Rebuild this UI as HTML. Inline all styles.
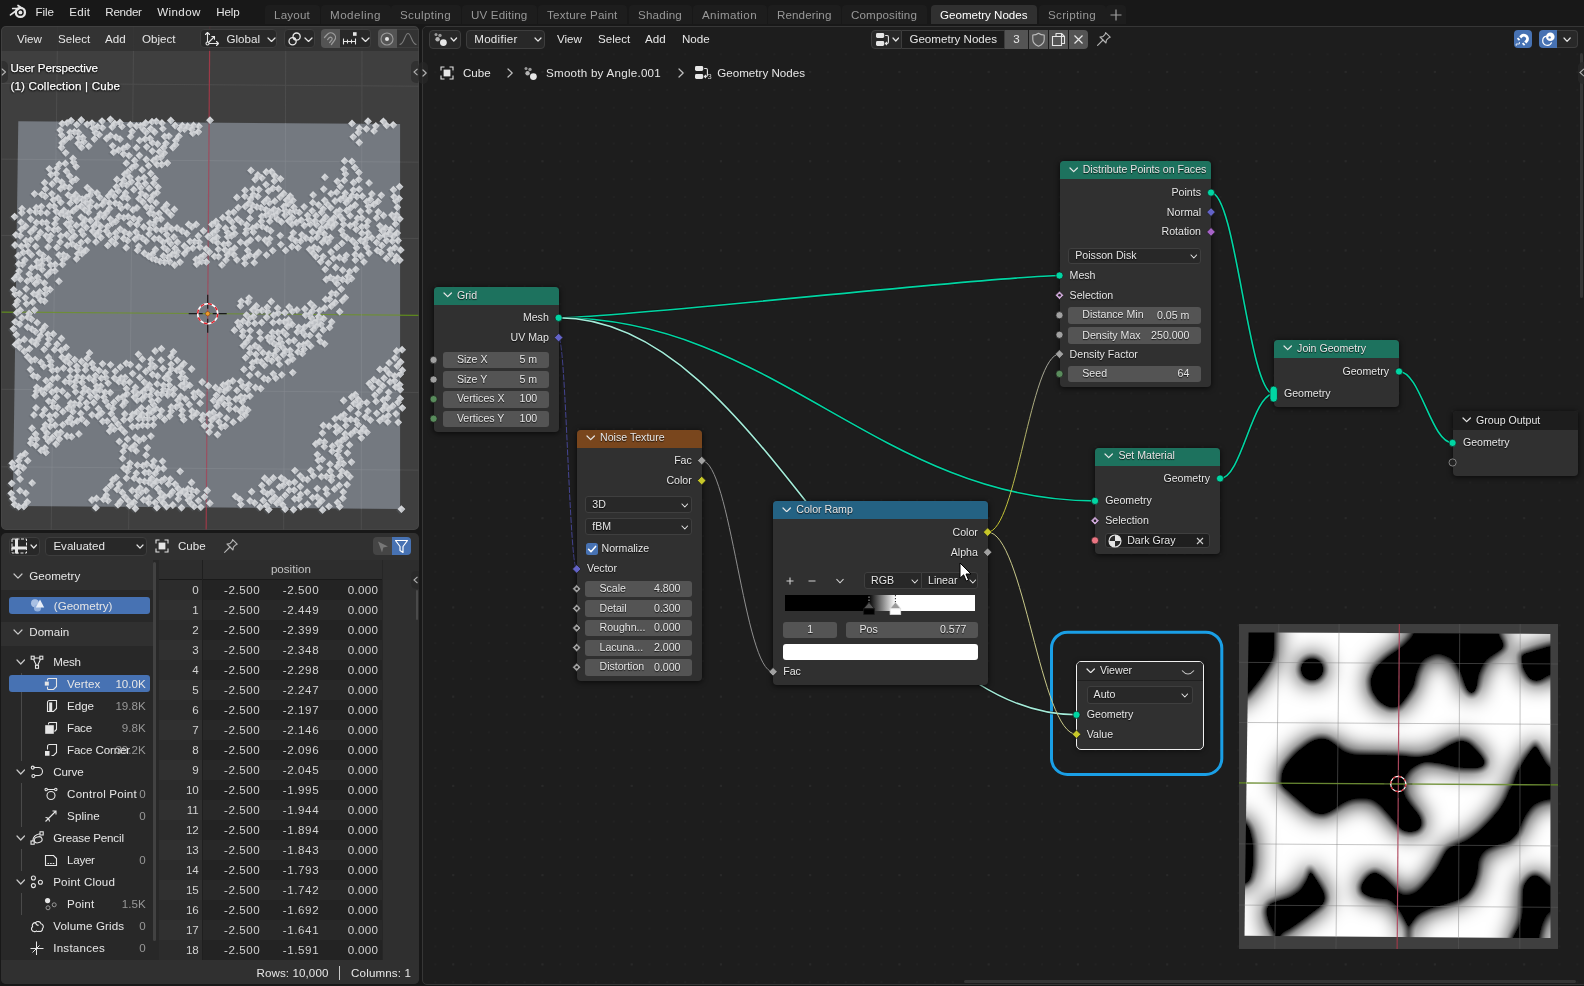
<!DOCTYPE html>
<html><head><meta charset="utf-8"><title>Blender</title>
<style>
html,body{margin:0;padding:0;background:#181818;overflow:hidden}
body{width:1584px;height:986px;position:relative;will-change:transform;font-family:"Liberation Sans",sans-serif;font-size:11.6px;color:#e6e6e6}
div,svg,span{position:absolute;box-sizing:border-box}
.t{white-space:nowrap;line-height:14px;height:14px}
.n{font-size:10.6px}
.sh{text-shadow:0 1px 1px rgba(0,0,0,.8)}
.ov{text-shadow:0 0 2px #000,0 1px 2px #000;-webkit-text-stroke:.25px #fff}
.area{overflow:hidden;border-radius:5px}
.btn{background:#282828;border:1px solid #3d3d3d;border-radius:4px}
.node{background:#303030;border-radius:4px;box-shadow:0 1px 5px 1px rgba(0,0,0,.55)}
.nh{left:0;top:0;right:0;height:18px;border-radius:4px 4px 0 0}
.fld{background:#545454;border-radius:3px}
.dd{background:#282828;border:1px solid #3f3f3f;border-radius:3px}
</style></head><body>
<svg style="left:8px;top:3px" width="20" height="17" viewBox="8 3 20 17">
<path d="M10.5 14.9L18.8 8.8M12.7 8.5H19.6M18 5.5L22 8.3" fill="none" stroke="#e6e6e6" stroke-width="1.7" stroke-linecap="round"/>
<circle cx="20.4" cy="12.4" r="4.55" fill="none" stroke="#e6e6e6" stroke-width="2.3"/>
<circle cx="20.4" cy="12.4" r="1.9" fill="#e6e6e6"/></svg>
<div class="t " style="top:4.8px;left:35.5px;letter-spacing:-0.05px;">File</div>
<div class="t " style="top:4.8px;left:69.3px;letter-spacing:0.20px;">Edit</div>
<div class="t " style="top:4.8px;left:105.3px;letter-spacing:-0.27px;">Render</div>
<div class="t " style="top:4.8px;left:157.2px;letter-spacing:0.39px;">Window</div>
<div class="t " style="top:4.8px;left:216.3px;letter-spacing:-0.16px;">Help</div>
<div style="left:264.5px;top:5px;width:55.0px;height:19px;background:#1d1d1d;border-radius:4px 4px 0 0"></div>
<div class="t " style="top:7.8px;left:274.0px;color:#989898;letter-spacing:0.20px;">Layout</div>
<div style="left:320.5px;top:5px;width:70.0px;height:19px;background:#1d1d1d;border-radius:4px 4px 0 0"></div>
<div class="t " style="top:7.8px;left:330.0px;color:#989898;letter-spacing:0.49px;">Modeling</div>
<div style="left:390.5px;top:5px;width:70.0px;height:19px;background:#1d1d1d;border-radius:4px 4px 0 0"></div>
<div class="t " style="top:7.8px;left:400.0px;color:#989898;letter-spacing:0.36px;">Sculpting</div>
<div style="left:461.5px;top:5px;width:75.5px;height:19px;background:#1d1d1d;border-radius:4px 4px 0 0"></div>
<div class="t " style="top:7.8px;left:471.0px;color:#989898;letter-spacing:0.17px;">UV Editing</div>
<div style="left:537.5px;top:5px;width:89.5px;height:19px;background:#1d1d1d;border-radius:4px 4px 0 0"></div>
<div class="t " style="top:7.8px;left:547.0px;color:#989898;letter-spacing:0.22px;">Texture Paint</div>
<div style="left:628.5px;top:5px;width:63.0px;height:19px;background:#1d1d1d;border-radius:4px 4px 0 0"></div>
<div class="t " style="top:7.8px;left:638.0px;color:#989898;letter-spacing:0.20px;">Shading</div>
<div style="left:692.5px;top:5px;width:74.0px;height:19px;background:#1d1d1d;border-radius:4px 4px 0 0"></div>
<div class="t " style="top:7.8px;left:702.0px;color:#989898;letter-spacing:0.38px;">Animation</div>
<div style="left:767.5px;top:5px;width:73.5px;height:19px;background:#1d1d1d;border-radius:4px 4px 0 0"></div>
<div class="t " style="top:7.8px;left:777.0px;color:#989898;letter-spacing:0.11px;">Rendering</div>
<div style="left:841.5px;top:5px;width:85.0px;height:19px;background:#1d1d1d;border-radius:4px 4px 0 0"></div>
<div class="t " style="top:7.8px;left:851.0px;color:#989898;letter-spacing:0.14px;">Compositing</div>
<div style="left:930.5px;top:5px;width:106.5px;height:19px;background:#303030;border-radius:4px 4px 0 0"></div>
<div class="t " style="top:7.8px;left:940.0px;color:#ffffff;letter-spacing:-0.01px;">Geometry Nodes</div>
<div style="left:1038.5px;top:5px;width:67.0px;height:19px;background:#1d1d1d;border-radius:4px 4px 0 0"></div>
<div class="t " style="top:7.8px;left:1048.0px;color:#989898;letter-spacing:0.32px;">Scripting</div>
<div style="left:1106px;top:5px;width:20px;height:19px;background:#1d1d1d;border-radius:4px 4px 0 0"></div>
<svg style="left:1109px;top:8px" width="14" height="14"><path d="M7 1.5V12.5M1.5 7H12.5" stroke="#a0a0a0" stroke-width="1.2" fill="none"/></svg>
<div class="area" style="left:1px;top:26px;width:418px;height:504px;background:#3f3f3f">
<svg style="left:0;top:0" width="418" height="504" viewBox="1 26 418 504"><line x1="-91.9" y1="-105.0" x2="-106.1" y2="661.9" stroke="#4d4d4d" stroke-width="1" opacity="1"/><line x1="-207.8" y1="6.5" x2="628.5" y2="12.2" stroke="#4d4d4d" stroke-width="1" opacity="1"/><line x1="-16.3" y1="-104.5" x2="-28.4" y2="662.5" stroke="#4d4d4d" stroke-width="1" opacity="1"/><line x1="-209.5" y1="81.8" x2="629.1" y2="87.7" stroke="#4d4d4d" stroke-width="1" opacity="1"/><line x1="59.3" y1="-104.0" x2="49.5" y2="663.2" stroke="#4d4d4d" stroke-width="1" opacity="1"/><line x1="-211.3" y1="157.6" x2="629.8" y2="163.7" stroke="#4d4d4d" stroke-width="1" opacity="1"/><line x1="135.0" y1="-103.5" x2="127.3" y2="663.8" stroke="#4d4d4d" stroke-width="1" opacity="1"/><line x1="-213.0" y1="233.8" x2="630.4" y2="240.0" stroke="#4d4d4d" stroke-width="1" opacity="1"/><line x1="286.4" y1="-102.5" x2="283.1" y2="665.1" stroke="#4d4d4d" stroke-width="1" opacity="1"/><line x1="-216.5" y1="387.6" x2="631.7" y2="394.1" stroke="#4d4d4d" stroke-width="1" opacity="1"/><line x1="362.2" y1="-102.0" x2="361.1" y2="665.8" stroke="#4d4d4d" stroke-width="1" opacity="1"/><line x1="-218.3" y1="465.1" x2="632.4" y2="471.8" stroke="#4d4d4d" stroke-width="1" opacity="1"/><line x1="437.9" y1="-101.5" x2="439.0" y2="666.5" stroke="#4d4d4d" stroke-width="1" opacity="1"/><line x1="-220.1" y1="543.1" x2="633.1" y2="550.0" stroke="#4d4d4d" stroke-width="1" opacity="1"/><line x1="513.7" y1="-101.0" x2="517.0" y2="667.1" stroke="#4d4d4d" stroke-width="1" opacity="1"/><line x1="-221.9" y1="621.5" x2="633.8" y2="628.6" stroke="#4d4d4d" stroke-width="1" opacity="1"/><line x1="210.7" y1="-103.0" x2="205.2" y2="664.5" stroke="#9c3a48" stroke-width="1.2" opacity="1"/><line x1="-214.8" y1="310.5" x2="631.1" y2="316.9" stroke="#5f8a1e" stroke-width="1.2" opacity="1"/><polygon points="18.3,121.3 400.1,124.0 400.1,509.0 12.8,505.9" fill="#747980"/><line x1="56.4" y1="121.6" x2="51.5" y2="506.2" stroke="#8a8e94" stroke-width="1" opacity="0.45"/><line x1="17.8" y1="159.3" x2="400.1" y2="162.0" stroke="#8a8e94" stroke-width="1" opacity="0.45"/><line x1="132.8" y1="122.1" x2="128.9" y2="506.8" stroke="#8a8e94" stroke-width="1" opacity="0.45"/><line x1="16.7" y1="235.5" x2="400.1" y2="238.3" stroke="#8a8e94" stroke-width="1" opacity="0.45"/><line x1="209.1" y1="122.6" x2="206.3" y2="507.4" stroke="#a04a5c" stroke-width="1.2" opacity="0.9"/><line x1="15.6" y1="312.2" x2="400.1" y2="315.1" stroke="#6e8f35" stroke-width="1.2" opacity="0.95"/><line x1="285.5" y1="123.2" x2="283.8" y2="508.1" stroke="#8a8e94" stroke-width="1" opacity="0.45"/><line x1="14.5" y1="389.4" x2="400.1" y2="392.3" stroke="#8a8e94" stroke-width="1" opacity="0.45"/><line x1="361.8" y1="123.7" x2="361.3" y2="508.7" stroke="#8a8e94" stroke-width="1" opacity="0.45"/><line x1="13.4" y1="466.9" x2="400.1" y2="470.0" stroke="#8a8e94" stroke-width="1" opacity="0.45"/><path d="M108.9 116.6l3.9 3.9l-3.9 3.9l-3.9 -3.9zM381.9 118.6l3.9 3.9l-3.9 3.9l-3.9 -3.9zM366.5 118.5l3.9 3.9l-3.9 3.9l-3.9 -3.9zM208.5 117.5l3.9 3.9l-3.9 3.9l-3.9 -3.9zM169.3 117.7l3.9 3.9l-3.9 3.9l-3.9 -3.9zM79.8 117.3l3.9 3.9l-3.9 3.9l-3.9 -3.9zM69.6 117.9l3.9 3.9l-3.9 3.9l-3.9 -3.9zM154.8 118.6l3.9 3.9l-3.9 3.9l-3.9 -3.9zM100.5 118.4l3.9 3.9l-3.9 3.9l-3.9 -3.9zM150.5 119.0l3.9 3.9l-3.9 3.9l-3.9 -3.9zM350.5 120.7l3.9 3.9l-3.9 3.9l-3.9 -3.9zM118.4 119.8l3.9 3.9l-3.9 3.9l-3.9 -3.9zM160.4 120.2l3.9 3.9l-3.9 3.9l-3.9 -3.9zM144.1 120.3l3.9 3.9l-3.9 3.9l-3.9 -3.9zM391.7 122.1l3.9 3.9l-3.9 3.9l-3.9 -3.9zM65.6 120.1l3.9 3.9l-3.9 3.9l-3.9 -3.9zM90.5 120.4l3.9 3.9l-3.9 3.9l-3.9 -3.9zM385.1 122.6l3.9 3.9l-3.9 3.9l-3.9 -3.9zM113.2 120.8l3.9 3.9l-3.9 3.9l-3.9 -3.9zM374.3 123.1l3.9 3.9l-3.9 3.9l-3.9 -3.9zM60.7 120.9l3.9 3.9l-3.9 3.9l-3.9 -3.9zM85.7 121.6l3.9 3.9l-3.9 3.9l-3.9 -3.9zM128.8 122.0l3.9 3.9l-3.9 3.9l-3.9 -3.9zM192.0 122.7l3.9 3.9l-3.9 3.9l-3.9 -3.9zM75.3 122.0l3.9 3.9l-3.9 3.9l-3.9 -3.9zM180.8 122.9l3.9 3.9l-3.9 3.9l-3.9 -3.9zM173.6 122.8l3.9 3.9l-3.9 3.9l-3.9 -3.9zM186.1 123.4l3.9 3.9l-3.9 3.9l-3.9 -3.9zM197.4 123.5l3.9 3.9l-3.9 3.9l-3.9 -3.9zM135.0 123.3l3.9 3.9l-3.9 3.9l-3.9 -3.9zM139.2 123.3l3.9 3.9l-3.9 3.9l-3.9 -3.9zM120.4 123.7l3.9 3.9l-3.9 3.9l-3.9 -3.9zM357.8 125.5l3.9 3.9l-3.9 3.9l-3.9 -3.9zM96.1 123.9l3.9 3.9l-3.9 3.9l-3.9 -3.9zM110.6 124.3l3.9 3.9l-3.9 3.9l-3.9 -3.9zM364.9 126.1l3.9 3.9l-3.9 3.9l-3.9 -3.9zM100.9 124.9l3.9 3.9l-3.9 3.9l-3.9 -3.9zM161.3 126.0l3.9 3.9l-3.9 3.9l-3.9 -3.9zM149.1 125.9l3.9 3.9l-3.9 3.9l-3.9 -3.9zM91.7 125.5l3.9 3.9l-3.9 3.9l-3.9 -3.9zM178.8 126.3l3.9 3.9l-3.9 3.9l-3.9 -3.9zM190.1 126.5l3.9 3.9l-3.9 3.9l-3.9 -3.9zM183.0 126.5l3.9 3.9l-3.9 3.9l-3.9 -3.9zM372.5 128.2l3.9 3.9l-3.9 3.9l-3.9 -3.9zM141.9 126.9l3.9 3.9l-3.9 3.9l-3.9 -3.9zM58.7 127.4l3.9 3.9l-3.9 3.9l-3.9 -3.9zM356.9 129.8l3.9 3.9l-3.9 3.9l-3.9 -3.9zM196.8 129.1l3.9 3.9l-3.9 3.9l-3.9 -3.9zM130.6 128.8l3.9 3.9l-3.9 3.9l-3.9 -3.9zM153.1 129.3l3.9 3.9l-3.9 3.9l-3.9 -3.9zM72.9 129.1l3.9 3.9l-3.9 3.9l-3.9 -3.9zM144.6 129.6l3.9 3.9l-3.9 3.9l-3.9 -3.9zM93.8 129.8l3.9 3.9l-3.9 3.9l-3.9 -3.9zM68.5 129.6l3.9 3.9l-3.9 3.9l-3.9 -3.9zM191.3 130.5l3.9 3.9l-3.9 3.9l-3.9 -3.9zM76.9 129.8l3.9 3.9l-3.9 3.9l-3.9 -3.9zM97.6 132.0l3.9 3.9l-3.9 3.9l-3.9 -3.9zM351.7 134.1l3.9 3.9l-3.9 3.9l-3.9 -3.9zM60.0 132.4l3.9 3.9l-3.9 3.9l-3.9 -3.9zM108.9 132.9l3.9 3.9l-3.9 3.9l-3.9 -3.9zM167.4 133.4l3.9 3.9l-3.9 3.9l-3.9 -3.9zM177.4 133.5l3.9 3.9l-3.9 3.9l-3.9 -3.9zM163.1 133.8l3.9 3.9l-3.9 3.9l-3.9 -3.9zM129.0 133.7l3.9 3.9l-3.9 3.9l-3.9 -3.9zM114.5 134.4l3.9 3.9l-3.9 3.9l-3.9 -3.9zM68.7 134.2l3.9 3.9l-3.9 3.9l-3.9 -3.9zM81.3 134.8l3.9 3.9l-3.9 3.9l-3.9 -3.9zM77.3 135.1l3.9 3.9l-3.9 3.9l-3.9 -3.9zM148.5 135.7l3.9 3.9l-3.9 3.9l-3.9 -3.9zM105.1 135.8l3.9 3.9l-3.9 3.9l-3.9 -3.9zM143.6 136.4l3.9 3.9l-3.9 3.9l-3.9 -3.9zM118.5 136.4l3.9 3.9l-3.9 3.9l-3.9 -3.9zM92.9 136.3l3.9 3.9l-3.9 3.9l-3.9 -3.9zM174.2 137.8l3.9 3.9l-3.9 3.9l-3.9 -3.9zM138.1 137.7l3.9 3.9l-3.9 3.9l-3.9 -3.9zM63.9 137.2l3.9 3.9l-3.9 3.9l-3.9 -3.9zM357.7 139.8l3.9 3.9l-3.9 3.9l-3.9 -3.9zM82.4 139.0l3.9 3.9l-3.9 3.9l-3.9 -3.9zM150.9 140.0l3.9 3.9l-3.9 3.9l-3.9 -3.9zM164.4 140.6l3.9 3.9l-3.9 3.9l-3.9 -3.9zM60.6 140.3l3.9 3.9l-3.9 3.9l-3.9 -3.9zM156.1 141.3l3.9 3.9l-3.9 3.9l-3.9 -3.9zM76.6 140.8l3.9 3.9l-3.9 3.9l-3.9 -3.9zM174.1 142.0l3.9 3.9l-3.9 3.9l-3.9 -3.9zM111.0 143.1l3.9 3.9l-3.9 3.9l-3.9 -3.9zM125.8 143.6l3.9 3.9l-3.9 3.9l-3.9 -3.9zM87.2 143.4l3.9 3.9l-3.9 3.9l-3.9 -3.9zM145.2 144.1l3.9 3.9l-3.9 3.9l-3.9 -3.9zM171.4 144.8l3.9 3.9l-3.9 3.9l-3.9 -3.9zM162.1 144.8l3.9 3.9l-3.9 3.9l-3.9 -3.9zM135.0 145.0l3.9 3.9l-3.9 3.9l-3.9 -3.9zM79.9 144.7l3.9 3.9l-3.9 3.9l-3.9 -3.9zM60.0 144.8l3.9 3.9l-3.9 3.9l-3.9 -3.9zM121.9 145.7l3.9 3.9l-3.9 3.9l-3.9 -3.9zM117.1 147.3l3.9 3.9l-3.9 3.9l-3.9 -3.9zM150.8 148.4l3.9 3.9l-3.9 3.9l-3.9 -3.9zM157.9 149.0l3.9 3.9l-3.9 3.9l-3.9 -3.9zM112.1 149.5l3.9 3.9l-3.9 3.9l-3.9 -3.9zM162.7 150.3l3.9 3.9l-3.9 3.9l-3.9 -3.9zM64.2 150.1l3.9 3.9l-3.9 3.9l-3.9 -3.9zM122.0 151.3l3.9 3.9l-3.9 3.9l-3.9 -3.9zM137.9 152.8l3.9 3.9l-3.9 3.9l-3.9 -3.9zM127.5 152.9l3.9 3.9l-3.9 3.9l-3.9 -3.9zM159.2 154.7l3.9 3.9l-3.9 3.9l-3.9 -3.9zM155.4 155.4l3.9 3.9l-3.9 3.9l-3.9 -3.9zM71.5 155.7l3.9 3.9l-3.9 3.9l-3.9 -3.9zM144.7 156.8l3.9 3.9l-3.9 3.9l-3.9 -3.9zM343.1 158.2l3.9 3.9l-3.9 3.9l-3.9 -3.9zM350.4 158.7l3.9 3.9l-3.9 3.9l-3.9 -3.9zM152.0 157.7l3.9 3.9l-3.9 3.9l-3.9 -3.9zM133.2 157.7l3.9 3.9l-3.9 3.9l-3.9 -3.9zM72.1 159.5l3.9 3.9l-3.9 3.9l-3.9 -3.9zM165.8 160.3l3.9 3.9l-3.9 3.9l-3.9 -3.9zM124.8 160.5l3.9 3.9l-3.9 3.9l-3.9 -3.9zM63.8 160.7l3.9 3.9l-3.9 3.9l-3.9 -3.9zM160.2 161.8l3.9 3.9l-3.9 3.9l-3.9 -3.9zM155.6 161.9l3.9 3.9l-3.9 3.9l-3.9 -3.9zM57.7 161.6l3.9 3.9l-3.9 3.9l-3.9 -3.9zM134.0 162.8l3.9 3.9l-3.9 3.9l-3.9 -3.9zM147.1 163.0l3.9 3.9l-3.9 3.9l-3.9 -3.9zM353.3 164.7l3.9 3.9l-3.9 3.9l-3.9 -3.9zM74.6 163.9l3.9 3.9l-3.9 3.9l-3.9 -3.9zM130.5 165.0l3.9 3.9l-3.9 3.9l-3.9 -3.9zM342.5 166.6l3.9 3.9l-3.9 3.9l-3.9 -3.9zM55.6 165.5l3.9 3.9l-3.9 3.9l-3.9 -3.9zM47.8 166.1l3.9 3.9l-3.9 3.9l-3.9 -3.9zM249.5 167.7l3.9 3.9l-3.9 3.9l-3.9 -3.9zM140.6 167.2l3.9 3.9l-3.9 3.9l-3.9 -3.9zM270.0 168.9l3.9 3.9l-3.9 3.9l-3.9 -3.9zM357.3 169.7l3.9 3.9l-3.9 3.9l-3.9 -3.9zM264.7 169.3l3.9 3.9l-3.9 3.9l-3.9 -3.9zM64.9 168.5l3.9 3.9l-3.9 3.9l-3.9 -3.9zM126.3 169.2l3.9 3.9l-3.9 3.9l-3.9 -3.9zM343.9 171.2l3.9 3.9l-3.9 3.9l-3.9 -3.9zM149.2 170.8l3.9 3.9l-3.9 3.9l-3.9 -3.9zM256.3 172.2l3.9 3.9l-3.9 3.9l-3.9 -3.9zM123.2 171.5l3.9 3.9l-3.9 3.9l-3.9 -3.9zM54.7 171.0l3.9 3.9l-3.9 3.9l-3.9 -3.9zM273.4 173.3l3.9 3.9l-3.9 3.9l-3.9 -3.9zM49.5 171.8l3.9 3.9l-3.9 3.9l-3.9 -3.9zM323.4 174.5l3.9 3.9l-3.9 3.9l-3.9 -3.9zM68.1 173.3l3.9 3.9l-3.9 3.9l-3.9 -3.9zM260.4 175.1l3.9 3.9l-3.9 3.9l-3.9 -3.9zM128.3 174.4l3.9 3.9l-3.9 3.9l-3.9 -3.9zM142.6 175.0l3.9 3.9l-3.9 3.9l-3.9 -3.9zM279.0 176.1l3.9 3.9l-3.9 3.9l-3.9 -3.9zM357.3 176.9l3.9 3.9l-3.9 3.9l-3.9 -3.9zM153.4 175.8l3.9 3.9l-3.9 3.9l-3.9 -3.9zM253.6 176.8l3.9 3.9l-3.9 3.9l-3.9 -3.9zM342.8 177.7l3.9 3.9l-3.9 3.9l-3.9 -3.9zM137.0 176.4l3.9 3.9l-3.9 3.9l-3.9 -3.9zM115.4 176.8l3.9 3.9l-3.9 3.9l-3.9 -3.9zM74.5 176.6l3.9 3.9l-3.9 3.9l-3.9 -3.9zM335.7 178.6l3.9 3.9l-3.9 3.9l-3.9 -3.9zM54.9 176.8l3.9 3.9l-3.9 3.9l-3.9 -3.9zM272.8 178.4l3.9 3.9l-3.9 3.9l-3.9 -3.9zM121.9 177.6l3.9 3.9l-3.9 3.9l-3.9 -3.9zM352.0 179.8l3.9 3.9l-3.9 3.9l-3.9 -3.9zM367.5 180.2l3.9 3.9l-3.9 3.9l-3.9 -3.9zM129.8 178.9l3.9 3.9l-3.9 3.9l-3.9 -3.9zM70.8 178.6l3.9 3.9l-3.9 3.9l-3.9 -3.9zM60.2 179.4l3.9 3.9l-3.9 3.9l-3.9 -3.9zM152.2 180.4l3.9 3.9l-3.9 3.9l-3.9 -3.9zM43.1 180.0l3.9 3.9l-3.9 3.9l-3.9 -3.9zM143.8 180.8l3.9 3.9l-3.9 3.9l-3.9 -3.9zM264.5 181.9l3.9 3.9l-3.9 3.9l-3.9 -3.9zM136.5 181.5l3.9 3.9l-3.9 3.9l-3.9 -3.9zM120.7 181.6l3.9 3.9l-3.9 3.9l-3.9 -3.9zM50.6 181.3l3.9 3.9l-3.9 3.9l-3.9 -3.9zM398.0 184.0l3.9 3.9l-3.9 3.9l-3.9 -3.9zM338.8 183.9l3.9 3.9l-3.9 3.9l-3.9 -3.9zM125.3 182.4l3.9 3.9l-3.9 3.9l-3.9 -3.9zM114.8 184.1l3.9 3.9l-3.9 3.9l-3.9 -3.9zM63.1 183.8l3.9 3.9l-3.9 3.9l-3.9 -3.9zM156.4 184.5l3.9 3.9l-3.9 3.9l-3.9 -3.9zM271.4 185.6l3.9 3.9l-3.9 3.9l-3.9 -3.9zM357.7 186.5l3.9 3.9l-3.9 3.9l-3.9 -3.9zM276.9 185.9l3.9 3.9l-3.9 3.9l-3.9 -3.9zM322.2 186.4l3.9 3.9l-3.9 3.9l-3.9 -3.9zM139.3 185.1l3.9 3.9l-3.9 3.9l-3.9 -3.9zM67.7 184.7l3.9 3.9l-3.9 3.9l-3.9 -3.9zM391.9 187.0l3.9 3.9l-3.9 3.9l-3.9 -3.9zM85.8 184.9l3.9 3.9l-3.9 3.9l-3.9 -3.9zM251.5 186.4l3.9 3.9l-3.9 3.9l-3.9 -3.9zM147.7 185.7l3.9 3.9l-3.9 3.9l-3.9 -3.9zM351.8 187.4l3.9 3.9l-3.9 3.9l-3.9 -3.9zM257.4 186.8l3.9 3.9l-3.9 3.9l-3.9 -3.9zM59.0 186.0l3.9 3.9l-3.9 3.9l-3.9 -3.9zM43.9 186.2l3.9 3.9l-3.9 3.9l-3.9 -3.9zM243.5 187.7l3.9 3.9l-3.9 3.9l-3.9 -3.9zM132.3 187.0l3.9 3.9l-3.9 3.9l-3.9 -3.9zM267.0 188.4l3.9 3.9l-3.9 3.9l-3.9 -3.9zM335.2 189.5l3.9 3.9l-3.9 3.9l-3.9 -3.9zM116.8 188.2l3.9 3.9l-3.9 3.9l-3.9 -3.9zM89.7 188.6l3.9 3.9l-3.9 3.9l-3.9 -3.9zM343.7 190.5l3.9 3.9l-3.9 3.9l-3.9 -3.9zM329.5 191.0l3.9 3.9l-3.9 3.9l-3.9 -3.9zM370.3 191.3l3.9 3.9l-3.9 3.9l-3.9 -3.9zM282.2 190.7l3.9 3.9l-3.9 3.9l-3.9 -3.9zM110.1 189.5l3.9 3.9l-3.9 3.9l-3.9 -3.9zM155.5 190.0l3.9 3.9l-3.9 3.9l-3.9 -3.9zM124.0 190.2l3.9 3.9l-3.9 3.9l-3.9 -3.9zM139.7 190.4l3.9 3.9l-3.9 3.9l-3.9 -3.9zM95.5 190.3l3.9 3.9l-3.9 3.9l-3.9 -3.9zM379.8 192.6l3.9 3.9l-3.9 3.9l-3.9 -3.9zM311.6 192.2l3.9 3.9l-3.9 3.9l-3.9 -3.9zM251.7 191.9l3.9 3.9l-3.9 3.9l-3.9 -3.9zM350.6 192.9l3.9 3.9l-3.9 3.9l-3.9 -3.9zM50.3 191.1l3.9 3.9l-3.9 3.9l-3.9 -3.9zM33.0 191.1l3.9 3.9l-3.9 3.9l-3.9 -3.9zM360.8 193.5l3.9 3.9l-3.9 3.9l-3.9 -3.9zM74.2 191.7l3.9 3.9l-3.9 3.9l-3.9 -3.9zM392.5 194.0l3.9 3.9l-3.9 3.9l-3.9 -3.9zM151.9 192.3l3.9 3.9l-3.9 3.9l-3.9 -3.9zM355.3 193.8l3.9 3.9l-3.9 3.9l-3.9 -3.9zM288.6 193.4l3.9 3.9l-3.9 3.9l-3.9 -3.9zM40.3 191.6l3.9 3.9l-3.9 3.9l-3.9 -3.9zM66.7 192.2l3.9 3.9l-3.9 3.9l-3.9 -3.9zM243.3 193.5l3.9 3.9l-3.9 3.9l-3.9 -3.9zM88.6 192.4l3.9 3.9l-3.9 3.9l-3.9 -3.9zM256.3 193.7l3.9 3.9l-3.9 3.9l-3.9 -3.9zM144.4 193.1l3.9 3.9l-3.9 3.9l-3.9 -3.9zM342.4 194.6l3.9 3.9l-3.9 3.9l-3.9 -3.9zM278.5 194.4l3.9 3.9l-3.9 3.9l-3.9 -3.9zM107.0 193.2l3.9 3.9l-3.9 3.9l-3.9 -3.9zM112.7 193.4l3.9 3.9l-3.9 3.9l-3.9 -3.9zM397.5 195.8l3.9 3.9l-3.9 3.9l-3.9 -3.9zM235.3 194.7l3.9 3.9l-3.9 3.9l-3.9 -3.9zM43.7 193.6l3.9 3.9l-3.9 3.9l-3.9 -3.9zM121.3 194.7l3.9 3.9l-3.9 3.9l-3.9 -3.9zM98.2 194.6l3.9 3.9l-3.9 3.9l-3.9 -3.9zM76.8 194.6l3.9 3.9l-3.9 3.9l-3.9 -3.9zM84.8 194.8l3.9 3.9l-3.9 3.9l-3.9 -3.9zM368.8 196.9l3.9 3.9l-3.9 3.9l-3.9 -3.9zM338.9 196.7l3.9 3.9l-3.9 3.9l-3.9 -3.9zM347.6 196.9l3.9 3.9l-3.9 3.9l-3.9 -3.9zM70.4 195.0l3.9 3.9l-3.9 3.9l-3.9 -3.9zM265.7 196.5l3.9 3.9l-3.9 3.9l-3.9 -3.9zM249.0 196.4l3.9 3.9l-3.9 3.9l-3.9 -3.9zM125.9 195.5l3.9 3.9l-3.9 3.9l-3.9 -3.9zM56.4 195.2l3.9 3.9l-3.9 3.9l-3.9 -3.9zM137.4 196.0l3.9 3.9l-3.9 3.9l-3.9 -3.9zM323.1 197.6l3.9 3.9l-3.9 3.9l-3.9 -3.9zM394.3 198.1l3.9 3.9l-3.9 3.9l-3.9 -3.9zM285.0 197.4l3.9 3.9l-3.9 3.9l-3.9 -3.9zM291.4 197.6l3.9 3.9l-3.9 3.9l-3.9 -3.9zM80.7 196.4l3.9 3.9l-3.9 3.9l-3.9 -3.9zM333.5 198.3l3.9 3.9l-3.9 3.9l-3.9 -3.9zM376.5 198.7l3.9 3.9l-3.9 3.9l-3.9 -3.9zM148.9 197.3l3.9 3.9l-3.9 3.9l-3.9 -3.9zM365.3 198.9l3.9 3.9l-3.9 3.9l-3.9 -3.9zM273.3 198.5l3.9 3.9l-3.9 3.9l-3.9 -3.9zM51.8 197.1l3.9 3.9l-3.9 3.9l-3.9 -3.9zM262.8 199.3l3.9 3.9l-3.9 3.9l-3.9 -3.9zM103.1 198.2l3.9 3.9l-3.9 3.9l-3.9 -3.9zM344.7 200.0l3.9 3.9l-3.9 3.9l-3.9 -3.9zM75.0 198.2l3.9 3.9l-3.9 3.9l-3.9 -3.9zM311.2 200.0l3.9 3.9l-3.9 3.9l-3.9 -3.9zM267.7 200.1l3.9 3.9l-3.9 3.9l-3.9 -3.9zM141.4 199.3l3.9 3.9l-3.9 3.9l-3.9 -3.9zM89.4 199.2l3.9 3.9l-3.9 3.9l-3.9 -3.9zM325.6 201.2l3.9 3.9l-3.9 3.9l-3.9 -3.9zM287.0 200.9l3.9 3.9l-3.9 3.9l-3.9 -3.9zM247.1 200.7l3.9 3.9l-3.9 3.9l-3.9 -3.9zM154.5 200.1l3.9 3.9l-3.9 3.9l-3.9 -3.9zM372.4 201.7l3.9 3.9l-3.9 3.9l-3.9 -3.9zM59.3 199.6l3.9 3.9l-3.9 3.9l-3.9 -3.9zM84.8 200.0l3.9 3.9l-3.9 3.9l-3.9 -3.9zM108.0 200.3l3.9 3.9l-3.9 3.9l-3.9 -3.9zM113.9 200.5l3.9 3.9l-3.9 3.9l-3.9 -3.9zM353.7 202.3l3.9 3.9l-3.9 3.9l-3.9 -3.9zM317.1 202.1l3.9 3.9l-3.9 3.9l-3.9 -3.9zM68.7 200.5l3.9 3.9l-3.9 3.9l-3.9 -3.9zM251.0 202.5l3.9 3.9l-3.9 3.9l-3.9 -3.9zM366.8 203.5l3.9 3.9l-3.9 3.9l-3.9 -3.9zM165.1 202.0l3.9 3.9l-3.9 3.9l-3.9 -3.9zM117.9 201.8l3.9 3.9l-3.9 3.9l-3.9 -3.9zM101.1 201.7l3.9 3.9l-3.9 3.9l-3.9 -3.9zM395.8 204.6l3.9 3.9l-3.9 3.9l-3.9 -3.9zM282.4 203.8l3.9 3.9l-3.9 3.9l-3.9 -3.9zM243.7 203.7l3.9 3.9l-3.9 3.9l-3.9 -3.9zM302.6 204.1l3.9 3.9l-3.9 3.9l-3.9 -3.9zM292.4 204.5l3.9 3.9l-3.9 3.9l-3.9 -3.9zM255.4 204.2l3.9 3.9l-3.9 3.9l-3.9 -3.9zM329.1 204.9l3.9 3.9l-3.9 3.9l-3.9 -3.9zM79.7 203.3l3.9 3.9l-3.9 3.9l-3.9 -3.9zM348.9 205.2l3.9 3.9l-3.9 3.9l-3.9 -3.9zM95.2 203.5l3.9 3.9l-3.9 3.9l-3.9 -3.9zM125.9 203.8l3.9 3.9l-3.9 3.9l-3.9 -3.9zM48.2 203.3l3.9 3.9l-3.9 3.9l-3.9 -3.9zM259.5 205.0l3.9 3.9l-3.9 3.9l-3.9 -3.9zM236.7 204.9l3.9 3.9l-3.9 3.9l-3.9 -3.9zM88.5 203.8l3.9 3.9l-3.9 3.9l-3.9 -3.9zM52.9 203.6l3.9 3.9l-3.9 3.9l-3.9 -3.9zM145.1 204.3l3.9 3.9l-3.9 3.9l-3.9 -3.9zM39.9 203.9l3.9 3.9l-3.9 3.9l-3.9 -3.9zM321.6 206.1l3.9 3.9l-3.9 3.9l-3.9 -3.9zM149.8 205.1l3.9 3.9l-3.9 3.9l-3.9 -3.9zM135.4 205.1l3.9 3.9l-3.9 3.9l-3.9 -3.9zM162.3 205.4l3.9 3.9l-3.9 3.9l-3.9 -3.9zM119.7 205.4l3.9 3.9l-3.9 3.9l-3.9 -3.9zM272.6 206.6l3.9 3.9l-3.9 3.9l-3.9 -3.9zM34.7 205.0l3.9 3.9l-3.9 3.9l-3.9 -3.9zM108.1 205.7l3.9 3.9l-3.9 3.9l-3.9 -3.9zM75.0 205.5l3.9 3.9l-3.9 3.9l-3.9 -3.9zM264.5 206.9l3.9 3.9l-3.9 3.9l-3.9 -3.9zM345.3 207.8l3.9 3.9l-3.9 3.9l-3.9 -3.9zM338.2 207.7l3.9 3.9l-3.9 3.9l-3.9 -3.9zM172.9 206.7l3.9 3.9l-3.9 3.9l-3.9 -3.9zM367.4 208.2l3.9 3.9l-3.9 3.9l-3.9 -3.9zM283.5 207.7l3.9 3.9l-3.9 3.9l-3.9 -3.9zM310.6 208.1l3.9 3.9l-3.9 3.9l-3.9 -3.9zM20.5 206.0l3.9 3.9l-3.9 3.9l-3.9 -3.9zM276.8 208.0l3.9 3.9l-3.9 3.9l-3.9 -3.9zM293.6 208.3l3.9 3.9l-3.9 3.9l-3.9 -3.9zM359.0 208.8l3.9 3.9l-3.9 3.9l-3.9 -3.9zM131.5 207.2l3.9 3.9l-3.9 3.9l-3.9 -3.9zM248.9 208.1l3.9 3.9l-3.9 3.9l-3.9 -3.9zM83.3 206.9l3.9 3.9l-3.9 3.9l-3.9 -3.9zM376.8 209.2l3.9 3.9l-3.9 3.9l-3.9 -3.9zM334.8 209.5l3.9 3.9l-3.9 3.9l-3.9 -3.9zM288.4 209.2l3.9 3.9l-3.9 3.9l-3.9 -3.9zM268.0 209.1l3.9 3.9l-3.9 3.9l-3.9 -3.9zM62.4 207.7l3.9 3.9l-3.9 3.9l-3.9 -3.9zM320.0 209.6l3.9 3.9l-3.9 3.9l-3.9 -3.9zM165.8 208.6l3.9 3.9l-3.9 3.9l-3.9 -3.9zM297.8 209.7l3.9 3.9l-3.9 3.9l-3.9 -3.9zM71.7 208.2l3.9 3.9l-3.9 3.9l-3.9 -3.9zM232.2 209.4l3.9 3.9l-3.9 3.9l-3.9 -3.9zM54.6 208.6l3.9 3.9l-3.9 3.9l-3.9 -3.9zM28.4 208.5l3.9 3.9l-3.9 3.9l-3.9 -3.9zM227.1 210.4l3.9 3.9l-3.9 3.9l-3.9 -3.9zM86.9 209.5l3.9 3.9l-3.9 3.9l-3.9 -3.9zM105.0 209.8l3.9 3.9l-3.9 3.9l-3.9 -3.9zM34.5 209.3l3.9 3.9l-3.9 3.9l-3.9 -3.9zM148.2 210.3l3.9 3.9l-3.9 3.9l-3.9 -3.9zM39.2 209.7l3.9 3.9l-3.9 3.9l-3.9 -3.9zM157.6 210.6l3.9 3.9l-3.9 3.9l-3.9 -3.9zM395.0 212.3l3.9 3.9l-3.9 3.9l-3.9 -3.9zM390.4 212.4l3.9 3.9l-3.9 3.9l-3.9 -3.9zM45.4 210.2l3.9 3.9l-3.9 3.9l-3.9 -3.9zM273.6 211.9l3.9 3.9l-3.9 3.9l-3.9 -3.9zM20.3 210.1l3.9 3.9l-3.9 3.9l-3.9 -3.9zM66.7 210.5l3.9 3.9l-3.9 3.9l-3.9 -3.9zM382.0 212.8l3.9 3.9l-3.9 3.9l-3.9 -3.9zM264.7 212.1l3.9 3.9l-3.9 3.9l-3.9 -3.9zM151.9 211.4l3.9 3.9l-3.9 3.9l-3.9 -3.9zM283.4 212.4l3.9 3.9l-3.9 3.9l-3.9 -3.9zM306.1 212.6l3.9 3.9l-3.9 3.9l-3.9 -3.9zM338.0 212.9l3.9 3.9l-3.9 3.9l-3.9 -3.9zM348.6 213.0l3.9 3.9l-3.9 3.9l-3.9 -3.9zM98.6 211.2l3.9 3.9l-3.9 3.9l-3.9 -3.9zM58.9 211.0l3.9 3.9l-3.9 3.9l-3.9 -3.9zM314.5 213.0l3.9 3.9l-3.9 3.9l-3.9 -3.9zM169.5 212.4l3.9 3.9l-3.9 3.9l-3.9 -3.9zM269.4 213.2l3.9 3.9l-3.9 3.9l-3.9 -3.9zM260.2 213.6l3.9 3.9l-3.9 3.9l-3.9 -3.9zM62.9 212.2l3.9 3.9l-3.9 3.9l-3.9 -3.9zM324.3 214.4l3.9 3.9l-3.9 3.9l-3.9 -3.9zM375.1 215.2l3.9 3.9l-3.9 3.9l-3.9 -3.9zM360.3 215.2l3.9 3.9l-3.9 3.9l-3.9 -3.9zM290.7 214.8l3.9 3.9l-3.9 3.9l-3.9 -3.9zM332.4 215.3l3.9 3.9l-3.9 3.9l-3.9 -3.9zM117.6 213.8l3.9 3.9l-3.9 3.9l-3.9 -3.9zM356.0 215.6l3.9 3.9l-3.9 3.9l-3.9 -3.9zM126.7 214.0l3.9 3.9l-3.9 3.9l-3.9 -3.9zM398.3 216.1l3.9 3.9l-3.9 3.9l-3.9 -3.9zM393.7 216.0l3.9 3.9l-3.9 3.9l-3.9 -3.9zM102.2 213.9l3.9 3.9l-3.9 3.9l-3.9 -3.9zM221.3 215.0l3.9 3.9l-3.9 3.9l-3.9 -3.9zM79.6 214.4l3.9 3.9l-3.9 3.9l-3.9 -3.9zM13.1 213.9l3.9 3.9l-3.9 3.9l-3.9 -3.9zM248.4 215.7l3.9 3.9l-3.9 3.9l-3.9 -3.9zM122.3 214.9l3.9 3.9l-3.9 3.9l-3.9 -3.9zM275.6 216.1l3.9 3.9l-3.9 3.9l-3.9 -3.9zM226.8 215.8l3.9 3.9l-3.9 3.9l-3.9 -3.9zM341.2 216.8l3.9 3.9l-3.9 3.9l-3.9 -3.9zM67.7 215.0l3.9 3.9l-3.9 3.9l-3.9 -3.9zM307.1 216.9l3.9 3.9l-3.9 3.9l-3.9 -3.9zM236.0 216.4l3.9 3.9l-3.9 3.9l-3.9 -3.9zM132.2 215.9l3.9 3.9l-3.9 3.9l-3.9 -3.9zM159.5 216.3l3.9 3.9l-3.9 3.9l-3.9 -3.9zM95.7 215.9l3.9 3.9l-3.9 3.9l-3.9 -3.9zM299.7 217.4l3.9 3.9l-3.9 3.9l-3.9 -3.9zM137.8 216.6l3.9 3.9l-3.9 3.9l-3.9 -3.9zM108.8 216.4l3.9 3.9l-3.9 3.9l-3.9 -3.9zM154.9 216.8l3.9 3.9l-3.9 3.9l-3.9 -3.9zM54.7 216.1l3.9 3.9l-3.9 3.9l-3.9 -3.9zM313.6 218.1l3.9 3.9l-3.9 3.9l-3.9 -3.9zM366.3 218.6l3.9 3.9l-3.9 3.9l-3.9 -3.9zM287.0 218.1l3.9 3.9l-3.9 3.9l-3.9 -3.9zM29.2 216.3l3.9 3.9l-3.9 3.9l-3.9 -3.9zM320.8 218.8l3.9 3.9l-3.9 3.9l-3.9 -3.9zM268.2 218.5l3.9 3.9l-3.9 3.9l-3.9 -3.9zM328.3 219.0l3.9 3.9l-3.9 3.9l-3.9 -3.9zM259.9 218.6l3.9 3.9l-3.9 3.9l-3.9 -3.9zM83.6 217.3l3.9 3.9l-3.9 3.9l-3.9 -3.9zM89.0 217.8l3.9 3.9l-3.9 3.9l-3.9 -3.9zM279.9 219.2l3.9 3.9l-3.9 3.9l-3.9 -3.9zM214.5 218.8l3.9 3.9l-3.9 3.9l-3.9 -3.9zM230.3 219.2l3.9 3.9l-3.9 3.9l-3.9 -3.9zM294.9 219.8l3.9 3.9l-3.9 3.9l-3.9 -3.9zM239.5 219.4l3.9 3.9l-3.9 3.9l-3.9 -3.9zM114.3 218.7l3.9 3.9l-3.9 3.9l-3.9 -3.9zM393.9 221.2l3.9 3.9l-3.9 3.9l-3.9 -3.9zM333.6 220.8l3.9 3.9l-3.9 3.9l-3.9 -3.9zM353.6 221.1l3.9 3.9l-3.9 3.9l-3.9 -3.9zM308.6 221.2l3.9 3.9l-3.9 3.9l-3.9 -3.9zM69.2 219.5l3.9 3.9l-3.9 3.9l-3.9 -3.9zM342.0 221.6l3.9 3.9l-3.9 3.9l-3.9 -3.9zM290.3 221.3l3.9 3.9l-3.9 3.9l-3.9 -3.9zM148.3 220.4l3.9 3.9l-3.9 3.9l-3.9 -3.9zM19.5 219.5l3.9 3.9l-3.9 3.9l-3.9 -3.9zM40.6 219.8l3.9 3.9l-3.9 3.9l-3.9 -3.9zM314.9 221.9l3.9 3.9l-3.9 3.9l-3.9 -3.9zM95.5 220.3l3.9 3.9l-3.9 3.9l-3.9 -3.9zM34.9 219.9l3.9 3.9l-3.9 3.9l-3.9 -3.9zM45.0 220.0l3.9 3.9l-3.9 3.9l-3.9 -3.9zM110.7 220.5l3.9 3.9l-3.9 3.9l-3.9 -3.9zM128.6 220.9l3.9 3.9l-3.9 3.9l-3.9 -3.9zM245.2 222.0l3.9 3.9l-3.9 3.9l-3.9 -3.9zM210.5 221.7l3.9 3.9l-3.9 3.9l-3.9 -3.9zM194.7 221.7l3.9 3.9l-3.9 3.9l-3.9 -3.9zM152.2 221.4l3.9 3.9l-3.9 3.9l-3.9 -3.9zM378.3 223.1l3.9 3.9l-3.9 3.9l-3.9 -3.9zM348.6 222.9l3.9 3.9l-3.9 3.9l-3.9 -3.9zM187.1 221.7l3.9 3.9l-3.9 3.9l-3.9 -3.9zM65.0 221.1l3.9 3.9l-3.9 3.9l-3.9 -3.9zM302.8 222.8l3.9 3.9l-3.9 3.9l-3.9 -3.9zM81.4 221.3l3.9 3.9l-3.9 3.9l-3.9 -3.9zM53.3 221.1l3.9 3.9l-3.9 3.9l-3.9 -3.9zM135.5 221.8l3.9 3.9l-3.9 3.9l-3.9 -3.9zM365.0 223.5l3.9 3.9l-3.9 3.9l-3.9 -3.9zM325.3 223.4l3.9 3.9l-3.9 3.9l-3.9 -3.9zM255.4 223.1l3.9 3.9l-3.9 3.9l-3.9 -3.9zM360.3 224.0l3.9 3.9l-3.9 3.9l-3.9 -3.9zM166.1 222.7l3.9 3.9l-3.9 3.9l-3.9 -3.9zM260.6 223.7l3.9 3.9l-3.9 3.9l-3.9 -3.9zM330.4 224.3l3.9 3.9l-3.9 3.9l-3.9 -3.9zM216.9 223.5l3.9 3.9l-3.9 3.9l-3.9 -3.9zM74.9 222.7l3.9 3.9l-3.9 3.9l-3.9 -3.9zM384.1 225.3l3.9 3.9l-3.9 3.9l-3.9 -3.9zM99.2 223.5l3.9 3.9l-3.9 3.9l-3.9 -3.9zM92.4 223.5l3.9 3.9l-3.9 3.9l-3.9 -3.9zM190.3 224.2l3.9 3.9l-3.9 3.9l-3.9 -3.9zM106.0 223.9l3.9 3.9l-3.9 3.9l-3.9 -3.9zM142.2 224.3l3.9 3.9l-3.9 3.9l-3.9 -3.9zM24.1 223.5l3.9 3.9l-3.9 3.9l-3.9 -3.9zM231.8 225.1l3.9 3.9l-3.9 3.9l-3.9 -3.9zM319.8 225.7l3.9 3.9l-3.9 3.9l-3.9 -3.9zM389.3 226.5l3.9 3.9l-3.9 3.9l-3.9 -3.9zM251.2 225.5l3.9 3.9l-3.9 3.9l-3.9 -3.9zM224.0 225.5l3.9 3.9l-3.9 3.9l-3.9 -3.9zM84.7 224.6l3.9 3.9l-3.9 3.9l-3.9 -3.9zM175.5 225.3l3.9 3.9l-3.9 3.9l-3.9 -3.9zM265.5 226.0l3.9 3.9l-3.9 3.9l-3.9 -3.9zM68.3 224.6l3.9 3.9l-3.9 3.9l-3.9 -3.9zM354.6 226.7l3.9 3.9l-3.9 3.9l-3.9 -3.9zM245.1 226.7l3.9 3.9l-3.9 3.9l-3.9 -3.9zM170.2 226.1l3.9 3.9l-3.9 3.9l-3.9 -3.9zM164.1 226.3l3.9 3.9l-3.9 3.9l-3.9 -3.9zM380.5 227.9l3.9 3.9l-3.9 3.9l-3.9 -3.9zM148.4 226.4l3.9 3.9l-3.9 3.9l-3.9 -3.9zM340.1 227.9l3.9 3.9l-3.9 3.9l-3.9 -3.9zM118.6 226.4l3.9 3.9l-3.9 3.9l-3.9 -3.9zM46.7 225.9l3.9 3.9l-3.9 3.9l-3.9 -3.9zM32.6 226.0l3.9 3.9l-3.9 3.9l-3.9 -3.9zM154.7 226.9l3.9 3.9l-3.9 3.9l-3.9 -3.9zM214.9 227.7l3.9 3.9l-3.9 3.9l-3.9 -3.9zM56.6 226.6l3.9 3.9l-3.9 3.9l-3.9 -3.9zM269.1 228.1l3.9 3.9l-3.9 3.9l-3.9 -3.9zM160.1 227.5l3.9 3.9l-3.9 3.9l-3.9 -3.9zM19.7 226.7l3.9 3.9l-3.9 3.9l-3.9 -3.9zM202.0 228.1l3.9 3.9l-3.9 3.9l-3.9 -3.9zM52.6 227.2l3.9 3.9l-3.9 3.9l-3.9 -3.9zM310.9 229.1l3.9 3.9l-3.9 3.9l-3.9 -3.9zM180.5 228.3l3.9 3.9l-3.9 3.9l-3.9 -3.9zM395.6 230.2l3.9 3.9l-3.9 3.9l-3.9 -3.9zM104.9 228.2l3.9 3.9l-3.9 3.9l-3.9 -3.9zM70.2 228.0l3.9 3.9l-3.9 3.9l-3.9 -3.9zM251.8 229.4l3.9 3.9l-3.9 3.9l-3.9 -3.9zM366.5 230.3l3.9 3.9l-3.9 3.9l-3.9 -3.9zM91.1 228.4l3.9 3.9l-3.9 3.9l-3.9 -3.9zM79.9 228.4l3.9 3.9l-3.9 3.9l-3.9 -3.9zM360.4 230.5l3.9 3.9l-3.9 3.9l-3.9 -3.9zM97.7 228.6l3.9 3.9l-3.9 3.9l-3.9 -3.9zM387.6 230.8l3.9 3.9l-3.9 3.9l-3.9 -3.9zM291.7 230.1l3.9 3.9l-3.9 3.9l-3.9 -3.9zM226.1 229.7l3.9 3.9l-3.9 3.9l-3.9 -3.9zM317.0 230.4l3.9 3.9l-3.9 3.9l-3.9 -3.9zM134.4 229.2l3.9 3.9l-3.9 3.9l-3.9 -3.9zM123.2 229.4l3.9 3.9l-3.9 3.9l-3.9 -3.9zM322.7 231.0l3.9 3.9l-3.9 3.9l-3.9 -3.9zM244.2 230.5l3.9 3.9l-3.9 3.9l-3.9 -3.9zM211.5 230.5l3.9 3.9l-3.9 3.9l-3.9 -3.9zM29.2 229.2l3.9 3.9l-3.9 3.9l-3.9 -3.9zM233.3 230.9l3.9 3.9l-3.9 3.9l-3.9 -3.9zM114.2 230.2l3.9 3.9l-3.9 3.9l-3.9 -3.9zM185.3 230.8l3.9 3.9l-3.9 3.9l-3.9 -3.9zM38.9 229.8l3.9 3.9l-3.9 3.9l-3.9 -3.9zM341.8 232.2l3.9 3.9l-3.9 3.9l-3.9 -3.9zM383.6 232.6l3.9 3.9l-3.9 3.9l-3.9 -3.9zM300.3 232.1l3.9 3.9l-3.9 3.9l-3.9 -3.9zM147.6 231.3l3.9 3.9l-3.9 3.9l-3.9 -3.9zM127.9 231.5l3.9 3.9l-3.9 3.9l-3.9 -3.9zM165.2 231.8l3.9 3.9l-3.9 3.9l-3.9 -3.9zM391.4 233.4l3.9 3.9l-3.9 3.9l-3.9 -3.9zM278.7 232.9l3.9 3.9l-3.9 3.9l-3.9 -3.9zM107.5 231.8l3.9 3.9l-3.9 3.9l-3.9 -3.9zM378.0 234.1l3.9 3.9l-3.9 3.9l-3.9 -3.9zM81.6 231.9l3.9 3.9l-3.9 3.9l-3.9 -3.9zM65.2 231.9l3.9 3.9l-3.9 3.9l-3.9 -3.9zM230.0 233.2l3.9 3.9l-3.9 3.9l-3.9 -3.9zM94.8 232.4l3.9 3.9l-3.9 3.9l-3.9 -3.9zM196.8 233.3l3.9 3.9l-3.9 3.9l-3.9 -3.9zM14.4 232.1l3.9 3.9l-3.9 3.9l-3.9 -3.9zM315.6 234.6l3.9 3.9l-3.9 3.9l-3.9 -3.9zM206.7 233.8l3.9 3.9l-3.9 3.9l-3.9 -3.9zM370.3 235.1l3.9 3.9l-3.9 3.9l-3.9 -3.9zM226.1 234.1l3.9 3.9l-3.9 3.9l-3.9 -3.9zM73.1 233.1l3.9 3.9l-3.9 3.9l-3.9 -3.9zM328.9 235.0l3.9 3.9l-3.9 3.9l-3.9 -3.9zM49.3 233.0l3.9 3.9l-3.9 3.9l-3.9 -3.9zM345.5 235.2l3.9 3.9l-3.9 3.9l-3.9 -3.9zM136.9 233.8l3.9 3.9l-3.9 3.9l-3.9 -3.9zM44.5 233.1l3.9 3.9l-3.9 3.9l-3.9 -3.9zM59.3 233.3l3.9 3.9l-3.9 3.9l-3.9 -3.9zM18.7 233.1l3.9 3.9l-3.9 3.9l-3.9 -3.9zM172.4 234.2l3.9 3.9l-3.9 3.9l-3.9 -3.9zM215.6 234.6l3.9 3.9l-3.9 3.9l-3.9 -3.9zM289.7 235.3l3.9 3.9l-3.9 3.9l-3.9 -3.9zM304.5 235.4l3.9 3.9l-3.9 3.9l-3.9 -3.9zM324.4 235.5l3.9 3.9l-3.9 3.9l-3.9 -3.9zM364.8 236.1l3.9 3.9l-3.9 3.9l-3.9 -3.9zM114.8 234.4l3.9 3.9l-3.9 3.9l-3.9 -3.9zM256.8 235.6l3.9 3.9l-3.9 3.9l-3.9 -3.9zM99.4 234.8l3.9 3.9l-3.9 3.9l-3.9 -3.9zM268.2 236.2l3.9 3.9l-3.9 3.9l-3.9 -3.9zM140.9 235.5l3.9 3.9l-3.9 3.9l-3.9 -3.9zM309.7 236.8l3.9 3.9l-3.9 3.9l-3.9 -3.9zM35.8 234.8l3.9 3.9l-3.9 3.9l-3.9 -3.9zM152.8 235.9l3.9 3.9l-3.9 3.9l-3.9 -3.9zM157.6 236.0l3.9 3.9l-3.9 3.9l-3.9 -3.9zM396.5 237.8l3.9 3.9l-3.9 3.9l-3.9 -3.9zM359.2 237.6l3.9 3.9l-3.9 3.9l-3.9 -3.9zM122.1 235.8l3.9 3.9l-3.9 3.9l-3.9 -3.9zM384.9 237.8l3.9 3.9l-3.9 3.9l-3.9 -3.9zM263.7 237.3l3.9 3.9l-3.9 3.9l-3.9 -3.9zM350.9 238.0l3.9 3.9l-3.9 3.9l-3.9 -3.9zM133.6 236.4l3.9 3.9l-3.9 3.9l-3.9 -3.9zM69.5 236.1l3.9 3.9l-3.9 3.9l-3.9 -3.9zM249.0 237.4l3.9 3.9l-3.9 3.9l-3.9 -3.9zM390.9 238.5l3.9 3.9l-3.9 3.9l-3.9 -3.9zM211.3 237.5l3.9 3.9l-3.9 3.9l-3.9 -3.9zM167.0 237.5l3.9 3.9l-3.9 3.9l-3.9 -3.9zM299.1 238.5l3.9 3.9l-3.9 3.9l-3.9 -3.9zM294.4 238.5l3.9 3.9l-3.9 3.9l-3.9 -3.9zM326.5 239.1l3.9 3.9l-3.9 3.9l-3.9 -3.9zM29.2 237.1l3.9 3.9l-3.9 3.9l-3.9 -3.9zM47.9 237.2l3.9 3.9l-3.9 3.9l-3.9 -3.9zM375.1 239.7l3.9 3.9l-3.9 3.9l-3.9 -3.9zM126.1 237.9l3.9 3.9l-3.9 3.9l-3.9 -3.9zM320.9 239.6l3.9 3.9l-3.9 3.9l-3.9 -3.9zM144.5 238.3l3.9 3.9l-3.9 3.9l-3.9 -3.9zM110.2 238.1l3.9 3.9l-3.9 3.9l-3.9 -3.9zM86.1 237.9l3.9 3.9l-3.9 3.9l-3.9 -3.9zM188.5 238.7l3.9 3.9l-3.9 3.9l-3.9 -3.9zM363.1 240.1l3.9 3.9l-3.9 3.9l-3.9 -3.9zM193.1 238.9l3.9 3.9l-3.9 3.9l-3.9 -3.9zM239.0 239.4l3.9 3.9l-3.9 3.9l-3.9 -3.9zM24.5 238.0l3.9 3.9l-3.9 3.9l-3.9 -3.9zM197.6 239.4l3.9 3.9l-3.9 3.9l-3.9 -3.9zM340.4 240.6l3.9 3.9l-3.9 3.9l-3.9 -3.9zM353.7 240.7l3.9 3.9l-3.9 3.9l-3.9 -3.9zM176.0 239.5l3.9 3.9l-3.9 3.9l-3.9 -3.9zM161.5 239.4l3.9 3.9l-3.9 3.9l-3.9 -3.9zM266.5 240.4l3.9 3.9l-3.9 3.9l-3.9 -3.9zM215.8 240.0l3.9 3.9l-3.9 3.9l-3.9 -3.9zM94.4 239.2l3.9 3.9l-3.9 3.9l-3.9 -3.9zM245.0 240.6l3.9 3.9l-3.9 3.9l-3.9 -3.9zM58.5 239.4l3.9 3.9l-3.9 3.9l-3.9 -3.9zM79.6 239.7l3.9 3.9l-3.9 3.9l-3.9 -3.9zM226.9 240.9l3.9 3.9l-3.9 3.9l-3.9 -3.9zM169.2 240.9l3.9 3.9l-3.9 3.9l-3.9 -3.9zM279.3 241.9l3.9 3.9l-3.9 3.9l-3.9 -3.9zM380.5 242.7l3.9 3.9l-3.9 3.9l-3.9 -3.9zM113.6 240.8l3.9 3.9l-3.9 3.9l-3.9 -3.9zM222.3 241.6l3.9 3.9l-3.9 3.9l-3.9 -3.9zM70.6 241.1l3.9 3.9l-3.9 3.9l-3.9 -3.9zM290.4 243.8l3.9 3.9l-3.9 3.9l-3.9 -3.9zM182.8 243.3l3.9 3.9l-3.9 3.9l-3.9 -3.9zM365.3 244.6l3.9 3.9l-3.9 3.9l-3.9 -3.9zM106.3 242.7l3.9 3.9l-3.9 3.9l-3.9 -3.9zM393.3 245.0l3.9 3.9l-3.9 3.9l-3.9 -3.9zM335.4 244.7l3.9 3.9l-3.9 3.9l-3.9 -3.9zM13.5 242.3l3.9 3.9l-3.9 3.9l-3.9 -3.9zM65.8 242.7l3.9 3.9l-3.9 3.9l-3.9 -3.9zM25.8 242.6l3.9 3.9l-3.9 3.9l-3.9 -3.9zM355.0 245.1l3.9 3.9l-3.9 3.9l-3.9 -3.9zM312.6 244.8l3.9 3.9l-3.9 3.9l-3.9 -3.9zM137.2 243.6l3.9 3.9l-3.9 3.9l-3.9 -3.9zM296.5 244.9l3.9 3.9l-3.9 3.9l-3.9 -3.9zM198.3 244.3l3.9 3.9l-3.9 3.9l-3.9 -3.9zM74.9 243.6l3.9 3.9l-3.9 3.9l-3.9 -3.9zM19.9 243.5l3.9 3.9l-3.9 3.9l-3.9 -3.9zM34.2 243.6l3.9 3.9l-3.9 3.9l-3.9 -3.9zM162.4 244.7l3.9 3.9l-3.9 3.9l-3.9 -3.9zM233.1 245.4l3.9 3.9l-3.9 3.9l-3.9 -3.9zM191.3 245.3l3.9 3.9l-3.9 3.9l-3.9 -3.9zM46.5 244.3l3.9 3.9l-3.9 3.9l-3.9 -3.9zM316.8 246.4l3.9 3.9l-3.9 3.9l-3.9 -3.9zM124.7 245.0l3.9 3.9l-3.9 3.9l-3.9 -3.9zM173.5 245.5l3.9 3.9l-3.9 3.9l-3.9 -3.9zM399.2 247.2l3.9 3.9l-3.9 3.9l-3.9 -3.9zM55.3 244.7l3.9 3.9l-3.9 3.9l-3.9 -3.9zM388.7 247.1l3.9 3.9l-3.9 3.9l-3.9 -3.9zM308.0 246.6l3.9 3.9l-3.9 3.9l-3.9 -3.9zM204.6 246.1l3.9 3.9l-3.9 3.9l-3.9 -3.9zM375.8 247.7l3.9 3.9l-3.9 3.9l-3.9 -3.9zM216.8 246.6l3.9 3.9l-3.9 3.9l-3.9 -3.9zM78.3 245.6l3.9 3.9l-3.9 3.9l-3.9 -3.9zM186.2 246.5l3.9 3.9l-3.9 3.9l-3.9 -3.9zM223.6 247.2l3.9 3.9l-3.9 3.9l-3.9 -3.9zM153.9 246.8l3.9 3.9l-3.9 3.9l-3.9 -3.9zM284.1 247.7l3.9 3.9l-3.9 3.9l-3.9 -3.9zM165.7 247.2l3.9 3.9l-3.9 3.9l-3.9 -3.9zM271.2 247.9l3.9 3.9l-3.9 3.9l-3.9 -3.9zM246.2 247.8l3.9 3.9l-3.9 3.9l-3.9 -3.9zM136.0 247.5l3.9 3.9l-3.9 3.9l-3.9 -3.9zM228.7 248.3l3.9 3.9l-3.9 3.9l-3.9 -3.9zM84.6 247.4l3.9 3.9l-3.9 3.9l-3.9 -3.9zM329.5 249.3l3.9 3.9l-3.9 3.9l-3.9 -3.9zM379.3 249.7l3.9 3.9l-3.9 3.9l-3.9 -3.9zM175.9 248.7l3.9 3.9l-3.9 3.9l-3.9 -3.9zM367.5 250.3l3.9 3.9l-3.9 3.9l-3.9 -3.9zM257.1 249.6l3.9 3.9l-3.9 3.9l-3.9 -3.9zM207.8 249.3l3.9 3.9l-3.9 3.9l-3.9 -3.9zM311.2 250.1l3.9 3.9l-3.9 3.9l-3.9 -3.9zM389.2 251.4l3.9 3.9l-3.9 3.9l-3.9 -3.9zM26.9 249.2l3.9 3.9l-3.9 3.9l-3.9 -3.9zM353.6 251.8l3.9 3.9l-3.9 3.9l-3.9 -3.9zM142.8 250.5l3.9 3.9l-3.9 3.9l-3.9 -3.9zM21.7 249.7l3.9 3.9l-3.9 3.9l-3.9 -3.9zM182.9 250.9l3.9 3.9l-3.9 3.9l-3.9 -3.9zM37.8 250.2l3.9 3.9l-3.9 3.9l-3.9 -3.9zM344.8 252.6l3.9 3.9l-3.9 3.9l-3.9 -3.9zM232.3 251.9l3.9 3.9l-3.9 3.9l-3.9 -3.9zM170.9 251.5l3.9 3.9l-3.9 3.9l-3.9 -3.9zM80.5 251.0l3.9 3.9l-3.9 3.9l-3.9 -3.9zM150.9 251.5l3.9 3.9l-3.9 3.9l-3.9 -3.9zM265.0 252.4l3.9 3.9l-3.9 3.9l-3.9 -3.9zM247.9 252.3l3.9 3.9l-3.9 3.9l-3.9 -3.9zM76.2 251.1l3.9 3.9l-3.9 3.9l-3.9 -3.9zM225.9 252.3l3.9 3.9l-3.9 3.9l-3.9 -3.9zM359.4 253.3l3.9 3.9l-3.9 3.9l-3.9 -3.9zM395.0 254.0l3.9 3.9l-3.9 3.9l-3.9 -3.9zM202.3 252.6l3.9 3.9l-3.9 3.9l-3.9 -3.9zM253.6 253.1l3.9 3.9l-3.9 3.9l-3.9 -3.9zM174.7 252.6l3.9 3.9l-3.9 3.9l-3.9 -3.9zM314.5 253.8l3.9 3.9l-3.9 3.9l-3.9 -3.9zM321.6 253.9l3.9 3.9l-3.9 3.9l-3.9 -3.9zM62.0 252.1l3.9 3.9l-3.9 3.9l-3.9 -3.9zM57.5 252.3l3.9 3.9l-3.9 3.9l-3.9 -3.9zM29.8 252.1l3.9 3.9l-3.9 3.9l-3.9 -3.9zM161.8 253.2l3.9 3.9l-3.9 3.9l-3.9 -3.9zM213.0 253.6l3.9 3.9l-3.9 3.9l-3.9 -3.9zM146.9 253.3l3.9 3.9l-3.9 3.9l-3.9 -3.9zM337.9 254.8l3.9 3.9l-3.9 3.9l-3.9 -3.9zM41.4 252.6l3.9 3.9l-3.9 3.9l-3.9 -3.9zM217.0 253.9l3.9 3.9l-3.9 3.9l-3.9 -3.9zM16.7 253.0l3.9 3.9l-3.9 3.9l-3.9 -3.9zM384.9 255.7l3.9 3.9l-3.9 3.9l-3.9 -3.9zM332.0 255.5l3.9 3.9l-3.9 3.9l-3.9 -3.9zM166.7 254.4l3.9 3.9l-3.9 3.9l-3.9 -3.9zM198.8 255.0l3.9 3.9l-3.9 3.9l-3.9 -3.9zM65.5 254.0l3.9 3.9l-3.9 3.9l-3.9 -3.9zM243.3 255.7l3.9 3.9l-3.9 3.9l-3.9 -3.9zM342.8 256.9l3.9 3.9l-3.9 3.9l-3.9 -3.9zM398.3 257.4l3.9 3.9l-3.9 3.9l-3.9 -3.9zM150.6 255.7l3.9 3.9l-3.9 3.9l-3.9 -3.9zM353.8 257.3l3.9 3.9l-3.9 3.9l-3.9 -3.9zM393.2 257.8l3.9 3.9l-3.9 3.9l-3.9 -3.9zM194.6 256.7l3.9 3.9l-3.9 3.9l-3.9 -3.9zM235.4 257.1l3.9 3.9l-3.9 3.9l-3.9 -3.9zM75.1 256.1l3.9 3.9l-3.9 3.9l-3.9 -3.9zM224.4 257.4l3.9 3.9l-3.9 3.9l-3.9 -3.9zM154.4 257.0l3.9 3.9l-3.9 3.9l-3.9 -3.9zM46.8 256.3l3.9 3.9l-3.9 3.9l-3.9 -3.9zM362.4 259.1l3.9 3.9l-3.9 3.9l-3.9 -3.9zM41.6 256.8l3.9 3.9l-3.9 3.9l-3.9 -3.9zM319.1 258.9l3.9 3.9l-3.9 3.9l-3.9 -3.9zM61.6 257.1l3.9 3.9l-3.9 3.9l-3.9 -3.9zM200.1 258.7l3.9 3.9l-3.9 3.9l-3.9 -3.9zM23.3 257.4l3.9 3.9l-3.9 3.9l-3.9 -3.9zM158.6 258.6l3.9 3.9l-3.9 3.9l-3.9 -3.9zM168.0 258.8l3.9 3.9l-3.9 3.9l-3.9 -3.9zM204.8 259.2l3.9 3.9l-3.9 3.9l-3.9 -3.9zM327.0 260.4l3.9 3.9l-3.9 3.9l-3.9 -3.9zM178.5 259.4l3.9 3.9l-3.9 3.9l-3.9 -3.9zM163.2 259.4l3.9 3.9l-3.9 3.9l-3.9 -3.9zM252.7 260.0l3.9 3.9l-3.9 3.9l-3.9 -3.9zM35.6 258.8l3.9 3.9l-3.9 3.9l-3.9 -3.9zM243.4 260.9l3.9 3.9l-3.9 3.9l-3.9 -3.9zM195.2 261.4l3.9 3.9l-3.9 3.9l-3.9 -3.9zM220.4 262.2l3.9 3.9l-3.9 3.9l-3.9 -3.9zM173.1 262.3l3.9 3.9l-3.9 3.9l-3.9 -3.9zM61.0 261.6l3.9 3.9l-3.9 3.9l-3.9 -3.9zM17.2 261.3l3.9 3.9l-3.9 3.9l-3.9 -3.9zM53.7 261.8l3.9 3.9l-3.9 3.9l-3.9 -3.9zM21.1 261.6l3.9 3.9l-3.9 3.9l-3.9 -3.9zM40.4 262.1l3.9 3.9l-3.9 3.9l-3.9 -3.9zM49.1 262.2l3.9 3.9l-3.9 3.9l-3.9 -3.9zM334.2 264.8l3.9 3.9l-3.9 3.9l-3.9 -3.9zM35.7 263.9l3.9 3.9l-3.9 3.9l-3.9 -3.9zM354.3 266.6l3.9 3.9l-3.9 3.9l-3.9 -3.9zM323.7 266.6l3.9 3.9l-3.9 3.9l-3.9 -3.9zM341.2 267.4l3.9 3.9l-3.9 3.9l-3.9 -3.9zM29.9 265.2l3.9 3.9l-3.9 3.9l-3.9 -3.9zM348.2 268.9l3.9 3.9l-3.9 3.9l-3.9 -3.9zM40.7 266.9l3.9 3.9l-3.9 3.9l-3.9 -3.9zM53.4 268.2l3.9 3.9l-3.9 3.9l-3.9 -3.9zM49.4 268.6l3.9 3.9l-3.9 3.9l-3.9 -3.9zM17.5 268.4l3.9 3.9l-3.9 3.9l-3.9 -3.9zM346.4 273.5l3.9 3.9l-3.9 3.9l-3.9 -3.9zM27.7 271.4l3.9 3.9l-3.9 3.9l-3.9 -3.9zM45.6 272.4l3.9 3.9l-3.9 3.9l-3.9 -3.9zM328.8 274.7l3.9 3.9l-3.9 3.9l-3.9 -3.9zM15.8 272.7l3.9 3.9l-3.9 3.9l-3.9 -3.9zM336.1 275.5l3.9 3.9l-3.9 3.9l-3.9 -3.9zM349.9 275.8l3.9 3.9l-3.9 3.9l-3.9 -3.9zM36.0 274.4l3.9 3.9l-3.9 3.9l-3.9 -3.9zM332.2 276.8l3.9 3.9l-3.9 3.9l-3.9 -3.9zM324.7 276.8l3.9 3.9l-3.9 3.9l-3.9 -3.9zM341.1 277.0l3.9 3.9l-3.9 3.9l-3.9 -3.9zM346.0 278.1l3.9 3.9l-3.9 3.9l-3.9 -3.9zM13.1 275.9l3.9 3.9l-3.9 3.9l-3.9 -3.9zM18.7 276.5l3.9 3.9l-3.9 3.9l-3.9 -3.9zM30.1 276.5l3.9 3.9l-3.9 3.9l-3.9 -3.9zM37.3 278.1l3.9 3.9l-3.9 3.9l-3.9 -3.9zM57.4 278.5l3.9 3.9l-3.9 3.9l-3.9 -3.9zM25.7 278.4l3.9 3.9l-3.9 3.9l-3.9 -3.9zM335.6 281.0l3.9 3.9l-3.9 3.9l-3.9 -3.9zM43.0 280.4l3.9 3.9l-3.9 3.9l-3.9 -3.9zM33.9 281.0l3.9 3.9l-3.9 3.9l-3.9 -3.9zM339.7 286.4l3.9 3.9l-3.9 3.9l-3.9 -3.9zM44.2 286.3l3.9 3.9l-3.9 3.9l-3.9 -3.9zM24.6 286.1l3.9 3.9l-3.9 3.9l-3.9 -3.9zM48.5 286.8l3.9 3.9l-3.9 3.9l-3.9 -3.9zM12.2 287.0l3.9 3.9l-3.9 3.9l-3.9 -3.9zM330.1 290.6l3.9 3.9l-3.9 3.9l-3.9 -3.9zM334.5 291.1l3.9 3.9l-3.9 3.9l-3.9 -3.9zM38.2 289.3l3.9 3.9l-3.9 3.9l-3.9 -3.9zM43.8 290.8l3.9 3.9l-3.9 3.9l-3.9 -3.9zM17.9 290.9l3.9 3.9l-3.9 3.9l-3.9 -3.9zM32.1 291.0l3.9 3.9l-3.9 3.9l-3.9 -3.9zM13.7 291.3l3.9 3.9l-3.9 3.9l-3.9 -3.9zM343.8 294.9l3.9 3.9l-3.9 3.9l-3.9 -3.9zM36.2 293.1l3.9 3.9l-3.9 3.9l-3.9 -3.9zM247.5 295.4l3.9 3.9l-3.9 3.9l-3.9 -3.9zM328.0 296.5l3.9 3.9l-3.9 3.9l-3.9 -3.9zM324.0 296.7l3.9 3.9l-3.9 3.9l-3.9 -3.9zM23.7 295.1l3.9 3.9l-3.9 3.9l-3.9 -3.9zM340.9 297.9l3.9 3.9l-3.9 3.9l-3.9 -3.9zM269.7 298.8l3.9 3.9l-3.9 3.9l-3.9 -3.9zM239.7 298.6l3.9 3.9l-3.9 3.9l-3.9 -3.9zM39.2 297.4l3.9 3.9l-3.9 3.9l-3.9 -3.9zM333.7 299.8l3.9 3.9l-3.9 3.9l-3.9 -3.9zM246.5 299.3l3.9 3.9l-3.9 3.9l-3.9 -3.9zM43.1 298.4l3.9 3.9l-3.9 3.9l-3.9 -3.9zM16.1 298.2l3.9 3.9l-3.9 3.9l-3.9 -3.9zM309.1 300.9l3.9 3.9l-3.9 3.9l-3.9 -3.9zM31.2 299.5l3.9 3.9l-3.9 3.9l-3.9 -3.9zM329.7 303.4l3.9 3.9l-3.9 3.9l-3.9 -3.9zM24.9 301.1l3.9 3.9l-3.9 3.9l-3.9 -3.9zM254.8 303.2l3.9 3.9l-3.9 3.9l-3.9 -3.9zM238.9 303.1l3.9 3.9l-3.9 3.9l-3.9 -3.9zM312.1 303.8l3.9 3.9l-3.9 3.9l-3.9 -3.9zM14.5 301.9l3.9 3.9l-3.9 3.9l-3.9 -3.9zM287.6 304.3l3.9 3.9l-3.9 3.9l-3.9 -3.9zM265.7 304.5l3.9 3.9l-3.9 3.9l-3.9 -3.9zM323.3 305.4l3.9 3.9l-3.9 3.9l-3.9 -3.9zM276.1 305.4l3.9 3.9l-3.9 3.9l-3.9 -3.9zM303.3 306.3l3.9 3.9l-3.9 3.9l-3.9 -3.9zM295.4 307.2l3.9 3.9l-3.9 3.9l-3.9 -3.9zM251.1 307.0l3.9 3.9l-3.9 3.9l-3.9 -3.9zM318.0 307.7l3.9 3.9l-3.9 3.9l-3.9 -3.9zM260.4 307.7l3.9 3.9l-3.9 3.9l-3.9 -3.9zM310.8 308.2l3.9 3.9l-3.9 3.9l-3.9 -3.9zM290.8 308.6l3.9 3.9l-3.9 3.9l-3.9 -3.9zM338.2 309.0l3.9 3.9l-3.9 3.9l-3.9 -3.9zM255.2 308.5l3.9 3.9l-3.9 3.9l-3.9 -3.9zM266.0 308.7l3.9 3.9l-3.9 3.9l-3.9 -3.9zM33.0 307.4l3.9 3.9l-3.9 3.9l-3.9 -3.9zM18.7 307.5l3.9 3.9l-3.9 3.9l-3.9 -3.9zM283.4 310.0l3.9 3.9l-3.9 3.9l-3.9 -3.9zM276.7 310.4l3.9 3.9l-3.9 3.9l-3.9 -3.9zM308.1 311.6l3.9 3.9l-3.9 3.9l-3.9 -3.9zM15.4 310.0l3.9 3.9l-3.9 3.9l-3.9 -3.9zM304.0 312.4l3.9 3.9l-3.9 3.9l-3.9 -3.9zM272.2 312.4l3.9 3.9l-3.9 3.9l-3.9 -3.9zM27.6 310.7l3.9 3.9l-3.9 3.9l-3.9 -3.9zM245.0 312.4l3.9 3.9l-3.9 3.9l-3.9 -3.9zM317.1 313.7l3.9 3.9l-3.9 3.9l-3.9 -3.9zM252.0 313.8l3.9 3.9l-3.9 3.9l-3.9 -3.9zM265.1 314.6l3.9 3.9l-3.9 3.9l-3.9 -3.9zM309.9 315.2l3.9 3.9l-3.9 3.9l-3.9 -3.9zM247.8 315.2l3.9 3.9l-3.9 3.9l-3.9 -3.9zM322.1 315.9l3.9 3.9l-3.9 3.9l-3.9 -3.9zM26.3 314.5l3.9 3.9l-3.9 3.9l-3.9 -3.9zM20.3 315.2l3.9 3.9l-3.9 3.9l-3.9 -3.9zM287.2 317.3l3.9 3.9l-3.9 3.9l-3.9 -3.9zM316.3 317.8l3.9 3.9l-3.9 3.9l-3.9 -3.9zM29.9 316.4l3.9 3.9l-3.9 3.9l-3.9 -3.9zM241.7 318.5l3.9 3.9l-3.9 3.9l-3.9 -3.9zM312.1 319.2l3.9 3.9l-3.9 3.9l-3.9 -3.9zM330.1 319.3l3.9 3.9l-3.9 3.9l-3.9 -3.9zM283.0 319.0l3.9 3.9l-3.9 3.9l-3.9 -3.9zM277.9 319.0l3.9 3.9l-3.9 3.9l-3.9 -3.9zM260.2 319.8l3.9 3.9l-3.9 3.9l-3.9 -3.9zM236.4 319.6l3.9 3.9l-3.9 3.9l-3.9 -3.9zM271.5 319.9l3.9 3.9l-3.9 3.9l-3.9 -3.9zM246.5 320.6l3.9 3.9l-3.9 3.9l-3.9 -3.9zM253.3 320.7l3.9 3.9l-3.9 3.9l-3.9 -3.9zM13.6 319.1l3.9 3.9l-3.9 3.9l-3.9 -3.9zM319.4 321.6l3.9 3.9l-3.9 3.9l-3.9 -3.9zM308.3 321.7l3.9 3.9l-3.9 3.9l-3.9 -3.9zM290.7 321.7l3.9 3.9l-3.9 3.9l-3.9 -3.9zM35.6 320.0l3.9 3.9l-3.9 3.9l-3.9 -3.9zM314.4 323.3l3.9 3.9l-3.9 3.9l-3.9 -3.9zM18.2 321.5l3.9 3.9l-3.9 3.9l-3.9 -3.9zM238.1 323.3l3.9 3.9l-3.9 3.9l-3.9 -3.9zM286.1 323.8l3.9 3.9l-3.9 3.9l-3.9 -3.9zM303.1 324.4l3.9 3.9l-3.9 3.9l-3.9 -3.9zM328.0 324.7l3.9 3.9l-3.9 3.9l-3.9 -3.9zM297.2 324.6l3.9 3.9l-3.9 3.9l-3.9 -3.9zM43.4 323.6l3.9 3.9l-3.9 3.9l-3.9 -3.9zM26.0 324.4l3.9 3.9l-3.9 3.9l-3.9 -3.9zM311.9 326.7l3.9 3.9l-3.9 3.9l-3.9 -3.9zM321.8 327.2l3.9 3.9l-3.9 3.9l-3.9 -3.9zM232.9 327.5l3.9 3.9l-3.9 3.9l-3.9 -3.9zM248.7 327.9l3.9 3.9l-3.9 3.9l-3.9 -3.9zM11.9 326.1l3.9 3.9l-3.9 3.9l-3.9 -3.9zM30.5 326.5l3.9 3.9l-3.9 3.9l-3.9 -3.9zM241.4 328.6l3.9 3.9l-3.9 3.9l-3.9 -3.9zM281.7 328.9l3.9 3.9l-3.9 3.9l-3.9 -3.9zM40.8 327.2l3.9 3.9l-3.9 3.9l-3.9 -3.9zM300.8 329.2l3.9 3.9l-3.9 3.9l-3.9 -3.9zM295.7 329.3l3.9 3.9l-3.9 3.9l-3.9 -3.9zM270.8 329.7l3.9 3.9l-3.9 3.9l-3.9 -3.9zM276.4 329.8l3.9 3.9l-3.9 3.9l-3.9 -3.9zM258.3 329.7l3.9 3.9l-3.9 3.9l-3.9 -3.9zM33.9 328.9l3.9 3.9l-3.9 3.9l-3.9 -3.9zM284.5 331.8l3.9 3.9l-3.9 3.9l-3.9 -3.9zM303.3 332.3l3.9 3.9l-3.9 3.9l-3.9 -3.9zM308.3 332.7l3.9 3.9l-3.9 3.9l-3.9 -3.9zM51.8 331.2l3.9 3.9l-3.9 3.9l-3.9 -3.9zM317.2 333.3l3.9 3.9l-3.9 3.9l-3.9 -3.9zM46.5 331.6l3.9 3.9l-3.9 3.9l-3.9 -3.9zM241.0 333.2l3.9 3.9l-3.9 3.9l-3.9 -3.9zM14.8 332.0l3.9 3.9l-3.9 3.9l-3.9 -3.9zM271.1 334.4l3.9 3.9l-3.9 3.9l-3.9 -3.9zM266.5 334.6l3.9 3.9l-3.9 3.9l-3.9 -3.9zM38.8 332.9l3.9 3.9l-3.9 3.9l-3.9 -3.9zM247.9 335.0l3.9 3.9l-3.9 3.9l-3.9 -3.9zM259.0 335.8l3.9 3.9l-3.9 3.9l-3.9 -3.9zM278.1 336.3l3.9 3.9l-3.9 3.9l-3.9 -3.9zM59.9 335.8l3.9 3.9l-3.9 3.9l-3.9 -3.9zM292.7 337.8l3.9 3.9l-3.9 3.9l-3.9 -3.9zM268.3 338.1l3.9 3.9l-3.9 3.9l-3.9 -3.9zM47.3 336.4l3.9 3.9l-3.9 3.9l-3.9 -3.9zM318.6 338.5l3.9 3.9l-3.9 3.9l-3.9 -3.9zM287.3 338.6l3.9 3.9l-3.9 3.9l-3.9 -3.9zM22.9 336.7l3.9 3.9l-3.9 3.9l-3.9 -3.9zM245.2 339.1l3.9 3.9l-3.9 3.9l-3.9 -3.9zM36.0 337.6l3.9 3.9l-3.9 3.9l-3.9 -3.9zM306.1 340.1l3.9 3.9l-3.9 3.9l-3.9 -3.9zM279.8 340.0l3.9 3.9l-3.9 3.9l-3.9 -3.9zM271.7 340.1l3.9 3.9l-3.9 3.9l-3.9 -3.9zM30.3 338.4l3.9 3.9l-3.9 3.9l-3.9 -3.9zM17.3 338.8l3.9 3.9l-3.9 3.9l-3.9 -3.9zM323.1 341.1l3.9 3.9l-3.9 3.9l-3.9 -3.9zM302.1 342.0l3.9 3.9l-3.9 3.9l-3.9 -3.9zM274.9 342.5l3.9 3.9l-3.9 3.9l-3.9 -3.9zM297.6 342.7l3.9 3.9l-3.9 3.9l-3.9 -3.9zM253.7 342.9l3.9 3.9l-3.9 3.9l-3.9 -3.9zM241.8 342.9l3.9 3.9l-3.9 3.9l-3.9 -3.9zM309.2 343.4l3.9 3.9l-3.9 3.9l-3.9 -3.9zM55.6 341.5l3.9 3.9l-3.9 3.9l-3.9 -3.9zM46.4 341.5l3.9 3.9l-3.9 3.9l-3.9 -3.9zM34.6 341.5l3.9 3.9l-3.9 3.9l-3.9 -3.9zM14.1 341.7l3.9 3.9l-3.9 3.9l-3.9 -3.9zM280.5 344.0l3.9 3.9l-3.9 3.9l-3.9 -3.9zM257.4 345.3l3.9 3.9l-3.9 3.9l-3.9 -3.9zM248.5 345.7l3.9 3.9l-3.9 3.9l-3.9 -3.9zM400.6 347.0l3.9 3.9l-3.9 3.9l-3.9 -3.9zM64.6 344.6l3.9 3.9l-3.9 3.9l-3.9 -3.9zM302.5 346.6l3.9 3.9l-3.9 3.9l-3.9 -3.9zM18.0 344.6l3.9 3.9l-3.9 3.9l-3.9 -3.9zM159.9 346.0l3.9 3.9l-3.9 3.9l-3.9 -3.9zM275.2 347.2l3.9 3.9l-3.9 3.9l-3.9 -3.9zM395.1 348.3l3.9 3.9l-3.9 3.9l-3.9 -3.9zM288.6 347.8l3.9 3.9l-3.9 3.9l-3.9 -3.9zM28.0 346.1l3.9 3.9l-3.9 3.9l-3.9 -3.9zM284.2 348.1l3.9 3.9l-3.9 3.9l-3.9 -3.9zM42.6 346.6l3.9 3.9l-3.9 3.9l-3.9 -3.9zM53.0 347.0l3.9 3.9l-3.9 3.9l-3.9 -3.9zM296.4 349.2l3.9 3.9l-3.9 3.9l-3.9 -3.9zM59.6 347.6l3.9 3.9l-3.9 3.9l-3.9 -3.9zM153.6 348.3l3.9 3.9l-3.9 3.9l-3.9 -3.9zM171.9 349.1l3.9 3.9l-3.9 3.9l-3.9 -3.9zM261.5 350.0l3.9 3.9l-3.9 3.9l-3.9 -3.9zM248.3 350.2l3.9 3.9l-3.9 3.9l-3.9 -3.9zM300.8 350.7l3.9 3.9l-3.9 3.9l-3.9 -3.9zM22.8 348.6l3.9 3.9l-3.9 3.9l-3.9 -3.9zM267.5 351.3l3.9 3.9l-3.9 3.9l-3.9 -3.9zM87.9 350.2l3.9 3.9l-3.9 3.9l-3.9 -3.9zM281.8 351.8l3.9 3.9l-3.9 3.9l-3.9 -3.9zM254.4 351.7l3.9 3.9l-3.9 3.9l-3.9 -3.9zM272.5 352.1l3.9 3.9l-3.9 3.9l-3.9 -3.9zM289.1 352.5l3.9 3.9l-3.9 3.9l-3.9 -3.9zM136.9 351.6l3.9 3.9l-3.9 3.9l-3.9 -3.9zM393.5 355.2l3.9 3.9l-3.9 3.9l-3.9 -3.9zM169.4 354.0l3.9 3.9l-3.9 3.9l-3.9 -3.9zM244.1 354.9l3.9 3.9l-3.9 3.9l-3.9 -3.9zM67.1 353.8l3.9 3.9l-3.9 3.9l-3.9 -3.9zM26.1 354.0l3.9 3.9l-3.9 3.9l-3.9 -3.9zM265.9 356.0l3.9 3.9l-3.9 3.9l-3.9 -3.9zM276.6 356.1l3.9 3.9l-3.9 3.9l-3.9 -3.9zM291.1 356.3l3.9 3.9l-3.9 3.9l-3.9 -3.9zM60.5 354.5l3.9 3.9l-3.9 3.9l-3.9 -3.9zM46.9 354.5l3.9 3.9l-3.9 3.9l-3.9 -3.9zM85.7 355.5l3.9 3.9l-3.9 3.9l-3.9 -3.9zM140.8 356.5l3.9 3.9l-3.9 3.9l-3.9 -3.9zM149.5 356.8l3.9 3.9l-3.9 3.9l-3.9 -3.9zM255.5 358.0l3.9 3.9l-3.9 3.9l-3.9 -3.9zM270.3 358.1l3.9 3.9l-3.9 3.9l-3.9 -3.9zM399.1 359.3l3.9 3.9l-3.9 3.9l-3.9 -3.9zM175.7 357.6l3.9 3.9l-3.9 3.9l-3.9 -3.9zM159.6 357.5l3.9 3.9l-3.9 3.9l-3.9 -3.9zM73.2 356.9l3.9 3.9l-3.9 3.9l-3.9 -3.9zM33.6 356.9l3.9 3.9l-3.9 3.9l-3.9 -3.9zM286.5 359.1l3.9 3.9l-3.9 3.9l-3.9 -3.9zM387.6 360.2l3.9 3.9l-3.9 3.9l-3.9 -3.9zM259.9 359.3l3.9 3.9l-3.9 3.9l-3.9 -3.9zM29.7 357.8l3.9 3.9l-3.9 3.9l-3.9 -3.9zM64.1 358.2l3.9 3.9l-3.9 3.9l-3.9 -3.9zM80.0 358.7l3.9 3.9l-3.9 3.9l-3.9 -3.9zM251.0 360.0l3.9 3.9l-3.9 3.9l-3.9 -3.9zM49.3 358.6l3.9 3.9l-3.9 3.9l-3.9 -3.9zM39.5 359.7l3.9 3.9l-3.9 3.9l-3.9 -3.9zM182.4 360.9l3.9 3.9l-3.9 3.9l-3.9 -3.9zM277.9 361.7l3.9 3.9l-3.9 3.9l-3.9 -3.9zM124.7 360.6l3.9 3.9l-3.9 3.9l-3.9 -3.9zM68.0 360.6l3.9 3.9l-3.9 3.9l-3.9 -3.9zM90.6 360.8l3.9 3.9l-3.9 3.9l-3.9 -3.9zM149.8 361.3l3.9 3.9l-3.9 3.9l-3.9 -3.9zM101.0 361.1l3.9 3.9l-3.9 3.9l-3.9 -3.9zM169.6 361.6l3.9 3.9l-3.9 3.9l-3.9 -3.9zM395.7 363.4l3.9 3.9l-3.9 3.9l-3.9 -3.9zM262.9 362.6l3.9 3.9l-3.9 3.9l-3.9 -3.9zM128.8 361.9l3.9 3.9l-3.9 3.9l-3.9 -3.9zM109.0 362.1l3.9 3.9l-3.9 3.9l-3.9 -3.9zM84.3 362.7l3.9 3.9l-3.9 3.9l-3.9 -3.9zM49.1 362.8l3.9 3.9l-3.9 3.9l-3.9 -3.9zM153.1 363.9l3.9 3.9l-3.9 3.9l-3.9 -3.9zM75.2 363.5l3.9 3.9l-3.9 3.9l-3.9 -3.9zM250.4 364.8l3.9 3.9l-3.9 3.9l-3.9 -3.9zM137.3 364.3l3.9 3.9l-3.9 3.9l-3.9 -3.9zM42.2 363.6l3.9 3.9l-3.9 3.9l-3.9 -3.9zM178.7 364.8l3.9 3.9l-3.9 3.9l-3.9 -3.9zM118.8 364.4l3.9 3.9l-3.9 3.9l-3.9 -3.9zM384.4 366.6l3.9 3.9l-3.9 3.9l-3.9 -3.9zM378.4 366.7l3.9 3.9l-3.9 3.9l-3.9 -3.9zM148.9 365.2l3.9 3.9l-3.9 3.9l-3.9 -3.9zM400.8 367.5l3.9 3.9l-3.9 3.9l-3.9 -3.9zM161.4 365.8l3.9 3.9l-3.9 3.9l-3.9 -3.9zM92.2 365.5l3.9 3.9l-3.9 3.9l-3.9 -3.9zM190.1 366.3l3.9 3.9l-3.9 3.9l-3.9 -3.9zM242.4 366.7l3.9 3.9l-3.9 3.9l-3.9 -3.9zM62.0 365.4l3.9 3.9l-3.9 3.9l-3.9 -3.9zM169.8 366.4l3.9 3.9l-3.9 3.9l-3.9 -3.9zM175.4 367.6l3.9 3.9l-3.9 3.9l-3.9 -3.9zM83.9 367.2l3.9 3.9l-3.9 3.9l-3.9 -3.9zM29.0 366.8l3.9 3.9l-3.9 3.9l-3.9 -3.9zM55.7 367.1l3.9 3.9l-3.9 3.9l-3.9 -3.9zM97.6 367.7l3.9 3.9l-3.9 3.9l-3.9 -3.9zM75.9 367.6l3.9 3.9l-3.9 3.9l-3.9 -3.9zM68.9 367.6l3.9 3.9l-3.9 3.9l-3.9 -3.9zM50.8 367.5l3.9 3.9l-3.9 3.9l-3.9 -3.9zM291.2 369.9l3.9 3.9l-3.9 3.9l-3.9 -3.9zM113.8 368.6l3.9 3.9l-3.9 3.9l-3.9 -3.9zM144.3 368.8l3.9 3.9l-3.9 3.9l-3.9 -3.9zM387.8 370.9l3.9 3.9l-3.9 3.9l-3.9 -3.9zM398.8 371.3l3.9 3.9l-3.9 3.9l-3.9 -3.9zM180.5 370.1l3.9 3.9l-3.9 3.9l-3.9 -3.9zM271.7 371.1l3.9 3.9l-3.9 3.9l-3.9 -3.9zM103.7 369.9l3.9 3.9l-3.9 3.9l-3.9 -3.9zM256.5 371.4l3.9 3.9l-3.9 3.9l-3.9 -3.9zM167.3 371.1l3.9 3.9l-3.9 3.9l-3.9 -3.9zM131.1 370.9l3.9 3.9l-3.9 3.9l-3.9 -3.9zM280.3 372.1l3.9 3.9l-3.9 3.9l-3.9 -3.9zM393.2 373.2l3.9 3.9l-3.9 3.9l-3.9 -3.9zM151.0 371.8l3.9 3.9l-3.9 3.9l-3.9 -3.9zM248.1 372.6l3.9 3.9l-3.9 3.9l-3.9 -3.9zM156.1 373.3l3.9 3.9l-3.9 3.9l-3.9 -3.9zM94.0 372.9l3.9 3.9l-3.9 3.9l-3.9 -3.9zM382.6 375.5l3.9 3.9l-3.9 3.9l-3.9 -3.9zM31.9 373.0l3.9 3.9l-3.9 3.9l-3.9 -3.9zM274.2 375.4l3.9 3.9l-3.9 3.9l-3.9 -3.9zM75.8 374.0l3.9 3.9l-3.9 3.9l-3.9 -3.9zM179.5 374.9l3.9 3.9l-3.9 3.9l-3.9 -3.9zM138.3 374.7l3.9 3.9l-3.9 3.9l-3.9 -3.9zM262.5 375.8l3.9 3.9l-3.9 3.9l-3.9 -3.9zM68.4 374.4l3.9 3.9l-3.9 3.9l-3.9 -3.9zM123.6 374.8l3.9 3.9l-3.9 3.9l-3.9 -3.9zM104.2 374.7l3.9 3.9l-3.9 3.9l-3.9 -3.9zM163.7 375.2l3.9 3.9l-3.9 3.9l-3.9 -3.9zM372.3 377.0l3.9 3.9l-3.9 3.9l-3.9 -3.9zM36.0 374.4l3.9 3.9l-3.9 3.9l-3.9 -3.9zM119.6 375.1l3.9 3.9l-3.9 3.9l-3.9 -3.9zM81.3 374.9l3.9 3.9l-3.9 3.9l-3.9 -3.9zM183.5 375.8l3.9 3.9l-3.9 3.9l-3.9 -3.9zM112.9 375.4l3.9 3.9l-3.9 3.9l-3.9 -3.9zM55.8 375.0l3.9 3.9l-3.9 3.9l-3.9 -3.9zM87.6 375.3l3.9 3.9l-3.9 3.9l-3.9 -3.9zM99.8 375.5l3.9 3.9l-3.9 3.9l-3.9 -3.9zM266.5 376.8l3.9 3.9l-3.9 3.9l-3.9 -3.9zM393.0 378.1l3.9 3.9l-3.9 3.9l-3.9 -3.9zM167.3 377.0l3.9 3.9l-3.9 3.9l-3.9 -3.9zM51.1 376.3l3.9 3.9l-3.9 3.9l-3.9 -3.9zM388.5 379.2l3.9 3.9l-3.9 3.9l-3.9 -3.9zM231.3 378.2l3.9 3.9l-3.9 3.9l-3.9 -3.9zM377.0 379.6l3.9 3.9l-3.9 3.9l-3.9 -3.9zM239.1 378.7l3.9 3.9l-3.9 3.9l-3.9 -3.9zM92.4 377.9l3.9 3.9l-3.9 3.9l-3.9 -3.9zM44.5 378.0l3.9 3.9l-3.9 3.9l-3.9 -3.9zM200.6 379.3l3.9 3.9l-3.9 3.9l-3.9 -3.9zM367.8 380.8l3.9 3.9l-3.9 3.9l-3.9 -3.9zM117.3 379.0l3.9 3.9l-3.9 3.9l-3.9 -3.9zM73.9 378.8l3.9 3.9l-3.9 3.9l-3.9 -3.9zM142.7 379.4l3.9 3.9l-3.9 3.9l-3.9 -3.9zM226.8 380.1l3.9 3.9l-3.9 3.9l-3.9 -3.9zM128.1 379.4l3.9 3.9l-3.9 3.9l-3.9 -3.9zM63.7 379.0l3.9 3.9l-3.9 3.9l-3.9 -3.9zM183.5 380.1l3.9 3.9l-3.9 3.9l-3.9 -3.9zM398.2 381.9l3.9 3.9l-3.9 3.9l-3.9 -3.9zM68.2 379.5l3.9 3.9l-3.9 3.9l-3.9 -3.9zM80.5 379.7l3.9 3.9l-3.9 3.9l-3.9 -3.9zM122.2 380.1l3.9 3.9l-3.9 3.9l-3.9 -3.9zM106.6 380.4l3.9 3.9l-3.9 3.9l-3.9 -3.9zM247.4 381.9l3.9 3.9l-3.9 3.9l-3.9 -3.9zM155.6 381.2l3.9 3.9l-3.9 3.9l-3.9 -3.9zM381.3 383.2l3.9 3.9l-3.9 3.9l-3.9 -3.9zM221.7 382.3l3.9 3.9l-3.9 3.9l-3.9 -3.9zM394.1 384.2l3.9 3.9l-3.9 3.9l-3.9 -3.9zM147.9 382.3l3.9 3.9l-3.9 3.9l-3.9 -3.9zM167.8 382.5l3.9 3.9l-3.9 3.9l-3.9 -3.9zM188.2 382.7l3.9 3.9l-3.9 3.9l-3.9 -3.9zM162.0 382.6l3.9 3.9l-3.9 3.9l-3.9 -3.9zM179.6 382.7l3.9 3.9l-3.9 3.9l-3.9 -3.9zM206.8 383.0l3.9 3.9l-3.9 3.9l-3.9 -3.9zM241.1 383.3l3.9 3.9l-3.9 3.9l-3.9 -3.9zM370.9 384.6l3.9 3.9l-3.9 3.9l-3.9 -3.9zM48.5 382.4l3.9 3.9l-3.9 3.9l-3.9 -3.9zM99.3 383.4l3.9 3.9l-3.9 3.9l-3.9 -3.9zM95.0 383.5l3.9 3.9l-3.9 3.9l-3.9 -3.9zM254.0 384.8l3.9 3.9l-3.9 3.9l-3.9 -3.9zM214.0 384.7l3.9 3.9l-3.9 3.9l-3.9 -3.9zM227.3 385.1l3.9 3.9l-3.9 3.9l-3.9 -3.9zM73.0 383.9l3.9 3.9l-3.9 3.9l-3.9 -3.9zM182.9 385.0l3.9 3.9l-3.9 3.9l-3.9 -3.9zM133.9 384.7l3.9 3.9l-3.9 3.9l-3.9 -3.9zM398.8 386.8l3.9 3.9l-3.9 3.9l-3.9 -3.9zM259.2 385.8l3.9 3.9l-3.9 3.9l-3.9 -3.9zM35.2 384.6l3.9 3.9l-3.9 3.9l-3.9 -3.9zM83.2 385.4l3.9 3.9l-3.9 3.9l-3.9 -3.9zM144.5 386.0l3.9 3.9l-3.9 3.9l-3.9 -3.9zM245.9 386.9l3.9 3.9l-3.9 3.9l-3.9 -3.9zM124.9 386.0l3.9 3.9l-3.9 3.9l-3.9 -3.9zM377.8 388.0l3.9 3.9l-3.9 3.9l-3.9 -3.9zM172.8 386.4l3.9 3.9l-3.9 3.9l-3.9 -3.9zM45.2 385.5l3.9 3.9l-3.9 3.9l-3.9 -3.9zM162.2 386.8l3.9 3.9l-3.9 3.9l-3.9 -3.9zM218.2 387.5l3.9 3.9l-3.9 3.9l-3.9 -3.9zM235.5 387.7l3.9 3.9l-3.9 3.9l-3.9 -3.9zM150.3 387.4l3.9 3.9l-3.9 3.9l-3.9 -3.9zM98.1 387.2l3.9 3.9l-3.9 3.9l-3.9 -3.9zM387.1 389.6l3.9 3.9l-3.9 3.9l-3.9 -3.9zM55.1 387.3l3.9 3.9l-3.9 3.9l-3.9 -3.9zM223.2 388.6l3.9 3.9l-3.9 3.9l-3.9 -3.9zM166.9 388.2l3.9 3.9l-3.9 3.9l-3.9 -3.9zM87.0 387.9l3.9 3.9l-3.9 3.9l-3.9 -3.9zM39.9 387.6l3.9 3.9l-3.9 3.9l-3.9 -3.9zM132.5 388.7l3.9 3.9l-3.9 3.9l-3.9 -3.9zM141.5 388.9l3.9 3.9l-3.9 3.9l-3.9 -3.9zM196.8 389.5l3.9 3.9l-3.9 3.9l-3.9 -3.9zM60.8 388.5l3.9 3.9l-3.9 3.9l-3.9 -3.9zM35.0 388.5l3.9 3.9l-3.9 3.9l-3.9 -3.9zM93.0 389.1l3.9 3.9l-3.9 3.9l-3.9 -3.9zM74.0 389.1l3.9 3.9l-3.9 3.9l-3.9 -3.9zM103.6 389.6l3.9 3.9l-3.9 3.9l-3.9 -3.9zM50.5 389.2l3.9 3.9l-3.9 3.9l-3.9 -3.9zM192.4 390.4l3.9 3.9l-3.9 3.9l-3.9 -3.9zM108.7 389.9l3.9 3.9l-3.9 3.9l-3.9 -3.9zM353.8 391.9l3.9 3.9l-3.9 3.9l-3.9 -3.9zM81.5 389.9l3.9 3.9l-3.9 3.9l-3.9 -3.9zM373.4 392.4l3.9 3.9l-3.9 3.9l-3.9 -3.9zM155.7 390.8l3.9 3.9l-3.9 3.9l-3.9 -3.9zM136.1 391.1l3.9 3.9l-3.9 3.9l-3.9 -3.9zM125.5 391.1l3.9 3.9l-3.9 3.9l-3.9 -3.9zM160.2 391.4l3.9 3.9l-3.9 3.9l-3.9 -3.9zM171.8 391.7l3.9 3.9l-3.9 3.9l-3.9 -3.9zM42.2 391.0l3.9 3.9l-3.9 3.9l-3.9 -3.9zM200.1 392.4l3.9 3.9l-3.9 3.9l-3.9 -3.9zM214.9 392.6l3.9 3.9l-3.9 3.9l-3.9 -3.9zM166.2 392.3l3.9 3.9l-3.9 3.9l-3.9 -3.9zM248.4 393.4l3.9 3.9l-3.9 3.9l-3.9 -3.9zM350.1 394.3l3.9 3.9l-3.9 3.9l-3.9 -3.9zM143.9 392.7l3.9 3.9l-3.9 3.9l-3.9 -3.9zM148.6 392.9l3.9 3.9l-3.9 3.9l-3.9 -3.9zM239.3 393.9l3.9 3.9l-3.9 3.9l-3.9 -3.9zM386.0 395.2l3.9 3.9l-3.9 3.9l-3.9 -3.9zM65.9 392.8l3.9 3.9l-3.9 3.9l-3.9 -3.9zM179.1 393.7l3.9 3.9l-3.9 3.9l-3.9 -3.9zM398.7 395.7l3.9 3.9l-3.9 3.9l-3.9 -3.9zM243.4 394.6l3.9 3.9l-3.9 3.9l-3.9 -3.9zM33.7 393.0l3.9 3.9l-3.9 3.9l-3.9 -3.9zM192.8 394.4l3.9 3.9l-3.9 3.9l-3.9 -3.9zM88.9 393.8l3.9 3.9l-3.9 3.9l-3.9 -3.9zM132.8 394.3l3.9 3.9l-3.9 3.9l-3.9 -3.9zM121.1 394.4l3.9 3.9l-3.9 3.9l-3.9 -3.9zM95.6 394.4l3.9 3.9l-3.9 3.9l-3.9 -3.9zM221.0 395.4l3.9 3.9l-3.9 3.9l-3.9 -3.9zM102.4 394.5l3.9 3.9l-3.9 3.9l-3.9 -3.9zM54.9 394.5l3.9 3.9l-3.9 3.9l-3.9 -3.9zM356.8 396.8l3.9 3.9l-3.9 3.9l-3.9 -3.9zM381.7 397.2l3.9 3.9l-3.9 3.9l-3.9 -3.9zM226.8 396.2l3.9 3.9l-3.9 3.9l-3.9 -3.9zM234.3 396.5l3.9 3.9l-3.9 3.9l-3.9 -3.9zM116.9 395.6l3.9 3.9l-3.9 3.9l-3.9 -3.9zM79.0 395.6l3.9 3.9l-3.9 3.9l-3.9 -3.9zM184.2 396.4l3.9 3.9l-3.9 3.9l-3.9 -3.9zM342.1 397.8l3.9 3.9l-3.9 3.9l-3.9 -3.9zM140.5 396.4l3.9 3.9l-3.9 3.9l-3.9 -3.9zM374.5 398.7l3.9 3.9l-3.9 3.9l-3.9 -3.9zM156.6 397.2l3.9 3.9l-3.9 3.9l-3.9 -3.9zM176.3 397.5l3.9 3.9l-3.9 3.9l-3.9 -3.9zM212.0 397.9l3.9 3.9l-3.9 3.9l-3.9 -3.9zM135.5 397.4l3.9 3.9l-3.9 3.9l-3.9 -3.9zM396.5 399.6l3.9 3.9l-3.9 3.9l-3.9 -3.9zM240.6 398.9l3.9 3.9l-3.9 3.9l-3.9 -3.9zM365.2 399.9l3.9 3.9l-3.9 3.9l-3.9 -3.9zM359.4 399.9l3.9 3.9l-3.9 3.9l-3.9 -3.9zM150.1 398.3l3.9 3.9l-3.9 3.9l-3.9 -3.9zM217.3 399.0l3.9 3.9l-3.9 3.9l-3.9 -3.9zM103.9 398.2l3.9 3.9l-3.9 3.9l-3.9 -3.9zM352.6 400.6l3.9 3.9l-3.9 3.9l-3.9 -3.9zM47.2 398.4l3.9 3.9l-3.9 3.9l-3.9 -3.9zM123.7 399.2l3.9 3.9l-3.9 3.9l-3.9 -3.9zM112.4 399.8l3.9 3.9l-3.9 3.9l-3.9 -3.9zM198.6 400.5l3.9 3.9l-3.9 3.9l-3.9 -3.9zM92.2 399.8l3.9 3.9l-3.9 3.9l-3.9 -3.9zM51.4 399.5l3.9 3.9l-3.9 3.9l-3.9 -3.9zM84.9 400.1l3.9 3.9l-3.9 3.9l-3.9 -3.9zM227.7 401.5l3.9 3.9l-3.9 3.9l-3.9 -3.9zM222.9 401.6l3.9 3.9l-3.9 3.9l-3.9 -3.9zM383.9 402.8l3.9 3.9l-3.9 3.9l-3.9 -3.9zM69.1 400.5l3.9 3.9l-3.9 3.9l-3.9 -3.9zM391.3 403.2l3.9 3.9l-3.9 3.9l-3.9 -3.9zM73.2 400.9l3.9 3.9l-3.9 3.9l-3.9 -3.9zM187.7 401.8l3.9 3.9l-3.9 3.9l-3.9 -3.9zM152.0 401.8l3.9 3.9l-3.9 3.9l-3.9 -3.9zM357.2 403.6l3.9 3.9l-3.9 3.9l-3.9 -3.9zM178.7 402.4l3.9 3.9l-3.9 3.9l-3.9 -3.9zM77.9 401.8l3.9 3.9l-3.9 3.9l-3.9 -3.9zM121.4 402.5l3.9 3.9l-3.9 3.9l-3.9 -3.9zM215.4 403.4l3.9 3.9l-3.9 3.9l-3.9 -3.9zM400.8 405.1l3.9 3.9l-3.9 3.9l-3.9 -3.9zM107.1 403.4l3.9 3.9l-3.9 3.9l-3.9 -3.9zM174.8 404.1l3.9 3.9l-3.9 3.9l-3.9 -3.9zM169.7 404.2l3.9 3.9l-3.9 3.9l-3.9 -3.9zM348.7 405.8l3.9 3.9l-3.9 3.9l-3.9 -3.9zM242.0 405.1l3.9 3.9l-3.9 3.9l-3.9 -3.9zM387.0 406.4l3.9 3.9l-3.9 3.9l-3.9 -3.9zM51.5 404.0l3.9 3.9l-3.9 3.9l-3.9 -3.9zM381.3 406.7l3.9 3.9l-3.9 3.9l-3.9 -3.9zM70.5 404.4l3.9 3.9l-3.9 3.9l-3.9 -3.9zM139.9 405.2l3.9 3.9l-3.9 3.9l-3.9 -3.9zM234.1 406.1l3.9 3.9l-3.9 3.9l-3.9 -3.9zM85.2 405.0l3.9 3.9l-3.9 3.9l-3.9 -3.9zM56.0 404.8l3.9 3.9l-3.9 3.9l-3.9 -3.9zM227.7 406.3l3.9 3.9l-3.9 3.9l-3.9 -3.9zM147.2 405.7l3.9 3.9l-3.9 3.9l-3.9 -3.9zM154.3 405.8l3.9 3.9l-3.9 3.9l-3.9 -3.9zM34.5 405.1l3.9 3.9l-3.9 3.9l-3.9 -3.9zM111.2 405.7l3.9 3.9l-3.9 3.9l-3.9 -3.9zM66.5 405.4l3.9 3.9l-3.9 3.9l-3.9 -3.9zM96.9 406.0l3.9 3.9l-3.9 3.9l-3.9 -3.9zM246.2 407.2l3.9 3.9l-3.9 3.9l-3.9 -3.9zM366.4 408.3l3.9 3.9l-3.9 3.9l-3.9 -3.9zM180.7 407.9l3.9 3.9l-3.9 3.9l-3.9 -3.9zM43.1 407.0l3.9 3.9l-3.9 3.9l-3.9 -3.9zM159.9 407.9l3.9 3.9l-3.9 3.9l-3.9 -3.9zM190.5 408.3l3.9 3.9l-3.9 3.9l-3.9 -3.9zM239.1 408.8l3.9 3.9l-3.9 3.9l-3.9 -3.9zM169.6 408.5l3.9 3.9l-3.9 3.9l-3.9 -3.9zM375.2 410.6l3.9 3.9l-3.9 3.9l-3.9 -3.9zM150.4 409.1l3.9 3.9l-3.9 3.9l-3.9 -3.9zM394.5 411.1l3.9 3.9l-3.9 3.9l-3.9 -3.9zM211.8 409.7l3.9 3.9l-3.9 3.9l-3.9 -3.9zM356.7 410.9l3.9 3.9l-3.9 3.9l-3.9 -3.9zM135.6 409.2l3.9 3.9l-3.9 3.9l-3.9 -3.9zM71.4 409.0l3.9 3.9l-3.9 3.9l-3.9 -3.9zM61.4 409.0l3.9 3.9l-3.9 3.9l-3.9 -3.9zM195.1 410.4l3.9 3.9l-3.9 3.9l-3.9 -3.9zM342.6 411.9l3.9 3.9l-3.9 3.9l-3.9 -3.9zM100.1 410.1l3.9 3.9l-3.9 3.9l-3.9 -3.9zM386.8 412.7l3.9 3.9l-3.9 3.9l-3.9 -3.9zM207.7 411.4l3.9 3.9l-3.9 3.9l-3.9 -3.9zM79.2 410.7l3.9 3.9l-3.9 3.9l-3.9 -3.9zM109.7 411.0l3.9 3.9l-3.9 3.9l-3.9 -3.9zM243.6 412.1l3.9 3.9l-3.9 3.9l-3.9 -3.9zM140.6 411.3l3.9 3.9l-3.9 3.9l-3.9 -3.9zM123.3 411.3l3.9 3.9l-3.9 3.9l-3.9 -3.9zM146.5 411.5l3.9 3.9l-3.9 3.9l-3.9 -3.9zM218.1 412.5l3.9 3.9l-3.9 3.9l-3.9 -3.9zM131.1 411.8l3.9 3.9l-3.9 3.9l-3.9 -3.9zM201.4 412.6l3.9 3.9l-3.9 3.9l-3.9 -3.9zM364.0 414.1l3.9 3.9l-3.9 3.9l-3.9 -3.9zM90.5 412.1l3.9 3.9l-3.9 3.9l-3.9 -3.9zM180.3 412.8l3.9 3.9l-3.9 3.9l-3.9 -3.9zM54.3 412.1l3.9 3.9l-3.9 3.9l-3.9 -3.9zM339.1 414.3l3.9 3.9l-3.9 3.9l-3.9 -3.9zM158.3 413.0l3.9 3.9l-3.9 3.9l-3.9 -3.9zM41.0 412.2l3.9 3.9l-3.9 3.9l-3.9 -3.9zM32.4 412.2l3.9 3.9l-3.9 3.9l-3.9 -3.9zM168.1 413.4l3.9 3.9l-3.9 3.9l-3.9 -3.9zM213.9 414.0l3.9 3.9l-3.9 3.9l-3.9 -3.9zM190.7 413.8l3.9 3.9l-3.9 3.9l-3.9 -3.9zM381.6 415.3l3.9 3.9l-3.9 3.9l-3.9 -3.9zM96.3 413.3l3.9 3.9l-3.9 3.9l-3.9 -3.9zM48.1 413.1l3.9 3.9l-3.9 3.9l-3.9 -3.9zM333.5 416.1l3.9 3.9l-3.9 3.9l-3.9 -3.9zM225.1 415.5l3.9 3.9l-3.9 3.9l-3.9 -3.9zM239.0 415.7l3.9 3.9l-3.9 3.9l-3.9 -3.9zM349.2 416.6l3.9 3.9l-3.9 3.9l-3.9 -3.9zM368.9 417.4l3.9 3.9l-3.9 3.9l-3.9 -3.9zM69.1 415.1l3.9 3.9l-3.9 3.9l-3.9 -3.9zM152.5 415.8l3.9 3.9l-3.9 3.9l-3.9 -3.9zM141.8 415.8l3.9 3.9l-3.9 3.9l-3.9 -3.9zM137.2 415.8l3.9 3.9l-3.9 3.9l-3.9 -3.9zM344.2 417.4l3.9 3.9l-3.9 3.9l-3.9 -3.9zM146.7 416.0l3.9 3.9l-3.9 3.9l-3.9 -3.9zM354.7 417.7l3.9 3.9l-3.9 3.9l-3.9 -3.9zM378.3 417.9l3.9 3.9l-3.9 3.9l-3.9 -3.9zM200.3 416.8l3.9 3.9l-3.9 3.9l-3.9 -3.9zM112.9 416.3l3.9 3.9l-3.9 3.9l-3.9 -3.9zM128.8 416.5l3.9 3.9l-3.9 3.9l-3.9 -3.9zM163.0 416.8l3.9 3.9l-3.9 3.9l-3.9 -3.9zM80.3 416.2l3.9 3.9l-3.9 3.9l-3.9 -3.9zM182.2 417.0l3.9 3.9l-3.9 3.9l-3.9 -3.9zM210.1 417.3l3.9 3.9l-3.9 3.9l-3.9 -3.9zM386.2 419.1l3.9 3.9l-3.9 3.9l-3.9 -3.9zM122.3 417.1l3.9 3.9l-3.9 3.9l-3.9 -3.9zM396.7 419.6l3.9 3.9l-3.9 3.9l-3.9 -3.9zM49.3 417.4l3.9 3.9l-3.9 3.9l-3.9 -3.9zM217.5 419.1l3.9 3.9l-3.9 3.9l-3.9 -3.9zM105.7 418.5l3.9 3.9l-3.9 3.9l-3.9 -3.9zM231.7 419.5l3.9 3.9l-3.9 3.9l-3.9 -3.9zM101.2 418.6l3.9 3.9l-3.9 3.9l-3.9 -3.9zM75.7 418.5l3.9 3.9l-3.9 3.9l-3.9 -3.9zM66.4 418.9l3.9 3.9l-3.9 3.9l-3.9 -3.9zM356.5 421.7l3.9 3.9l-3.9 3.9l-3.9 -3.9zM84.9 420.2l3.9 3.9l-3.9 3.9l-3.9 -3.9zM116.4 421.1l3.9 3.9l-3.9 3.9l-3.9 -3.9zM344.3 422.9l3.9 3.9l-3.9 3.9l-3.9 -3.9zM321.8 422.8l3.9 3.9l-3.9 3.9l-3.9 -3.9zM70.6 420.8l3.9 3.9l-3.9 3.9l-3.9 -3.9zM327.5 423.5l3.9 3.9l-3.9 3.9l-3.9 -3.9zM334.7 423.6l3.9 3.9l-3.9 3.9l-3.9 -3.9zM151.8 422.4l3.9 3.9l-3.9 3.9l-3.9 -3.9zM203.0 423.0l3.9 3.9l-3.9 3.9l-3.9 -3.9zM141.0 422.5l3.9 3.9l-3.9 3.9l-3.9 -3.9zM223.7 423.3l3.9 3.9l-3.9 3.9l-3.9 -3.9zM61.3 422.1l3.9 3.9l-3.9 3.9l-3.9 -3.9zM209.1 423.3l3.9 3.9l-3.9 3.9l-3.9 -3.9zM43.9 422.1l3.9 3.9l-3.9 3.9l-3.9 -3.9zM146.1 423.0l3.9 3.9l-3.9 3.9l-3.9 -3.9zM53.6 422.4l3.9 3.9l-3.9 3.9l-3.9 -3.9zM362.0 425.4l3.9 3.9l-3.9 3.9l-3.9 -3.9zM219.8 424.3l3.9 3.9l-3.9 3.9l-3.9 -3.9zM136.1 423.6l3.9 3.9l-3.9 3.9l-3.9 -3.9zM110.0 423.6l3.9 3.9l-3.9 3.9l-3.9 -3.9zM130.8 423.9l3.9 3.9l-3.9 3.9l-3.9 -3.9zM48.6 423.6l3.9 3.9l-3.9 3.9l-3.9 -3.9zM338.4 426.9l3.9 3.9l-3.9 3.9l-3.9 -3.9zM353.7 427.7l3.9 3.9l-3.9 3.9l-3.9 -3.9zM119.6 426.0l3.9 3.9l-3.9 3.9l-3.9 -3.9zM30.5 425.5l3.9 3.9l-3.9 3.9l-3.9 -3.9zM112.8 426.5l3.9 3.9l-3.9 3.9l-3.9 -3.9zM42.2 426.2l3.9 3.9l-3.9 3.9l-3.9 -3.9zM334.8 429.3l3.9 3.9l-3.9 3.9l-3.9 -3.9zM365.4 429.6l3.9 3.9l-3.9 3.9l-3.9 -3.9zM359.1 429.7l3.9 3.9l-3.9 3.9l-3.9 -3.9zM108.1 428.3l3.9 3.9l-3.9 3.9l-3.9 -3.9zM207.6 429.4l3.9 3.9l-3.9 3.9l-3.9 -3.9zM320.9 430.4l3.9 3.9l-3.9 3.9l-3.9 -3.9zM343.6 431.2l3.9 3.9l-3.9 3.9l-3.9 -3.9zM123.0 429.5l3.9 3.9l-3.9 3.9l-3.9 -3.9zM349.4 431.4l3.9 3.9l-3.9 3.9l-3.9 -3.9zM59.2 429.7l3.9 3.9l-3.9 3.9l-3.9 -3.9zM45.4 430.3l3.9 3.9l-3.9 3.9l-3.9 -3.9zM216.0 431.9l3.9 3.9l-3.9 3.9l-3.9 -3.9zM55.3 430.8l3.9 3.9l-3.9 3.9l-3.9 -3.9zM77.3 431.2l3.9 3.9l-3.9 3.9l-3.9 -3.9zM34.1 431.4l3.9 3.9l-3.9 3.9l-3.9 -3.9zM359.8 435.1l3.9 3.9l-3.9 3.9l-3.9 -3.9zM149.4 433.4l3.9 3.9l-3.9 3.9l-3.9 -3.9zM344.0 435.3l3.9 3.9l-3.9 3.9l-3.9 -3.9zM65.5 433.3l3.9 3.9l-3.9 3.9l-3.9 -3.9zM70.0 434.0l3.9 3.9l-3.9 3.9l-3.9 -3.9zM133.9 434.8l3.9 3.9l-3.9 3.9l-3.9 -3.9zM44.5 434.6l3.9 3.9l-3.9 3.9l-3.9 -3.9zM50.9 434.8l3.9 3.9l-3.9 3.9l-3.9 -3.9zM142.3 435.8l3.9 3.9l-3.9 3.9l-3.9 -3.9zM340.7 437.5l3.9 3.9l-3.9 3.9l-3.9 -3.9zM126.0 436.5l3.9 3.9l-3.9 3.9l-3.9 -3.9zM57.9 436.3l3.9 3.9l-3.9 3.9l-3.9 -3.9zM35.0 436.2l3.9 3.9l-3.9 3.9l-3.9 -3.9zM318.2 438.6l3.9 3.9l-3.9 3.9l-3.9 -3.9zM30.1 436.4l3.9 3.9l-3.9 3.9l-3.9 -3.9zM323.0 439.2l3.9 3.9l-3.9 3.9l-3.9 -3.9zM137.7 437.9l3.9 3.9l-3.9 3.9l-3.9 -3.9zM336.3 440.3l3.9 3.9l-3.9 3.9l-3.9 -3.9zM117.8 438.7l3.9 3.9l-3.9 3.9l-3.9 -3.9zM47.0 438.4l3.9 3.9l-3.9 3.9l-3.9 -3.9zM314.2 441.3l3.9 3.9l-3.9 3.9l-3.9 -3.9zM348.0 442.2l3.9 3.9l-3.9 3.9l-3.9 -3.9zM29.2 440.4l3.9 3.9l-3.9 3.9l-3.9 -3.9zM330.9 443.5l3.9 3.9l-3.9 3.9l-3.9 -3.9zM54.5 441.3l3.9 3.9l-3.9 3.9l-3.9 -3.9zM338.7 443.6l3.9 3.9l-3.9 3.9l-3.9 -3.9zM322.8 443.9l3.9 3.9l-3.9 3.9l-3.9 -3.9zM133.1 442.6l3.9 3.9l-3.9 3.9l-3.9 -3.9zM34.3 442.6l3.9 3.9l-3.9 3.9l-3.9 -3.9zM123.4 443.3l3.9 3.9l-3.9 3.9l-3.9 -3.9zM145.8 445.1l3.9 3.9l-3.9 3.9l-3.9 -3.9zM129.6 445.8l3.9 3.9l-3.9 3.9l-3.9 -3.9zM43.5 445.4l3.9 3.9l-3.9 3.9l-3.9 -3.9zM337.1 448.0l3.9 3.9l-3.9 3.9l-3.9 -3.9zM330.6 448.5l3.9 3.9l-3.9 3.9l-3.9 -3.9zM134.6 448.2l3.9 3.9l-3.9 3.9l-3.9 -3.9zM39.6 447.7l3.9 3.9l-3.9 3.9l-3.9 -3.9zM121.7 448.6l3.9 3.9l-3.9 3.9l-3.9 -3.9zM345.9 450.4l3.9 3.9l-3.9 3.9l-3.9 -3.9zM44.4 449.7l3.9 3.9l-3.9 3.9l-3.9 -3.9zM315.8 451.9l3.9 3.9l-3.9 3.9l-3.9 -3.9zM336.1 452.4l3.9 3.9l-3.9 3.9l-3.9 -3.9zM23.6 450.9l3.9 3.9l-3.9 3.9l-3.9 -3.9zM144.6 452.5l3.9 3.9l-3.9 3.9l-3.9 -3.9zM338.4 455.8l3.9 3.9l-3.9 3.9l-3.9 -3.9zM18.9 453.8l3.9 3.9l-3.9 3.9l-3.9 -3.9zM320.7 456.6l3.9 3.9l-3.9 3.9l-3.9 -3.9zM121.0 455.7l3.9 3.9l-3.9 3.9l-3.9 -3.9zM316.8 457.6l3.9 3.9l-3.9 3.9l-3.9 -3.9zM349.9 459.4l3.9 3.9l-3.9 3.9l-3.9 -3.9zM152.3 458.4l3.9 3.9l-3.9 3.9l-3.9 -3.9zM338.0 459.9l3.9 3.9l-3.9 3.9l-3.9 -3.9zM161.0 458.6l3.9 3.9l-3.9 3.9l-3.9 -3.9zM26.2 458.0l3.9 3.9l-3.9 3.9l-3.9 -3.9zM17.1 458.0l3.9 3.9l-3.9 3.9l-3.9 -3.9zM341.8 460.8l3.9 3.9l-3.9 3.9l-3.9 -3.9zM328.4 461.5l3.9 3.9l-3.9 3.9l-3.9 -3.9zM128.5 460.6l3.9 3.9l-3.9 3.9l-3.9 -3.9zM145.2 461.3l3.9 3.9l-3.9 3.9l-3.9 -3.9zM10.7 460.5l3.9 3.9l-3.9 3.9l-3.9 -3.9zM335.8 463.7l3.9 3.9l-3.9 3.9l-3.9 -3.9zM135.9 462.4l3.9 3.9l-3.9 3.9l-3.9 -3.9zM141.5 463.0l3.9 3.9l-3.9 3.9l-3.9 -3.9zM151.2 463.1l3.9 3.9l-3.9 3.9l-3.9 -3.9zM318.1 465.1l3.9 3.9l-3.9 3.9l-3.9 -3.9zM17.8 463.1l3.9 3.9l-3.9 3.9l-3.9 -3.9zM127.5 464.7l3.9 3.9l-3.9 3.9l-3.9 -3.9zM122.4 465.3l3.9 3.9l-3.9 3.9l-3.9 -3.9zM11.6 464.4l3.9 3.9l-3.9 3.9l-3.9 -3.9zM162.0 465.8l3.9 3.9l-3.9 3.9l-3.9 -3.9zM156.6 466.0l3.9 3.9l-3.9 3.9l-3.9 -3.9zM21.7 465.1l3.9 3.9l-3.9 3.9l-3.9 -3.9zM309.4 467.9l3.9 3.9l-3.9 3.9l-3.9 -3.9zM293.4 467.9l3.9 3.9l-3.9 3.9l-3.9 -3.9zM340.3 468.4l3.9 3.9l-3.9 3.9l-3.9 -3.9zM328.7 468.3l3.9 3.9l-3.9 3.9l-3.9 -3.9zM178.6 468.6l3.9 3.9l-3.9 3.9l-3.9 -3.9zM125.9 468.5l3.9 3.9l-3.9 3.9l-3.9 -3.9zM345.4 470.9l3.9 3.9l-3.9 3.9l-3.9 -3.9zM147.5 469.8l3.9 3.9l-3.9 3.9l-3.9 -3.9zM143.4 469.8l3.9 3.9l-3.9 3.9l-3.9 -3.9zM134.8 470.5l3.9 3.9l-3.9 3.9l-3.9 -3.9zM153.7 470.7l3.9 3.9l-3.9 3.9l-3.9 -3.9zM16.5 469.7l3.9 3.9l-3.9 3.9l-3.9 -3.9zM311.8 473.0l3.9 3.9l-3.9 3.9l-3.9 -3.9zM298.6 473.1l3.9 3.9l-3.9 3.9l-3.9 -3.9zM338.6 473.5l3.9 3.9l-3.9 3.9l-3.9 -3.9zM330.3 473.7l3.9 3.9l-3.9 3.9l-3.9 -3.9zM324.9 473.7l3.9 3.9l-3.9 3.9l-3.9 -3.9zM348.4 474.1l3.9 3.9l-3.9 3.9l-3.9 -3.9zM319.9 473.9l3.9 3.9l-3.9 3.9l-3.9 -3.9zM279.7 475.1l3.9 3.9l-3.9 3.9l-3.9 -3.9zM271.8 475.2l3.9 3.9l-3.9 3.9l-3.9 -3.9zM263.2 475.5l3.9 3.9l-3.9 3.9l-3.9 -3.9zM301.4 476.1l3.9 3.9l-3.9 3.9l-3.9 -3.9zM114.6 474.9l3.9 3.9l-3.9 3.9l-3.9 -3.9zM305.9 476.8l3.9 3.9l-3.9 3.9l-3.9 -3.9zM150.1 475.6l3.9 3.9l-3.9 3.9l-3.9 -3.9zM124.9 475.4l3.9 3.9l-3.9 3.9l-3.9 -3.9zM132.6 475.5l3.9 3.9l-3.9 3.9l-3.9 -3.9zM163.1 476.1l3.9 3.9l-3.9 3.9l-3.9 -3.9zM329.8 477.6l3.9 3.9l-3.9 3.9l-3.9 -3.9zM168.7 476.5l3.9 3.9l-3.9 3.9l-3.9 -3.9zM283.1 477.5l3.9 3.9l-3.9 3.9l-3.9 -3.9zM18.5 476.3l3.9 3.9l-3.9 3.9l-3.9 -3.9zM111.3 477.2l3.9 3.9l-3.9 3.9l-3.9 -3.9zM138.2 478.0l3.9 3.9l-3.9 3.9l-3.9 -3.9zM159.9 478.3l3.9 3.9l-3.9 3.9l-3.9 -3.9zM293.1 479.4l3.9 3.9l-3.9 3.9l-3.9 -3.9zM267.5 479.3l3.9 3.9l-3.9 3.9l-3.9 -3.9zM155.2 478.5l3.9 3.9l-3.9 3.9l-3.9 -3.9zM143.1 478.7l3.9 3.9l-3.9 3.9l-3.9 -3.9zM287.6 480.4l3.9 3.9l-3.9 3.9l-3.9 -3.9zM147.4 479.3l3.9 3.9l-3.9 3.9l-3.9 -3.9zM190.0 479.8l3.9 3.9l-3.9 3.9l-3.9 -3.9zM345.5 482.0l3.9 3.9l-3.9 3.9l-3.9 -3.9zM30.6 480.2l3.9 3.9l-3.9 3.9l-3.9 -3.9zM337.8 482.7l3.9 3.9l-3.9 3.9l-3.9 -3.9zM173.6 481.4l3.9 3.9l-3.9 3.9l-3.9 -3.9zM167.0 481.4l3.9 3.9l-3.9 3.9l-3.9 -3.9zM281.7 482.6l3.9 3.9l-3.9 3.9l-3.9 -3.9zM10.2 480.6l3.9 3.9l-3.9 3.9l-3.9 -3.9zM260.3 482.7l3.9 3.9l-3.9 3.9l-3.9 -3.9zM150.9 481.8l3.9 3.9l-3.9 3.9l-3.9 -3.9zM117.7 481.8l3.9 3.9l-3.9 3.9l-3.9 -3.9zM298.8 483.8l3.9 3.9l-3.9 3.9l-3.9 -3.9zM109.1 482.6l3.9 3.9l-3.9 3.9l-3.9 -3.9zM277.9 484.3l3.9 3.9l-3.9 3.9l-3.9 -3.9zM315.7 485.9l3.9 3.9l-3.9 3.9l-3.9 -3.9zM333.0 486.5l3.9 3.9l-3.9 3.9l-3.9 -3.9zM324.5 486.5l3.9 3.9l-3.9 3.9l-3.9 -3.9zM138.5 485.2l3.9 3.9l-3.9 3.9l-3.9 -3.9zM176.7 485.7l3.9 3.9l-3.9 3.9l-3.9 -3.9zM156.2 485.8l3.9 3.9l-3.9 3.9l-3.9 -3.9zM186.5 486.3l3.9 3.9l-3.9 3.9l-3.9 -3.9zM292.7 487.4l3.9 3.9l-3.9 3.9l-3.9 -3.9zM287.7 487.5l3.9 3.9l-3.9 3.9l-3.9 -3.9zM115.5 486.6l3.9 3.9l-3.9 3.9l-3.9 -3.9zM104.8 486.8l3.9 3.9l-3.9 3.9l-3.9 -3.9zM205.7 487.8l3.9 3.9l-3.9 3.9l-3.9 -3.9zM190.4 487.8l3.9 3.9l-3.9 3.9l-3.9 -3.9zM341.7 489.2l3.9 3.9l-3.9 3.9l-3.9 -3.9zM261.9 488.7l3.9 3.9l-3.9 3.9l-3.9 -3.9zM130.6 487.8l3.9 3.9l-3.9 3.9l-3.9 -3.9zM144.5 488.0l3.9 3.9l-3.9 3.9l-3.9 -3.9zM181.8 488.4l3.9 3.9l-3.9 3.9l-3.9 -3.9zM250.1 489.0l3.9 3.9l-3.9 3.9l-3.9 -3.9zM195.1 488.6l3.9 3.9l-3.9 3.9l-3.9 -3.9zM135.8 488.1l3.9 3.9l-3.9 3.9l-3.9 -3.9zM305.6 489.5l3.9 3.9l-3.9 3.9l-3.9 -3.9zM270.2 489.4l3.9 3.9l-3.9 3.9l-3.9 -3.9zM171.0 488.9l3.9 3.9l-3.9 3.9l-3.9 -3.9zM18.4 488.0l3.9 3.9l-3.9 3.9l-3.9 -3.9zM139.9 489.4l3.9 3.9l-3.9 3.9l-3.9 -3.9zM325.4 491.1l3.9 3.9l-3.9 3.9l-3.9 -3.9zM120.8 489.7l3.9 3.9l-3.9 3.9l-3.9 -3.9zM159.3 490.4l3.9 3.9l-3.9 3.9l-3.9 -3.9zM266.0 491.4l3.9 3.9l-3.9 3.9l-3.9 -3.9zM299.0 491.7l3.9 3.9l-3.9 3.9l-3.9 -3.9zM177.5 491.6l3.9 3.9l-3.9 3.9l-3.9 -3.9zM24.3 490.4l3.9 3.9l-3.9 3.9l-3.9 -3.9zM283.7 492.5l3.9 3.9l-3.9 3.9l-3.9 -3.9zM9.7 490.6l3.9 3.9l-3.9 3.9l-3.9 -3.9zM168.4 492.2l3.9 3.9l-3.9 3.9l-3.9 -3.9zM185.3 492.5l3.9 3.9l-3.9 3.9l-3.9 -3.9zM104.8 492.5l3.9 3.9l-3.9 3.9l-3.9 -3.9zM234.0 493.6l3.9 3.9l-3.9 3.9l-3.9 -3.9zM315.7 494.3l3.9 3.9l-3.9 3.9l-3.9 -3.9zM189.9 493.4l3.9 3.9l-3.9 3.9l-3.9 -3.9zM162.9 493.6l3.9 3.9l-3.9 3.9l-3.9 -3.9zM273.3 494.5l3.9 3.9l-3.9 3.9l-3.9 -3.9zM135.6 493.4l3.9 3.9l-3.9 3.9l-3.9 -3.9zM203.0 494.1l3.9 3.9l-3.9 3.9l-3.9 -3.9zM311.0 494.9l3.9 3.9l-3.9 3.9l-3.9 -3.9zM341.3 495.5l3.9 3.9l-3.9 3.9l-3.9 -3.9zM123.4 494.0l3.9 3.9l-3.9 3.9l-3.9 -3.9zM297.4 496.1l3.9 3.9l-3.9 3.9l-3.9 -3.9zM293.2 496.1l3.9 3.9l-3.9 3.9l-3.9 -3.9zM147.5 495.2l3.9 3.9l-3.9 3.9l-3.9 -3.9zM279.2 496.7l3.9 3.9l-3.9 3.9l-3.9 -3.9zM158.3 495.9l3.9 3.9l-3.9 3.9l-3.9 -3.9zM176.7 496.3l3.9 3.9l-3.9 3.9l-3.9 -3.9zM238.4 496.8l3.9 3.9l-3.9 3.9l-3.9 -3.9zM95.0 495.7l3.9 3.9l-3.9 3.9l-3.9 -3.9zM320.2 497.8l3.9 3.9l-3.9 3.9l-3.9 -3.9zM261.7 497.7l3.9 3.9l-3.9 3.9l-3.9 -3.9zM269.9 497.8l3.9 3.9l-3.9 3.9l-3.9 -3.9zM186.8 497.3l3.9 3.9l-3.9 3.9l-3.9 -3.9zM101.9 496.6l3.9 3.9l-3.9 3.9l-3.9 -3.9zM142.0 497.1l3.9 3.9l-3.9 3.9l-3.9 -3.9zM11.4 496.1l3.9 3.9l-3.9 3.9l-3.9 -3.9zM248.5 498.1l3.9 3.9l-3.9 3.9l-3.9 -3.9zM196.9 497.9l3.9 3.9l-3.9 3.9l-3.9 -3.9zM90.4 497.3l3.9 3.9l-3.9 3.9l-3.9 -3.9zM126.7 497.7l3.9 3.9l-3.9 3.9l-3.9 -3.9zM106.5 497.8l3.9 3.9l-3.9 3.9l-3.9 -3.9zM336.0 499.8l3.9 3.9l-3.9 3.9l-3.9 -3.9zM118.9 498.8l3.9 3.9l-3.9 3.9l-3.9 -3.9zM253.1 500.1l3.9 3.9l-3.9 3.9l-3.9 -3.9zM132.6 499.5l3.9 3.9l-3.9 3.9l-3.9 -3.9zM275.3 500.7l3.9 3.9l-3.9 3.9l-3.9 -3.9zM153.6 499.9l3.9 3.9l-3.9 3.9l-3.9 -3.9zM161.7 500.1l3.9 3.9l-3.9 3.9l-3.9 -3.9zM208.3 500.5l3.9 3.9l-3.9 3.9l-3.9 -3.9zM147.3 500.1l3.9 3.9l-3.9 3.9l-3.9 -3.9zM316.6 501.5l3.9 3.9l-3.9 3.9l-3.9 -3.9zM306.0 501.5l3.9 3.9l-3.9 3.9l-3.9 -3.9zM25.7 499.2l3.9 3.9l-3.9 3.9l-3.9 -3.9zM189.3 500.6l3.9 3.9l-3.9 3.9l-3.9 -3.9zM281.0 502.0l3.9 3.9l-3.9 3.9l-3.9 -3.9zM239.4 501.8l3.9 3.9l-3.9 3.9l-3.9 -3.9zM265.1 502.8l3.9 3.9l-3.9 3.9l-3.9 -3.9zM171.3 502.3l3.9 3.9l-3.9 3.9l-3.9 -3.9zM327.4 503.6l3.9 3.9l-3.9 3.9l-3.9 -3.9zM116.5 502.0l3.9 3.9l-3.9 3.9l-3.9 -3.9zM338.2 503.8l3.9 3.9l-3.9 3.9l-3.9 -3.9zM299.4 503.8l3.9 3.9l-3.9 3.9l-3.9 -3.9zM13.1 501.7l3.9 3.9l-3.9 3.9l-3.9 -3.9zM128.1 502.7l3.9 3.9l-3.9 3.9l-3.9 -3.9zM192.6 503.7l3.9 3.9l-3.9 3.9l-3.9 -3.9zM258.5 504.3l3.9 3.9l-3.9 3.9l-3.9 -3.9zM165.0 503.8l3.9 3.9l-3.9 3.9l-3.9 -3.9zM199.3 504.4l3.9 3.9l-3.9 3.9l-3.9 -3.9zM399.9 506.4l3.9 3.9l-3.9 3.9l-3.9 -3.9zM22.4 503.6l3.9 3.9l-3.9 3.9l-3.9 -3.9zM180.0 504.9l3.9 3.9l-3.9 3.9l-3.9 -3.9zM155.4 504.8l3.9 3.9l-3.9 3.9l-3.9 -3.9zM17.2 504.0l3.9 3.9l-3.9 3.9l-3.9 -3.9zM283.6 506.3l3.9 3.9l-3.9 3.9l-3.9 -3.9zM94.4 505.0l3.9 3.9l-3.9 3.9l-3.9 -3.9zM321.1 507.2l3.9 3.9l-3.9 3.9l-3.9 -3.9zM292.0 506.9l3.9 3.9l-3.9 3.9l-3.9 -3.9zM133.9 505.8l3.9 3.9l-3.9 3.9l-3.9 -3.9zM267.2 506.9l3.9 3.9l-3.9 3.9l-3.9 -3.9z" fill="#5f646b" opacity="0.35"/><path d="M110.4 115.4l3.9 3.9l-3.9 3.9l-3.9 -3.9zM383.4 117.4l3.9 3.9l-3.9 3.9l-3.9 -3.9zM368.0 117.3l3.9 3.9l-3.9 3.9l-3.9 -3.9zM210.0 116.3l3.9 3.9l-3.9 3.9l-3.9 -3.9zM170.8 116.5l3.9 3.9l-3.9 3.9l-3.9 -3.9zM81.3 116.1l3.9 3.9l-3.9 3.9l-3.9 -3.9zM71.1 116.7l3.9 3.9l-3.9 3.9l-3.9 -3.9zM156.3 117.4l3.9 3.9l-3.9 3.9l-3.9 -3.9zM102.0 117.2l3.9 3.9l-3.9 3.9l-3.9 -3.9zM152.0 117.8l3.9 3.9l-3.9 3.9l-3.9 -3.9zM352.0 119.5l3.9 3.9l-3.9 3.9l-3.9 -3.9zM119.9 118.6l3.9 3.9l-3.9 3.9l-3.9 -3.9zM161.9 119.0l3.9 3.9l-3.9 3.9l-3.9 -3.9zM145.6 119.1l3.9 3.9l-3.9 3.9l-3.9 -3.9zM393.2 120.9l3.9 3.9l-3.9 3.9l-3.9 -3.9zM67.1 118.9l3.9 3.9l-3.9 3.9l-3.9 -3.9zM92.0 119.2l3.9 3.9l-3.9 3.9l-3.9 -3.9zM386.6 121.4l3.9 3.9l-3.9 3.9l-3.9 -3.9zM114.7 119.6l3.9 3.9l-3.9 3.9l-3.9 -3.9zM375.8 121.9l3.9 3.9l-3.9 3.9l-3.9 -3.9zM62.2 119.7l3.9 3.9l-3.9 3.9l-3.9 -3.9zM87.2 120.4l3.9 3.9l-3.9 3.9l-3.9 -3.9zM130.3 120.8l3.9 3.9l-3.9 3.9l-3.9 -3.9zM193.5 121.5l3.9 3.9l-3.9 3.9l-3.9 -3.9zM76.8 120.8l3.9 3.9l-3.9 3.9l-3.9 -3.9zM182.3 121.7l3.9 3.9l-3.9 3.9l-3.9 -3.9zM175.1 121.6l3.9 3.9l-3.9 3.9l-3.9 -3.9zM187.6 122.2l3.9 3.9l-3.9 3.9l-3.9 -3.9zM198.9 122.3l3.9 3.9l-3.9 3.9l-3.9 -3.9zM136.5 122.1l3.9 3.9l-3.9 3.9l-3.9 -3.9zM140.7 122.1l3.9 3.9l-3.9 3.9l-3.9 -3.9zM121.9 122.5l3.9 3.9l-3.9 3.9l-3.9 -3.9zM359.3 124.3l3.9 3.9l-3.9 3.9l-3.9 -3.9zM97.6 122.7l3.9 3.9l-3.9 3.9l-3.9 -3.9zM112.1 123.1l3.9 3.9l-3.9 3.9l-3.9 -3.9zM366.4 124.9l3.9 3.9l-3.9 3.9l-3.9 -3.9zM102.4 123.7l3.9 3.9l-3.9 3.9l-3.9 -3.9zM162.8 124.8l3.9 3.9l-3.9 3.9l-3.9 -3.9zM150.6 124.7l3.9 3.9l-3.9 3.9l-3.9 -3.9zM93.2 124.3l3.9 3.9l-3.9 3.9l-3.9 -3.9zM180.3 125.1l3.9 3.9l-3.9 3.9l-3.9 -3.9zM191.6 125.3l3.9 3.9l-3.9 3.9l-3.9 -3.9zM184.5 125.3l3.9 3.9l-3.9 3.9l-3.9 -3.9zM374.0 127.0l3.9 3.9l-3.9 3.9l-3.9 -3.9zM143.4 125.7l3.9 3.9l-3.9 3.9l-3.9 -3.9zM60.2 126.2l3.9 3.9l-3.9 3.9l-3.9 -3.9zM358.4 128.6l3.9 3.9l-3.9 3.9l-3.9 -3.9zM198.3 127.9l3.9 3.9l-3.9 3.9l-3.9 -3.9zM132.1 127.6l3.9 3.9l-3.9 3.9l-3.9 -3.9zM154.6 128.1l3.9 3.9l-3.9 3.9l-3.9 -3.9zM74.4 127.9l3.9 3.9l-3.9 3.9l-3.9 -3.9zM146.1 128.4l3.9 3.9l-3.9 3.9l-3.9 -3.9zM95.3 128.6l3.9 3.9l-3.9 3.9l-3.9 -3.9zM70.0 128.4l3.9 3.9l-3.9 3.9l-3.9 -3.9zM192.8 129.3l3.9 3.9l-3.9 3.9l-3.9 -3.9zM78.4 128.6l3.9 3.9l-3.9 3.9l-3.9 -3.9zM99.1 130.8l3.9 3.9l-3.9 3.9l-3.9 -3.9zM353.2 132.9l3.9 3.9l-3.9 3.9l-3.9 -3.9zM61.5 131.2l3.9 3.9l-3.9 3.9l-3.9 -3.9zM110.4 131.7l3.9 3.9l-3.9 3.9l-3.9 -3.9zM168.9 132.2l3.9 3.9l-3.9 3.9l-3.9 -3.9zM178.9 132.3l3.9 3.9l-3.9 3.9l-3.9 -3.9zM164.6 132.6l3.9 3.9l-3.9 3.9l-3.9 -3.9zM130.5 132.5l3.9 3.9l-3.9 3.9l-3.9 -3.9zM116.0 133.2l3.9 3.9l-3.9 3.9l-3.9 -3.9zM70.2 133.0l3.9 3.9l-3.9 3.9l-3.9 -3.9zM82.8 133.6l3.9 3.9l-3.9 3.9l-3.9 -3.9zM78.8 133.9l3.9 3.9l-3.9 3.9l-3.9 -3.9zM150.0 134.5l3.9 3.9l-3.9 3.9l-3.9 -3.9zM106.6 134.6l3.9 3.9l-3.9 3.9l-3.9 -3.9zM145.1 135.2l3.9 3.9l-3.9 3.9l-3.9 -3.9zM120.0 135.2l3.9 3.9l-3.9 3.9l-3.9 -3.9zM94.4 135.1l3.9 3.9l-3.9 3.9l-3.9 -3.9zM175.7 136.6l3.9 3.9l-3.9 3.9l-3.9 -3.9zM139.6 136.5l3.9 3.9l-3.9 3.9l-3.9 -3.9zM65.4 136.0l3.9 3.9l-3.9 3.9l-3.9 -3.9zM359.2 138.6l3.9 3.9l-3.9 3.9l-3.9 -3.9zM83.9 137.8l3.9 3.9l-3.9 3.9l-3.9 -3.9zM152.4 138.8l3.9 3.9l-3.9 3.9l-3.9 -3.9zM165.9 139.4l3.9 3.9l-3.9 3.9l-3.9 -3.9zM62.1 139.1l3.9 3.9l-3.9 3.9l-3.9 -3.9zM157.6 140.1l3.9 3.9l-3.9 3.9l-3.9 -3.9zM78.1 139.6l3.9 3.9l-3.9 3.9l-3.9 -3.9zM175.6 140.8l3.9 3.9l-3.9 3.9l-3.9 -3.9zM112.5 141.9l3.9 3.9l-3.9 3.9l-3.9 -3.9zM127.3 142.4l3.9 3.9l-3.9 3.9l-3.9 -3.9zM88.7 142.2l3.9 3.9l-3.9 3.9l-3.9 -3.9zM146.7 142.9l3.9 3.9l-3.9 3.9l-3.9 -3.9zM172.9 143.6l3.9 3.9l-3.9 3.9l-3.9 -3.9zM163.6 143.6l3.9 3.9l-3.9 3.9l-3.9 -3.9zM136.5 143.8l3.9 3.9l-3.9 3.9l-3.9 -3.9zM81.4 143.5l3.9 3.9l-3.9 3.9l-3.9 -3.9zM61.5 143.6l3.9 3.9l-3.9 3.9l-3.9 -3.9zM123.4 144.5l3.9 3.9l-3.9 3.9l-3.9 -3.9zM118.6 146.1l3.9 3.9l-3.9 3.9l-3.9 -3.9zM152.3 147.2l3.9 3.9l-3.9 3.9l-3.9 -3.9zM159.4 147.8l3.9 3.9l-3.9 3.9l-3.9 -3.9zM113.6 148.3l3.9 3.9l-3.9 3.9l-3.9 -3.9zM164.2 149.1l3.9 3.9l-3.9 3.9l-3.9 -3.9zM65.7 148.9l3.9 3.9l-3.9 3.9l-3.9 -3.9zM123.5 150.1l3.9 3.9l-3.9 3.9l-3.9 -3.9zM139.4 151.6l3.9 3.9l-3.9 3.9l-3.9 -3.9zM129.0 151.7l3.9 3.9l-3.9 3.9l-3.9 -3.9zM160.7 153.5l3.9 3.9l-3.9 3.9l-3.9 -3.9zM156.9 154.2l3.9 3.9l-3.9 3.9l-3.9 -3.9zM73.0 154.5l3.9 3.9l-3.9 3.9l-3.9 -3.9zM146.2 155.6l3.9 3.9l-3.9 3.9l-3.9 -3.9zM344.6 157.0l3.9 3.9l-3.9 3.9l-3.9 -3.9zM351.9 157.5l3.9 3.9l-3.9 3.9l-3.9 -3.9zM153.5 156.5l3.9 3.9l-3.9 3.9l-3.9 -3.9zM134.7 156.5l3.9 3.9l-3.9 3.9l-3.9 -3.9zM73.6 158.3l3.9 3.9l-3.9 3.9l-3.9 -3.9zM167.3 159.1l3.9 3.9l-3.9 3.9l-3.9 -3.9zM126.3 159.3l3.9 3.9l-3.9 3.9l-3.9 -3.9zM65.3 159.5l3.9 3.9l-3.9 3.9l-3.9 -3.9zM161.7 160.6l3.9 3.9l-3.9 3.9l-3.9 -3.9zM157.1 160.7l3.9 3.9l-3.9 3.9l-3.9 -3.9zM59.2 160.4l3.9 3.9l-3.9 3.9l-3.9 -3.9zM135.5 161.6l3.9 3.9l-3.9 3.9l-3.9 -3.9zM148.6 161.8l3.9 3.9l-3.9 3.9l-3.9 -3.9zM354.8 163.5l3.9 3.9l-3.9 3.9l-3.9 -3.9zM76.1 162.7l3.9 3.9l-3.9 3.9l-3.9 -3.9zM132.0 163.8l3.9 3.9l-3.9 3.9l-3.9 -3.9zM344.0 165.4l3.9 3.9l-3.9 3.9l-3.9 -3.9zM57.1 164.3l3.9 3.9l-3.9 3.9l-3.9 -3.9zM49.3 164.9l3.9 3.9l-3.9 3.9l-3.9 -3.9zM251.0 166.5l3.9 3.9l-3.9 3.9l-3.9 -3.9zM142.1 166.0l3.9 3.9l-3.9 3.9l-3.9 -3.9zM271.5 167.7l3.9 3.9l-3.9 3.9l-3.9 -3.9zM358.8 168.5l3.9 3.9l-3.9 3.9l-3.9 -3.9zM266.2 168.1l3.9 3.9l-3.9 3.9l-3.9 -3.9zM66.4 167.3l3.9 3.9l-3.9 3.9l-3.9 -3.9zM127.8 168.0l3.9 3.9l-3.9 3.9l-3.9 -3.9zM345.4 170.0l3.9 3.9l-3.9 3.9l-3.9 -3.9zM150.7 169.6l3.9 3.9l-3.9 3.9l-3.9 -3.9zM257.8 171.0l3.9 3.9l-3.9 3.9l-3.9 -3.9zM124.7 170.3l3.9 3.9l-3.9 3.9l-3.9 -3.9zM56.2 169.8l3.9 3.9l-3.9 3.9l-3.9 -3.9zM274.9 172.1l3.9 3.9l-3.9 3.9l-3.9 -3.9zM51.0 170.6l3.9 3.9l-3.9 3.9l-3.9 -3.9zM324.9 173.3l3.9 3.9l-3.9 3.9l-3.9 -3.9zM69.6 172.1l3.9 3.9l-3.9 3.9l-3.9 -3.9zM261.9 173.9l3.9 3.9l-3.9 3.9l-3.9 -3.9zM129.8 173.2l3.9 3.9l-3.9 3.9l-3.9 -3.9zM144.1 173.8l3.9 3.9l-3.9 3.9l-3.9 -3.9zM280.5 174.9l3.9 3.9l-3.9 3.9l-3.9 -3.9zM358.8 175.7l3.9 3.9l-3.9 3.9l-3.9 -3.9zM154.9 174.6l3.9 3.9l-3.9 3.9l-3.9 -3.9zM255.1 175.6l3.9 3.9l-3.9 3.9l-3.9 -3.9zM344.3 176.5l3.9 3.9l-3.9 3.9l-3.9 -3.9zM138.5 175.2l3.9 3.9l-3.9 3.9l-3.9 -3.9zM116.9 175.6l3.9 3.9l-3.9 3.9l-3.9 -3.9zM76.0 175.4l3.9 3.9l-3.9 3.9l-3.9 -3.9zM337.2 177.4l3.9 3.9l-3.9 3.9l-3.9 -3.9zM56.4 175.6l3.9 3.9l-3.9 3.9l-3.9 -3.9zM274.3 177.2l3.9 3.9l-3.9 3.9l-3.9 -3.9zM123.4 176.4l3.9 3.9l-3.9 3.9l-3.9 -3.9zM353.5 178.6l3.9 3.9l-3.9 3.9l-3.9 -3.9zM369.0 179.0l3.9 3.9l-3.9 3.9l-3.9 -3.9zM131.3 177.7l3.9 3.9l-3.9 3.9l-3.9 -3.9zM72.3 177.4l3.9 3.9l-3.9 3.9l-3.9 -3.9zM61.7 178.2l3.9 3.9l-3.9 3.9l-3.9 -3.9zM153.7 179.2l3.9 3.9l-3.9 3.9l-3.9 -3.9zM44.6 178.8l3.9 3.9l-3.9 3.9l-3.9 -3.9zM145.3 179.6l3.9 3.9l-3.9 3.9l-3.9 -3.9zM266.0 180.7l3.9 3.9l-3.9 3.9l-3.9 -3.9zM138.0 180.3l3.9 3.9l-3.9 3.9l-3.9 -3.9zM122.2 180.4l3.9 3.9l-3.9 3.9l-3.9 -3.9zM52.1 180.1l3.9 3.9l-3.9 3.9l-3.9 -3.9zM399.5 182.8l3.9 3.9l-3.9 3.9l-3.9 -3.9zM340.3 182.7l3.9 3.9l-3.9 3.9l-3.9 -3.9zM126.8 181.2l3.9 3.9l-3.9 3.9l-3.9 -3.9zM116.3 182.9l3.9 3.9l-3.9 3.9l-3.9 -3.9zM64.6 182.6l3.9 3.9l-3.9 3.9l-3.9 -3.9zM157.9 183.3l3.9 3.9l-3.9 3.9l-3.9 -3.9zM272.9 184.4l3.9 3.9l-3.9 3.9l-3.9 -3.9zM359.2 185.3l3.9 3.9l-3.9 3.9l-3.9 -3.9zM278.4 184.7l3.9 3.9l-3.9 3.9l-3.9 -3.9zM323.7 185.2l3.9 3.9l-3.9 3.9l-3.9 -3.9zM140.8 183.9l3.9 3.9l-3.9 3.9l-3.9 -3.9zM69.2 183.5l3.9 3.9l-3.9 3.9l-3.9 -3.9zM393.4 185.8l3.9 3.9l-3.9 3.9l-3.9 -3.9zM87.3 183.7l3.9 3.9l-3.9 3.9l-3.9 -3.9zM253.0 185.2l3.9 3.9l-3.9 3.9l-3.9 -3.9zM149.2 184.5l3.9 3.9l-3.9 3.9l-3.9 -3.9zM353.3 186.2l3.9 3.9l-3.9 3.9l-3.9 -3.9zM258.9 185.6l3.9 3.9l-3.9 3.9l-3.9 -3.9zM60.5 184.8l3.9 3.9l-3.9 3.9l-3.9 -3.9zM45.4 185.0l3.9 3.9l-3.9 3.9l-3.9 -3.9zM245.0 186.5l3.9 3.9l-3.9 3.9l-3.9 -3.9zM133.8 185.8l3.9 3.9l-3.9 3.9l-3.9 -3.9zM268.5 187.2l3.9 3.9l-3.9 3.9l-3.9 -3.9zM336.7 188.3l3.9 3.9l-3.9 3.9l-3.9 -3.9zM118.3 187.0l3.9 3.9l-3.9 3.9l-3.9 -3.9zM91.2 187.4l3.9 3.9l-3.9 3.9l-3.9 -3.9zM345.2 189.3l3.9 3.9l-3.9 3.9l-3.9 -3.9zM331.0 189.8l3.9 3.9l-3.9 3.9l-3.9 -3.9zM371.8 190.1l3.9 3.9l-3.9 3.9l-3.9 -3.9zM283.7 189.5l3.9 3.9l-3.9 3.9l-3.9 -3.9zM111.6 188.3l3.9 3.9l-3.9 3.9l-3.9 -3.9zM157.0 188.8l3.9 3.9l-3.9 3.9l-3.9 -3.9zM125.5 189.0l3.9 3.9l-3.9 3.9l-3.9 -3.9zM141.2 189.2l3.9 3.9l-3.9 3.9l-3.9 -3.9zM97.0 189.1l3.9 3.9l-3.9 3.9l-3.9 -3.9zM381.3 191.4l3.9 3.9l-3.9 3.9l-3.9 -3.9zM313.1 191.0l3.9 3.9l-3.9 3.9l-3.9 -3.9zM253.2 190.7l3.9 3.9l-3.9 3.9l-3.9 -3.9zM352.1 191.7l3.9 3.9l-3.9 3.9l-3.9 -3.9zM51.8 189.9l3.9 3.9l-3.9 3.9l-3.9 -3.9zM34.5 189.9l3.9 3.9l-3.9 3.9l-3.9 -3.9zM362.3 192.3l3.9 3.9l-3.9 3.9l-3.9 -3.9zM75.7 190.5l3.9 3.9l-3.9 3.9l-3.9 -3.9zM394.0 192.8l3.9 3.9l-3.9 3.9l-3.9 -3.9zM153.4 191.1l3.9 3.9l-3.9 3.9l-3.9 -3.9zM356.8 192.6l3.9 3.9l-3.9 3.9l-3.9 -3.9zM290.1 192.2l3.9 3.9l-3.9 3.9l-3.9 -3.9zM41.8 190.4l3.9 3.9l-3.9 3.9l-3.9 -3.9zM68.2 191.0l3.9 3.9l-3.9 3.9l-3.9 -3.9zM244.8 192.3l3.9 3.9l-3.9 3.9l-3.9 -3.9zM90.1 191.2l3.9 3.9l-3.9 3.9l-3.9 -3.9zM257.8 192.5l3.9 3.9l-3.9 3.9l-3.9 -3.9zM145.9 191.9l3.9 3.9l-3.9 3.9l-3.9 -3.9zM343.9 193.4l3.9 3.9l-3.9 3.9l-3.9 -3.9zM280.0 193.2l3.9 3.9l-3.9 3.9l-3.9 -3.9zM108.5 192.0l3.9 3.9l-3.9 3.9l-3.9 -3.9zM114.2 192.2l3.9 3.9l-3.9 3.9l-3.9 -3.9zM399.0 194.6l3.9 3.9l-3.9 3.9l-3.9 -3.9zM236.8 193.5l3.9 3.9l-3.9 3.9l-3.9 -3.9zM45.2 192.4l3.9 3.9l-3.9 3.9l-3.9 -3.9zM122.8 193.5l3.9 3.9l-3.9 3.9l-3.9 -3.9zM99.7 193.4l3.9 3.9l-3.9 3.9l-3.9 -3.9zM78.3 193.4l3.9 3.9l-3.9 3.9l-3.9 -3.9zM86.3 193.6l3.9 3.9l-3.9 3.9l-3.9 -3.9zM370.3 195.7l3.9 3.9l-3.9 3.9l-3.9 -3.9zM340.4 195.5l3.9 3.9l-3.9 3.9l-3.9 -3.9zM349.1 195.7l3.9 3.9l-3.9 3.9l-3.9 -3.9zM71.9 193.8l3.9 3.9l-3.9 3.9l-3.9 -3.9zM267.2 195.3l3.9 3.9l-3.9 3.9l-3.9 -3.9zM250.5 195.2l3.9 3.9l-3.9 3.9l-3.9 -3.9zM127.4 194.3l3.9 3.9l-3.9 3.9l-3.9 -3.9zM57.9 194.0l3.9 3.9l-3.9 3.9l-3.9 -3.9zM138.9 194.8l3.9 3.9l-3.9 3.9l-3.9 -3.9zM324.6 196.4l3.9 3.9l-3.9 3.9l-3.9 -3.9zM395.8 196.9l3.9 3.9l-3.9 3.9l-3.9 -3.9zM286.5 196.2l3.9 3.9l-3.9 3.9l-3.9 -3.9zM292.9 196.4l3.9 3.9l-3.9 3.9l-3.9 -3.9zM82.2 195.2l3.9 3.9l-3.9 3.9l-3.9 -3.9zM335.0 197.1l3.9 3.9l-3.9 3.9l-3.9 -3.9zM378.0 197.5l3.9 3.9l-3.9 3.9l-3.9 -3.9zM150.4 196.1l3.9 3.9l-3.9 3.9l-3.9 -3.9zM366.8 197.7l3.9 3.9l-3.9 3.9l-3.9 -3.9zM274.8 197.3l3.9 3.9l-3.9 3.9l-3.9 -3.9zM53.3 195.9l3.9 3.9l-3.9 3.9l-3.9 -3.9zM264.3 198.1l3.9 3.9l-3.9 3.9l-3.9 -3.9zM104.6 197.0l3.9 3.9l-3.9 3.9l-3.9 -3.9zM346.2 198.8l3.9 3.9l-3.9 3.9l-3.9 -3.9zM76.5 197.0l3.9 3.9l-3.9 3.9l-3.9 -3.9zM312.7 198.8l3.9 3.9l-3.9 3.9l-3.9 -3.9zM269.2 198.9l3.9 3.9l-3.9 3.9l-3.9 -3.9zM142.9 198.1l3.9 3.9l-3.9 3.9l-3.9 -3.9zM90.9 198.0l3.9 3.9l-3.9 3.9l-3.9 -3.9zM327.1 200.0l3.9 3.9l-3.9 3.9l-3.9 -3.9zM288.5 199.7l3.9 3.9l-3.9 3.9l-3.9 -3.9zM248.6 199.5l3.9 3.9l-3.9 3.9l-3.9 -3.9zM156.0 198.9l3.9 3.9l-3.9 3.9l-3.9 -3.9zM373.9 200.5l3.9 3.9l-3.9 3.9l-3.9 -3.9zM60.8 198.4l3.9 3.9l-3.9 3.9l-3.9 -3.9zM86.3 198.8l3.9 3.9l-3.9 3.9l-3.9 -3.9zM109.5 199.1l3.9 3.9l-3.9 3.9l-3.9 -3.9zM115.4 199.3l3.9 3.9l-3.9 3.9l-3.9 -3.9zM355.2 201.1l3.9 3.9l-3.9 3.9l-3.9 -3.9zM318.6 200.9l3.9 3.9l-3.9 3.9l-3.9 -3.9zM70.2 199.3l3.9 3.9l-3.9 3.9l-3.9 -3.9zM252.5 201.3l3.9 3.9l-3.9 3.9l-3.9 -3.9zM368.3 202.3l3.9 3.9l-3.9 3.9l-3.9 -3.9zM166.6 200.8l3.9 3.9l-3.9 3.9l-3.9 -3.9zM119.4 200.6l3.9 3.9l-3.9 3.9l-3.9 -3.9zM102.6 200.5l3.9 3.9l-3.9 3.9l-3.9 -3.9zM397.3 203.4l3.9 3.9l-3.9 3.9l-3.9 -3.9zM283.9 202.6l3.9 3.9l-3.9 3.9l-3.9 -3.9zM245.2 202.5l3.9 3.9l-3.9 3.9l-3.9 -3.9zM304.1 202.9l3.9 3.9l-3.9 3.9l-3.9 -3.9zM293.9 203.3l3.9 3.9l-3.9 3.9l-3.9 -3.9zM256.9 203.0l3.9 3.9l-3.9 3.9l-3.9 -3.9zM330.6 203.7l3.9 3.9l-3.9 3.9l-3.9 -3.9zM81.2 202.1l3.9 3.9l-3.9 3.9l-3.9 -3.9zM350.4 204.0l3.9 3.9l-3.9 3.9l-3.9 -3.9zM96.7 202.3l3.9 3.9l-3.9 3.9l-3.9 -3.9zM127.4 202.6l3.9 3.9l-3.9 3.9l-3.9 -3.9zM49.7 202.1l3.9 3.9l-3.9 3.9l-3.9 -3.9zM261.0 203.8l3.9 3.9l-3.9 3.9l-3.9 -3.9zM238.2 203.7l3.9 3.9l-3.9 3.9l-3.9 -3.9zM90.0 202.6l3.9 3.9l-3.9 3.9l-3.9 -3.9zM54.4 202.4l3.9 3.9l-3.9 3.9l-3.9 -3.9zM146.6 203.1l3.9 3.9l-3.9 3.9l-3.9 -3.9zM41.4 202.7l3.9 3.9l-3.9 3.9l-3.9 -3.9zM323.1 204.9l3.9 3.9l-3.9 3.9l-3.9 -3.9zM151.3 203.9l3.9 3.9l-3.9 3.9l-3.9 -3.9zM136.9 203.9l3.9 3.9l-3.9 3.9l-3.9 -3.9zM163.8 204.2l3.9 3.9l-3.9 3.9l-3.9 -3.9zM121.2 204.2l3.9 3.9l-3.9 3.9l-3.9 -3.9zM274.1 205.4l3.9 3.9l-3.9 3.9l-3.9 -3.9zM36.2 203.8l3.9 3.9l-3.9 3.9l-3.9 -3.9zM109.6 204.5l3.9 3.9l-3.9 3.9l-3.9 -3.9zM76.5 204.3l3.9 3.9l-3.9 3.9l-3.9 -3.9zM266.0 205.7l3.9 3.9l-3.9 3.9l-3.9 -3.9zM346.8 206.6l3.9 3.9l-3.9 3.9l-3.9 -3.9zM339.7 206.5l3.9 3.9l-3.9 3.9l-3.9 -3.9zM174.4 205.5l3.9 3.9l-3.9 3.9l-3.9 -3.9zM368.9 207.0l3.9 3.9l-3.9 3.9l-3.9 -3.9zM285.0 206.5l3.9 3.9l-3.9 3.9l-3.9 -3.9zM312.1 206.9l3.9 3.9l-3.9 3.9l-3.9 -3.9zM22.0 204.8l3.9 3.9l-3.9 3.9l-3.9 -3.9zM278.3 206.8l3.9 3.9l-3.9 3.9l-3.9 -3.9zM295.1 207.1l3.9 3.9l-3.9 3.9l-3.9 -3.9zM360.5 207.6l3.9 3.9l-3.9 3.9l-3.9 -3.9zM133.0 206.0l3.9 3.9l-3.9 3.9l-3.9 -3.9zM250.4 206.9l3.9 3.9l-3.9 3.9l-3.9 -3.9zM84.8 205.7l3.9 3.9l-3.9 3.9l-3.9 -3.9zM378.3 208.0l3.9 3.9l-3.9 3.9l-3.9 -3.9zM336.3 208.3l3.9 3.9l-3.9 3.9l-3.9 -3.9zM289.9 208.0l3.9 3.9l-3.9 3.9l-3.9 -3.9zM269.5 207.9l3.9 3.9l-3.9 3.9l-3.9 -3.9zM63.9 206.5l3.9 3.9l-3.9 3.9l-3.9 -3.9zM321.5 208.4l3.9 3.9l-3.9 3.9l-3.9 -3.9zM167.3 207.4l3.9 3.9l-3.9 3.9l-3.9 -3.9zM299.3 208.5l3.9 3.9l-3.9 3.9l-3.9 -3.9zM73.2 207.0l3.9 3.9l-3.9 3.9l-3.9 -3.9zM233.7 208.2l3.9 3.9l-3.9 3.9l-3.9 -3.9zM56.1 207.4l3.9 3.9l-3.9 3.9l-3.9 -3.9zM29.9 207.3l3.9 3.9l-3.9 3.9l-3.9 -3.9zM228.6 209.2l3.9 3.9l-3.9 3.9l-3.9 -3.9zM88.4 208.3l3.9 3.9l-3.9 3.9l-3.9 -3.9zM106.5 208.6l3.9 3.9l-3.9 3.9l-3.9 -3.9zM36.0 208.1l3.9 3.9l-3.9 3.9l-3.9 -3.9zM149.7 209.1l3.9 3.9l-3.9 3.9l-3.9 -3.9zM40.7 208.5l3.9 3.9l-3.9 3.9l-3.9 -3.9zM159.1 209.4l3.9 3.9l-3.9 3.9l-3.9 -3.9zM396.5 211.1l3.9 3.9l-3.9 3.9l-3.9 -3.9zM391.9 211.2l3.9 3.9l-3.9 3.9l-3.9 -3.9zM46.9 209.0l3.9 3.9l-3.9 3.9l-3.9 -3.9zM275.1 210.7l3.9 3.9l-3.9 3.9l-3.9 -3.9zM21.8 208.9l3.9 3.9l-3.9 3.9l-3.9 -3.9zM68.2 209.3l3.9 3.9l-3.9 3.9l-3.9 -3.9zM383.5 211.6l3.9 3.9l-3.9 3.9l-3.9 -3.9zM266.2 210.9l3.9 3.9l-3.9 3.9l-3.9 -3.9zM153.4 210.2l3.9 3.9l-3.9 3.9l-3.9 -3.9zM284.9 211.2l3.9 3.9l-3.9 3.9l-3.9 -3.9zM307.6 211.4l3.9 3.9l-3.9 3.9l-3.9 -3.9zM339.5 211.7l3.9 3.9l-3.9 3.9l-3.9 -3.9zM350.1 211.8l3.9 3.9l-3.9 3.9l-3.9 -3.9zM100.1 210.0l3.9 3.9l-3.9 3.9l-3.9 -3.9zM60.4 209.8l3.9 3.9l-3.9 3.9l-3.9 -3.9zM316.0 211.8l3.9 3.9l-3.9 3.9l-3.9 -3.9zM171.0 211.2l3.9 3.9l-3.9 3.9l-3.9 -3.9zM270.9 212.0l3.9 3.9l-3.9 3.9l-3.9 -3.9zM261.7 212.4l3.9 3.9l-3.9 3.9l-3.9 -3.9zM64.4 211.0l3.9 3.9l-3.9 3.9l-3.9 -3.9zM325.8 213.2l3.9 3.9l-3.9 3.9l-3.9 -3.9zM376.6 214.0l3.9 3.9l-3.9 3.9l-3.9 -3.9zM361.8 214.0l3.9 3.9l-3.9 3.9l-3.9 -3.9zM292.2 213.6l3.9 3.9l-3.9 3.9l-3.9 -3.9zM333.9 214.1l3.9 3.9l-3.9 3.9l-3.9 -3.9zM119.1 212.6l3.9 3.9l-3.9 3.9l-3.9 -3.9zM357.5 214.4l3.9 3.9l-3.9 3.9l-3.9 -3.9zM128.2 212.8l3.9 3.9l-3.9 3.9l-3.9 -3.9zM399.8 214.9l3.9 3.9l-3.9 3.9l-3.9 -3.9zM395.2 214.8l3.9 3.9l-3.9 3.9l-3.9 -3.9zM103.7 212.7l3.9 3.9l-3.9 3.9l-3.9 -3.9zM222.8 213.8l3.9 3.9l-3.9 3.9l-3.9 -3.9zM81.1 213.2l3.9 3.9l-3.9 3.9l-3.9 -3.9zM14.6 212.7l3.9 3.9l-3.9 3.9l-3.9 -3.9zM249.9 214.5l3.9 3.9l-3.9 3.9l-3.9 -3.9zM123.8 213.7l3.9 3.9l-3.9 3.9l-3.9 -3.9zM277.1 214.9l3.9 3.9l-3.9 3.9l-3.9 -3.9zM228.3 214.6l3.9 3.9l-3.9 3.9l-3.9 -3.9zM342.7 215.6l3.9 3.9l-3.9 3.9l-3.9 -3.9zM69.2 213.8l3.9 3.9l-3.9 3.9l-3.9 -3.9zM308.6 215.7l3.9 3.9l-3.9 3.9l-3.9 -3.9zM237.5 215.2l3.9 3.9l-3.9 3.9l-3.9 -3.9zM133.7 214.7l3.9 3.9l-3.9 3.9l-3.9 -3.9zM161.0 215.1l3.9 3.9l-3.9 3.9l-3.9 -3.9zM97.2 214.7l3.9 3.9l-3.9 3.9l-3.9 -3.9zM301.2 216.2l3.9 3.9l-3.9 3.9l-3.9 -3.9zM139.3 215.4l3.9 3.9l-3.9 3.9l-3.9 -3.9zM110.3 215.2l3.9 3.9l-3.9 3.9l-3.9 -3.9zM156.4 215.6l3.9 3.9l-3.9 3.9l-3.9 -3.9zM56.2 214.9l3.9 3.9l-3.9 3.9l-3.9 -3.9zM315.1 216.9l3.9 3.9l-3.9 3.9l-3.9 -3.9zM367.8 217.4l3.9 3.9l-3.9 3.9l-3.9 -3.9zM288.5 216.9l3.9 3.9l-3.9 3.9l-3.9 -3.9zM30.7 215.1l3.9 3.9l-3.9 3.9l-3.9 -3.9zM322.3 217.6l3.9 3.9l-3.9 3.9l-3.9 -3.9zM269.7 217.3l3.9 3.9l-3.9 3.9l-3.9 -3.9zM329.8 217.8l3.9 3.9l-3.9 3.9l-3.9 -3.9zM261.4 217.4l3.9 3.9l-3.9 3.9l-3.9 -3.9zM85.1 216.1l3.9 3.9l-3.9 3.9l-3.9 -3.9zM90.5 216.6l3.9 3.9l-3.9 3.9l-3.9 -3.9zM281.4 218.0l3.9 3.9l-3.9 3.9l-3.9 -3.9zM216.0 217.6l3.9 3.9l-3.9 3.9l-3.9 -3.9zM231.8 218.0l3.9 3.9l-3.9 3.9l-3.9 -3.9zM296.4 218.6l3.9 3.9l-3.9 3.9l-3.9 -3.9zM241.0 218.2l3.9 3.9l-3.9 3.9l-3.9 -3.9zM115.8 217.5l3.9 3.9l-3.9 3.9l-3.9 -3.9zM395.4 220.0l3.9 3.9l-3.9 3.9l-3.9 -3.9zM335.1 219.6l3.9 3.9l-3.9 3.9l-3.9 -3.9zM355.1 219.9l3.9 3.9l-3.9 3.9l-3.9 -3.9zM310.1 220.0l3.9 3.9l-3.9 3.9l-3.9 -3.9zM70.7 218.3l3.9 3.9l-3.9 3.9l-3.9 -3.9zM343.5 220.4l3.9 3.9l-3.9 3.9l-3.9 -3.9zM291.8 220.1l3.9 3.9l-3.9 3.9l-3.9 -3.9zM149.8 219.2l3.9 3.9l-3.9 3.9l-3.9 -3.9zM21.0 218.3l3.9 3.9l-3.9 3.9l-3.9 -3.9zM42.1 218.6l3.9 3.9l-3.9 3.9l-3.9 -3.9zM316.4 220.7l3.9 3.9l-3.9 3.9l-3.9 -3.9zM97.0 219.1l3.9 3.9l-3.9 3.9l-3.9 -3.9zM36.4 218.7l3.9 3.9l-3.9 3.9l-3.9 -3.9zM46.5 218.8l3.9 3.9l-3.9 3.9l-3.9 -3.9zM112.2 219.3l3.9 3.9l-3.9 3.9l-3.9 -3.9zM130.1 219.7l3.9 3.9l-3.9 3.9l-3.9 -3.9zM246.7 220.8l3.9 3.9l-3.9 3.9l-3.9 -3.9zM212.0 220.5l3.9 3.9l-3.9 3.9l-3.9 -3.9zM196.2 220.5l3.9 3.9l-3.9 3.9l-3.9 -3.9zM153.7 220.2l3.9 3.9l-3.9 3.9l-3.9 -3.9zM379.8 221.9l3.9 3.9l-3.9 3.9l-3.9 -3.9zM350.1 221.7l3.9 3.9l-3.9 3.9l-3.9 -3.9zM188.6 220.5l3.9 3.9l-3.9 3.9l-3.9 -3.9zM66.5 219.9l3.9 3.9l-3.9 3.9l-3.9 -3.9zM304.3 221.6l3.9 3.9l-3.9 3.9l-3.9 -3.9zM82.9 220.1l3.9 3.9l-3.9 3.9l-3.9 -3.9zM54.8 219.9l3.9 3.9l-3.9 3.9l-3.9 -3.9zM137.0 220.6l3.9 3.9l-3.9 3.9l-3.9 -3.9zM366.5 222.3l3.9 3.9l-3.9 3.9l-3.9 -3.9zM326.8 222.2l3.9 3.9l-3.9 3.9l-3.9 -3.9zM256.9 221.9l3.9 3.9l-3.9 3.9l-3.9 -3.9zM361.8 222.8l3.9 3.9l-3.9 3.9l-3.9 -3.9zM167.6 221.5l3.9 3.9l-3.9 3.9l-3.9 -3.9zM262.1 222.5l3.9 3.9l-3.9 3.9l-3.9 -3.9zM331.9 223.1l3.9 3.9l-3.9 3.9l-3.9 -3.9zM218.4 222.3l3.9 3.9l-3.9 3.9l-3.9 -3.9zM76.4 221.5l3.9 3.9l-3.9 3.9l-3.9 -3.9zM385.6 224.1l3.9 3.9l-3.9 3.9l-3.9 -3.9zM100.7 222.3l3.9 3.9l-3.9 3.9l-3.9 -3.9zM93.9 222.3l3.9 3.9l-3.9 3.9l-3.9 -3.9zM191.8 223.0l3.9 3.9l-3.9 3.9l-3.9 -3.9zM107.5 222.7l3.9 3.9l-3.9 3.9l-3.9 -3.9zM143.7 223.1l3.9 3.9l-3.9 3.9l-3.9 -3.9zM25.6 222.3l3.9 3.9l-3.9 3.9l-3.9 -3.9zM233.3 223.9l3.9 3.9l-3.9 3.9l-3.9 -3.9zM321.3 224.5l3.9 3.9l-3.9 3.9l-3.9 -3.9zM390.8 225.3l3.9 3.9l-3.9 3.9l-3.9 -3.9zM252.7 224.3l3.9 3.9l-3.9 3.9l-3.9 -3.9zM225.5 224.3l3.9 3.9l-3.9 3.9l-3.9 -3.9zM86.2 223.4l3.9 3.9l-3.9 3.9l-3.9 -3.9zM177.0 224.1l3.9 3.9l-3.9 3.9l-3.9 -3.9zM267.0 224.8l3.9 3.9l-3.9 3.9l-3.9 -3.9zM69.8 223.4l3.9 3.9l-3.9 3.9l-3.9 -3.9zM356.1 225.5l3.9 3.9l-3.9 3.9l-3.9 -3.9zM246.6 225.5l3.9 3.9l-3.9 3.9l-3.9 -3.9zM171.7 224.9l3.9 3.9l-3.9 3.9l-3.9 -3.9zM165.6 225.1l3.9 3.9l-3.9 3.9l-3.9 -3.9zM382.0 226.7l3.9 3.9l-3.9 3.9l-3.9 -3.9zM149.9 225.2l3.9 3.9l-3.9 3.9l-3.9 -3.9zM341.6 226.7l3.9 3.9l-3.9 3.9l-3.9 -3.9zM120.1 225.2l3.9 3.9l-3.9 3.9l-3.9 -3.9zM48.2 224.7l3.9 3.9l-3.9 3.9l-3.9 -3.9zM34.1 224.8l3.9 3.9l-3.9 3.9l-3.9 -3.9zM156.2 225.7l3.9 3.9l-3.9 3.9l-3.9 -3.9zM216.4 226.5l3.9 3.9l-3.9 3.9l-3.9 -3.9zM58.1 225.4l3.9 3.9l-3.9 3.9l-3.9 -3.9zM270.6 226.9l3.9 3.9l-3.9 3.9l-3.9 -3.9zM161.6 226.3l3.9 3.9l-3.9 3.9l-3.9 -3.9zM21.2 225.5l3.9 3.9l-3.9 3.9l-3.9 -3.9zM203.5 226.9l3.9 3.9l-3.9 3.9l-3.9 -3.9zM54.1 226.0l3.9 3.9l-3.9 3.9l-3.9 -3.9zM312.4 227.9l3.9 3.9l-3.9 3.9l-3.9 -3.9zM182.0 227.1l3.9 3.9l-3.9 3.9l-3.9 -3.9zM397.1 229.0l3.9 3.9l-3.9 3.9l-3.9 -3.9zM106.4 227.0l3.9 3.9l-3.9 3.9l-3.9 -3.9zM71.7 226.8l3.9 3.9l-3.9 3.9l-3.9 -3.9zM253.3 228.2l3.9 3.9l-3.9 3.9l-3.9 -3.9zM368.0 229.1l3.9 3.9l-3.9 3.9l-3.9 -3.9zM92.6 227.2l3.9 3.9l-3.9 3.9l-3.9 -3.9zM81.4 227.2l3.9 3.9l-3.9 3.9l-3.9 -3.9zM361.9 229.3l3.9 3.9l-3.9 3.9l-3.9 -3.9zM99.2 227.4l3.9 3.9l-3.9 3.9l-3.9 -3.9zM389.1 229.6l3.9 3.9l-3.9 3.9l-3.9 -3.9zM293.2 228.9l3.9 3.9l-3.9 3.9l-3.9 -3.9zM227.6 228.5l3.9 3.9l-3.9 3.9l-3.9 -3.9zM318.5 229.2l3.9 3.9l-3.9 3.9l-3.9 -3.9zM135.9 228.0l3.9 3.9l-3.9 3.9l-3.9 -3.9zM124.7 228.2l3.9 3.9l-3.9 3.9l-3.9 -3.9zM324.2 229.8l3.9 3.9l-3.9 3.9l-3.9 -3.9zM245.7 229.3l3.9 3.9l-3.9 3.9l-3.9 -3.9zM213.0 229.3l3.9 3.9l-3.9 3.9l-3.9 -3.9zM30.7 228.0l3.9 3.9l-3.9 3.9l-3.9 -3.9zM234.8 229.7l3.9 3.9l-3.9 3.9l-3.9 -3.9zM115.7 229.0l3.9 3.9l-3.9 3.9l-3.9 -3.9zM186.8 229.6l3.9 3.9l-3.9 3.9l-3.9 -3.9zM40.4 228.6l3.9 3.9l-3.9 3.9l-3.9 -3.9zM343.3 231.0l3.9 3.9l-3.9 3.9l-3.9 -3.9zM385.1 231.4l3.9 3.9l-3.9 3.9l-3.9 -3.9zM301.8 230.9l3.9 3.9l-3.9 3.9l-3.9 -3.9zM149.1 230.1l3.9 3.9l-3.9 3.9l-3.9 -3.9zM129.4 230.3l3.9 3.9l-3.9 3.9l-3.9 -3.9zM166.7 230.6l3.9 3.9l-3.9 3.9l-3.9 -3.9zM392.9 232.2l3.9 3.9l-3.9 3.9l-3.9 -3.9zM280.2 231.7l3.9 3.9l-3.9 3.9l-3.9 -3.9zM109.0 230.6l3.9 3.9l-3.9 3.9l-3.9 -3.9zM379.5 232.9l3.9 3.9l-3.9 3.9l-3.9 -3.9zM83.1 230.7l3.9 3.9l-3.9 3.9l-3.9 -3.9zM66.7 230.7l3.9 3.9l-3.9 3.9l-3.9 -3.9zM231.5 232.0l3.9 3.9l-3.9 3.9l-3.9 -3.9zM96.3 231.2l3.9 3.9l-3.9 3.9l-3.9 -3.9zM198.3 232.1l3.9 3.9l-3.9 3.9l-3.9 -3.9zM15.9 230.9l3.9 3.9l-3.9 3.9l-3.9 -3.9zM317.1 233.4l3.9 3.9l-3.9 3.9l-3.9 -3.9zM208.2 232.6l3.9 3.9l-3.9 3.9l-3.9 -3.9zM371.8 233.9l3.9 3.9l-3.9 3.9l-3.9 -3.9zM227.6 232.9l3.9 3.9l-3.9 3.9l-3.9 -3.9zM74.6 231.9l3.9 3.9l-3.9 3.9l-3.9 -3.9zM330.4 233.8l3.9 3.9l-3.9 3.9l-3.9 -3.9zM50.8 231.8l3.9 3.9l-3.9 3.9l-3.9 -3.9zM347.0 234.0l3.9 3.9l-3.9 3.9l-3.9 -3.9zM138.4 232.6l3.9 3.9l-3.9 3.9l-3.9 -3.9zM46.0 231.9l3.9 3.9l-3.9 3.9l-3.9 -3.9zM60.8 232.1l3.9 3.9l-3.9 3.9l-3.9 -3.9zM20.2 231.9l3.9 3.9l-3.9 3.9l-3.9 -3.9zM173.9 233.0l3.9 3.9l-3.9 3.9l-3.9 -3.9zM217.1 233.4l3.9 3.9l-3.9 3.9l-3.9 -3.9zM291.2 234.1l3.9 3.9l-3.9 3.9l-3.9 -3.9zM306.0 234.2l3.9 3.9l-3.9 3.9l-3.9 -3.9zM325.9 234.3l3.9 3.9l-3.9 3.9l-3.9 -3.9zM366.3 234.9l3.9 3.9l-3.9 3.9l-3.9 -3.9zM116.3 233.2l3.9 3.9l-3.9 3.9l-3.9 -3.9zM258.3 234.4l3.9 3.9l-3.9 3.9l-3.9 -3.9zM100.9 233.6l3.9 3.9l-3.9 3.9l-3.9 -3.9zM269.7 235.0l3.9 3.9l-3.9 3.9l-3.9 -3.9zM142.4 234.3l3.9 3.9l-3.9 3.9l-3.9 -3.9zM311.2 235.6l3.9 3.9l-3.9 3.9l-3.9 -3.9zM37.3 233.6l3.9 3.9l-3.9 3.9l-3.9 -3.9zM154.3 234.7l3.9 3.9l-3.9 3.9l-3.9 -3.9zM159.1 234.8l3.9 3.9l-3.9 3.9l-3.9 -3.9zM398.0 236.6l3.9 3.9l-3.9 3.9l-3.9 -3.9zM360.7 236.4l3.9 3.9l-3.9 3.9l-3.9 -3.9zM123.6 234.6l3.9 3.9l-3.9 3.9l-3.9 -3.9zM386.4 236.6l3.9 3.9l-3.9 3.9l-3.9 -3.9zM265.2 236.1l3.9 3.9l-3.9 3.9l-3.9 -3.9zM352.4 236.8l3.9 3.9l-3.9 3.9l-3.9 -3.9zM135.1 235.2l3.9 3.9l-3.9 3.9l-3.9 -3.9zM71.0 234.9l3.9 3.9l-3.9 3.9l-3.9 -3.9zM250.5 236.2l3.9 3.9l-3.9 3.9l-3.9 -3.9zM392.4 237.3l3.9 3.9l-3.9 3.9l-3.9 -3.9zM212.8 236.3l3.9 3.9l-3.9 3.9l-3.9 -3.9zM168.5 236.3l3.9 3.9l-3.9 3.9l-3.9 -3.9zM300.6 237.3l3.9 3.9l-3.9 3.9l-3.9 -3.9zM295.9 237.3l3.9 3.9l-3.9 3.9l-3.9 -3.9zM328.0 237.9l3.9 3.9l-3.9 3.9l-3.9 -3.9zM30.7 235.9l3.9 3.9l-3.9 3.9l-3.9 -3.9zM49.4 236.0l3.9 3.9l-3.9 3.9l-3.9 -3.9zM376.6 238.5l3.9 3.9l-3.9 3.9l-3.9 -3.9zM127.6 236.7l3.9 3.9l-3.9 3.9l-3.9 -3.9zM322.4 238.4l3.9 3.9l-3.9 3.9l-3.9 -3.9zM146.0 237.1l3.9 3.9l-3.9 3.9l-3.9 -3.9zM111.7 236.9l3.9 3.9l-3.9 3.9l-3.9 -3.9zM87.6 236.7l3.9 3.9l-3.9 3.9l-3.9 -3.9zM190.0 237.5l3.9 3.9l-3.9 3.9l-3.9 -3.9zM364.6 238.9l3.9 3.9l-3.9 3.9l-3.9 -3.9zM194.6 237.7l3.9 3.9l-3.9 3.9l-3.9 -3.9zM240.5 238.2l3.9 3.9l-3.9 3.9l-3.9 -3.9zM26.0 236.8l3.9 3.9l-3.9 3.9l-3.9 -3.9zM199.1 238.2l3.9 3.9l-3.9 3.9l-3.9 -3.9zM341.9 239.4l3.9 3.9l-3.9 3.9l-3.9 -3.9zM355.2 239.5l3.9 3.9l-3.9 3.9l-3.9 -3.9zM177.5 238.3l3.9 3.9l-3.9 3.9l-3.9 -3.9zM163.0 238.2l3.9 3.9l-3.9 3.9l-3.9 -3.9zM268.0 239.2l3.9 3.9l-3.9 3.9l-3.9 -3.9zM217.3 238.8l3.9 3.9l-3.9 3.9l-3.9 -3.9zM95.9 238.0l3.9 3.9l-3.9 3.9l-3.9 -3.9zM246.5 239.4l3.9 3.9l-3.9 3.9l-3.9 -3.9zM60.0 238.2l3.9 3.9l-3.9 3.9l-3.9 -3.9zM81.1 238.5l3.9 3.9l-3.9 3.9l-3.9 -3.9zM228.4 239.7l3.9 3.9l-3.9 3.9l-3.9 -3.9zM170.7 239.7l3.9 3.9l-3.9 3.9l-3.9 -3.9zM280.8 240.7l3.9 3.9l-3.9 3.9l-3.9 -3.9zM382.0 241.5l3.9 3.9l-3.9 3.9l-3.9 -3.9zM115.1 239.6l3.9 3.9l-3.9 3.9l-3.9 -3.9zM223.8 240.4l3.9 3.9l-3.9 3.9l-3.9 -3.9zM72.1 239.9l3.9 3.9l-3.9 3.9l-3.9 -3.9zM291.9 242.6l3.9 3.9l-3.9 3.9l-3.9 -3.9zM184.3 242.1l3.9 3.9l-3.9 3.9l-3.9 -3.9zM366.8 243.4l3.9 3.9l-3.9 3.9l-3.9 -3.9zM107.8 241.5l3.9 3.9l-3.9 3.9l-3.9 -3.9zM394.8 243.8l3.9 3.9l-3.9 3.9l-3.9 -3.9zM336.9 243.5l3.9 3.9l-3.9 3.9l-3.9 -3.9zM15.0 241.1l3.9 3.9l-3.9 3.9l-3.9 -3.9zM67.3 241.5l3.9 3.9l-3.9 3.9l-3.9 -3.9zM27.3 241.4l3.9 3.9l-3.9 3.9l-3.9 -3.9zM356.5 243.9l3.9 3.9l-3.9 3.9l-3.9 -3.9zM314.1 243.6l3.9 3.9l-3.9 3.9l-3.9 -3.9zM138.7 242.4l3.9 3.9l-3.9 3.9l-3.9 -3.9zM298.0 243.7l3.9 3.9l-3.9 3.9l-3.9 -3.9zM199.8 243.1l3.9 3.9l-3.9 3.9l-3.9 -3.9zM76.4 242.4l3.9 3.9l-3.9 3.9l-3.9 -3.9zM21.4 242.3l3.9 3.9l-3.9 3.9l-3.9 -3.9zM35.7 242.4l3.9 3.9l-3.9 3.9l-3.9 -3.9zM163.9 243.5l3.9 3.9l-3.9 3.9l-3.9 -3.9zM234.6 244.2l3.9 3.9l-3.9 3.9l-3.9 -3.9zM192.8 244.1l3.9 3.9l-3.9 3.9l-3.9 -3.9zM48.0 243.1l3.9 3.9l-3.9 3.9l-3.9 -3.9zM318.3 245.2l3.9 3.9l-3.9 3.9l-3.9 -3.9zM126.2 243.8l3.9 3.9l-3.9 3.9l-3.9 -3.9zM175.0 244.3l3.9 3.9l-3.9 3.9l-3.9 -3.9zM400.7 246.0l3.9 3.9l-3.9 3.9l-3.9 -3.9zM56.8 243.5l3.9 3.9l-3.9 3.9l-3.9 -3.9zM390.2 245.9l3.9 3.9l-3.9 3.9l-3.9 -3.9zM309.5 245.4l3.9 3.9l-3.9 3.9l-3.9 -3.9zM206.1 244.9l3.9 3.9l-3.9 3.9l-3.9 -3.9zM377.3 246.5l3.9 3.9l-3.9 3.9l-3.9 -3.9zM218.3 245.4l3.9 3.9l-3.9 3.9l-3.9 -3.9zM79.8 244.4l3.9 3.9l-3.9 3.9l-3.9 -3.9zM187.7 245.3l3.9 3.9l-3.9 3.9l-3.9 -3.9zM225.1 246.0l3.9 3.9l-3.9 3.9l-3.9 -3.9zM155.4 245.6l3.9 3.9l-3.9 3.9l-3.9 -3.9zM285.6 246.5l3.9 3.9l-3.9 3.9l-3.9 -3.9zM167.2 246.0l3.9 3.9l-3.9 3.9l-3.9 -3.9zM272.7 246.7l3.9 3.9l-3.9 3.9l-3.9 -3.9zM247.7 246.6l3.9 3.9l-3.9 3.9l-3.9 -3.9zM137.5 246.3l3.9 3.9l-3.9 3.9l-3.9 -3.9zM230.2 247.1l3.9 3.9l-3.9 3.9l-3.9 -3.9zM86.1 246.2l3.9 3.9l-3.9 3.9l-3.9 -3.9zM331.0 248.1l3.9 3.9l-3.9 3.9l-3.9 -3.9zM380.8 248.5l3.9 3.9l-3.9 3.9l-3.9 -3.9zM177.4 247.5l3.9 3.9l-3.9 3.9l-3.9 -3.9zM369.0 249.1l3.9 3.9l-3.9 3.9l-3.9 -3.9zM258.6 248.4l3.9 3.9l-3.9 3.9l-3.9 -3.9zM209.3 248.1l3.9 3.9l-3.9 3.9l-3.9 -3.9zM312.7 248.9l3.9 3.9l-3.9 3.9l-3.9 -3.9zM390.7 250.2l3.9 3.9l-3.9 3.9l-3.9 -3.9zM28.4 248.0l3.9 3.9l-3.9 3.9l-3.9 -3.9zM355.1 250.6l3.9 3.9l-3.9 3.9l-3.9 -3.9zM144.3 249.3l3.9 3.9l-3.9 3.9l-3.9 -3.9zM23.2 248.5l3.9 3.9l-3.9 3.9l-3.9 -3.9zM184.4 249.7l3.9 3.9l-3.9 3.9l-3.9 -3.9zM39.3 249.0l3.9 3.9l-3.9 3.9l-3.9 -3.9zM346.3 251.4l3.9 3.9l-3.9 3.9l-3.9 -3.9zM233.8 250.7l3.9 3.9l-3.9 3.9l-3.9 -3.9zM172.4 250.3l3.9 3.9l-3.9 3.9l-3.9 -3.9zM82.0 249.8l3.9 3.9l-3.9 3.9l-3.9 -3.9zM152.4 250.3l3.9 3.9l-3.9 3.9l-3.9 -3.9zM266.5 251.2l3.9 3.9l-3.9 3.9l-3.9 -3.9zM249.4 251.1l3.9 3.9l-3.9 3.9l-3.9 -3.9zM77.7 249.9l3.9 3.9l-3.9 3.9l-3.9 -3.9zM227.4 251.1l3.9 3.9l-3.9 3.9l-3.9 -3.9zM360.9 252.1l3.9 3.9l-3.9 3.9l-3.9 -3.9zM396.5 252.8l3.9 3.9l-3.9 3.9l-3.9 -3.9zM203.8 251.4l3.9 3.9l-3.9 3.9l-3.9 -3.9zM255.1 251.9l3.9 3.9l-3.9 3.9l-3.9 -3.9zM176.2 251.4l3.9 3.9l-3.9 3.9l-3.9 -3.9zM316.0 252.6l3.9 3.9l-3.9 3.9l-3.9 -3.9zM323.1 252.7l3.9 3.9l-3.9 3.9l-3.9 -3.9zM63.5 250.9l3.9 3.9l-3.9 3.9l-3.9 -3.9zM59.0 251.1l3.9 3.9l-3.9 3.9l-3.9 -3.9zM31.3 250.9l3.9 3.9l-3.9 3.9l-3.9 -3.9zM163.3 252.0l3.9 3.9l-3.9 3.9l-3.9 -3.9zM214.5 252.4l3.9 3.9l-3.9 3.9l-3.9 -3.9zM148.4 252.1l3.9 3.9l-3.9 3.9l-3.9 -3.9zM339.4 253.6l3.9 3.9l-3.9 3.9l-3.9 -3.9zM42.9 251.4l3.9 3.9l-3.9 3.9l-3.9 -3.9zM218.5 252.7l3.9 3.9l-3.9 3.9l-3.9 -3.9zM18.2 251.8l3.9 3.9l-3.9 3.9l-3.9 -3.9zM386.4 254.5l3.9 3.9l-3.9 3.9l-3.9 -3.9zM333.5 254.3l3.9 3.9l-3.9 3.9l-3.9 -3.9zM168.2 253.2l3.9 3.9l-3.9 3.9l-3.9 -3.9zM200.3 253.8l3.9 3.9l-3.9 3.9l-3.9 -3.9zM67.0 252.8l3.9 3.9l-3.9 3.9l-3.9 -3.9zM244.8 254.5l3.9 3.9l-3.9 3.9l-3.9 -3.9zM344.3 255.7l3.9 3.9l-3.9 3.9l-3.9 -3.9zM399.8 256.2l3.9 3.9l-3.9 3.9l-3.9 -3.9zM152.1 254.5l3.9 3.9l-3.9 3.9l-3.9 -3.9zM355.3 256.1l3.9 3.9l-3.9 3.9l-3.9 -3.9zM394.7 256.6l3.9 3.9l-3.9 3.9l-3.9 -3.9zM196.1 255.5l3.9 3.9l-3.9 3.9l-3.9 -3.9zM236.9 255.9l3.9 3.9l-3.9 3.9l-3.9 -3.9zM76.6 254.9l3.9 3.9l-3.9 3.9l-3.9 -3.9zM225.9 256.2l3.9 3.9l-3.9 3.9l-3.9 -3.9zM155.9 255.8l3.9 3.9l-3.9 3.9l-3.9 -3.9zM48.3 255.1l3.9 3.9l-3.9 3.9l-3.9 -3.9zM363.9 257.9l3.9 3.9l-3.9 3.9l-3.9 -3.9zM43.1 255.6l3.9 3.9l-3.9 3.9l-3.9 -3.9zM320.6 257.7l3.9 3.9l-3.9 3.9l-3.9 -3.9zM63.1 255.9l3.9 3.9l-3.9 3.9l-3.9 -3.9zM201.6 257.5l3.9 3.9l-3.9 3.9l-3.9 -3.9zM24.8 256.2l3.9 3.9l-3.9 3.9l-3.9 -3.9zM160.1 257.4l3.9 3.9l-3.9 3.9l-3.9 -3.9zM169.5 257.6l3.9 3.9l-3.9 3.9l-3.9 -3.9zM206.3 258.0l3.9 3.9l-3.9 3.9l-3.9 -3.9zM328.5 259.2l3.9 3.9l-3.9 3.9l-3.9 -3.9zM180.0 258.2l3.9 3.9l-3.9 3.9l-3.9 -3.9zM164.7 258.2l3.9 3.9l-3.9 3.9l-3.9 -3.9zM254.2 258.8l3.9 3.9l-3.9 3.9l-3.9 -3.9zM37.1 257.6l3.9 3.9l-3.9 3.9l-3.9 -3.9zM244.9 259.7l3.9 3.9l-3.9 3.9l-3.9 -3.9zM196.7 260.2l3.9 3.9l-3.9 3.9l-3.9 -3.9zM221.9 261.0l3.9 3.9l-3.9 3.9l-3.9 -3.9zM174.6 261.1l3.9 3.9l-3.9 3.9l-3.9 -3.9zM62.5 260.4l3.9 3.9l-3.9 3.9l-3.9 -3.9zM18.7 260.1l3.9 3.9l-3.9 3.9l-3.9 -3.9zM55.2 260.6l3.9 3.9l-3.9 3.9l-3.9 -3.9zM22.6 260.4l3.9 3.9l-3.9 3.9l-3.9 -3.9zM41.9 260.9l3.9 3.9l-3.9 3.9l-3.9 -3.9zM50.6 261.0l3.9 3.9l-3.9 3.9l-3.9 -3.9zM335.7 263.6l3.9 3.9l-3.9 3.9l-3.9 -3.9zM37.2 262.7l3.9 3.9l-3.9 3.9l-3.9 -3.9zM355.8 265.4l3.9 3.9l-3.9 3.9l-3.9 -3.9zM325.2 265.4l3.9 3.9l-3.9 3.9l-3.9 -3.9zM342.7 266.2l3.9 3.9l-3.9 3.9l-3.9 -3.9zM31.4 264.0l3.9 3.9l-3.9 3.9l-3.9 -3.9zM349.7 267.7l3.9 3.9l-3.9 3.9l-3.9 -3.9zM42.2 265.7l3.9 3.9l-3.9 3.9l-3.9 -3.9zM54.9 267.0l3.9 3.9l-3.9 3.9l-3.9 -3.9zM50.9 267.4l3.9 3.9l-3.9 3.9l-3.9 -3.9zM19.0 267.2l3.9 3.9l-3.9 3.9l-3.9 -3.9zM347.9 272.3l3.9 3.9l-3.9 3.9l-3.9 -3.9zM29.2 270.2l3.9 3.9l-3.9 3.9l-3.9 -3.9zM47.1 271.2l3.9 3.9l-3.9 3.9l-3.9 -3.9zM330.3 273.5l3.9 3.9l-3.9 3.9l-3.9 -3.9zM17.3 271.5l3.9 3.9l-3.9 3.9l-3.9 -3.9zM337.6 274.3l3.9 3.9l-3.9 3.9l-3.9 -3.9zM351.4 274.6l3.9 3.9l-3.9 3.9l-3.9 -3.9zM37.5 273.2l3.9 3.9l-3.9 3.9l-3.9 -3.9zM333.7 275.6l3.9 3.9l-3.9 3.9l-3.9 -3.9zM326.2 275.6l3.9 3.9l-3.9 3.9l-3.9 -3.9zM342.6 275.8l3.9 3.9l-3.9 3.9l-3.9 -3.9zM347.5 276.9l3.9 3.9l-3.9 3.9l-3.9 -3.9zM14.6 274.7l3.9 3.9l-3.9 3.9l-3.9 -3.9zM20.2 275.3l3.9 3.9l-3.9 3.9l-3.9 -3.9zM31.6 275.3l3.9 3.9l-3.9 3.9l-3.9 -3.9zM38.8 276.9l3.9 3.9l-3.9 3.9l-3.9 -3.9zM58.9 277.3l3.9 3.9l-3.9 3.9l-3.9 -3.9zM27.2 277.2l3.9 3.9l-3.9 3.9l-3.9 -3.9zM337.1 279.8l3.9 3.9l-3.9 3.9l-3.9 -3.9zM44.5 279.2l3.9 3.9l-3.9 3.9l-3.9 -3.9zM35.4 279.8l3.9 3.9l-3.9 3.9l-3.9 -3.9zM341.2 285.2l3.9 3.9l-3.9 3.9l-3.9 -3.9zM45.7 285.1l3.9 3.9l-3.9 3.9l-3.9 -3.9zM26.1 284.9l3.9 3.9l-3.9 3.9l-3.9 -3.9zM50.0 285.6l3.9 3.9l-3.9 3.9l-3.9 -3.9zM13.7 285.8l3.9 3.9l-3.9 3.9l-3.9 -3.9zM331.6 289.4l3.9 3.9l-3.9 3.9l-3.9 -3.9zM336.0 289.9l3.9 3.9l-3.9 3.9l-3.9 -3.9zM39.7 288.1l3.9 3.9l-3.9 3.9l-3.9 -3.9zM45.3 289.6l3.9 3.9l-3.9 3.9l-3.9 -3.9zM19.4 289.7l3.9 3.9l-3.9 3.9l-3.9 -3.9zM33.6 289.8l3.9 3.9l-3.9 3.9l-3.9 -3.9zM15.2 290.1l3.9 3.9l-3.9 3.9l-3.9 -3.9zM345.3 293.7l3.9 3.9l-3.9 3.9l-3.9 -3.9zM37.7 291.9l3.9 3.9l-3.9 3.9l-3.9 -3.9zM249.0 294.2l3.9 3.9l-3.9 3.9l-3.9 -3.9zM329.5 295.3l3.9 3.9l-3.9 3.9l-3.9 -3.9zM325.5 295.5l3.9 3.9l-3.9 3.9l-3.9 -3.9zM25.2 293.9l3.9 3.9l-3.9 3.9l-3.9 -3.9zM342.4 296.7l3.9 3.9l-3.9 3.9l-3.9 -3.9zM271.2 297.6l3.9 3.9l-3.9 3.9l-3.9 -3.9zM241.2 297.4l3.9 3.9l-3.9 3.9l-3.9 -3.9zM40.7 296.2l3.9 3.9l-3.9 3.9l-3.9 -3.9zM335.2 298.6l3.9 3.9l-3.9 3.9l-3.9 -3.9zM248.0 298.1l3.9 3.9l-3.9 3.9l-3.9 -3.9zM44.6 297.2l3.9 3.9l-3.9 3.9l-3.9 -3.9zM17.6 297.0l3.9 3.9l-3.9 3.9l-3.9 -3.9zM310.6 299.7l3.9 3.9l-3.9 3.9l-3.9 -3.9zM32.7 298.3l3.9 3.9l-3.9 3.9l-3.9 -3.9zM331.2 302.2l3.9 3.9l-3.9 3.9l-3.9 -3.9zM26.4 299.9l3.9 3.9l-3.9 3.9l-3.9 -3.9zM256.3 302.0l3.9 3.9l-3.9 3.9l-3.9 -3.9zM240.4 301.9l3.9 3.9l-3.9 3.9l-3.9 -3.9zM313.6 302.6l3.9 3.9l-3.9 3.9l-3.9 -3.9zM16.0 300.7l3.9 3.9l-3.9 3.9l-3.9 -3.9zM289.1 303.1l3.9 3.9l-3.9 3.9l-3.9 -3.9zM267.2 303.3l3.9 3.9l-3.9 3.9l-3.9 -3.9zM324.8 304.2l3.9 3.9l-3.9 3.9l-3.9 -3.9zM277.6 304.2l3.9 3.9l-3.9 3.9l-3.9 -3.9zM304.8 305.1l3.9 3.9l-3.9 3.9l-3.9 -3.9zM296.9 306.0l3.9 3.9l-3.9 3.9l-3.9 -3.9zM252.6 305.8l3.9 3.9l-3.9 3.9l-3.9 -3.9zM319.5 306.5l3.9 3.9l-3.9 3.9l-3.9 -3.9zM261.9 306.5l3.9 3.9l-3.9 3.9l-3.9 -3.9zM312.3 307.0l3.9 3.9l-3.9 3.9l-3.9 -3.9zM292.3 307.4l3.9 3.9l-3.9 3.9l-3.9 -3.9zM339.7 307.8l3.9 3.9l-3.9 3.9l-3.9 -3.9zM256.7 307.3l3.9 3.9l-3.9 3.9l-3.9 -3.9zM267.5 307.5l3.9 3.9l-3.9 3.9l-3.9 -3.9zM34.5 306.2l3.9 3.9l-3.9 3.9l-3.9 -3.9zM20.2 306.3l3.9 3.9l-3.9 3.9l-3.9 -3.9zM284.9 308.8l3.9 3.9l-3.9 3.9l-3.9 -3.9zM278.2 309.2l3.9 3.9l-3.9 3.9l-3.9 -3.9zM309.6 310.4l3.9 3.9l-3.9 3.9l-3.9 -3.9zM16.9 308.8l3.9 3.9l-3.9 3.9l-3.9 -3.9zM305.5 311.2l3.9 3.9l-3.9 3.9l-3.9 -3.9zM273.7 311.2l3.9 3.9l-3.9 3.9l-3.9 -3.9zM29.1 309.5l3.9 3.9l-3.9 3.9l-3.9 -3.9zM246.5 311.2l3.9 3.9l-3.9 3.9l-3.9 -3.9zM318.6 312.5l3.9 3.9l-3.9 3.9l-3.9 -3.9zM253.5 312.6l3.9 3.9l-3.9 3.9l-3.9 -3.9zM266.6 313.4l3.9 3.9l-3.9 3.9l-3.9 -3.9zM311.4 314.0l3.9 3.9l-3.9 3.9l-3.9 -3.9zM249.3 314.0l3.9 3.9l-3.9 3.9l-3.9 -3.9zM323.6 314.7l3.9 3.9l-3.9 3.9l-3.9 -3.9zM27.8 313.3l3.9 3.9l-3.9 3.9l-3.9 -3.9zM21.8 314.0l3.9 3.9l-3.9 3.9l-3.9 -3.9zM288.7 316.1l3.9 3.9l-3.9 3.9l-3.9 -3.9zM317.8 316.6l3.9 3.9l-3.9 3.9l-3.9 -3.9zM31.4 315.2l3.9 3.9l-3.9 3.9l-3.9 -3.9zM243.2 317.3l3.9 3.9l-3.9 3.9l-3.9 -3.9zM313.6 318.0l3.9 3.9l-3.9 3.9l-3.9 -3.9zM331.6 318.1l3.9 3.9l-3.9 3.9l-3.9 -3.9zM284.5 317.8l3.9 3.9l-3.9 3.9l-3.9 -3.9zM279.4 317.8l3.9 3.9l-3.9 3.9l-3.9 -3.9zM261.7 318.6l3.9 3.9l-3.9 3.9l-3.9 -3.9zM237.9 318.4l3.9 3.9l-3.9 3.9l-3.9 -3.9zM273.0 318.7l3.9 3.9l-3.9 3.9l-3.9 -3.9zM248.0 319.4l3.9 3.9l-3.9 3.9l-3.9 -3.9zM254.8 319.5l3.9 3.9l-3.9 3.9l-3.9 -3.9zM15.1 317.9l3.9 3.9l-3.9 3.9l-3.9 -3.9zM320.9 320.4l3.9 3.9l-3.9 3.9l-3.9 -3.9zM309.8 320.5l3.9 3.9l-3.9 3.9l-3.9 -3.9zM292.2 320.5l3.9 3.9l-3.9 3.9l-3.9 -3.9zM37.1 318.8l3.9 3.9l-3.9 3.9l-3.9 -3.9zM315.9 322.1l3.9 3.9l-3.9 3.9l-3.9 -3.9zM19.7 320.3l3.9 3.9l-3.9 3.9l-3.9 -3.9zM239.6 322.1l3.9 3.9l-3.9 3.9l-3.9 -3.9zM287.6 322.6l3.9 3.9l-3.9 3.9l-3.9 -3.9zM304.6 323.2l3.9 3.9l-3.9 3.9l-3.9 -3.9zM329.5 323.5l3.9 3.9l-3.9 3.9l-3.9 -3.9zM298.7 323.4l3.9 3.9l-3.9 3.9l-3.9 -3.9zM44.9 322.4l3.9 3.9l-3.9 3.9l-3.9 -3.9zM27.5 323.2l3.9 3.9l-3.9 3.9l-3.9 -3.9zM313.4 325.5l3.9 3.9l-3.9 3.9l-3.9 -3.9zM323.3 326.0l3.9 3.9l-3.9 3.9l-3.9 -3.9zM234.4 326.3l3.9 3.9l-3.9 3.9l-3.9 -3.9zM250.2 326.7l3.9 3.9l-3.9 3.9l-3.9 -3.9zM13.4 324.9l3.9 3.9l-3.9 3.9l-3.9 -3.9zM32.0 325.3l3.9 3.9l-3.9 3.9l-3.9 -3.9zM242.9 327.4l3.9 3.9l-3.9 3.9l-3.9 -3.9zM283.2 327.7l3.9 3.9l-3.9 3.9l-3.9 -3.9zM42.3 326.0l3.9 3.9l-3.9 3.9l-3.9 -3.9zM302.3 328.0l3.9 3.9l-3.9 3.9l-3.9 -3.9zM297.2 328.1l3.9 3.9l-3.9 3.9l-3.9 -3.9zM272.3 328.5l3.9 3.9l-3.9 3.9l-3.9 -3.9zM277.9 328.6l3.9 3.9l-3.9 3.9l-3.9 -3.9zM259.8 328.5l3.9 3.9l-3.9 3.9l-3.9 -3.9zM35.4 327.7l3.9 3.9l-3.9 3.9l-3.9 -3.9zM286.0 330.6l3.9 3.9l-3.9 3.9l-3.9 -3.9zM304.8 331.1l3.9 3.9l-3.9 3.9l-3.9 -3.9zM309.8 331.5l3.9 3.9l-3.9 3.9l-3.9 -3.9zM53.3 330.0l3.9 3.9l-3.9 3.9l-3.9 -3.9zM318.7 332.1l3.9 3.9l-3.9 3.9l-3.9 -3.9zM48.0 330.4l3.9 3.9l-3.9 3.9l-3.9 -3.9zM242.5 332.0l3.9 3.9l-3.9 3.9l-3.9 -3.9zM16.3 330.8l3.9 3.9l-3.9 3.9l-3.9 -3.9zM272.6 333.2l3.9 3.9l-3.9 3.9l-3.9 -3.9zM268.0 333.4l3.9 3.9l-3.9 3.9l-3.9 -3.9zM40.3 331.7l3.9 3.9l-3.9 3.9l-3.9 -3.9zM249.4 333.8l3.9 3.9l-3.9 3.9l-3.9 -3.9zM260.5 334.6l3.9 3.9l-3.9 3.9l-3.9 -3.9zM279.6 335.1l3.9 3.9l-3.9 3.9l-3.9 -3.9zM61.4 334.6l3.9 3.9l-3.9 3.9l-3.9 -3.9zM294.2 336.6l3.9 3.9l-3.9 3.9l-3.9 -3.9zM269.8 336.9l3.9 3.9l-3.9 3.9l-3.9 -3.9zM48.8 335.2l3.9 3.9l-3.9 3.9l-3.9 -3.9zM320.1 337.3l3.9 3.9l-3.9 3.9l-3.9 -3.9zM288.8 337.4l3.9 3.9l-3.9 3.9l-3.9 -3.9zM24.4 335.5l3.9 3.9l-3.9 3.9l-3.9 -3.9zM246.7 337.9l3.9 3.9l-3.9 3.9l-3.9 -3.9zM37.5 336.4l3.9 3.9l-3.9 3.9l-3.9 -3.9zM307.6 338.9l3.9 3.9l-3.9 3.9l-3.9 -3.9zM281.3 338.8l3.9 3.9l-3.9 3.9l-3.9 -3.9zM273.2 338.9l3.9 3.9l-3.9 3.9l-3.9 -3.9zM31.8 337.2l3.9 3.9l-3.9 3.9l-3.9 -3.9zM18.8 337.6l3.9 3.9l-3.9 3.9l-3.9 -3.9zM324.6 339.9l3.9 3.9l-3.9 3.9l-3.9 -3.9zM303.6 340.8l3.9 3.9l-3.9 3.9l-3.9 -3.9zM276.4 341.3l3.9 3.9l-3.9 3.9l-3.9 -3.9zM299.1 341.5l3.9 3.9l-3.9 3.9l-3.9 -3.9zM255.2 341.7l3.9 3.9l-3.9 3.9l-3.9 -3.9zM243.3 341.7l3.9 3.9l-3.9 3.9l-3.9 -3.9zM310.7 342.2l3.9 3.9l-3.9 3.9l-3.9 -3.9zM57.1 340.3l3.9 3.9l-3.9 3.9l-3.9 -3.9zM47.9 340.3l3.9 3.9l-3.9 3.9l-3.9 -3.9zM36.1 340.3l3.9 3.9l-3.9 3.9l-3.9 -3.9zM15.6 340.5l3.9 3.9l-3.9 3.9l-3.9 -3.9zM282.0 342.8l3.9 3.9l-3.9 3.9l-3.9 -3.9zM258.9 344.1l3.9 3.9l-3.9 3.9l-3.9 -3.9zM250.0 344.5l3.9 3.9l-3.9 3.9l-3.9 -3.9zM402.1 345.8l3.9 3.9l-3.9 3.9l-3.9 -3.9zM66.1 343.4l3.9 3.9l-3.9 3.9l-3.9 -3.9zM304.0 345.4l3.9 3.9l-3.9 3.9l-3.9 -3.9zM19.5 343.4l3.9 3.9l-3.9 3.9l-3.9 -3.9zM161.4 344.8l3.9 3.9l-3.9 3.9l-3.9 -3.9zM276.7 346.0l3.9 3.9l-3.9 3.9l-3.9 -3.9zM396.6 347.1l3.9 3.9l-3.9 3.9l-3.9 -3.9zM290.1 346.6l3.9 3.9l-3.9 3.9l-3.9 -3.9zM29.5 344.9l3.9 3.9l-3.9 3.9l-3.9 -3.9zM285.7 346.9l3.9 3.9l-3.9 3.9l-3.9 -3.9zM44.1 345.4l3.9 3.9l-3.9 3.9l-3.9 -3.9zM54.5 345.8l3.9 3.9l-3.9 3.9l-3.9 -3.9zM297.9 348.0l3.9 3.9l-3.9 3.9l-3.9 -3.9zM61.1 346.4l3.9 3.9l-3.9 3.9l-3.9 -3.9zM155.1 347.1l3.9 3.9l-3.9 3.9l-3.9 -3.9zM173.4 347.9l3.9 3.9l-3.9 3.9l-3.9 -3.9zM263.0 348.8l3.9 3.9l-3.9 3.9l-3.9 -3.9zM249.8 349.0l3.9 3.9l-3.9 3.9l-3.9 -3.9zM302.3 349.5l3.9 3.9l-3.9 3.9l-3.9 -3.9zM24.3 347.4l3.9 3.9l-3.9 3.9l-3.9 -3.9zM269.0 350.1l3.9 3.9l-3.9 3.9l-3.9 -3.9zM89.4 349.0l3.9 3.9l-3.9 3.9l-3.9 -3.9zM283.3 350.6l3.9 3.9l-3.9 3.9l-3.9 -3.9zM255.9 350.5l3.9 3.9l-3.9 3.9l-3.9 -3.9zM274.0 350.9l3.9 3.9l-3.9 3.9l-3.9 -3.9zM290.6 351.3l3.9 3.9l-3.9 3.9l-3.9 -3.9zM138.4 350.4l3.9 3.9l-3.9 3.9l-3.9 -3.9zM395.0 354.0l3.9 3.9l-3.9 3.9l-3.9 -3.9zM170.9 352.8l3.9 3.9l-3.9 3.9l-3.9 -3.9zM245.6 353.7l3.9 3.9l-3.9 3.9l-3.9 -3.9zM68.6 352.6l3.9 3.9l-3.9 3.9l-3.9 -3.9zM27.6 352.8l3.9 3.9l-3.9 3.9l-3.9 -3.9zM267.4 354.8l3.9 3.9l-3.9 3.9l-3.9 -3.9zM278.1 354.9l3.9 3.9l-3.9 3.9l-3.9 -3.9zM292.6 355.1l3.9 3.9l-3.9 3.9l-3.9 -3.9zM62.0 353.3l3.9 3.9l-3.9 3.9l-3.9 -3.9zM48.4 353.3l3.9 3.9l-3.9 3.9l-3.9 -3.9zM87.2 354.3l3.9 3.9l-3.9 3.9l-3.9 -3.9zM142.3 355.3l3.9 3.9l-3.9 3.9l-3.9 -3.9zM151.0 355.6l3.9 3.9l-3.9 3.9l-3.9 -3.9zM257.0 356.8l3.9 3.9l-3.9 3.9l-3.9 -3.9zM271.8 356.9l3.9 3.9l-3.9 3.9l-3.9 -3.9zM400.6 358.1l3.9 3.9l-3.9 3.9l-3.9 -3.9zM177.2 356.4l3.9 3.9l-3.9 3.9l-3.9 -3.9zM161.1 356.3l3.9 3.9l-3.9 3.9l-3.9 -3.9zM74.7 355.7l3.9 3.9l-3.9 3.9l-3.9 -3.9zM35.1 355.7l3.9 3.9l-3.9 3.9l-3.9 -3.9zM288.0 357.9l3.9 3.9l-3.9 3.9l-3.9 -3.9zM389.1 359.0l3.9 3.9l-3.9 3.9l-3.9 -3.9zM261.4 358.1l3.9 3.9l-3.9 3.9l-3.9 -3.9zM31.2 356.6l3.9 3.9l-3.9 3.9l-3.9 -3.9zM65.6 357.0l3.9 3.9l-3.9 3.9l-3.9 -3.9zM81.5 357.5l3.9 3.9l-3.9 3.9l-3.9 -3.9zM252.5 358.8l3.9 3.9l-3.9 3.9l-3.9 -3.9zM50.8 357.4l3.9 3.9l-3.9 3.9l-3.9 -3.9zM41.0 358.5l3.9 3.9l-3.9 3.9l-3.9 -3.9zM183.9 359.7l3.9 3.9l-3.9 3.9l-3.9 -3.9zM279.4 360.5l3.9 3.9l-3.9 3.9l-3.9 -3.9zM126.2 359.4l3.9 3.9l-3.9 3.9l-3.9 -3.9zM69.5 359.4l3.9 3.9l-3.9 3.9l-3.9 -3.9zM92.1 359.6l3.9 3.9l-3.9 3.9l-3.9 -3.9zM151.3 360.1l3.9 3.9l-3.9 3.9l-3.9 -3.9zM102.5 359.9l3.9 3.9l-3.9 3.9l-3.9 -3.9zM171.1 360.4l3.9 3.9l-3.9 3.9l-3.9 -3.9zM397.2 362.2l3.9 3.9l-3.9 3.9l-3.9 -3.9zM264.4 361.4l3.9 3.9l-3.9 3.9l-3.9 -3.9zM130.3 360.7l3.9 3.9l-3.9 3.9l-3.9 -3.9zM110.5 360.9l3.9 3.9l-3.9 3.9l-3.9 -3.9zM85.8 361.5l3.9 3.9l-3.9 3.9l-3.9 -3.9zM50.6 361.6l3.9 3.9l-3.9 3.9l-3.9 -3.9zM154.6 362.7l3.9 3.9l-3.9 3.9l-3.9 -3.9zM76.7 362.3l3.9 3.9l-3.9 3.9l-3.9 -3.9zM251.9 363.6l3.9 3.9l-3.9 3.9l-3.9 -3.9zM138.8 363.1l3.9 3.9l-3.9 3.9l-3.9 -3.9zM43.7 362.4l3.9 3.9l-3.9 3.9l-3.9 -3.9zM180.2 363.6l3.9 3.9l-3.9 3.9l-3.9 -3.9zM120.3 363.2l3.9 3.9l-3.9 3.9l-3.9 -3.9zM385.9 365.4l3.9 3.9l-3.9 3.9l-3.9 -3.9zM379.9 365.5l3.9 3.9l-3.9 3.9l-3.9 -3.9zM150.4 364.0l3.9 3.9l-3.9 3.9l-3.9 -3.9zM402.3 366.3l3.9 3.9l-3.9 3.9l-3.9 -3.9zM162.9 364.6l3.9 3.9l-3.9 3.9l-3.9 -3.9zM93.7 364.3l3.9 3.9l-3.9 3.9l-3.9 -3.9zM191.6 365.1l3.9 3.9l-3.9 3.9l-3.9 -3.9zM243.9 365.5l3.9 3.9l-3.9 3.9l-3.9 -3.9zM63.5 364.2l3.9 3.9l-3.9 3.9l-3.9 -3.9zM171.3 365.2l3.9 3.9l-3.9 3.9l-3.9 -3.9zM176.9 366.4l3.9 3.9l-3.9 3.9l-3.9 -3.9zM85.4 366.0l3.9 3.9l-3.9 3.9l-3.9 -3.9zM30.5 365.6l3.9 3.9l-3.9 3.9l-3.9 -3.9zM57.2 365.9l3.9 3.9l-3.9 3.9l-3.9 -3.9zM99.1 366.5l3.9 3.9l-3.9 3.9l-3.9 -3.9zM77.4 366.4l3.9 3.9l-3.9 3.9l-3.9 -3.9zM70.4 366.4l3.9 3.9l-3.9 3.9l-3.9 -3.9zM52.3 366.3l3.9 3.9l-3.9 3.9l-3.9 -3.9zM292.7 368.7l3.9 3.9l-3.9 3.9l-3.9 -3.9zM115.3 367.4l3.9 3.9l-3.9 3.9l-3.9 -3.9zM145.8 367.6l3.9 3.9l-3.9 3.9l-3.9 -3.9zM389.3 369.7l3.9 3.9l-3.9 3.9l-3.9 -3.9zM400.3 370.1l3.9 3.9l-3.9 3.9l-3.9 -3.9zM182.0 368.9l3.9 3.9l-3.9 3.9l-3.9 -3.9zM273.2 369.9l3.9 3.9l-3.9 3.9l-3.9 -3.9zM105.2 368.7l3.9 3.9l-3.9 3.9l-3.9 -3.9zM258.0 370.2l3.9 3.9l-3.9 3.9l-3.9 -3.9zM168.8 369.9l3.9 3.9l-3.9 3.9l-3.9 -3.9zM132.6 369.7l3.9 3.9l-3.9 3.9l-3.9 -3.9zM281.8 370.9l3.9 3.9l-3.9 3.9l-3.9 -3.9zM394.7 372.0l3.9 3.9l-3.9 3.9l-3.9 -3.9zM152.5 370.6l3.9 3.9l-3.9 3.9l-3.9 -3.9zM249.6 371.4l3.9 3.9l-3.9 3.9l-3.9 -3.9zM157.6 372.1l3.9 3.9l-3.9 3.9l-3.9 -3.9zM95.5 371.7l3.9 3.9l-3.9 3.9l-3.9 -3.9zM384.1 374.3l3.9 3.9l-3.9 3.9l-3.9 -3.9zM33.4 371.8l3.9 3.9l-3.9 3.9l-3.9 -3.9zM275.7 374.2l3.9 3.9l-3.9 3.9l-3.9 -3.9zM77.3 372.8l3.9 3.9l-3.9 3.9l-3.9 -3.9zM181.0 373.7l3.9 3.9l-3.9 3.9l-3.9 -3.9zM139.8 373.5l3.9 3.9l-3.9 3.9l-3.9 -3.9zM264.0 374.6l3.9 3.9l-3.9 3.9l-3.9 -3.9zM69.9 373.2l3.9 3.9l-3.9 3.9l-3.9 -3.9zM125.1 373.6l3.9 3.9l-3.9 3.9l-3.9 -3.9zM105.7 373.5l3.9 3.9l-3.9 3.9l-3.9 -3.9zM165.2 374.0l3.9 3.9l-3.9 3.9l-3.9 -3.9zM373.8 375.8l3.9 3.9l-3.9 3.9l-3.9 -3.9zM37.5 373.2l3.9 3.9l-3.9 3.9l-3.9 -3.9zM121.1 373.9l3.9 3.9l-3.9 3.9l-3.9 -3.9zM82.8 373.7l3.9 3.9l-3.9 3.9l-3.9 -3.9zM185.0 374.6l3.9 3.9l-3.9 3.9l-3.9 -3.9zM114.4 374.2l3.9 3.9l-3.9 3.9l-3.9 -3.9zM57.3 373.8l3.9 3.9l-3.9 3.9l-3.9 -3.9zM89.1 374.1l3.9 3.9l-3.9 3.9l-3.9 -3.9zM101.3 374.3l3.9 3.9l-3.9 3.9l-3.9 -3.9zM268.0 375.6l3.9 3.9l-3.9 3.9l-3.9 -3.9zM394.5 376.9l3.9 3.9l-3.9 3.9l-3.9 -3.9zM168.8 375.8l3.9 3.9l-3.9 3.9l-3.9 -3.9zM52.6 375.1l3.9 3.9l-3.9 3.9l-3.9 -3.9zM390.0 378.0l3.9 3.9l-3.9 3.9l-3.9 -3.9zM232.8 377.0l3.9 3.9l-3.9 3.9l-3.9 -3.9zM378.5 378.4l3.9 3.9l-3.9 3.9l-3.9 -3.9zM240.6 377.5l3.9 3.9l-3.9 3.9l-3.9 -3.9zM93.9 376.7l3.9 3.9l-3.9 3.9l-3.9 -3.9zM46.0 376.8l3.9 3.9l-3.9 3.9l-3.9 -3.9zM202.1 378.1l3.9 3.9l-3.9 3.9l-3.9 -3.9zM369.3 379.6l3.9 3.9l-3.9 3.9l-3.9 -3.9zM118.8 377.8l3.9 3.9l-3.9 3.9l-3.9 -3.9zM75.4 377.6l3.9 3.9l-3.9 3.9l-3.9 -3.9zM144.2 378.2l3.9 3.9l-3.9 3.9l-3.9 -3.9zM228.3 378.9l3.9 3.9l-3.9 3.9l-3.9 -3.9zM129.6 378.2l3.9 3.9l-3.9 3.9l-3.9 -3.9zM65.2 377.8l3.9 3.9l-3.9 3.9l-3.9 -3.9zM185.0 378.9l3.9 3.9l-3.9 3.9l-3.9 -3.9zM399.7 380.7l3.9 3.9l-3.9 3.9l-3.9 -3.9zM69.7 378.3l3.9 3.9l-3.9 3.9l-3.9 -3.9zM82.0 378.5l3.9 3.9l-3.9 3.9l-3.9 -3.9zM123.7 378.9l3.9 3.9l-3.9 3.9l-3.9 -3.9zM108.1 379.2l3.9 3.9l-3.9 3.9l-3.9 -3.9zM248.9 380.7l3.9 3.9l-3.9 3.9l-3.9 -3.9zM157.1 380.0l3.9 3.9l-3.9 3.9l-3.9 -3.9zM382.8 382.0l3.9 3.9l-3.9 3.9l-3.9 -3.9zM223.2 381.1l3.9 3.9l-3.9 3.9l-3.9 -3.9zM395.6 383.0l3.9 3.9l-3.9 3.9l-3.9 -3.9zM149.4 381.1l3.9 3.9l-3.9 3.9l-3.9 -3.9zM169.3 381.3l3.9 3.9l-3.9 3.9l-3.9 -3.9zM189.7 381.5l3.9 3.9l-3.9 3.9l-3.9 -3.9zM163.5 381.4l3.9 3.9l-3.9 3.9l-3.9 -3.9zM181.1 381.5l3.9 3.9l-3.9 3.9l-3.9 -3.9zM208.3 381.8l3.9 3.9l-3.9 3.9l-3.9 -3.9zM242.6 382.1l3.9 3.9l-3.9 3.9l-3.9 -3.9zM372.4 383.4l3.9 3.9l-3.9 3.9l-3.9 -3.9zM50.0 381.2l3.9 3.9l-3.9 3.9l-3.9 -3.9zM100.8 382.2l3.9 3.9l-3.9 3.9l-3.9 -3.9zM96.5 382.3l3.9 3.9l-3.9 3.9l-3.9 -3.9zM255.5 383.6l3.9 3.9l-3.9 3.9l-3.9 -3.9zM215.5 383.5l3.9 3.9l-3.9 3.9l-3.9 -3.9zM228.8 383.9l3.9 3.9l-3.9 3.9l-3.9 -3.9zM74.5 382.7l3.9 3.9l-3.9 3.9l-3.9 -3.9zM184.4 383.8l3.9 3.9l-3.9 3.9l-3.9 -3.9zM135.4 383.5l3.9 3.9l-3.9 3.9l-3.9 -3.9zM400.3 385.6l3.9 3.9l-3.9 3.9l-3.9 -3.9zM260.7 384.6l3.9 3.9l-3.9 3.9l-3.9 -3.9zM36.7 383.4l3.9 3.9l-3.9 3.9l-3.9 -3.9zM84.7 384.2l3.9 3.9l-3.9 3.9l-3.9 -3.9zM146.0 384.8l3.9 3.9l-3.9 3.9l-3.9 -3.9zM247.4 385.7l3.9 3.9l-3.9 3.9l-3.9 -3.9zM126.4 384.8l3.9 3.9l-3.9 3.9l-3.9 -3.9zM379.3 386.8l3.9 3.9l-3.9 3.9l-3.9 -3.9zM174.3 385.2l3.9 3.9l-3.9 3.9l-3.9 -3.9zM46.7 384.3l3.9 3.9l-3.9 3.9l-3.9 -3.9zM163.7 385.6l3.9 3.9l-3.9 3.9l-3.9 -3.9zM219.7 386.3l3.9 3.9l-3.9 3.9l-3.9 -3.9zM237.0 386.5l3.9 3.9l-3.9 3.9l-3.9 -3.9zM151.8 386.2l3.9 3.9l-3.9 3.9l-3.9 -3.9zM99.6 386.0l3.9 3.9l-3.9 3.9l-3.9 -3.9zM388.6 388.4l3.9 3.9l-3.9 3.9l-3.9 -3.9zM56.6 386.1l3.9 3.9l-3.9 3.9l-3.9 -3.9zM224.7 387.4l3.9 3.9l-3.9 3.9l-3.9 -3.9zM168.4 387.0l3.9 3.9l-3.9 3.9l-3.9 -3.9zM88.5 386.7l3.9 3.9l-3.9 3.9l-3.9 -3.9zM41.4 386.4l3.9 3.9l-3.9 3.9l-3.9 -3.9zM134.0 387.5l3.9 3.9l-3.9 3.9l-3.9 -3.9zM143.0 387.7l3.9 3.9l-3.9 3.9l-3.9 -3.9zM198.3 388.3l3.9 3.9l-3.9 3.9l-3.9 -3.9zM62.3 387.3l3.9 3.9l-3.9 3.9l-3.9 -3.9zM36.5 387.3l3.9 3.9l-3.9 3.9l-3.9 -3.9zM94.5 387.9l3.9 3.9l-3.9 3.9l-3.9 -3.9zM75.5 387.9l3.9 3.9l-3.9 3.9l-3.9 -3.9zM105.1 388.4l3.9 3.9l-3.9 3.9l-3.9 -3.9zM52.0 388.0l3.9 3.9l-3.9 3.9l-3.9 -3.9zM193.9 389.2l3.9 3.9l-3.9 3.9l-3.9 -3.9zM110.2 388.7l3.9 3.9l-3.9 3.9l-3.9 -3.9zM355.3 390.7l3.9 3.9l-3.9 3.9l-3.9 -3.9zM83.0 388.7l3.9 3.9l-3.9 3.9l-3.9 -3.9zM374.9 391.2l3.9 3.9l-3.9 3.9l-3.9 -3.9zM157.2 389.6l3.9 3.9l-3.9 3.9l-3.9 -3.9zM137.6 389.9l3.9 3.9l-3.9 3.9l-3.9 -3.9zM127.0 389.9l3.9 3.9l-3.9 3.9l-3.9 -3.9zM161.7 390.2l3.9 3.9l-3.9 3.9l-3.9 -3.9zM173.3 390.5l3.9 3.9l-3.9 3.9l-3.9 -3.9zM43.7 389.8l3.9 3.9l-3.9 3.9l-3.9 -3.9zM201.6 391.2l3.9 3.9l-3.9 3.9l-3.9 -3.9zM216.4 391.4l3.9 3.9l-3.9 3.9l-3.9 -3.9zM167.7 391.1l3.9 3.9l-3.9 3.9l-3.9 -3.9zM249.9 392.2l3.9 3.9l-3.9 3.9l-3.9 -3.9zM351.6 393.1l3.9 3.9l-3.9 3.9l-3.9 -3.9zM145.4 391.5l3.9 3.9l-3.9 3.9l-3.9 -3.9zM150.1 391.7l3.9 3.9l-3.9 3.9l-3.9 -3.9zM240.8 392.7l3.9 3.9l-3.9 3.9l-3.9 -3.9zM387.5 394.0l3.9 3.9l-3.9 3.9l-3.9 -3.9zM67.4 391.6l3.9 3.9l-3.9 3.9l-3.9 -3.9zM180.6 392.5l3.9 3.9l-3.9 3.9l-3.9 -3.9zM400.2 394.5l3.9 3.9l-3.9 3.9l-3.9 -3.9zM244.9 393.4l3.9 3.9l-3.9 3.9l-3.9 -3.9zM35.2 391.8l3.9 3.9l-3.9 3.9l-3.9 -3.9zM194.3 393.2l3.9 3.9l-3.9 3.9l-3.9 -3.9zM90.4 392.6l3.9 3.9l-3.9 3.9l-3.9 -3.9zM134.3 393.1l3.9 3.9l-3.9 3.9l-3.9 -3.9zM122.6 393.2l3.9 3.9l-3.9 3.9l-3.9 -3.9zM97.1 393.2l3.9 3.9l-3.9 3.9l-3.9 -3.9zM222.5 394.2l3.9 3.9l-3.9 3.9l-3.9 -3.9zM103.9 393.3l3.9 3.9l-3.9 3.9l-3.9 -3.9zM56.4 393.3l3.9 3.9l-3.9 3.9l-3.9 -3.9zM358.3 395.6l3.9 3.9l-3.9 3.9l-3.9 -3.9zM383.2 396.0l3.9 3.9l-3.9 3.9l-3.9 -3.9zM228.3 395.0l3.9 3.9l-3.9 3.9l-3.9 -3.9zM235.8 395.3l3.9 3.9l-3.9 3.9l-3.9 -3.9zM118.4 394.4l3.9 3.9l-3.9 3.9l-3.9 -3.9zM80.5 394.4l3.9 3.9l-3.9 3.9l-3.9 -3.9zM185.7 395.2l3.9 3.9l-3.9 3.9l-3.9 -3.9zM343.6 396.6l3.9 3.9l-3.9 3.9l-3.9 -3.9zM142.0 395.2l3.9 3.9l-3.9 3.9l-3.9 -3.9zM376.0 397.5l3.9 3.9l-3.9 3.9l-3.9 -3.9zM158.1 396.0l3.9 3.9l-3.9 3.9l-3.9 -3.9zM177.8 396.3l3.9 3.9l-3.9 3.9l-3.9 -3.9zM213.5 396.7l3.9 3.9l-3.9 3.9l-3.9 -3.9zM137.0 396.2l3.9 3.9l-3.9 3.9l-3.9 -3.9zM398.0 398.4l3.9 3.9l-3.9 3.9l-3.9 -3.9zM242.1 397.7l3.9 3.9l-3.9 3.9l-3.9 -3.9zM366.7 398.7l3.9 3.9l-3.9 3.9l-3.9 -3.9zM360.9 398.7l3.9 3.9l-3.9 3.9l-3.9 -3.9zM151.6 397.1l3.9 3.9l-3.9 3.9l-3.9 -3.9zM218.8 397.8l3.9 3.9l-3.9 3.9l-3.9 -3.9zM105.4 397.0l3.9 3.9l-3.9 3.9l-3.9 -3.9zM354.1 399.4l3.9 3.9l-3.9 3.9l-3.9 -3.9zM48.7 397.2l3.9 3.9l-3.9 3.9l-3.9 -3.9zM125.2 398.0l3.9 3.9l-3.9 3.9l-3.9 -3.9zM113.9 398.6l3.9 3.9l-3.9 3.9l-3.9 -3.9zM200.1 399.3l3.9 3.9l-3.9 3.9l-3.9 -3.9zM93.7 398.6l3.9 3.9l-3.9 3.9l-3.9 -3.9zM52.9 398.3l3.9 3.9l-3.9 3.9l-3.9 -3.9zM86.4 398.9l3.9 3.9l-3.9 3.9l-3.9 -3.9zM229.2 400.3l3.9 3.9l-3.9 3.9l-3.9 -3.9zM224.4 400.4l3.9 3.9l-3.9 3.9l-3.9 -3.9zM385.4 401.6l3.9 3.9l-3.9 3.9l-3.9 -3.9zM70.6 399.3l3.9 3.9l-3.9 3.9l-3.9 -3.9zM392.8 402.0l3.9 3.9l-3.9 3.9l-3.9 -3.9zM74.7 399.7l3.9 3.9l-3.9 3.9l-3.9 -3.9zM189.2 400.6l3.9 3.9l-3.9 3.9l-3.9 -3.9zM153.5 400.6l3.9 3.9l-3.9 3.9l-3.9 -3.9zM358.7 402.4l3.9 3.9l-3.9 3.9l-3.9 -3.9zM180.2 401.2l3.9 3.9l-3.9 3.9l-3.9 -3.9zM79.4 400.6l3.9 3.9l-3.9 3.9l-3.9 -3.9zM122.9 401.3l3.9 3.9l-3.9 3.9l-3.9 -3.9zM216.9 402.2l3.9 3.9l-3.9 3.9l-3.9 -3.9zM402.3 403.9l3.9 3.9l-3.9 3.9l-3.9 -3.9zM108.6 402.2l3.9 3.9l-3.9 3.9l-3.9 -3.9zM176.3 402.9l3.9 3.9l-3.9 3.9l-3.9 -3.9zM171.2 403.0l3.9 3.9l-3.9 3.9l-3.9 -3.9zM350.2 404.6l3.9 3.9l-3.9 3.9l-3.9 -3.9zM243.5 403.9l3.9 3.9l-3.9 3.9l-3.9 -3.9zM388.5 405.2l3.9 3.9l-3.9 3.9l-3.9 -3.9zM53.0 402.8l3.9 3.9l-3.9 3.9l-3.9 -3.9zM382.8 405.5l3.9 3.9l-3.9 3.9l-3.9 -3.9zM72.0 403.2l3.9 3.9l-3.9 3.9l-3.9 -3.9zM141.4 404.0l3.9 3.9l-3.9 3.9l-3.9 -3.9zM235.6 404.9l3.9 3.9l-3.9 3.9l-3.9 -3.9zM86.7 403.8l3.9 3.9l-3.9 3.9l-3.9 -3.9zM57.5 403.6l3.9 3.9l-3.9 3.9l-3.9 -3.9zM229.2 405.1l3.9 3.9l-3.9 3.9l-3.9 -3.9zM148.7 404.5l3.9 3.9l-3.9 3.9l-3.9 -3.9zM155.8 404.6l3.9 3.9l-3.9 3.9l-3.9 -3.9zM36.0 403.9l3.9 3.9l-3.9 3.9l-3.9 -3.9zM112.7 404.5l3.9 3.9l-3.9 3.9l-3.9 -3.9zM68.0 404.2l3.9 3.9l-3.9 3.9l-3.9 -3.9zM98.4 404.8l3.9 3.9l-3.9 3.9l-3.9 -3.9zM247.7 406.0l3.9 3.9l-3.9 3.9l-3.9 -3.9zM367.9 407.1l3.9 3.9l-3.9 3.9l-3.9 -3.9zM182.2 406.7l3.9 3.9l-3.9 3.9l-3.9 -3.9zM44.6 405.8l3.9 3.9l-3.9 3.9l-3.9 -3.9zM161.4 406.7l3.9 3.9l-3.9 3.9l-3.9 -3.9zM192.0 407.1l3.9 3.9l-3.9 3.9l-3.9 -3.9zM240.6 407.6l3.9 3.9l-3.9 3.9l-3.9 -3.9zM171.1 407.3l3.9 3.9l-3.9 3.9l-3.9 -3.9zM376.7 409.4l3.9 3.9l-3.9 3.9l-3.9 -3.9zM151.9 407.9l3.9 3.9l-3.9 3.9l-3.9 -3.9zM396.0 409.9l3.9 3.9l-3.9 3.9l-3.9 -3.9zM213.3 408.5l3.9 3.9l-3.9 3.9l-3.9 -3.9zM358.2 409.7l3.9 3.9l-3.9 3.9l-3.9 -3.9zM137.1 408.0l3.9 3.9l-3.9 3.9l-3.9 -3.9zM72.9 407.8l3.9 3.9l-3.9 3.9l-3.9 -3.9zM62.9 407.8l3.9 3.9l-3.9 3.9l-3.9 -3.9zM196.6 409.2l3.9 3.9l-3.9 3.9l-3.9 -3.9zM344.1 410.7l3.9 3.9l-3.9 3.9l-3.9 -3.9zM101.6 408.9l3.9 3.9l-3.9 3.9l-3.9 -3.9zM388.3 411.5l3.9 3.9l-3.9 3.9l-3.9 -3.9zM209.2 410.2l3.9 3.9l-3.9 3.9l-3.9 -3.9zM80.7 409.5l3.9 3.9l-3.9 3.9l-3.9 -3.9zM111.2 409.8l3.9 3.9l-3.9 3.9l-3.9 -3.9zM245.1 410.9l3.9 3.9l-3.9 3.9l-3.9 -3.9zM142.1 410.1l3.9 3.9l-3.9 3.9l-3.9 -3.9zM124.8 410.1l3.9 3.9l-3.9 3.9l-3.9 -3.9zM148.0 410.3l3.9 3.9l-3.9 3.9l-3.9 -3.9zM219.6 411.3l3.9 3.9l-3.9 3.9l-3.9 -3.9zM132.6 410.6l3.9 3.9l-3.9 3.9l-3.9 -3.9zM202.9 411.4l3.9 3.9l-3.9 3.9l-3.9 -3.9zM365.5 412.9l3.9 3.9l-3.9 3.9l-3.9 -3.9zM92.0 410.9l3.9 3.9l-3.9 3.9l-3.9 -3.9zM181.8 411.6l3.9 3.9l-3.9 3.9l-3.9 -3.9zM55.8 410.9l3.9 3.9l-3.9 3.9l-3.9 -3.9zM340.6 413.1l3.9 3.9l-3.9 3.9l-3.9 -3.9zM159.8 411.8l3.9 3.9l-3.9 3.9l-3.9 -3.9zM42.5 411.0l3.9 3.9l-3.9 3.9l-3.9 -3.9zM33.9 411.0l3.9 3.9l-3.9 3.9l-3.9 -3.9zM169.6 412.2l3.9 3.9l-3.9 3.9l-3.9 -3.9zM215.4 412.8l3.9 3.9l-3.9 3.9l-3.9 -3.9zM192.2 412.6l3.9 3.9l-3.9 3.9l-3.9 -3.9zM383.1 414.1l3.9 3.9l-3.9 3.9l-3.9 -3.9zM97.8 412.1l3.9 3.9l-3.9 3.9l-3.9 -3.9zM49.6 411.9l3.9 3.9l-3.9 3.9l-3.9 -3.9zM335.0 414.9l3.9 3.9l-3.9 3.9l-3.9 -3.9zM226.6 414.3l3.9 3.9l-3.9 3.9l-3.9 -3.9zM240.5 414.5l3.9 3.9l-3.9 3.9l-3.9 -3.9zM350.7 415.4l3.9 3.9l-3.9 3.9l-3.9 -3.9zM370.4 416.2l3.9 3.9l-3.9 3.9l-3.9 -3.9zM70.6 413.9l3.9 3.9l-3.9 3.9l-3.9 -3.9zM154.0 414.6l3.9 3.9l-3.9 3.9l-3.9 -3.9zM143.3 414.6l3.9 3.9l-3.9 3.9l-3.9 -3.9zM138.7 414.6l3.9 3.9l-3.9 3.9l-3.9 -3.9zM345.7 416.2l3.9 3.9l-3.9 3.9l-3.9 -3.9zM148.2 414.8l3.9 3.9l-3.9 3.9l-3.9 -3.9zM356.2 416.5l3.9 3.9l-3.9 3.9l-3.9 -3.9zM379.8 416.7l3.9 3.9l-3.9 3.9l-3.9 -3.9zM201.8 415.6l3.9 3.9l-3.9 3.9l-3.9 -3.9zM114.4 415.1l3.9 3.9l-3.9 3.9l-3.9 -3.9zM130.3 415.3l3.9 3.9l-3.9 3.9l-3.9 -3.9zM164.5 415.6l3.9 3.9l-3.9 3.9l-3.9 -3.9zM81.8 415.0l3.9 3.9l-3.9 3.9l-3.9 -3.9zM183.7 415.8l3.9 3.9l-3.9 3.9l-3.9 -3.9zM211.6 416.1l3.9 3.9l-3.9 3.9l-3.9 -3.9zM387.7 417.9l3.9 3.9l-3.9 3.9l-3.9 -3.9zM123.8 415.9l3.9 3.9l-3.9 3.9l-3.9 -3.9zM398.2 418.4l3.9 3.9l-3.9 3.9l-3.9 -3.9zM50.8 416.2l3.9 3.9l-3.9 3.9l-3.9 -3.9zM219.0 417.9l3.9 3.9l-3.9 3.9l-3.9 -3.9zM107.2 417.3l3.9 3.9l-3.9 3.9l-3.9 -3.9zM233.2 418.3l3.9 3.9l-3.9 3.9l-3.9 -3.9zM102.7 417.4l3.9 3.9l-3.9 3.9l-3.9 -3.9zM77.2 417.3l3.9 3.9l-3.9 3.9l-3.9 -3.9zM67.9 417.7l3.9 3.9l-3.9 3.9l-3.9 -3.9zM358.0 420.5l3.9 3.9l-3.9 3.9l-3.9 -3.9zM86.4 419.0l3.9 3.9l-3.9 3.9l-3.9 -3.9zM117.9 419.9l3.9 3.9l-3.9 3.9l-3.9 -3.9zM345.8 421.7l3.9 3.9l-3.9 3.9l-3.9 -3.9zM323.3 421.6l3.9 3.9l-3.9 3.9l-3.9 -3.9zM72.1 419.6l3.9 3.9l-3.9 3.9l-3.9 -3.9zM329.0 422.3l3.9 3.9l-3.9 3.9l-3.9 -3.9zM336.2 422.4l3.9 3.9l-3.9 3.9l-3.9 -3.9zM153.3 421.2l3.9 3.9l-3.9 3.9l-3.9 -3.9zM204.5 421.8l3.9 3.9l-3.9 3.9l-3.9 -3.9zM142.5 421.3l3.9 3.9l-3.9 3.9l-3.9 -3.9zM225.2 422.1l3.9 3.9l-3.9 3.9l-3.9 -3.9zM62.8 420.9l3.9 3.9l-3.9 3.9l-3.9 -3.9zM210.6 422.1l3.9 3.9l-3.9 3.9l-3.9 -3.9zM45.4 420.9l3.9 3.9l-3.9 3.9l-3.9 -3.9zM147.6 421.8l3.9 3.9l-3.9 3.9l-3.9 -3.9zM55.1 421.2l3.9 3.9l-3.9 3.9l-3.9 -3.9zM363.5 424.2l3.9 3.9l-3.9 3.9l-3.9 -3.9zM221.3 423.1l3.9 3.9l-3.9 3.9l-3.9 -3.9zM137.6 422.4l3.9 3.9l-3.9 3.9l-3.9 -3.9zM111.5 422.4l3.9 3.9l-3.9 3.9l-3.9 -3.9zM132.3 422.7l3.9 3.9l-3.9 3.9l-3.9 -3.9zM50.1 422.4l3.9 3.9l-3.9 3.9l-3.9 -3.9zM339.9 425.7l3.9 3.9l-3.9 3.9l-3.9 -3.9zM355.2 426.5l3.9 3.9l-3.9 3.9l-3.9 -3.9zM121.1 424.8l3.9 3.9l-3.9 3.9l-3.9 -3.9zM32.0 424.3l3.9 3.9l-3.9 3.9l-3.9 -3.9zM114.3 425.3l3.9 3.9l-3.9 3.9l-3.9 -3.9zM43.7 425.0l3.9 3.9l-3.9 3.9l-3.9 -3.9zM336.3 428.1l3.9 3.9l-3.9 3.9l-3.9 -3.9zM366.9 428.4l3.9 3.9l-3.9 3.9l-3.9 -3.9zM360.6 428.5l3.9 3.9l-3.9 3.9l-3.9 -3.9zM109.6 427.1l3.9 3.9l-3.9 3.9l-3.9 -3.9zM209.1 428.2l3.9 3.9l-3.9 3.9l-3.9 -3.9zM322.4 429.2l3.9 3.9l-3.9 3.9l-3.9 -3.9zM345.1 430.0l3.9 3.9l-3.9 3.9l-3.9 -3.9zM124.5 428.3l3.9 3.9l-3.9 3.9l-3.9 -3.9zM350.9 430.2l3.9 3.9l-3.9 3.9l-3.9 -3.9zM60.7 428.5l3.9 3.9l-3.9 3.9l-3.9 -3.9zM46.9 429.1l3.9 3.9l-3.9 3.9l-3.9 -3.9zM217.5 430.7l3.9 3.9l-3.9 3.9l-3.9 -3.9zM56.8 429.6l3.9 3.9l-3.9 3.9l-3.9 -3.9zM78.8 430.0l3.9 3.9l-3.9 3.9l-3.9 -3.9zM35.6 430.2l3.9 3.9l-3.9 3.9l-3.9 -3.9zM361.3 433.9l3.9 3.9l-3.9 3.9l-3.9 -3.9zM150.9 432.2l3.9 3.9l-3.9 3.9l-3.9 -3.9zM345.5 434.1l3.9 3.9l-3.9 3.9l-3.9 -3.9zM67.0 432.1l3.9 3.9l-3.9 3.9l-3.9 -3.9zM71.5 432.8l3.9 3.9l-3.9 3.9l-3.9 -3.9zM135.4 433.6l3.9 3.9l-3.9 3.9l-3.9 -3.9zM46.0 433.4l3.9 3.9l-3.9 3.9l-3.9 -3.9zM52.4 433.6l3.9 3.9l-3.9 3.9l-3.9 -3.9zM143.8 434.6l3.9 3.9l-3.9 3.9l-3.9 -3.9zM342.2 436.3l3.9 3.9l-3.9 3.9l-3.9 -3.9zM127.5 435.3l3.9 3.9l-3.9 3.9l-3.9 -3.9zM59.4 435.1l3.9 3.9l-3.9 3.9l-3.9 -3.9zM36.5 435.0l3.9 3.9l-3.9 3.9l-3.9 -3.9zM319.7 437.4l3.9 3.9l-3.9 3.9l-3.9 -3.9zM31.6 435.2l3.9 3.9l-3.9 3.9l-3.9 -3.9zM324.5 438.0l3.9 3.9l-3.9 3.9l-3.9 -3.9zM139.2 436.7l3.9 3.9l-3.9 3.9l-3.9 -3.9zM337.8 439.1l3.9 3.9l-3.9 3.9l-3.9 -3.9zM119.3 437.5l3.9 3.9l-3.9 3.9l-3.9 -3.9zM48.5 437.2l3.9 3.9l-3.9 3.9l-3.9 -3.9zM315.7 440.1l3.9 3.9l-3.9 3.9l-3.9 -3.9zM349.5 441.0l3.9 3.9l-3.9 3.9l-3.9 -3.9zM30.7 439.2l3.9 3.9l-3.9 3.9l-3.9 -3.9zM332.4 442.3l3.9 3.9l-3.9 3.9l-3.9 -3.9zM56.0 440.1l3.9 3.9l-3.9 3.9l-3.9 -3.9zM340.2 442.4l3.9 3.9l-3.9 3.9l-3.9 -3.9zM324.3 442.7l3.9 3.9l-3.9 3.9l-3.9 -3.9zM134.6 441.4l3.9 3.9l-3.9 3.9l-3.9 -3.9zM35.8 441.4l3.9 3.9l-3.9 3.9l-3.9 -3.9zM124.9 442.1l3.9 3.9l-3.9 3.9l-3.9 -3.9zM147.3 443.9l3.9 3.9l-3.9 3.9l-3.9 -3.9zM131.1 444.6l3.9 3.9l-3.9 3.9l-3.9 -3.9zM45.0 444.2l3.9 3.9l-3.9 3.9l-3.9 -3.9zM338.6 446.8l3.9 3.9l-3.9 3.9l-3.9 -3.9zM332.1 447.3l3.9 3.9l-3.9 3.9l-3.9 -3.9zM136.1 447.0l3.9 3.9l-3.9 3.9l-3.9 -3.9zM41.1 446.5l3.9 3.9l-3.9 3.9l-3.9 -3.9zM123.2 447.4l3.9 3.9l-3.9 3.9l-3.9 -3.9zM347.4 449.2l3.9 3.9l-3.9 3.9l-3.9 -3.9zM45.9 448.5l3.9 3.9l-3.9 3.9l-3.9 -3.9zM317.3 450.7l3.9 3.9l-3.9 3.9l-3.9 -3.9zM337.6 451.2l3.9 3.9l-3.9 3.9l-3.9 -3.9zM25.1 449.7l3.9 3.9l-3.9 3.9l-3.9 -3.9zM146.1 451.3l3.9 3.9l-3.9 3.9l-3.9 -3.9zM339.9 454.6l3.9 3.9l-3.9 3.9l-3.9 -3.9zM20.4 452.6l3.9 3.9l-3.9 3.9l-3.9 -3.9zM322.2 455.4l3.9 3.9l-3.9 3.9l-3.9 -3.9zM122.5 454.5l3.9 3.9l-3.9 3.9l-3.9 -3.9zM318.3 456.4l3.9 3.9l-3.9 3.9l-3.9 -3.9zM351.4 458.2l3.9 3.9l-3.9 3.9l-3.9 -3.9zM153.8 457.2l3.9 3.9l-3.9 3.9l-3.9 -3.9zM339.5 458.7l3.9 3.9l-3.9 3.9l-3.9 -3.9zM162.5 457.4l3.9 3.9l-3.9 3.9l-3.9 -3.9zM27.7 456.8l3.9 3.9l-3.9 3.9l-3.9 -3.9zM18.6 456.8l3.9 3.9l-3.9 3.9l-3.9 -3.9zM343.3 459.6l3.9 3.9l-3.9 3.9l-3.9 -3.9zM329.9 460.3l3.9 3.9l-3.9 3.9l-3.9 -3.9zM130.0 459.4l3.9 3.9l-3.9 3.9l-3.9 -3.9zM146.7 460.1l3.9 3.9l-3.9 3.9l-3.9 -3.9zM12.2 459.3l3.9 3.9l-3.9 3.9l-3.9 -3.9zM337.3 462.5l3.9 3.9l-3.9 3.9l-3.9 -3.9zM137.4 461.2l3.9 3.9l-3.9 3.9l-3.9 -3.9zM143.0 461.8l3.9 3.9l-3.9 3.9l-3.9 -3.9zM152.7 461.9l3.9 3.9l-3.9 3.9l-3.9 -3.9zM319.6 463.9l3.9 3.9l-3.9 3.9l-3.9 -3.9zM19.3 461.9l3.9 3.9l-3.9 3.9l-3.9 -3.9zM129.0 463.5l3.9 3.9l-3.9 3.9l-3.9 -3.9zM123.9 464.1l3.9 3.9l-3.9 3.9l-3.9 -3.9zM13.1 463.2l3.9 3.9l-3.9 3.9l-3.9 -3.9zM163.5 464.6l3.9 3.9l-3.9 3.9l-3.9 -3.9zM158.1 464.8l3.9 3.9l-3.9 3.9l-3.9 -3.9zM23.2 463.9l3.9 3.9l-3.9 3.9l-3.9 -3.9zM310.9 466.7l3.9 3.9l-3.9 3.9l-3.9 -3.9zM294.9 466.7l3.9 3.9l-3.9 3.9l-3.9 -3.9zM341.8 467.2l3.9 3.9l-3.9 3.9l-3.9 -3.9zM330.2 467.1l3.9 3.9l-3.9 3.9l-3.9 -3.9zM180.1 467.4l3.9 3.9l-3.9 3.9l-3.9 -3.9zM127.4 467.3l3.9 3.9l-3.9 3.9l-3.9 -3.9zM346.9 469.7l3.9 3.9l-3.9 3.9l-3.9 -3.9zM149.0 468.6l3.9 3.9l-3.9 3.9l-3.9 -3.9zM144.9 468.6l3.9 3.9l-3.9 3.9l-3.9 -3.9zM136.3 469.3l3.9 3.9l-3.9 3.9l-3.9 -3.9zM155.2 469.5l3.9 3.9l-3.9 3.9l-3.9 -3.9zM18.0 468.5l3.9 3.9l-3.9 3.9l-3.9 -3.9zM313.3 471.8l3.9 3.9l-3.9 3.9l-3.9 -3.9zM300.1 471.9l3.9 3.9l-3.9 3.9l-3.9 -3.9zM340.1 472.3l3.9 3.9l-3.9 3.9l-3.9 -3.9zM331.8 472.5l3.9 3.9l-3.9 3.9l-3.9 -3.9zM326.4 472.5l3.9 3.9l-3.9 3.9l-3.9 -3.9zM349.9 472.9l3.9 3.9l-3.9 3.9l-3.9 -3.9zM321.4 472.7l3.9 3.9l-3.9 3.9l-3.9 -3.9zM281.2 473.9l3.9 3.9l-3.9 3.9l-3.9 -3.9zM273.3 474.0l3.9 3.9l-3.9 3.9l-3.9 -3.9zM264.7 474.3l3.9 3.9l-3.9 3.9l-3.9 -3.9zM302.9 474.9l3.9 3.9l-3.9 3.9l-3.9 -3.9zM116.1 473.7l3.9 3.9l-3.9 3.9l-3.9 -3.9zM307.4 475.6l3.9 3.9l-3.9 3.9l-3.9 -3.9zM151.6 474.4l3.9 3.9l-3.9 3.9l-3.9 -3.9zM126.4 474.2l3.9 3.9l-3.9 3.9l-3.9 -3.9zM134.1 474.3l3.9 3.9l-3.9 3.9l-3.9 -3.9zM164.6 474.9l3.9 3.9l-3.9 3.9l-3.9 -3.9zM331.3 476.4l3.9 3.9l-3.9 3.9l-3.9 -3.9zM170.2 475.3l3.9 3.9l-3.9 3.9l-3.9 -3.9zM284.6 476.3l3.9 3.9l-3.9 3.9l-3.9 -3.9zM20.0 475.1l3.9 3.9l-3.9 3.9l-3.9 -3.9zM112.8 476.0l3.9 3.9l-3.9 3.9l-3.9 -3.9zM139.7 476.8l3.9 3.9l-3.9 3.9l-3.9 -3.9zM161.4 477.1l3.9 3.9l-3.9 3.9l-3.9 -3.9zM294.6 478.2l3.9 3.9l-3.9 3.9l-3.9 -3.9zM269.0 478.1l3.9 3.9l-3.9 3.9l-3.9 -3.9zM156.7 477.3l3.9 3.9l-3.9 3.9l-3.9 -3.9zM144.6 477.5l3.9 3.9l-3.9 3.9l-3.9 -3.9zM289.1 479.2l3.9 3.9l-3.9 3.9l-3.9 -3.9zM148.9 478.1l3.9 3.9l-3.9 3.9l-3.9 -3.9zM191.5 478.6l3.9 3.9l-3.9 3.9l-3.9 -3.9zM347.0 480.8l3.9 3.9l-3.9 3.9l-3.9 -3.9zM32.1 479.0l3.9 3.9l-3.9 3.9l-3.9 -3.9zM339.3 481.5l3.9 3.9l-3.9 3.9l-3.9 -3.9zM175.1 480.2l3.9 3.9l-3.9 3.9l-3.9 -3.9zM168.5 480.2l3.9 3.9l-3.9 3.9l-3.9 -3.9zM283.2 481.4l3.9 3.9l-3.9 3.9l-3.9 -3.9zM11.7 479.4l3.9 3.9l-3.9 3.9l-3.9 -3.9zM261.8 481.5l3.9 3.9l-3.9 3.9l-3.9 -3.9zM152.4 480.6l3.9 3.9l-3.9 3.9l-3.9 -3.9zM119.2 480.6l3.9 3.9l-3.9 3.9l-3.9 -3.9zM300.3 482.6l3.9 3.9l-3.9 3.9l-3.9 -3.9zM110.6 481.4l3.9 3.9l-3.9 3.9l-3.9 -3.9zM279.4 483.1l3.9 3.9l-3.9 3.9l-3.9 -3.9zM317.2 484.7l3.9 3.9l-3.9 3.9l-3.9 -3.9zM334.5 485.3l3.9 3.9l-3.9 3.9l-3.9 -3.9zM326.0 485.3l3.9 3.9l-3.9 3.9l-3.9 -3.9zM140.0 484.0l3.9 3.9l-3.9 3.9l-3.9 -3.9zM178.2 484.5l3.9 3.9l-3.9 3.9l-3.9 -3.9zM157.7 484.6l3.9 3.9l-3.9 3.9l-3.9 -3.9zM188.0 485.1l3.9 3.9l-3.9 3.9l-3.9 -3.9zM294.2 486.2l3.9 3.9l-3.9 3.9l-3.9 -3.9zM289.2 486.3l3.9 3.9l-3.9 3.9l-3.9 -3.9zM117.0 485.4l3.9 3.9l-3.9 3.9l-3.9 -3.9zM106.3 485.6l3.9 3.9l-3.9 3.9l-3.9 -3.9zM207.2 486.6l3.9 3.9l-3.9 3.9l-3.9 -3.9zM191.9 486.6l3.9 3.9l-3.9 3.9l-3.9 -3.9zM343.2 488.0l3.9 3.9l-3.9 3.9l-3.9 -3.9zM263.4 487.5l3.9 3.9l-3.9 3.9l-3.9 -3.9zM132.1 486.6l3.9 3.9l-3.9 3.9l-3.9 -3.9zM146.0 486.8l3.9 3.9l-3.9 3.9l-3.9 -3.9zM183.3 487.2l3.9 3.9l-3.9 3.9l-3.9 -3.9zM251.6 487.8l3.9 3.9l-3.9 3.9l-3.9 -3.9zM196.6 487.4l3.9 3.9l-3.9 3.9l-3.9 -3.9zM137.3 486.9l3.9 3.9l-3.9 3.9l-3.9 -3.9zM307.1 488.3l3.9 3.9l-3.9 3.9l-3.9 -3.9zM271.7 488.2l3.9 3.9l-3.9 3.9l-3.9 -3.9zM172.5 487.7l3.9 3.9l-3.9 3.9l-3.9 -3.9zM19.9 486.8l3.9 3.9l-3.9 3.9l-3.9 -3.9zM141.4 488.2l3.9 3.9l-3.9 3.9l-3.9 -3.9zM326.9 489.9l3.9 3.9l-3.9 3.9l-3.9 -3.9zM122.3 488.5l3.9 3.9l-3.9 3.9l-3.9 -3.9zM160.8 489.2l3.9 3.9l-3.9 3.9l-3.9 -3.9zM267.5 490.2l3.9 3.9l-3.9 3.9l-3.9 -3.9zM300.5 490.5l3.9 3.9l-3.9 3.9l-3.9 -3.9zM179.0 490.4l3.9 3.9l-3.9 3.9l-3.9 -3.9zM25.8 489.2l3.9 3.9l-3.9 3.9l-3.9 -3.9zM285.2 491.3l3.9 3.9l-3.9 3.9l-3.9 -3.9zM11.2 489.4l3.9 3.9l-3.9 3.9l-3.9 -3.9zM169.9 491.0l3.9 3.9l-3.9 3.9l-3.9 -3.9zM186.8 491.3l3.9 3.9l-3.9 3.9l-3.9 -3.9zM106.3 491.3l3.9 3.9l-3.9 3.9l-3.9 -3.9zM235.5 492.4l3.9 3.9l-3.9 3.9l-3.9 -3.9zM317.2 493.1l3.9 3.9l-3.9 3.9l-3.9 -3.9zM191.4 492.2l3.9 3.9l-3.9 3.9l-3.9 -3.9zM164.4 492.4l3.9 3.9l-3.9 3.9l-3.9 -3.9zM274.8 493.3l3.9 3.9l-3.9 3.9l-3.9 -3.9zM137.1 492.2l3.9 3.9l-3.9 3.9l-3.9 -3.9zM204.5 492.9l3.9 3.9l-3.9 3.9l-3.9 -3.9zM312.5 493.7l3.9 3.9l-3.9 3.9l-3.9 -3.9zM342.8 494.3l3.9 3.9l-3.9 3.9l-3.9 -3.9zM124.9 492.8l3.9 3.9l-3.9 3.9l-3.9 -3.9zM298.9 494.9l3.9 3.9l-3.9 3.9l-3.9 -3.9zM294.7 494.9l3.9 3.9l-3.9 3.9l-3.9 -3.9zM149.0 494.0l3.9 3.9l-3.9 3.9l-3.9 -3.9zM280.7 495.5l3.9 3.9l-3.9 3.9l-3.9 -3.9zM159.8 494.7l3.9 3.9l-3.9 3.9l-3.9 -3.9zM178.2 495.1l3.9 3.9l-3.9 3.9l-3.9 -3.9zM239.9 495.6l3.9 3.9l-3.9 3.9l-3.9 -3.9zM96.5 494.5l3.9 3.9l-3.9 3.9l-3.9 -3.9zM321.7 496.6l3.9 3.9l-3.9 3.9l-3.9 -3.9zM263.2 496.5l3.9 3.9l-3.9 3.9l-3.9 -3.9zM271.4 496.6l3.9 3.9l-3.9 3.9l-3.9 -3.9zM188.3 496.1l3.9 3.9l-3.9 3.9l-3.9 -3.9zM103.4 495.4l3.9 3.9l-3.9 3.9l-3.9 -3.9zM143.5 495.9l3.9 3.9l-3.9 3.9l-3.9 -3.9zM12.9 494.9l3.9 3.9l-3.9 3.9l-3.9 -3.9zM250.0 496.9l3.9 3.9l-3.9 3.9l-3.9 -3.9zM198.4 496.7l3.9 3.9l-3.9 3.9l-3.9 -3.9zM91.9 496.1l3.9 3.9l-3.9 3.9l-3.9 -3.9zM128.2 496.5l3.9 3.9l-3.9 3.9l-3.9 -3.9zM108.0 496.6l3.9 3.9l-3.9 3.9l-3.9 -3.9zM337.5 498.6l3.9 3.9l-3.9 3.9l-3.9 -3.9zM120.4 497.6l3.9 3.9l-3.9 3.9l-3.9 -3.9zM254.6 498.9l3.9 3.9l-3.9 3.9l-3.9 -3.9zM134.1 498.3l3.9 3.9l-3.9 3.9l-3.9 -3.9zM276.8 499.5l3.9 3.9l-3.9 3.9l-3.9 -3.9zM155.1 498.7l3.9 3.9l-3.9 3.9l-3.9 -3.9zM163.2 498.9l3.9 3.9l-3.9 3.9l-3.9 -3.9zM209.8 499.3l3.9 3.9l-3.9 3.9l-3.9 -3.9zM148.8 498.9l3.9 3.9l-3.9 3.9l-3.9 -3.9zM318.1 500.3l3.9 3.9l-3.9 3.9l-3.9 -3.9zM307.5 500.3l3.9 3.9l-3.9 3.9l-3.9 -3.9zM27.2 498.0l3.9 3.9l-3.9 3.9l-3.9 -3.9zM190.8 499.4l3.9 3.9l-3.9 3.9l-3.9 -3.9zM282.5 500.8l3.9 3.9l-3.9 3.9l-3.9 -3.9zM240.9 500.6l3.9 3.9l-3.9 3.9l-3.9 -3.9zM266.6 501.6l3.9 3.9l-3.9 3.9l-3.9 -3.9zM172.8 501.1l3.9 3.9l-3.9 3.9l-3.9 -3.9zM328.9 502.4l3.9 3.9l-3.9 3.9l-3.9 -3.9zM118.0 500.8l3.9 3.9l-3.9 3.9l-3.9 -3.9zM339.7 502.6l3.9 3.9l-3.9 3.9l-3.9 -3.9zM300.9 502.6l3.9 3.9l-3.9 3.9l-3.9 -3.9zM14.6 500.5l3.9 3.9l-3.9 3.9l-3.9 -3.9zM129.6 501.5l3.9 3.9l-3.9 3.9l-3.9 -3.9zM194.1 502.5l3.9 3.9l-3.9 3.9l-3.9 -3.9zM260.0 503.1l3.9 3.9l-3.9 3.9l-3.9 -3.9zM166.5 502.6l3.9 3.9l-3.9 3.9l-3.9 -3.9zM200.8 503.2l3.9 3.9l-3.9 3.9l-3.9 -3.9zM401.4 505.2l3.9 3.9l-3.9 3.9l-3.9 -3.9zM23.9 502.4l3.9 3.9l-3.9 3.9l-3.9 -3.9zM181.5 503.7l3.9 3.9l-3.9 3.9l-3.9 -3.9zM156.9 503.6l3.9 3.9l-3.9 3.9l-3.9 -3.9zM18.7 502.8l3.9 3.9l-3.9 3.9l-3.9 -3.9zM285.1 505.1l3.9 3.9l-3.9 3.9l-3.9 -3.9zM95.9 503.8l3.9 3.9l-3.9 3.9l-3.9 -3.9zM322.6 506.0l3.9 3.9l-3.9 3.9l-3.9 -3.9zM293.5 505.7l3.9 3.9l-3.9 3.9l-3.9 -3.9zM135.4 504.6l3.9 3.9l-3.9 3.9l-3.9 -3.9zM268.7 505.7l3.9 3.9l-3.9 3.9l-3.9 -3.9z" fill="#d2d4d7"/><path d="M110.4 123.2l3.9 -3.9l-3.9 -0.8zM383.4 125.2l3.9 -3.9l-3.9 -0.8zM368.0 125.1l3.9 -3.9l-3.9 -0.8zM210.0 124.1l3.9 -3.9l-3.9 -0.8zM170.8 124.3l3.9 -3.9l-3.9 -0.8zM81.3 123.9l3.9 -3.9l-3.9 -0.8zM71.1 124.5l3.9 -3.9l-3.9 -0.8zM156.3 125.2l3.9 -3.9l-3.9 -0.8zM102.0 125.0l3.9 -3.9l-3.9 -0.8zM152.0 125.6l3.9 -3.9l-3.9 -0.8zM352.0 127.3l3.9 -3.9l-3.9 -0.8zM119.9 126.4l3.9 -3.9l-3.9 -0.8zM161.9 126.8l3.9 -3.9l-3.9 -0.8zM145.6 126.9l3.9 -3.9l-3.9 -0.8zM393.2 128.7l3.9 -3.9l-3.9 -0.8zM67.1 126.7l3.9 -3.9l-3.9 -0.8zM92.0 127.0l3.9 -3.9l-3.9 -0.8zM386.6 129.2l3.9 -3.9l-3.9 -0.8zM114.7 127.4l3.9 -3.9l-3.9 -0.8zM375.8 129.7l3.9 -3.9l-3.9 -0.8zM62.2 127.5l3.9 -3.9l-3.9 -0.8zM87.2 128.2l3.9 -3.9l-3.9 -0.8zM130.3 128.6l3.9 -3.9l-3.9 -0.8zM193.5 129.3l3.9 -3.9l-3.9 -0.8zM76.8 128.6l3.9 -3.9l-3.9 -0.8zM182.3 129.5l3.9 -3.9l-3.9 -0.8zM175.1 129.4l3.9 -3.9l-3.9 -0.8zM187.6 130.0l3.9 -3.9l-3.9 -0.8zM198.9 130.1l3.9 -3.9l-3.9 -0.8zM136.5 129.9l3.9 -3.9l-3.9 -0.8zM140.7 129.9l3.9 -3.9l-3.9 -0.8zM121.9 130.3l3.9 -3.9l-3.9 -0.8zM359.3 132.1l3.9 -3.9l-3.9 -0.8zM97.6 130.5l3.9 -3.9l-3.9 -0.8zM112.1 130.9l3.9 -3.9l-3.9 -0.8zM366.4 132.7l3.9 -3.9l-3.9 -0.8zM102.4 131.5l3.9 -3.9l-3.9 -0.8zM162.8 132.6l3.9 -3.9l-3.9 -0.8zM150.6 132.5l3.9 -3.9l-3.9 -0.8zM93.2 132.1l3.9 -3.9l-3.9 -0.8zM180.3 132.9l3.9 -3.9l-3.9 -0.8zM191.6 133.1l3.9 -3.9l-3.9 -0.8zM184.5 133.1l3.9 -3.9l-3.9 -0.8zM374.0 134.8l3.9 -3.9l-3.9 -0.8zM143.4 133.5l3.9 -3.9l-3.9 -0.8zM60.2 134.0l3.9 -3.9l-3.9 -0.8zM358.4 136.4l3.9 -3.9l-3.9 -0.8zM198.3 135.7l3.9 -3.9l-3.9 -0.8zM132.1 135.4l3.9 -3.9l-3.9 -0.8zM154.6 135.9l3.9 -3.9l-3.9 -0.8zM74.4 135.7l3.9 -3.9l-3.9 -0.8zM146.1 136.2l3.9 -3.9l-3.9 -0.8zM95.3 136.4l3.9 -3.9l-3.9 -0.8zM70.0 136.2l3.9 -3.9l-3.9 -0.8zM192.8 137.1l3.9 -3.9l-3.9 -0.8zM78.4 136.4l3.9 -3.9l-3.9 -0.8zM99.1 138.6l3.9 -3.9l-3.9 -0.8zM353.2 140.7l3.9 -3.9l-3.9 -0.8zM61.5 139.0l3.9 -3.9l-3.9 -0.8zM110.4 139.5l3.9 -3.9l-3.9 -0.8zM168.9 140.0l3.9 -3.9l-3.9 -0.8zM178.9 140.1l3.9 -3.9l-3.9 -0.8zM164.6 140.4l3.9 -3.9l-3.9 -0.8zM130.5 140.3l3.9 -3.9l-3.9 -0.8zM116.0 141.0l3.9 -3.9l-3.9 -0.8zM70.2 140.8l3.9 -3.9l-3.9 -0.8zM82.8 141.4l3.9 -3.9l-3.9 -0.8zM78.8 141.7l3.9 -3.9l-3.9 -0.8zM150.0 142.3l3.9 -3.9l-3.9 -0.8zM106.6 142.4l3.9 -3.9l-3.9 -0.8zM145.1 143.0l3.9 -3.9l-3.9 -0.8zM120.0 143.0l3.9 -3.9l-3.9 -0.8zM94.4 142.9l3.9 -3.9l-3.9 -0.8zM175.7 144.4l3.9 -3.9l-3.9 -0.8zM139.6 144.3l3.9 -3.9l-3.9 -0.8zM65.4 143.8l3.9 -3.9l-3.9 -0.8zM359.2 146.4l3.9 -3.9l-3.9 -0.8zM83.9 145.6l3.9 -3.9l-3.9 -0.8zM152.4 146.6l3.9 -3.9l-3.9 -0.8zM165.9 147.2l3.9 -3.9l-3.9 -0.8zM62.1 146.9l3.9 -3.9l-3.9 -0.8zM157.6 147.9l3.9 -3.9l-3.9 -0.8zM78.1 147.4l3.9 -3.9l-3.9 -0.8zM175.6 148.6l3.9 -3.9l-3.9 -0.8zM112.5 149.7l3.9 -3.9l-3.9 -0.8zM127.3 150.2l3.9 -3.9l-3.9 -0.8zM88.7 150.0l3.9 -3.9l-3.9 -0.8zM146.7 150.7l3.9 -3.9l-3.9 -0.8zM172.9 151.4l3.9 -3.9l-3.9 -0.8zM163.6 151.4l3.9 -3.9l-3.9 -0.8zM136.5 151.6l3.9 -3.9l-3.9 -0.8zM81.4 151.3l3.9 -3.9l-3.9 -0.8zM61.5 151.4l3.9 -3.9l-3.9 -0.8zM123.4 152.3l3.9 -3.9l-3.9 -0.8zM118.6 153.9l3.9 -3.9l-3.9 -0.8zM152.3 155.0l3.9 -3.9l-3.9 -0.8zM159.4 155.6l3.9 -3.9l-3.9 -0.8zM113.6 156.1l3.9 -3.9l-3.9 -0.8zM164.2 156.9l3.9 -3.9l-3.9 -0.8zM65.7 156.7l3.9 -3.9l-3.9 -0.8zM123.5 157.9l3.9 -3.9l-3.9 -0.8zM139.4 159.4l3.9 -3.9l-3.9 -0.8zM129.0 159.5l3.9 -3.9l-3.9 -0.8zM160.7 161.3l3.9 -3.9l-3.9 -0.8zM156.9 162.0l3.9 -3.9l-3.9 -0.8zM73.0 162.3l3.9 -3.9l-3.9 -0.8zM146.2 163.4l3.9 -3.9l-3.9 -0.8zM344.6 164.8l3.9 -3.9l-3.9 -0.8zM351.9 165.3l3.9 -3.9l-3.9 -0.8zM153.5 164.3l3.9 -3.9l-3.9 -0.8zM134.7 164.3l3.9 -3.9l-3.9 -0.8zM73.6 166.1l3.9 -3.9l-3.9 -0.8zM167.3 166.9l3.9 -3.9l-3.9 -0.8zM126.3 167.1l3.9 -3.9l-3.9 -0.8zM65.3 167.3l3.9 -3.9l-3.9 -0.8zM161.7 168.4l3.9 -3.9l-3.9 -0.8zM157.1 168.5l3.9 -3.9l-3.9 -0.8zM59.2 168.2l3.9 -3.9l-3.9 -0.8zM135.5 169.4l3.9 -3.9l-3.9 -0.8zM148.6 169.6l3.9 -3.9l-3.9 -0.8zM354.8 171.3l3.9 -3.9l-3.9 -0.8zM76.1 170.5l3.9 -3.9l-3.9 -0.8zM132.0 171.6l3.9 -3.9l-3.9 -0.8zM344.0 173.2l3.9 -3.9l-3.9 -0.8zM57.1 172.1l3.9 -3.9l-3.9 -0.8zM49.3 172.7l3.9 -3.9l-3.9 -0.8zM251.0 174.3l3.9 -3.9l-3.9 -0.8zM142.1 173.8l3.9 -3.9l-3.9 -0.8zM271.5 175.5l3.9 -3.9l-3.9 -0.8zM358.8 176.3l3.9 -3.9l-3.9 -0.8zM266.2 175.9l3.9 -3.9l-3.9 -0.8zM66.4 175.1l3.9 -3.9l-3.9 -0.8zM127.8 175.8l3.9 -3.9l-3.9 -0.8zM345.4 177.8l3.9 -3.9l-3.9 -0.8zM150.7 177.4l3.9 -3.9l-3.9 -0.8zM257.8 178.8l3.9 -3.9l-3.9 -0.8zM124.7 178.1l3.9 -3.9l-3.9 -0.8zM56.2 177.6l3.9 -3.9l-3.9 -0.8zM274.9 179.9l3.9 -3.9l-3.9 -0.8zM51.0 178.4l3.9 -3.9l-3.9 -0.8zM324.9 181.1l3.9 -3.9l-3.9 -0.8zM69.6 179.9l3.9 -3.9l-3.9 -0.8zM261.9 181.7l3.9 -3.9l-3.9 -0.8zM129.8 181.0l3.9 -3.9l-3.9 -0.8zM144.1 181.6l3.9 -3.9l-3.9 -0.8zM280.5 182.7l3.9 -3.9l-3.9 -0.8zM358.8 183.5l3.9 -3.9l-3.9 -0.8zM154.9 182.4l3.9 -3.9l-3.9 -0.8zM255.1 183.4l3.9 -3.9l-3.9 -0.8zM344.3 184.3l3.9 -3.9l-3.9 -0.8zM138.5 183.0l3.9 -3.9l-3.9 -0.8zM116.9 183.4l3.9 -3.9l-3.9 -0.8zM76.0 183.2l3.9 -3.9l-3.9 -0.8zM337.2 185.2l3.9 -3.9l-3.9 -0.8zM56.4 183.4l3.9 -3.9l-3.9 -0.8zM274.3 185.0l3.9 -3.9l-3.9 -0.8zM123.4 184.2l3.9 -3.9l-3.9 -0.8zM353.5 186.4l3.9 -3.9l-3.9 -0.8zM369.0 186.8l3.9 -3.9l-3.9 -0.8zM131.3 185.5l3.9 -3.9l-3.9 -0.8zM72.3 185.2l3.9 -3.9l-3.9 -0.8zM61.7 186.0l3.9 -3.9l-3.9 -0.8zM153.7 187.0l3.9 -3.9l-3.9 -0.8zM44.6 186.6l3.9 -3.9l-3.9 -0.8zM145.3 187.4l3.9 -3.9l-3.9 -0.8zM266.0 188.5l3.9 -3.9l-3.9 -0.8zM138.0 188.1l3.9 -3.9l-3.9 -0.8zM122.2 188.2l3.9 -3.9l-3.9 -0.8zM52.1 187.9l3.9 -3.9l-3.9 -0.8zM399.5 190.6l3.9 -3.9l-3.9 -0.8zM340.3 190.5l3.9 -3.9l-3.9 -0.8zM126.8 189.0l3.9 -3.9l-3.9 -0.8zM116.3 190.7l3.9 -3.9l-3.9 -0.8zM64.6 190.4l3.9 -3.9l-3.9 -0.8zM157.9 191.1l3.9 -3.9l-3.9 -0.8zM272.9 192.2l3.9 -3.9l-3.9 -0.8zM359.2 193.1l3.9 -3.9l-3.9 -0.8zM278.4 192.5l3.9 -3.9l-3.9 -0.8zM323.7 193.0l3.9 -3.9l-3.9 -0.8zM140.8 191.7l3.9 -3.9l-3.9 -0.8zM69.2 191.3l3.9 -3.9l-3.9 -0.8zM393.4 193.6l3.9 -3.9l-3.9 -0.8zM87.3 191.5l3.9 -3.9l-3.9 -0.8zM253.0 193.0l3.9 -3.9l-3.9 -0.8zM149.2 192.3l3.9 -3.9l-3.9 -0.8zM353.3 194.0l3.9 -3.9l-3.9 -0.8zM258.9 193.4l3.9 -3.9l-3.9 -0.8zM60.5 192.6l3.9 -3.9l-3.9 -0.8zM45.4 192.8l3.9 -3.9l-3.9 -0.8zM245.0 194.3l3.9 -3.9l-3.9 -0.8zM133.8 193.6l3.9 -3.9l-3.9 -0.8zM268.5 195.0l3.9 -3.9l-3.9 -0.8zM336.7 196.1l3.9 -3.9l-3.9 -0.8zM118.3 194.8l3.9 -3.9l-3.9 -0.8zM91.2 195.2l3.9 -3.9l-3.9 -0.8zM345.2 197.1l3.9 -3.9l-3.9 -0.8zM331.0 197.6l3.9 -3.9l-3.9 -0.8zM371.8 197.9l3.9 -3.9l-3.9 -0.8zM283.7 197.3l3.9 -3.9l-3.9 -0.8zM111.6 196.1l3.9 -3.9l-3.9 -0.8zM157.0 196.6l3.9 -3.9l-3.9 -0.8zM125.5 196.8l3.9 -3.9l-3.9 -0.8zM141.2 197.0l3.9 -3.9l-3.9 -0.8zM97.0 196.9l3.9 -3.9l-3.9 -0.8zM381.3 199.2l3.9 -3.9l-3.9 -0.8zM313.1 198.8l3.9 -3.9l-3.9 -0.8zM253.2 198.5l3.9 -3.9l-3.9 -0.8zM352.1 199.5l3.9 -3.9l-3.9 -0.8zM51.8 197.7l3.9 -3.9l-3.9 -0.8zM34.5 197.7l3.9 -3.9l-3.9 -0.8zM362.3 200.1l3.9 -3.9l-3.9 -0.8zM75.7 198.3l3.9 -3.9l-3.9 -0.8zM394.0 200.6l3.9 -3.9l-3.9 -0.8zM153.4 198.9l3.9 -3.9l-3.9 -0.8zM356.8 200.4l3.9 -3.9l-3.9 -0.8zM290.1 200.0l3.9 -3.9l-3.9 -0.8zM41.8 198.2l3.9 -3.9l-3.9 -0.8zM68.2 198.8l3.9 -3.9l-3.9 -0.8zM244.8 200.1l3.9 -3.9l-3.9 -0.8zM90.1 199.0l3.9 -3.9l-3.9 -0.8zM257.8 200.3l3.9 -3.9l-3.9 -0.8zM145.9 199.7l3.9 -3.9l-3.9 -0.8zM343.9 201.2l3.9 -3.9l-3.9 -0.8zM280.0 201.0l3.9 -3.9l-3.9 -0.8zM108.5 199.8l3.9 -3.9l-3.9 -0.8zM114.2 200.0l3.9 -3.9l-3.9 -0.8zM399.0 202.4l3.9 -3.9l-3.9 -0.8zM236.8 201.3l3.9 -3.9l-3.9 -0.8zM45.2 200.2l3.9 -3.9l-3.9 -0.8zM122.8 201.3l3.9 -3.9l-3.9 -0.8zM99.7 201.2l3.9 -3.9l-3.9 -0.8zM78.3 201.2l3.9 -3.9l-3.9 -0.8zM86.3 201.4l3.9 -3.9l-3.9 -0.8zM370.3 203.5l3.9 -3.9l-3.9 -0.8zM340.4 203.3l3.9 -3.9l-3.9 -0.8zM349.1 203.5l3.9 -3.9l-3.9 -0.8zM71.9 201.6l3.9 -3.9l-3.9 -0.8zM267.2 203.1l3.9 -3.9l-3.9 -0.8zM250.5 203.0l3.9 -3.9l-3.9 -0.8zM127.4 202.1l3.9 -3.9l-3.9 -0.8zM57.9 201.8l3.9 -3.9l-3.9 -0.8zM138.9 202.6l3.9 -3.9l-3.9 -0.8zM324.6 204.2l3.9 -3.9l-3.9 -0.8zM395.8 204.7l3.9 -3.9l-3.9 -0.8zM286.5 204.0l3.9 -3.9l-3.9 -0.8zM292.9 204.2l3.9 -3.9l-3.9 -0.8zM82.2 203.0l3.9 -3.9l-3.9 -0.8zM335.0 204.9l3.9 -3.9l-3.9 -0.8zM378.0 205.3l3.9 -3.9l-3.9 -0.8zM150.4 203.9l3.9 -3.9l-3.9 -0.8zM366.8 205.5l3.9 -3.9l-3.9 -0.8zM274.8 205.1l3.9 -3.9l-3.9 -0.8zM53.3 203.7l3.9 -3.9l-3.9 -0.8zM264.3 205.9l3.9 -3.9l-3.9 -0.8zM104.6 204.8l3.9 -3.9l-3.9 -0.8zM346.2 206.6l3.9 -3.9l-3.9 -0.8zM76.5 204.8l3.9 -3.9l-3.9 -0.8zM312.7 206.6l3.9 -3.9l-3.9 -0.8zM269.2 206.7l3.9 -3.9l-3.9 -0.8zM142.9 205.9l3.9 -3.9l-3.9 -0.8zM90.9 205.8l3.9 -3.9l-3.9 -0.8zM327.1 207.8l3.9 -3.9l-3.9 -0.8zM288.5 207.5l3.9 -3.9l-3.9 -0.8zM248.6 207.3l3.9 -3.9l-3.9 -0.8zM156.0 206.7l3.9 -3.9l-3.9 -0.8zM373.9 208.3l3.9 -3.9l-3.9 -0.8zM60.8 206.2l3.9 -3.9l-3.9 -0.8zM86.3 206.6l3.9 -3.9l-3.9 -0.8zM109.5 206.9l3.9 -3.9l-3.9 -0.8zM115.4 207.1l3.9 -3.9l-3.9 -0.8zM355.2 208.9l3.9 -3.9l-3.9 -0.8zM318.6 208.7l3.9 -3.9l-3.9 -0.8zM70.2 207.1l3.9 -3.9l-3.9 -0.8zM252.5 209.1l3.9 -3.9l-3.9 -0.8zM368.3 210.1l3.9 -3.9l-3.9 -0.8zM166.6 208.6l3.9 -3.9l-3.9 -0.8zM119.4 208.4l3.9 -3.9l-3.9 -0.8zM102.6 208.3l3.9 -3.9l-3.9 -0.8zM397.3 211.2l3.9 -3.9l-3.9 -0.8zM283.9 210.4l3.9 -3.9l-3.9 -0.8zM245.2 210.3l3.9 -3.9l-3.9 -0.8zM304.1 210.7l3.9 -3.9l-3.9 -0.8zM293.9 211.1l3.9 -3.9l-3.9 -0.8zM256.9 210.8l3.9 -3.9l-3.9 -0.8zM330.6 211.5l3.9 -3.9l-3.9 -0.8zM81.2 209.9l3.9 -3.9l-3.9 -0.8zM350.4 211.8l3.9 -3.9l-3.9 -0.8zM96.7 210.1l3.9 -3.9l-3.9 -0.8zM127.4 210.4l3.9 -3.9l-3.9 -0.8zM49.7 209.9l3.9 -3.9l-3.9 -0.8zM261.0 211.6l3.9 -3.9l-3.9 -0.8zM238.2 211.5l3.9 -3.9l-3.9 -0.8zM90.0 210.4l3.9 -3.9l-3.9 -0.8zM54.4 210.2l3.9 -3.9l-3.9 -0.8zM146.6 210.9l3.9 -3.9l-3.9 -0.8zM41.4 210.5l3.9 -3.9l-3.9 -0.8zM323.1 212.7l3.9 -3.9l-3.9 -0.8zM151.3 211.7l3.9 -3.9l-3.9 -0.8zM136.9 211.7l3.9 -3.9l-3.9 -0.8zM163.8 212.0l3.9 -3.9l-3.9 -0.8zM121.2 212.0l3.9 -3.9l-3.9 -0.8zM274.1 213.2l3.9 -3.9l-3.9 -0.8zM36.2 211.6l3.9 -3.9l-3.9 -0.8zM109.6 212.3l3.9 -3.9l-3.9 -0.8zM76.5 212.1l3.9 -3.9l-3.9 -0.8zM266.0 213.5l3.9 -3.9l-3.9 -0.8zM346.8 214.4l3.9 -3.9l-3.9 -0.8zM339.7 214.3l3.9 -3.9l-3.9 -0.8zM174.4 213.3l3.9 -3.9l-3.9 -0.8zM368.9 214.8l3.9 -3.9l-3.9 -0.8zM285.0 214.3l3.9 -3.9l-3.9 -0.8zM312.1 214.7l3.9 -3.9l-3.9 -0.8zM22.0 212.6l3.9 -3.9l-3.9 -0.8zM278.3 214.6l3.9 -3.9l-3.9 -0.8zM295.1 214.9l3.9 -3.9l-3.9 -0.8zM360.5 215.4l3.9 -3.9l-3.9 -0.8zM133.0 213.8l3.9 -3.9l-3.9 -0.8zM250.4 214.7l3.9 -3.9l-3.9 -0.8zM84.8 213.5l3.9 -3.9l-3.9 -0.8zM378.3 215.8l3.9 -3.9l-3.9 -0.8zM336.3 216.1l3.9 -3.9l-3.9 -0.8zM289.9 215.8l3.9 -3.9l-3.9 -0.8zM269.5 215.7l3.9 -3.9l-3.9 -0.8zM63.9 214.3l3.9 -3.9l-3.9 -0.8zM321.5 216.2l3.9 -3.9l-3.9 -0.8zM167.3 215.2l3.9 -3.9l-3.9 -0.8zM299.3 216.3l3.9 -3.9l-3.9 -0.8zM73.2 214.8l3.9 -3.9l-3.9 -0.8zM233.7 216.0l3.9 -3.9l-3.9 -0.8zM56.1 215.2l3.9 -3.9l-3.9 -0.8zM29.9 215.1l3.9 -3.9l-3.9 -0.8zM228.6 217.0l3.9 -3.9l-3.9 -0.8zM88.4 216.1l3.9 -3.9l-3.9 -0.8zM106.5 216.4l3.9 -3.9l-3.9 -0.8zM36.0 215.9l3.9 -3.9l-3.9 -0.8zM149.7 216.9l3.9 -3.9l-3.9 -0.8zM40.7 216.3l3.9 -3.9l-3.9 -0.8zM159.1 217.2l3.9 -3.9l-3.9 -0.8zM396.5 218.9l3.9 -3.9l-3.9 -0.8zM391.9 219.0l3.9 -3.9l-3.9 -0.8zM46.9 216.8l3.9 -3.9l-3.9 -0.8zM275.1 218.5l3.9 -3.9l-3.9 -0.8zM21.8 216.7l3.9 -3.9l-3.9 -0.8zM68.2 217.1l3.9 -3.9l-3.9 -0.8zM383.5 219.4l3.9 -3.9l-3.9 -0.8zM266.2 218.7l3.9 -3.9l-3.9 -0.8zM153.4 218.0l3.9 -3.9l-3.9 -0.8zM284.9 219.0l3.9 -3.9l-3.9 -0.8zM307.6 219.2l3.9 -3.9l-3.9 -0.8zM339.5 219.5l3.9 -3.9l-3.9 -0.8zM350.1 219.6l3.9 -3.9l-3.9 -0.8zM100.1 217.8l3.9 -3.9l-3.9 -0.8zM60.4 217.6l3.9 -3.9l-3.9 -0.8zM316.0 219.6l3.9 -3.9l-3.9 -0.8zM171.0 219.0l3.9 -3.9l-3.9 -0.8zM270.9 219.8l3.9 -3.9l-3.9 -0.8zM261.7 220.2l3.9 -3.9l-3.9 -0.8zM64.4 218.8l3.9 -3.9l-3.9 -0.8zM325.8 221.0l3.9 -3.9l-3.9 -0.8zM376.6 221.8l3.9 -3.9l-3.9 -0.8zM361.8 221.8l3.9 -3.9l-3.9 -0.8zM292.2 221.4l3.9 -3.9l-3.9 -0.8zM333.9 221.9l3.9 -3.9l-3.9 -0.8zM119.1 220.4l3.9 -3.9l-3.9 -0.8zM357.5 222.2l3.9 -3.9l-3.9 -0.8zM128.2 220.6l3.9 -3.9l-3.9 -0.8zM399.8 222.7l3.9 -3.9l-3.9 -0.8zM395.2 222.6l3.9 -3.9l-3.9 -0.8zM103.7 220.5l3.9 -3.9l-3.9 -0.8zM222.8 221.6l3.9 -3.9l-3.9 -0.8zM81.1 221.0l3.9 -3.9l-3.9 -0.8zM14.6 220.5l3.9 -3.9l-3.9 -0.8zM249.9 222.3l3.9 -3.9l-3.9 -0.8zM123.8 221.5l3.9 -3.9l-3.9 -0.8zM277.1 222.7l3.9 -3.9l-3.9 -0.8zM228.3 222.4l3.9 -3.9l-3.9 -0.8zM342.7 223.4l3.9 -3.9l-3.9 -0.8zM69.2 221.6l3.9 -3.9l-3.9 -0.8zM308.6 223.5l3.9 -3.9l-3.9 -0.8zM237.5 223.0l3.9 -3.9l-3.9 -0.8zM133.7 222.5l3.9 -3.9l-3.9 -0.8zM161.0 222.9l3.9 -3.9l-3.9 -0.8zM97.2 222.5l3.9 -3.9l-3.9 -0.8zM301.2 224.0l3.9 -3.9l-3.9 -0.8zM139.3 223.2l3.9 -3.9l-3.9 -0.8zM110.3 223.0l3.9 -3.9l-3.9 -0.8zM156.4 223.4l3.9 -3.9l-3.9 -0.8zM56.2 222.7l3.9 -3.9l-3.9 -0.8zM315.1 224.7l3.9 -3.9l-3.9 -0.8zM367.8 225.2l3.9 -3.9l-3.9 -0.8zM288.5 224.7l3.9 -3.9l-3.9 -0.8zM30.7 222.9l3.9 -3.9l-3.9 -0.8zM322.3 225.4l3.9 -3.9l-3.9 -0.8zM269.7 225.1l3.9 -3.9l-3.9 -0.8zM329.8 225.6l3.9 -3.9l-3.9 -0.8zM261.4 225.2l3.9 -3.9l-3.9 -0.8zM85.1 223.9l3.9 -3.9l-3.9 -0.8zM90.5 224.4l3.9 -3.9l-3.9 -0.8zM281.4 225.8l3.9 -3.9l-3.9 -0.8zM216.0 225.4l3.9 -3.9l-3.9 -0.8zM231.8 225.8l3.9 -3.9l-3.9 -0.8zM296.4 226.4l3.9 -3.9l-3.9 -0.8zM241.0 226.0l3.9 -3.9l-3.9 -0.8zM115.8 225.3l3.9 -3.9l-3.9 -0.8zM395.4 227.8l3.9 -3.9l-3.9 -0.8zM335.1 227.4l3.9 -3.9l-3.9 -0.8zM355.1 227.7l3.9 -3.9l-3.9 -0.8zM310.1 227.8l3.9 -3.9l-3.9 -0.8zM70.7 226.1l3.9 -3.9l-3.9 -0.8zM343.5 228.2l3.9 -3.9l-3.9 -0.8zM291.8 227.9l3.9 -3.9l-3.9 -0.8zM149.8 227.0l3.9 -3.9l-3.9 -0.8zM21.0 226.1l3.9 -3.9l-3.9 -0.8zM42.1 226.4l3.9 -3.9l-3.9 -0.8zM316.4 228.5l3.9 -3.9l-3.9 -0.8zM97.0 226.9l3.9 -3.9l-3.9 -0.8zM36.4 226.5l3.9 -3.9l-3.9 -0.8zM46.5 226.6l3.9 -3.9l-3.9 -0.8zM112.2 227.1l3.9 -3.9l-3.9 -0.8zM130.1 227.5l3.9 -3.9l-3.9 -0.8zM246.7 228.6l3.9 -3.9l-3.9 -0.8zM212.0 228.3l3.9 -3.9l-3.9 -0.8zM196.2 228.3l3.9 -3.9l-3.9 -0.8zM153.7 228.0l3.9 -3.9l-3.9 -0.8zM379.8 229.7l3.9 -3.9l-3.9 -0.8zM350.1 229.5l3.9 -3.9l-3.9 -0.8zM188.6 228.3l3.9 -3.9l-3.9 -0.8zM66.5 227.7l3.9 -3.9l-3.9 -0.8zM304.3 229.4l3.9 -3.9l-3.9 -0.8zM82.9 227.9l3.9 -3.9l-3.9 -0.8zM54.8 227.7l3.9 -3.9l-3.9 -0.8zM137.0 228.4l3.9 -3.9l-3.9 -0.8zM366.5 230.1l3.9 -3.9l-3.9 -0.8zM326.8 230.0l3.9 -3.9l-3.9 -0.8zM256.9 229.7l3.9 -3.9l-3.9 -0.8zM361.8 230.6l3.9 -3.9l-3.9 -0.8zM167.6 229.3l3.9 -3.9l-3.9 -0.8zM262.1 230.3l3.9 -3.9l-3.9 -0.8zM331.9 230.9l3.9 -3.9l-3.9 -0.8zM218.4 230.1l3.9 -3.9l-3.9 -0.8zM76.4 229.3l3.9 -3.9l-3.9 -0.8zM385.6 231.9l3.9 -3.9l-3.9 -0.8zM100.7 230.1l3.9 -3.9l-3.9 -0.8zM93.9 230.1l3.9 -3.9l-3.9 -0.8zM191.8 230.8l3.9 -3.9l-3.9 -0.8zM107.5 230.5l3.9 -3.9l-3.9 -0.8zM143.7 230.9l3.9 -3.9l-3.9 -0.8zM25.6 230.1l3.9 -3.9l-3.9 -0.8zM233.3 231.7l3.9 -3.9l-3.9 -0.8zM321.3 232.3l3.9 -3.9l-3.9 -0.8zM390.8 233.1l3.9 -3.9l-3.9 -0.8zM252.7 232.1l3.9 -3.9l-3.9 -0.8zM225.5 232.1l3.9 -3.9l-3.9 -0.8zM86.2 231.2l3.9 -3.9l-3.9 -0.8zM177.0 231.9l3.9 -3.9l-3.9 -0.8zM267.0 232.6l3.9 -3.9l-3.9 -0.8zM69.8 231.2l3.9 -3.9l-3.9 -0.8zM356.1 233.3l3.9 -3.9l-3.9 -0.8zM246.6 233.3l3.9 -3.9l-3.9 -0.8zM171.7 232.7l3.9 -3.9l-3.9 -0.8zM165.6 232.9l3.9 -3.9l-3.9 -0.8zM382.0 234.5l3.9 -3.9l-3.9 -0.8zM149.9 233.0l3.9 -3.9l-3.9 -0.8zM341.6 234.5l3.9 -3.9l-3.9 -0.8zM120.1 233.0l3.9 -3.9l-3.9 -0.8zM48.2 232.5l3.9 -3.9l-3.9 -0.8zM34.1 232.6l3.9 -3.9l-3.9 -0.8zM156.2 233.5l3.9 -3.9l-3.9 -0.8zM216.4 234.3l3.9 -3.9l-3.9 -0.8zM58.1 233.2l3.9 -3.9l-3.9 -0.8zM270.6 234.7l3.9 -3.9l-3.9 -0.8zM161.6 234.1l3.9 -3.9l-3.9 -0.8zM21.2 233.3l3.9 -3.9l-3.9 -0.8zM203.5 234.7l3.9 -3.9l-3.9 -0.8zM54.1 233.8l3.9 -3.9l-3.9 -0.8zM312.4 235.7l3.9 -3.9l-3.9 -0.8zM182.0 234.9l3.9 -3.9l-3.9 -0.8zM397.1 236.8l3.9 -3.9l-3.9 -0.8zM106.4 234.8l3.9 -3.9l-3.9 -0.8zM71.7 234.6l3.9 -3.9l-3.9 -0.8zM253.3 236.0l3.9 -3.9l-3.9 -0.8zM368.0 236.9l3.9 -3.9l-3.9 -0.8zM92.6 235.0l3.9 -3.9l-3.9 -0.8zM81.4 235.0l3.9 -3.9l-3.9 -0.8zM361.9 237.1l3.9 -3.9l-3.9 -0.8zM99.2 235.2l3.9 -3.9l-3.9 -0.8zM389.1 237.4l3.9 -3.9l-3.9 -0.8zM293.2 236.7l3.9 -3.9l-3.9 -0.8zM227.6 236.3l3.9 -3.9l-3.9 -0.8zM318.5 237.0l3.9 -3.9l-3.9 -0.8zM135.9 235.8l3.9 -3.9l-3.9 -0.8zM124.7 236.0l3.9 -3.9l-3.9 -0.8zM324.2 237.6l3.9 -3.9l-3.9 -0.8zM245.7 237.1l3.9 -3.9l-3.9 -0.8zM213.0 237.1l3.9 -3.9l-3.9 -0.8zM30.7 235.8l3.9 -3.9l-3.9 -0.8zM234.8 237.5l3.9 -3.9l-3.9 -0.8zM115.7 236.8l3.9 -3.9l-3.9 -0.8zM186.8 237.4l3.9 -3.9l-3.9 -0.8zM40.4 236.4l3.9 -3.9l-3.9 -0.8zM343.3 238.8l3.9 -3.9l-3.9 -0.8zM385.1 239.2l3.9 -3.9l-3.9 -0.8zM301.8 238.7l3.9 -3.9l-3.9 -0.8zM149.1 237.9l3.9 -3.9l-3.9 -0.8zM129.4 238.1l3.9 -3.9l-3.9 -0.8zM166.7 238.4l3.9 -3.9l-3.9 -0.8zM392.9 240.0l3.9 -3.9l-3.9 -0.8zM280.2 239.5l3.9 -3.9l-3.9 -0.8zM109.0 238.4l3.9 -3.9l-3.9 -0.8zM379.5 240.7l3.9 -3.9l-3.9 -0.8zM83.1 238.5l3.9 -3.9l-3.9 -0.8zM66.7 238.5l3.9 -3.9l-3.9 -0.8zM231.5 239.8l3.9 -3.9l-3.9 -0.8zM96.3 239.0l3.9 -3.9l-3.9 -0.8zM198.3 239.9l3.9 -3.9l-3.9 -0.8zM15.9 238.7l3.9 -3.9l-3.9 -0.8zM317.1 241.2l3.9 -3.9l-3.9 -0.8zM208.2 240.4l3.9 -3.9l-3.9 -0.8zM371.8 241.7l3.9 -3.9l-3.9 -0.8zM227.6 240.7l3.9 -3.9l-3.9 -0.8zM74.6 239.7l3.9 -3.9l-3.9 -0.8zM330.4 241.6l3.9 -3.9l-3.9 -0.8zM50.8 239.6l3.9 -3.9l-3.9 -0.8zM347.0 241.8l3.9 -3.9l-3.9 -0.8zM138.4 240.4l3.9 -3.9l-3.9 -0.8zM46.0 239.7l3.9 -3.9l-3.9 -0.8zM60.8 239.9l3.9 -3.9l-3.9 -0.8zM20.2 239.7l3.9 -3.9l-3.9 -0.8zM173.9 240.8l3.9 -3.9l-3.9 -0.8zM217.1 241.2l3.9 -3.9l-3.9 -0.8zM291.2 241.9l3.9 -3.9l-3.9 -0.8zM306.0 242.0l3.9 -3.9l-3.9 -0.8zM325.9 242.1l3.9 -3.9l-3.9 -0.8zM366.3 242.7l3.9 -3.9l-3.9 -0.8zM116.3 241.0l3.9 -3.9l-3.9 -0.8zM258.3 242.2l3.9 -3.9l-3.9 -0.8zM100.9 241.4l3.9 -3.9l-3.9 -0.8zM269.7 242.8l3.9 -3.9l-3.9 -0.8zM142.4 242.1l3.9 -3.9l-3.9 -0.8zM311.2 243.4l3.9 -3.9l-3.9 -0.8zM37.3 241.4l3.9 -3.9l-3.9 -0.8zM154.3 242.5l3.9 -3.9l-3.9 -0.8zM159.1 242.6l3.9 -3.9l-3.9 -0.8zM398.0 244.4l3.9 -3.9l-3.9 -0.8zM360.7 244.2l3.9 -3.9l-3.9 -0.8zM123.6 242.4l3.9 -3.9l-3.9 -0.8zM386.4 244.4l3.9 -3.9l-3.9 -0.8zM265.2 243.9l3.9 -3.9l-3.9 -0.8zM352.4 244.6l3.9 -3.9l-3.9 -0.8zM135.1 243.0l3.9 -3.9l-3.9 -0.8zM71.0 242.7l3.9 -3.9l-3.9 -0.8zM250.5 244.0l3.9 -3.9l-3.9 -0.8zM392.4 245.1l3.9 -3.9l-3.9 -0.8zM212.8 244.1l3.9 -3.9l-3.9 -0.8zM168.5 244.1l3.9 -3.9l-3.9 -0.8zM300.6 245.1l3.9 -3.9l-3.9 -0.8zM295.9 245.1l3.9 -3.9l-3.9 -0.8zM328.0 245.7l3.9 -3.9l-3.9 -0.8zM30.7 243.7l3.9 -3.9l-3.9 -0.8zM49.4 243.8l3.9 -3.9l-3.9 -0.8zM376.6 246.3l3.9 -3.9l-3.9 -0.8zM127.6 244.5l3.9 -3.9l-3.9 -0.8zM322.4 246.2l3.9 -3.9l-3.9 -0.8zM146.0 244.9l3.9 -3.9l-3.9 -0.8zM111.7 244.7l3.9 -3.9l-3.9 -0.8zM87.6 244.5l3.9 -3.9l-3.9 -0.8zM190.0 245.3l3.9 -3.9l-3.9 -0.8zM364.6 246.7l3.9 -3.9l-3.9 -0.8zM194.6 245.5l3.9 -3.9l-3.9 -0.8zM240.5 246.0l3.9 -3.9l-3.9 -0.8zM26.0 244.6l3.9 -3.9l-3.9 -0.8zM199.1 246.0l3.9 -3.9l-3.9 -0.8zM341.9 247.2l3.9 -3.9l-3.9 -0.8zM355.2 247.3l3.9 -3.9l-3.9 -0.8zM177.5 246.1l3.9 -3.9l-3.9 -0.8zM163.0 246.0l3.9 -3.9l-3.9 -0.8zM268.0 247.0l3.9 -3.9l-3.9 -0.8zM217.3 246.6l3.9 -3.9l-3.9 -0.8zM95.9 245.8l3.9 -3.9l-3.9 -0.8zM246.5 247.2l3.9 -3.9l-3.9 -0.8zM60.0 246.0l3.9 -3.9l-3.9 -0.8zM81.1 246.3l3.9 -3.9l-3.9 -0.8zM228.4 247.5l3.9 -3.9l-3.9 -0.8zM170.7 247.5l3.9 -3.9l-3.9 -0.8zM280.8 248.5l3.9 -3.9l-3.9 -0.8zM382.0 249.3l3.9 -3.9l-3.9 -0.8zM115.1 247.4l3.9 -3.9l-3.9 -0.8zM223.8 248.2l3.9 -3.9l-3.9 -0.8zM72.1 247.7l3.9 -3.9l-3.9 -0.8zM291.9 250.4l3.9 -3.9l-3.9 -0.8zM184.3 249.9l3.9 -3.9l-3.9 -0.8zM366.8 251.2l3.9 -3.9l-3.9 -0.8zM107.8 249.3l3.9 -3.9l-3.9 -0.8zM394.8 251.6l3.9 -3.9l-3.9 -0.8zM336.9 251.3l3.9 -3.9l-3.9 -0.8zM15.0 248.9l3.9 -3.9l-3.9 -0.8zM67.3 249.3l3.9 -3.9l-3.9 -0.8zM27.3 249.2l3.9 -3.9l-3.9 -0.8zM356.5 251.7l3.9 -3.9l-3.9 -0.8zM314.1 251.4l3.9 -3.9l-3.9 -0.8zM138.7 250.2l3.9 -3.9l-3.9 -0.8zM298.0 251.5l3.9 -3.9l-3.9 -0.8zM199.8 250.9l3.9 -3.9l-3.9 -0.8zM76.4 250.2l3.9 -3.9l-3.9 -0.8zM21.4 250.1l3.9 -3.9l-3.9 -0.8zM35.7 250.2l3.9 -3.9l-3.9 -0.8zM163.9 251.3l3.9 -3.9l-3.9 -0.8zM234.6 252.0l3.9 -3.9l-3.9 -0.8zM192.8 251.9l3.9 -3.9l-3.9 -0.8zM48.0 250.9l3.9 -3.9l-3.9 -0.8zM318.3 253.0l3.9 -3.9l-3.9 -0.8zM126.2 251.6l3.9 -3.9l-3.9 -0.8zM175.0 252.1l3.9 -3.9l-3.9 -0.8zM400.7 253.8l3.9 -3.9l-3.9 -0.8zM56.8 251.3l3.9 -3.9l-3.9 -0.8zM390.2 253.7l3.9 -3.9l-3.9 -0.8zM309.5 253.2l3.9 -3.9l-3.9 -0.8zM206.1 252.7l3.9 -3.9l-3.9 -0.8zM377.3 254.3l3.9 -3.9l-3.9 -0.8zM218.3 253.2l3.9 -3.9l-3.9 -0.8zM79.8 252.2l3.9 -3.9l-3.9 -0.8zM187.7 253.1l3.9 -3.9l-3.9 -0.8zM225.1 253.8l3.9 -3.9l-3.9 -0.8zM155.4 253.4l3.9 -3.9l-3.9 -0.8zM285.6 254.3l3.9 -3.9l-3.9 -0.8zM167.2 253.8l3.9 -3.9l-3.9 -0.8zM272.7 254.5l3.9 -3.9l-3.9 -0.8zM247.7 254.4l3.9 -3.9l-3.9 -0.8zM137.5 254.1l3.9 -3.9l-3.9 -0.8zM230.2 254.9l3.9 -3.9l-3.9 -0.8zM86.1 254.0l3.9 -3.9l-3.9 -0.8zM331.0 255.9l3.9 -3.9l-3.9 -0.8zM380.8 256.3l3.9 -3.9l-3.9 -0.8zM177.4 255.3l3.9 -3.9l-3.9 -0.8zM369.0 256.9l3.9 -3.9l-3.9 -0.8zM258.6 256.2l3.9 -3.9l-3.9 -0.8zM209.3 255.9l3.9 -3.9l-3.9 -0.8zM312.7 256.7l3.9 -3.9l-3.9 -0.8zM390.7 258.0l3.9 -3.9l-3.9 -0.8zM28.4 255.8l3.9 -3.9l-3.9 -0.8zM355.1 258.4l3.9 -3.9l-3.9 -0.8zM144.3 257.1l3.9 -3.9l-3.9 -0.8zM23.2 256.3l3.9 -3.9l-3.9 -0.8zM184.4 257.5l3.9 -3.9l-3.9 -0.8zM39.3 256.8l3.9 -3.9l-3.9 -0.8zM346.3 259.2l3.9 -3.9l-3.9 -0.8zM233.8 258.5l3.9 -3.9l-3.9 -0.8zM172.4 258.1l3.9 -3.9l-3.9 -0.8zM82.0 257.6l3.9 -3.9l-3.9 -0.8zM152.4 258.1l3.9 -3.9l-3.9 -0.8zM266.5 259.0l3.9 -3.9l-3.9 -0.8zM249.4 258.9l3.9 -3.9l-3.9 -0.8zM77.7 257.7l3.9 -3.9l-3.9 -0.8zM227.4 258.9l3.9 -3.9l-3.9 -0.8zM360.9 259.9l3.9 -3.9l-3.9 -0.8zM396.5 260.6l3.9 -3.9l-3.9 -0.8zM203.8 259.2l3.9 -3.9l-3.9 -0.8zM255.1 259.7l3.9 -3.9l-3.9 -0.8zM176.2 259.2l3.9 -3.9l-3.9 -0.8zM316.0 260.4l3.9 -3.9l-3.9 -0.8zM323.1 260.5l3.9 -3.9l-3.9 -0.8zM63.5 258.7l3.9 -3.9l-3.9 -0.8zM59.0 258.9l3.9 -3.9l-3.9 -0.8zM31.3 258.7l3.9 -3.9l-3.9 -0.8zM163.3 259.8l3.9 -3.9l-3.9 -0.8zM214.5 260.2l3.9 -3.9l-3.9 -0.8zM148.4 259.9l3.9 -3.9l-3.9 -0.8zM339.4 261.4l3.9 -3.9l-3.9 -0.8zM42.9 259.2l3.9 -3.9l-3.9 -0.8zM218.5 260.5l3.9 -3.9l-3.9 -0.8zM18.2 259.6l3.9 -3.9l-3.9 -0.8zM386.4 262.3l3.9 -3.9l-3.9 -0.8zM333.5 262.1l3.9 -3.9l-3.9 -0.8zM168.2 261.0l3.9 -3.9l-3.9 -0.8zM200.3 261.6l3.9 -3.9l-3.9 -0.8zM67.0 260.6l3.9 -3.9l-3.9 -0.8zM244.8 262.3l3.9 -3.9l-3.9 -0.8zM344.3 263.5l3.9 -3.9l-3.9 -0.8zM399.8 264.0l3.9 -3.9l-3.9 -0.8zM152.1 262.3l3.9 -3.9l-3.9 -0.8zM355.3 263.9l3.9 -3.9l-3.9 -0.8zM394.7 264.4l3.9 -3.9l-3.9 -0.8zM196.1 263.3l3.9 -3.9l-3.9 -0.8zM236.9 263.7l3.9 -3.9l-3.9 -0.8zM76.6 262.7l3.9 -3.9l-3.9 -0.8zM225.9 264.0l3.9 -3.9l-3.9 -0.8zM155.9 263.6l3.9 -3.9l-3.9 -0.8zM48.3 262.9l3.9 -3.9l-3.9 -0.8zM363.9 265.7l3.9 -3.9l-3.9 -0.8zM43.1 263.4l3.9 -3.9l-3.9 -0.8zM320.6 265.5l3.9 -3.9l-3.9 -0.8zM63.1 263.7l3.9 -3.9l-3.9 -0.8zM201.6 265.3l3.9 -3.9l-3.9 -0.8zM24.8 264.0l3.9 -3.9l-3.9 -0.8zM160.1 265.2l3.9 -3.9l-3.9 -0.8zM169.5 265.4l3.9 -3.9l-3.9 -0.8zM206.3 265.8l3.9 -3.9l-3.9 -0.8zM328.5 267.0l3.9 -3.9l-3.9 -0.8zM180.0 266.0l3.9 -3.9l-3.9 -0.8zM164.7 266.0l3.9 -3.9l-3.9 -0.8zM254.2 266.6l3.9 -3.9l-3.9 -0.8zM37.1 265.4l3.9 -3.9l-3.9 -0.8zM244.9 267.5l3.9 -3.9l-3.9 -0.8zM196.7 268.0l3.9 -3.9l-3.9 -0.8zM221.9 268.8l3.9 -3.9l-3.9 -0.8zM174.6 268.9l3.9 -3.9l-3.9 -0.8zM62.5 268.2l3.9 -3.9l-3.9 -0.8zM18.7 267.9l3.9 -3.9l-3.9 -0.8zM55.2 268.4l3.9 -3.9l-3.9 -0.8zM22.6 268.2l3.9 -3.9l-3.9 -0.8zM41.9 268.7l3.9 -3.9l-3.9 -0.8zM50.6 268.8l3.9 -3.9l-3.9 -0.8zM335.7 271.4l3.9 -3.9l-3.9 -0.8zM37.2 270.5l3.9 -3.9l-3.9 -0.8zM355.8 273.2l3.9 -3.9l-3.9 -0.8zM325.2 273.2l3.9 -3.9l-3.9 -0.8zM342.7 274.0l3.9 -3.9l-3.9 -0.8zM31.4 271.8l3.9 -3.9l-3.9 -0.8zM349.7 275.5l3.9 -3.9l-3.9 -0.8zM42.2 273.5l3.9 -3.9l-3.9 -0.8zM54.9 274.8l3.9 -3.9l-3.9 -0.8zM50.9 275.2l3.9 -3.9l-3.9 -0.8zM19.0 275.0l3.9 -3.9l-3.9 -0.8zM347.9 280.1l3.9 -3.9l-3.9 -0.8zM29.2 278.0l3.9 -3.9l-3.9 -0.8zM47.1 279.0l3.9 -3.9l-3.9 -0.8zM330.3 281.3l3.9 -3.9l-3.9 -0.8zM17.3 279.3l3.9 -3.9l-3.9 -0.8zM337.6 282.1l3.9 -3.9l-3.9 -0.8zM351.4 282.4l3.9 -3.9l-3.9 -0.8zM37.5 281.0l3.9 -3.9l-3.9 -0.8zM333.7 283.4l3.9 -3.9l-3.9 -0.8zM326.2 283.4l3.9 -3.9l-3.9 -0.8zM342.6 283.6l3.9 -3.9l-3.9 -0.8zM347.5 284.7l3.9 -3.9l-3.9 -0.8zM14.6 282.5l3.9 -3.9l-3.9 -0.8zM20.2 283.1l3.9 -3.9l-3.9 -0.8zM31.6 283.1l3.9 -3.9l-3.9 -0.8zM38.8 284.7l3.9 -3.9l-3.9 -0.8zM58.9 285.1l3.9 -3.9l-3.9 -0.8zM27.2 285.0l3.9 -3.9l-3.9 -0.8zM337.1 287.6l3.9 -3.9l-3.9 -0.8zM44.5 287.0l3.9 -3.9l-3.9 -0.8zM35.4 287.6l3.9 -3.9l-3.9 -0.8zM341.2 293.0l3.9 -3.9l-3.9 -0.8zM45.7 292.9l3.9 -3.9l-3.9 -0.8zM26.1 292.7l3.9 -3.9l-3.9 -0.8zM50.0 293.4l3.9 -3.9l-3.9 -0.8zM13.7 293.6l3.9 -3.9l-3.9 -0.8zM331.6 297.2l3.9 -3.9l-3.9 -0.8zM336.0 297.7l3.9 -3.9l-3.9 -0.8zM39.7 295.9l3.9 -3.9l-3.9 -0.8zM45.3 297.4l3.9 -3.9l-3.9 -0.8zM19.4 297.5l3.9 -3.9l-3.9 -0.8zM33.6 297.6l3.9 -3.9l-3.9 -0.8zM15.2 297.9l3.9 -3.9l-3.9 -0.8zM345.3 301.5l3.9 -3.9l-3.9 -0.8zM37.7 299.7l3.9 -3.9l-3.9 -0.8zM249.0 302.0l3.9 -3.9l-3.9 -0.8zM329.5 303.1l3.9 -3.9l-3.9 -0.8zM325.5 303.3l3.9 -3.9l-3.9 -0.8zM25.2 301.7l3.9 -3.9l-3.9 -0.8zM342.4 304.5l3.9 -3.9l-3.9 -0.8zM271.2 305.4l3.9 -3.9l-3.9 -0.8zM241.2 305.2l3.9 -3.9l-3.9 -0.8zM40.7 304.0l3.9 -3.9l-3.9 -0.8zM335.2 306.4l3.9 -3.9l-3.9 -0.8zM248.0 305.9l3.9 -3.9l-3.9 -0.8zM44.6 305.0l3.9 -3.9l-3.9 -0.8zM17.6 304.8l3.9 -3.9l-3.9 -0.8zM310.6 307.5l3.9 -3.9l-3.9 -0.8zM32.7 306.1l3.9 -3.9l-3.9 -0.8zM331.2 310.0l3.9 -3.9l-3.9 -0.8zM26.4 307.7l3.9 -3.9l-3.9 -0.8zM256.3 309.8l3.9 -3.9l-3.9 -0.8zM240.4 309.7l3.9 -3.9l-3.9 -0.8zM313.6 310.4l3.9 -3.9l-3.9 -0.8zM16.0 308.5l3.9 -3.9l-3.9 -0.8zM289.1 310.9l3.9 -3.9l-3.9 -0.8zM267.2 311.1l3.9 -3.9l-3.9 -0.8zM324.8 312.0l3.9 -3.9l-3.9 -0.8zM277.6 312.0l3.9 -3.9l-3.9 -0.8zM304.8 312.9l3.9 -3.9l-3.9 -0.8zM296.9 313.8l3.9 -3.9l-3.9 -0.8zM252.6 313.6l3.9 -3.9l-3.9 -0.8zM319.5 314.3l3.9 -3.9l-3.9 -0.8zM261.9 314.3l3.9 -3.9l-3.9 -0.8zM312.3 314.8l3.9 -3.9l-3.9 -0.8zM292.3 315.2l3.9 -3.9l-3.9 -0.8zM339.7 315.6l3.9 -3.9l-3.9 -0.8zM256.7 315.1l3.9 -3.9l-3.9 -0.8zM267.5 315.3l3.9 -3.9l-3.9 -0.8zM34.5 314.0l3.9 -3.9l-3.9 -0.8zM20.2 314.1l3.9 -3.9l-3.9 -0.8zM284.9 316.6l3.9 -3.9l-3.9 -0.8zM278.2 317.0l3.9 -3.9l-3.9 -0.8zM309.6 318.2l3.9 -3.9l-3.9 -0.8zM16.9 316.6l3.9 -3.9l-3.9 -0.8zM305.5 319.0l3.9 -3.9l-3.9 -0.8zM273.7 319.0l3.9 -3.9l-3.9 -0.8zM29.1 317.3l3.9 -3.9l-3.9 -0.8zM246.5 319.0l3.9 -3.9l-3.9 -0.8zM318.6 320.3l3.9 -3.9l-3.9 -0.8zM253.5 320.4l3.9 -3.9l-3.9 -0.8zM266.6 321.2l3.9 -3.9l-3.9 -0.8zM311.4 321.8l3.9 -3.9l-3.9 -0.8zM249.3 321.8l3.9 -3.9l-3.9 -0.8zM323.6 322.5l3.9 -3.9l-3.9 -0.8zM27.8 321.1l3.9 -3.9l-3.9 -0.8zM21.8 321.8l3.9 -3.9l-3.9 -0.8zM288.7 323.9l3.9 -3.9l-3.9 -0.8zM317.8 324.4l3.9 -3.9l-3.9 -0.8zM31.4 323.0l3.9 -3.9l-3.9 -0.8zM243.2 325.1l3.9 -3.9l-3.9 -0.8zM313.6 325.8l3.9 -3.9l-3.9 -0.8zM331.6 325.9l3.9 -3.9l-3.9 -0.8zM284.5 325.6l3.9 -3.9l-3.9 -0.8zM279.4 325.6l3.9 -3.9l-3.9 -0.8zM261.7 326.4l3.9 -3.9l-3.9 -0.8zM237.9 326.2l3.9 -3.9l-3.9 -0.8zM273.0 326.5l3.9 -3.9l-3.9 -0.8zM248.0 327.2l3.9 -3.9l-3.9 -0.8zM254.8 327.3l3.9 -3.9l-3.9 -0.8zM15.1 325.7l3.9 -3.9l-3.9 -0.8zM320.9 328.2l3.9 -3.9l-3.9 -0.8zM309.8 328.3l3.9 -3.9l-3.9 -0.8zM292.2 328.3l3.9 -3.9l-3.9 -0.8zM37.1 326.6l3.9 -3.9l-3.9 -0.8zM315.9 329.9l3.9 -3.9l-3.9 -0.8zM19.7 328.1l3.9 -3.9l-3.9 -0.8zM239.6 329.9l3.9 -3.9l-3.9 -0.8zM287.6 330.4l3.9 -3.9l-3.9 -0.8zM304.6 331.0l3.9 -3.9l-3.9 -0.8zM329.5 331.3l3.9 -3.9l-3.9 -0.8zM298.7 331.2l3.9 -3.9l-3.9 -0.8zM44.9 330.2l3.9 -3.9l-3.9 -0.8zM27.5 331.0l3.9 -3.9l-3.9 -0.8zM313.4 333.3l3.9 -3.9l-3.9 -0.8zM323.3 333.8l3.9 -3.9l-3.9 -0.8zM234.4 334.1l3.9 -3.9l-3.9 -0.8zM250.2 334.5l3.9 -3.9l-3.9 -0.8zM13.4 332.7l3.9 -3.9l-3.9 -0.8zM32.0 333.1l3.9 -3.9l-3.9 -0.8zM242.9 335.2l3.9 -3.9l-3.9 -0.8zM283.2 335.5l3.9 -3.9l-3.9 -0.8zM42.3 333.8l3.9 -3.9l-3.9 -0.8zM302.3 335.8l3.9 -3.9l-3.9 -0.8zM297.2 335.9l3.9 -3.9l-3.9 -0.8zM272.3 336.3l3.9 -3.9l-3.9 -0.8zM277.9 336.4l3.9 -3.9l-3.9 -0.8zM259.8 336.3l3.9 -3.9l-3.9 -0.8zM35.4 335.5l3.9 -3.9l-3.9 -0.8zM286.0 338.4l3.9 -3.9l-3.9 -0.8zM304.8 338.9l3.9 -3.9l-3.9 -0.8zM309.8 339.3l3.9 -3.9l-3.9 -0.8zM53.3 337.8l3.9 -3.9l-3.9 -0.8zM318.7 339.9l3.9 -3.9l-3.9 -0.8zM48.0 338.2l3.9 -3.9l-3.9 -0.8zM242.5 339.8l3.9 -3.9l-3.9 -0.8zM16.3 338.6l3.9 -3.9l-3.9 -0.8zM272.6 341.0l3.9 -3.9l-3.9 -0.8zM268.0 341.2l3.9 -3.9l-3.9 -0.8zM40.3 339.5l3.9 -3.9l-3.9 -0.8zM249.4 341.6l3.9 -3.9l-3.9 -0.8zM260.5 342.4l3.9 -3.9l-3.9 -0.8zM279.6 342.9l3.9 -3.9l-3.9 -0.8zM61.4 342.4l3.9 -3.9l-3.9 -0.8zM294.2 344.4l3.9 -3.9l-3.9 -0.8zM269.8 344.7l3.9 -3.9l-3.9 -0.8zM48.8 343.0l3.9 -3.9l-3.9 -0.8zM320.1 345.1l3.9 -3.9l-3.9 -0.8zM288.8 345.2l3.9 -3.9l-3.9 -0.8zM24.4 343.3l3.9 -3.9l-3.9 -0.8zM246.7 345.7l3.9 -3.9l-3.9 -0.8zM37.5 344.2l3.9 -3.9l-3.9 -0.8zM307.6 346.7l3.9 -3.9l-3.9 -0.8zM281.3 346.6l3.9 -3.9l-3.9 -0.8zM273.2 346.7l3.9 -3.9l-3.9 -0.8zM31.8 345.0l3.9 -3.9l-3.9 -0.8zM18.8 345.4l3.9 -3.9l-3.9 -0.8zM324.6 347.7l3.9 -3.9l-3.9 -0.8zM303.6 348.6l3.9 -3.9l-3.9 -0.8zM276.4 349.1l3.9 -3.9l-3.9 -0.8zM299.1 349.3l3.9 -3.9l-3.9 -0.8zM255.2 349.5l3.9 -3.9l-3.9 -0.8zM243.3 349.5l3.9 -3.9l-3.9 -0.8zM310.7 350.0l3.9 -3.9l-3.9 -0.8zM57.1 348.1l3.9 -3.9l-3.9 -0.8zM47.9 348.1l3.9 -3.9l-3.9 -0.8zM36.1 348.1l3.9 -3.9l-3.9 -0.8zM15.6 348.3l3.9 -3.9l-3.9 -0.8zM282.0 350.6l3.9 -3.9l-3.9 -0.8zM258.9 351.9l3.9 -3.9l-3.9 -0.8zM250.0 352.3l3.9 -3.9l-3.9 -0.8zM402.1 353.6l3.9 -3.9l-3.9 -0.8zM66.1 351.2l3.9 -3.9l-3.9 -0.8zM304.0 353.2l3.9 -3.9l-3.9 -0.8zM19.5 351.2l3.9 -3.9l-3.9 -0.8zM161.4 352.6l3.9 -3.9l-3.9 -0.8zM276.7 353.8l3.9 -3.9l-3.9 -0.8zM396.6 354.9l3.9 -3.9l-3.9 -0.8zM290.1 354.4l3.9 -3.9l-3.9 -0.8zM29.5 352.7l3.9 -3.9l-3.9 -0.8zM285.7 354.7l3.9 -3.9l-3.9 -0.8zM44.1 353.2l3.9 -3.9l-3.9 -0.8zM54.5 353.6l3.9 -3.9l-3.9 -0.8zM297.9 355.8l3.9 -3.9l-3.9 -0.8zM61.1 354.2l3.9 -3.9l-3.9 -0.8zM155.1 354.9l3.9 -3.9l-3.9 -0.8zM173.4 355.7l3.9 -3.9l-3.9 -0.8zM263.0 356.6l3.9 -3.9l-3.9 -0.8zM249.8 356.8l3.9 -3.9l-3.9 -0.8zM302.3 357.3l3.9 -3.9l-3.9 -0.8zM24.3 355.2l3.9 -3.9l-3.9 -0.8zM269.0 357.9l3.9 -3.9l-3.9 -0.8zM89.4 356.8l3.9 -3.9l-3.9 -0.8zM283.3 358.4l3.9 -3.9l-3.9 -0.8zM255.9 358.3l3.9 -3.9l-3.9 -0.8zM274.0 358.7l3.9 -3.9l-3.9 -0.8zM290.6 359.1l3.9 -3.9l-3.9 -0.8zM138.4 358.2l3.9 -3.9l-3.9 -0.8zM395.0 361.8l3.9 -3.9l-3.9 -0.8zM170.9 360.6l3.9 -3.9l-3.9 -0.8zM245.6 361.5l3.9 -3.9l-3.9 -0.8zM68.6 360.4l3.9 -3.9l-3.9 -0.8zM27.6 360.6l3.9 -3.9l-3.9 -0.8zM267.4 362.6l3.9 -3.9l-3.9 -0.8zM278.1 362.7l3.9 -3.9l-3.9 -0.8zM292.6 362.9l3.9 -3.9l-3.9 -0.8zM62.0 361.1l3.9 -3.9l-3.9 -0.8zM48.4 361.1l3.9 -3.9l-3.9 -0.8zM87.2 362.1l3.9 -3.9l-3.9 -0.8zM142.3 363.1l3.9 -3.9l-3.9 -0.8zM151.0 363.4l3.9 -3.9l-3.9 -0.8zM257.0 364.6l3.9 -3.9l-3.9 -0.8zM271.8 364.7l3.9 -3.9l-3.9 -0.8zM400.6 365.9l3.9 -3.9l-3.9 -0.8zM177.2 364.2l3.9 -3.9l-3.9 -0.8zM161.1 364.1l3.9 -3.9l-3.9 -0.8zM74.7 363.5l3.9 -3.9l-3.9 -0.8zM35.1 363.5l3.9 -3.9l-3.9 -0.8zM288.0 365.7l3.9 -3.9l-3.9 -0.8zM389.1 366.8l3.9 -3.9l-3.9 -0.8zM261.4 365.9l3.9 -3.9l-3.9 -0.8zM31.2 364.4l3.9 -3.9l-3.9 -0.8zM65.6 364.8l3.9 -3.9l-3.9 -0.8zM81.5 365.3l3.9 -3.9l-3.9 -0.8zM252.5 366.6l3.9 -3.9l-3.9 -0.8zM50.8 365.2l3.9 -3.9l-3.9 -0.8zM41.0 366.3l3.9 -3.9l-3.9 -0.8zM183.9 367.5l3.9 -3.9l-3.9 -0.8zM279.4 368.3l3.9 -3.9l-3.9 -0.8zM126.2 367.2l3.9 -3.9l-3.9 -0.8zM69.5 367.2l3.9 -3.9l-3.9 -0.8zM92.1 367.4l3.9 -3.9l-3.9 -0.8zM151.3 367.9l3.9 -3.9l-3.9 -0.8zM102.5 367.7l3.9 -3.9l-3.9 -0.8zM171.1 368.2l3.9 -3.9l-3.9 -0.8zM397.2 370.0l3.9 -3.9l-3.9 -0.8zM264.4 369.2l3.9 -3.9l-3.9 -0.8zM130.3 368.5l3.9 -3.9l-3.9 -0.8zM110.5 368.7l3.9 -3.9l-3.9 -0.8zM85.8 369.3l3.9 -3.9l-3.9 -0.8zM50.6 369.4l3.9 -3.9l-3.9 -0.8zM154.6 370.5l3.9 -3.9l-3.9 -0.8zM76.7 370.1l3.9 -3.9l-3.9 -0.8zM251.9 371.4l3.9 -3.9l-3.9 -0.8zM138.8 370.9l3.9 -3.9l-3.9 -0.8zM43.7 370.2l3.9 -3.9l-3.9 -0.8zM180.2 371.4l3.9 -3.9l-3.9 -0.8zM120.3 371.0l3.9 -3.9l-3.9 -0.8zM385.9 373.2l3.9 -3.9l-3.9 -0.8zM379.9 373.3l3.9 -3.9l-3.9 -0.8zM150.4 371.8l3.9 -3.9l-3.9 -0.8zM402.3 374.1l3.9 -3.9l-3.9 -0.8zM162.9 372.4l3.9 -3.9l-3.9 -0.8zM93.7 372.1l3.9 -3.9l-3.9 -0.8zM191.6 372.9l3.9 -3.9l-3.9 -0.8zM243.9 373.3l3.9 -3.9l-3.9 -0.8zM63.5 372.0l3.9 -3.9l-3.9 -0.8zM171.3 373.0l3.9 -3.9l-3.9 -0.8zM176.9 374.2l3.9 -3.9l-3.9 -0.8zM85.4 373.8l3.9 -3.9l-3.9 -0.8zM30.5 373.4l3.9 -3.9l-3.9 -0.8zM57.2 373.7l3.9 -3.9l-3.9 -0.8zM99.1 374.3l3.9 -3.9l-3.9 -0.8zM77.4 374.2l3.9 -3.9l-3.9 -0.8zM70.4 374.2l3.9 -3.9l-3.9 -0.8zM52.3 374.1l3.9 -3.9l-3.9 -0.8zM292.7 376.5l3.9 -3.9l-3.9 -0.8zM115.3 375.2l3.9 -3.9l-3.9 -0.8zM145.8 375.4l3.9 -3.9l-3.9 -0.8zM389.3 377.5l3.9 -3.9l-3.9 -0.8zM400.3 377.9l3.9 -3.9l-3.9 -0.8zM182.0 376.7l3.9 -3.9l-3.9 -0.8zM273.2 377.7l3.9 -3.9l-3.9 -0.8zM105.2 376.5l3.9 -3.9l-3.9 -0.8zM258.0 378.0l3.9 -3.9l-3.9 -0.8zM168.8 377.7l3.9 -3.9l-3.9 -0.8zM132.6 377.5l3.9 -3.9l-3.9 -0.8zM281.8 378.7l3.9 -3.9l-3.9 -0.8zM394.7 379.8l3.9 -3.9l-3.9 -0.8zM152.5 378.4l3.9 -3.9l-3.9 -0.8zM249.6 379.2l3.9 -3.9l-3.9 -0.8zM157.6 379.9l3.9 -3.9l-3.9 -0.8zM95.5 379.5l3.9 -3.9l-3.9 -0.8zM384.1 382.1l3.9 -3.9l-3.9 -0.8zM33.4 379.6l3.9 -3.9l-3.9 -0.8zM275.7 382.0l3.9 -3.9l-3.9 -0.8zM77.3 380.6l3.9 -3.9l-3.9 -0.8zM181.0 381.5l3.9 -3.9l-3.9 -0.8zM139.8 381.3l3.9 -3.9l-3.9 -0.8zM264.0 382.4l3.9 -3.9l-3.9 -0.8zM69.9 381.0l3.9 -3.9l-3.9 -0.8zM125.1 381.4l3.9 -3.9l-3.9 -0.8zM105.7 381.3l3.9 -3.9l-3.9 -0.8zM165.2 381.8l3.9 -3.9l-3.9 -0.8zM373.8 383.6l3.9 -3.9l-3.9 -0.8zM37.5 381.0l3.9 -3.9l-3.9 -0.8zM121.1 381.7l3.9 -3.9l-3.9 -0.8zM82.8 381.5l3.9 -3.9l-3.9 -0.8zM185.0 382.4l3.9 -3.9l-3.9 -0.8zM114.4 382.0l3.9 -3.9l-3.9 -0.8zM57.3 381.6l3.9 -3.9l-3.9 -0.8zM89.1 381.9l3.9 -3.9l-3.9 -0.8zM101.3 382.1l3.9 -3.9l-3.9 -0.8zM268.0 383.4l3.9 -3.9l-3.9 -0.8zM394.5 384.7l3.9 -3.9l-3.9 -0.8zM168.8 383.6l3.9 -3.9l-3.9 -0.8zM52.6 382.9l3.9 -3.9l-3.9 -0.8zM390.0 385.8l3.9 -3.9l-3.9 -0.8zM232.8 384.8l3.9 -3.9l-3.9 -0.8zM378.5 386.2l3.9 -3.9l-3.9 -0.8zM240.6 385.3l3.9 -3.9l-3.9 -0.8zM93.9 384.5l3.9 -3.9l-3.9 -0.8zM46.0 384.6l3.9 -3.9l-3.9 -0.8zM202.1 385.9l3.9 -3.9l-3.9 -0.8zM369.3 387.4l3.9 -3.9l-3.9 -0.8zM118.8 385.6l3.9 -3.9l-3.9 -0.8zM75.4 385.4l3.9 -3.9l-3.9 -0.8zM144.2 386.0l3.9 -3.9l-3.9 -0.8zM228.3 386.7l3.9 -3.9l-3.9 -0.8zM129.6 386.0l3.9 -3.9l-3.9 -0.8zM65.2 385.6l3.9 -3.9l-3.9 -0.8zM185.0 386.7l3.9 -3.9l-3.9 -0.8zM399.7 388.5l3.9 -3.9l-3.9 -0.8zM69.7 386.1l3.9 -3.9l-3.9 -0.8zM82.0 386.3l3.9 -3.9l-3.9 -0.8zM123.7 386.7l3.9 -3.9l-3.9 -0.8zM108.1 387.0l3.9 -3.9l-3.9 -0.8zM248.9 388.5l3.9 -3.9l-3.9 -0.8zM157.1 387.8l3.9 -3.9l-3.9 -0.8zM382.8 389.8l3.9 -3.9l-3.9 -0.8zM223.2 388.9l3.9 -3.9l-3.9 -0.8zM395.6 390.8l3.9 -3.9l-3.9 -0.8zM149.4 388.9l3.9 -3.9l-3.9 -0.8zM169.3 389.1l3.9 -3.9l-3.9 -0.8zM189.7 389.3l3.9 -3.9l-3.9 -0.8zM163.5 389.2l3.9 -3.9l-3.9 -0.8zM181.1 389.3l3.9 -3.9l-3.9 -0.8zM208.3 389.6l3.9 -3.9l-3.9 -0.8zM242.6 389.9l3.9 -3.9l-3.9 -0.8zM372.4 391.2l3.9 -3.9l-3.9 -0.8zM50.0 389.0l3.9 -3.9l-3.9 -0.8zM100.8 390.0l3.9 -3.9l-3.9 -0.8zM96.5 390.1l3.9 -3.9l-3.9 -0.8zM255.5 391.4l3.9 -3.9l-3.9 -0.8zM215.5 391.3l3.9 -3.9l-3.9 -0.8zM228.8 391.7l3.9 -3.9l-3.9 -0.8zM74.5 390.5l3.9 -3.9l-3.9 -0.8zM184.4 391.6l3.9 -3.9l-3.9 -0.8zM135.4 391.3l3.9 -3.9l-3.9 -0.8zM400.3 393.4l3.9 -3.9l-3.9 -0.8zM260.7 392.4l3.9 -3.9l-3.9 -0.8zM36.7 391.2l3.9 -3.9l-3.9 -0.8zM84.7 392.0l3.9 -3.9l-3.9 -0.8zM146.0 392.6l3.9 -3.9l-3.9 -0.8zM247.4 393.5l3.9 -3.9l-3.9 -0.8zM126.4 392.6l3.9 -3.9l-3.9 -0.8zM379.3 394.6l3.9 -3.9l-3.9 -0.8zM174.3 393.0l3.9 -3.9l-3.9 -0.8zM46.7 392.1l3.9 -3.9l-3.9 -0.8zM163.7 393.4l3.9 -3.9l-3.9 -0.8zM219.7 394.1l3.9 -3.9l-3.9 -0.8zM237.0 394.3l3.9 -3.9l-3.9 -0.8zM151.8 394.0l3.9 -3.9l-3.9 -0.8zM99.6 393.8l3.9 -3.9l-3.9 -0.8zM388.6 396.2l3.9 -3.9l-3.9 -0.8zM56.6 393.9l3.9 -3.9l-3.9 -0.8zM224.7 395.2l3.9 -3.9l-3.9 -0.8zM168.4 394.8l3.9 -3.9l-3.9 -0.8zM88.5 394.5l3.9 -3.9l-3.9 -0.8zM41.4 394.2l3.9 -3.9l-3.9 -0.8zM134.0 395.3l3.9 -3.9l-3.9 -0.8zM143.0 395.5l3.9 -3.9l-3.9 -0.8zM198.3 396.1l3.9 -3.9l-3.9 -0.8zM62.3 395.1l3.9 -3.9l-3.9 -0.8zM36.5 395.1l3.9 -3.9l-3.9 -0.8zM94.5 395.7l3.9 -3.9l-3.9 -0.8zM75.5 395.7l3.9 -3.9l-3.9 -0.8zM105.1 396.2l3.9 -3.9l-3.9 -0.8zM52.0 395.8l3.9 -3.9l-3.9 -0.8zM193.9 397.0l3.9 -3.9l-3.9 -0.8zM110.2 396.5l3.9 -3.9l-3.9 -0.8zM355.3 398.5l3.9 -3.9l-3.9 -0.8zM83.0 396.5l3.9 -3.9l-3.9 -0.8zM374.9 399.0l3.9 -3.9l-3.9 -0.8zM157.2 397.4l3.9 -3.9l-3.9 -0.8zM137.6 397.7l3.9 -3.9l-3.9 -0.8zM127.0 397.7l3.9 -3.9l-3.9 -0.8zM161.7 398.0l3.9 -3.9l-3.9 -0.8zM173.3 398.3l3.9 -3.9l-3.9 -0.8zM43.7 397.6l3.9 -3.9l-3.9 -0.8zM201.6 399.0l3.9 -3.9l-3.9 -0.8zM216.4 399.2l3.9 -3.9l-3.9 -0.8zM167.7 398.9l3.9 -3.9l-3.9 -0.8zM249.9 400.0l3.9 -3.9l-3.9 -0.8zM351.6 400.9l3.9 -3.9l-3.9 -0.8zM145.4 399.3l3.9 -3.9l-3.9 -0.8zM150.1 399.5l3.9 -3.9l-3.9 -0.8zM240.8 400.5l3.9 -3.9l-3.9 -0.8zM387.5 401.8l3.9 -3.9l-3.9 -0.8zM67.4 399.4l3.9 -3.9l-3.9 -0.8zM180.6 400.3l3.9 -3.9l-3.9 -0.8zM400.2 402.3l3.9 -3.9l-3.9 -0.8zM244.9 401.2l3.9 -3.9l-3.9 -0.8zM35.2 399.6l3.9 -3.9l-3.9 -0.8zM194.3 401.0l3.9 -3.9l-3.9 -0.8zM90.4 400.4l3.9 -3.9l-3.9 -0.8zM134.3 400.9l3.9 -3.9l-3.9 -0.8zM122.6 401.0l3.9 -3.9l-3.9 -0.8zM97.1 401.0l3.9 -3.9l-3.9 -0.8zM222.5 402.0l3.9 -3.9l-3.9 -0.8zM103.9 401.1l3.9 -3.9l-3.9 -0.8zM56.4 401.1l3.9 -3.9l-3.9 -0.8zM358.3 403.4l3.9 -3.9l-3.9 -0.8zM383.2 403.8l3.9 -3.9l-3.9 -0.8zM228.3 402.8l3.9 -3.9l-3.9 -0.8zM235.8 403.1l3.9 -3.9l-3.9 -0.8zM118.4 402.2l3.9 -3.9l-3.9 -0.8zM80.5 402.2l3.9 -3.9l-3.9 -0.8zM185.7 403.0l3.9 -3.9l-3.9 -0.8zM343.6 404.4l3.9 -3.9l-3.9 -0.8zM142.0 403.0l3.9 -3.9l-3.9 -0.8zM376.0 405.3l3.9 -3.9l-3.9 -0.8zM158.1 403.8l3.9 -3.9l-3.9 -0.8zM177.8 404.1l3.9 -3.9l-3.9 -0.8zM213.5 404.5l3.9 -3.9l-3.9 -0.8zM137.0 404.0l3.9 -3.9l-3.9 -0.8zM398.0 406.2l3.9 -3.9l-3.9 -0.8zM242.1 405.5l3.9 -3.9l-3.9 -0.8zM366.7 406.5l3.9 -3.9l-3.9 -0.8zM360.9 406.5l3.9 -3.9l-3.9 -0.8zM151.6 404.9l3.9 -3.9l-3.9 -0.8zM218.8 405.6l3.9 -3.9l-3.9 -0.8zM105.4 404.8l3.9 -3.9l-3.9 -0.8zM354.1 407.2l3.9 -3.9l-3.9 -0.8zM48.7 405.0l3.9 -3.9l-3.9 -0.8zM125.2 405.8l3.9 -3.9l-3.9 -0.8zM113.9 406.4l3.9 -3.9l-3.9 -0.8zM200.1 407.1l3.9 -3.9l-3.9 -0.8zM93.7 406.4l3.9 -3.9l-3.9 -0.8zM52.9 406.1l3.9 -3.9l-3.9 -0.8zM86.4 406.7l3.9 -3.9l-3.9 -0.8zM229.2 408.1l3.9 -3.9l-3.9 -0.8zM224.4 408.2l3.9 -3.9l-3.9 -0.8zM385.4 409.4l3.9 -3.9l-3.9 -0.8zM70.6 407.1l3.9 -3.9l-3.9 -0.8zM392.8 409.8l3.9 -3.9l-3.9 -0.8zM74.7 407.5l3.9 -3.9l-3.9 -0.8zM189.2 408.4l3.9 -3.9l-3.9 -0.8zM153.5 408.4l3.9 -3.9l-3.9 -0.8zM358.7 410.2l3.9 -3.9l-3.9 -0.8zM180.2 409.0l3.9 -3.9l-3.9 -0.8zM79.4 408.4l3.9 -3.9l-3.9 -0.8zM122.9 409.1l3.9 -3.9l-3.9 -0.8zM216.9 410.0l3.9 -3.9l-3.9 -0.8zM402.3 411.7l3.9 -3.9l-3.9 -0.8zM108.6 410.0l3.9 -3.9l-3.9 -0.8zM176.3 410.7l3.9 -3.9l-3.9 -0.8zM171.2 410.8l3.9 -3.9l-3.9 -0.8zM350.2 412.4l3.9 -3.9l-3.9 -0.8zM243.5 411.7l3.9 -3.9l-3.9 -0.8zM388.5 413.0l3.9 -3.9l-3.9 -0.8zM53.0 410.6l3.9 -3.9l-3.9 -0.8zM382.8 413.3l3.9 -3.9l-3.9 -0.8zM72.0 411.0l3.9 -3.9l-3.9 -0.8zM141.4 411.8l3.9 -3.9l-3.9 -0.8zM235.6 412.7l3.9 -3.9l-3.9 -0.8zM86.7 411.6l3.9 -3.9l-3.9 -0.8zM57.5 411.4l3.9 -3.9l-3.9 -0.8zM229.2 412.9l3.9 -3.9l-3.9 -0.8zM148.7 412.3l3.9 -3.9l-3.9 -0.8zM155.8 412.4l3.9 -3.9l-3.9 -0.8zM36.0 411.7l3.9 -3.9l-3.9 -0.8zM112.7 412.3l3.9 -3.9l-3.9 -0.8zM68.0 412.0l3.9 -3.9l-3.9 -0.8zM98.4 412.6l3.9 -3.9l-3.9 -0.8zM247.7 413.8l3.9 -3.9l-3.9 -0.8zM367.9 414.9l3.9 -3.9l-3.9 -0.8zM182.2 414.5l3.9 -3.9l-3.9 -0.8zM44.6 413.6l3.9 -3.9l-3.9 -0.8zM161.4 414.5l3.9 -3.9l-3.9 -0.8zM192.0 414.9l3.9 -3.9l-3.9 -0.8zM240.6 415.4l3.9 -3.9l-3.9 -0.8zM171.1 415.1l3.9 -3.9l-3.9 -0.8zM376.7 417.2l3.9 -3.9l-3.9 -0.8zM151.9 415.7l3.9 -3.9l-3.9 -0.8zM396.0 417.7l3.9 -3.9l-3.9 -0.8zM213.3 416.3l3.9 -3.9l-3.9 -0.8zM358.2 417.5l3.9 -3.9l-3.9 -0.8zM137.1 415.8l3.9 -3.9l-3.9 -0.8zM72.9 415.6l3.9 -3.9l-3.9 -0.8zM62.9 415.6l3.9 -3.9l-3.9 -0.8zM196.6 417.0l3.9 -3.9l-3.9 -0.8zM344.1 418.5l3.9 -3.9l-3.9 -0.8zM101.6 416.7l3.9 -3.9l-3.9 -0.8zM388.3 419.3l3.9 -3.9l-3.9 -0.8zM209.2 418.0l3.9 -3.9l-3.9 -0.8zM80.7 417.3l3.9 -3.9l-3.9 -0.8zM111.2 417.6l3.9 -3.9l-3.9 -0.8zM245.1 418.7l3.9 -3.9l-3.9 -0.8zM142.1 417.9l3.9 -3.9l-3.9 -0.8zM124.8 417.9l3.9 -3.9l-3.9 -0.8zM148.0 418.1l3.9 -3.9l-3.9 -0.8zM219.6 419.1l3.9 -3.9l-3.9 -0.8zM132.6 418.4l3.9 -3.9l-3.9 -0.8zM202.9 419.2l3.9 -3.9l-3.9 -0.8zM365.5 420.7l3.9 -3.9l-3.9 -0.8zM92.0 418.7l3.9 -3.9l-3.9 -0.8zM181.8 419.4l3.9 -3.9l-3.9 -0.8zM55.8 418.7l3.9 -3.9l-3.9 -0.8zM340.6 420.9l3.9 -3.9l-3.9 -0.8zM159.8 419.6l3.9 -3.9l-3.9 -0.8zM42.5 418.8l3.9 -3.9l-3.9 -0.8zM33.9 418.8l3.9 -3.9l-3.9 -0.8zM169.6 420.0l3.9 -3.9l-3.9 -0.8zM215.4 420.6l3.9 -3.9l-3.9 -0.8zM192.2 420.4l3.9 -3.9l-3.9 -0.8zM383.1 421.9l3.9 -3.9l-3.9 -0.8zM97.8 419.9l3.9 -3.9l-3.9 -0.8zM49.6 419.7l3.9 -3.9l-3.9 -0.8zM335.0 422.7l3.9 -3.9l-3.9 -0.8zM226.6 422.1l3.9 -3.9l-3.9 -0.8zM240.5 422.3l3.9 -3.9l-3.9 -0.8zM350.7 423.2l3.9 -3.9l-3.9 -0.8zM370.4 424.0l3.9 -3.9l-3.9 -0.8zM70.6 421.7l3.9 -3.9l-3.9 -0.8zM154.0 422.4l3.9 -3.9l-3.9 -0.8zM143.3 422.4l3.9 -3.9l-3.9 -0.8zM138.7 422.4l3.9 -3.9l-3.9 -0.8zM345.7 424.0l3.9 -3.9l-3.9 -0.8zM148.2 422.6l3.9 -3.9l-3.9 -0.8zM356.2 424.3l3.9 -3.9l-3.9 -0.8zM379.8 424.5l3.9 -3.9l-3.9 -0.8zM201.8 423.4l3.9 -3.9l-3.9 -0.8zM114.4 422.9l3.9 -3.9l-3.9 -0.8zM130.3 423.1l3.9 -3.9l-3.9 -0.8zM164.5 423.4l3.9 -3.9l-3.9 -0.8zM81.8 422.8l3.9 -3.9l-3.9 -0.8zM183.7 423.6l3.9 -3.9l-3.9 -0.8zM211.6 423.9l3.9 -3.9l-3.9 -0.8zM387.7 425.7l3.9 -3.9l-3.9 -0.8zM123.8 423.7l3.9 -3.9l-3.9 -0.8zM398.2 426.2l3.9 -3.9l-3.9 -0.8zM50.8 424.0l3.9 -3.9l-3.9 -0.8zM219.0 425.7l3.9 -3.9l-3.9 -0.8zM107.2 425.1l3.9 -3.9l-3.9 -0.8zM233.2 426.1l3.9 -3.9l-3.9 -0.8zM102.7 425.2l3.9 -3.9l-3.9 -0.8zM77.2 425.1l3.9 -3.9l-3.9 -0.8zM67.9 425.5l3.9 -3.9l-3.9 -0.8zM358.0 428.3l3.9 -3.9l-3.9 -0.8zM86.4 426.8l3.9 -3.9l-3.9 -0.8zM117.9 427.7l3.9 -3.9l-3.9 -0.8zM345.8 429.5l3.9 -3.9l-3.9 -0.8zM323.3 429.4l3.9 -3.9l-3.9 -0.8zM72.1 427.4l3.9 -3.9l-3.9 -0.8zM329.0 430.1l3.9 -3.9l-3.9 -0.8zM336.2 430.2l3.9 -3.9l-3.9 -0.8zM153.3 429.0l3.9 -3.9l-3.9 -0.8zM204.5 429.6l3.9 -3.9l-3.9 -0.8zM142.5 429.1l3.9 -3.9l-3.9 -0.8zM225.2 429.9l3.9 -3.9l-3.9 -0.8zM62.8 428.7l3.9 -3.9l-3.9 -0.8zM210.6 429.9l3.9 -3.9l-3.9 -0.8zM45.4 428.7l3.9 -3.9l-3.9 -0.8zM147.6 429.6l3.9 -3.9l-3.9 -0.8zM55.1 429.0l3.9 -3.9l-3.9 -0.8zM363.5 432.0l3.9 -3.9l-3.9 -0.8zM221.3 430.9l3.9 -3.9l-3.9 -0.8zM137.6 430.2l3.9 -3.9l-3.9 -0.8zM111.5 430.2l3.9 -3.9l-3.9 -0.8zM132.3 430.5l3.9 -3.9l-3.9 -0.8zM50.1 430.2l3.9 -3.9l-3.9 -0.8zM339.9 433.5l3.9 -3.9l-3.9 -0.8zM355.2 434.3l3.9 -3.9l-3.9 -0.8zM121.1 432.6l3.9 -3.9l-3.9 -0.8zM32.0 432.1l3.9 -3.9l-3.9 -0.8zM114.3 433.1l3.9 -3.9l-3.9 -0.8zM43.7 432.8l3.9 -3.9l-3.9 -0.8zM336.3 435.9l3.9 -3.9l-3.9 -0.8zM366.9 436.2l3.9 -3.9l-3.9 -0.8zM360.6 436.3l3.9 -3.9l-3.9 -0.8zM109.6 434.9l3.9 -3.9l-3.9 -0.8zM209.1 436.0l3.9 -3.9l-3.9 -0.8zM322.4 437.0l3.9 -3.9l-3.9 -0.8zM345.1 437.8l3.9 -3.9l-3.9 -0.8zM124.5 436.1l3.9 -3.9l-3.9 -0.8zM350.9 438.0l3.9 -3.9l-3.9 -0.8zM60.7 436.3l3.9 -3.9l-3.9 -0.8zM46.9 436.9l3.9 -3.9l-3.9 -0.8zM217.5 438.5l3.9 -3.9l-3.9 -0.8zM56.8 437.4l3.9 -3.9l-3.9 -0.8zM78.8 437.8l3.9 -3.9l-3.9 -0.8zM35.6 438.0l3.9 -3.9l-3.9 -0.8zM361.3 441.7l3.9 -3.9l-3.9 -0.8zM150.9 440.0l3.9 -3.9l-3.9 -0.8zM345.5 441.9l3.9 -3.9l-3.9 -0.8zM67.0 439.9l3.9 -3.9l-3.9 -0.8zM71.5 440.6l3.9 -3.9l-3.9 -0.8zM135.4 441.4l3.9 -3.9l-3.9 -0.8zM46.0 441.2l3.9 -3.9l-3.9 -0.8zM52.4 441.4l3.9 -3.9l-3.9 -0.8zM143.8 442.4l3.9 -3.9l-3.9 -0.8zM342.2 444.1l3.9 -3.9l-3.9 -0.8zM127.5 443.1l3.9 -3.9l-3.9 -0.8zM59.4 442.9l3.9 -3.9l-3.9 -0.8zM36.5 442.8l3.9 -3.9l-3.9 -0.8zM319.7 445.2l3.9 -3.9l-3.9 -0.8zM31.6 443.0l3.9 -3.9l-3.9 -0.8zM324.5 445.8l3.9 -3.9l-3.9 -0.8zM139.2 444.5l3.9 -3.9l-3.9 -0.8zM337.8 446.9l3.9 -3.9l-3.9 -0.8zM119.3 445.3l3.9 -3.9l-3.9 -0.8zM48.5 445.0l3.9 -3.9l-3.9 -0.8zM315.7 447.9l3.9 -3.9l-3.9 -0.8zM349.5 448.8l3.9 -3.9l-3.9 -0.8zM30.7 447.0l3.9 -3.9l-3.9 -0.8zM332.4 450.1l3.9 -3.9l-3.9 -0.8zM56.0 447.9l3.9 -3.9l-3.9 -0.8zM340.2 450.2l3.9 -3.9l-3.9 -0.8zM324.3 450.5l3.9 -3.9l-3.9 -0.8zM134.6 449.2l3.9 -3.9l-3.9 -0.8zM35.8 449.2l3.9 -3.9l-3.9 -0.8zM124.9 449.9l3.9 -3.9l-3.9 -0.8zM147.3 451.7l3.9 -3.9l-3.9 -0.8zM131.1 452.4l3.9 -3.9l-3.9 -0.8zM45.0 452.0l3.9 -3.9l-3.9 -0.8zM338.6 454.6l3.9 -3.9l-3.9 -0.8zM332.1 455.1l3.9 -3.9l-3.9 -0.8zM136.1 454.8l3.9 -3.9l-3.9 -0.8zM41.1 454.3l3.9 -3.9l-3.9 -0.8zM123.2 455.2l3.9 -3.9l-3.9 -0.8zM347.4 457.0l3.9 -3.9l-3.9 -0.8zM45.9 456.3l3.9 -3.9l-3.9 -0.8zM317.3 458.5l3.9 -3.9l-3.9 -0.8zM337.6 459.0l3.9 -3.9l-3.9 -0.8zM25.1 457.5l3.9 -3.9l-3.9 -0.8zM146.1 459.1l3.9 -3.9l-3.9 -0.8zM339.9 462.4l3.9 -3.9l-3.9 -0.8zM20.4 460.4l3.9 -3.9l-3.9 -0.8zM322.2 463.2l3.9 -3.9l-3.9 -0.8zM122.5 462.3l3.9 -3.9l-3.9 -0.8zM318.3 464.2l3.9 -3.9l-3.9 -0.8zM351.4 466.0l3.9 -3.9l-3.9 -0.8zM153.8 465.0l3.9 -3.9l-3.9 -0.8zM339.5 466.5l3.9 -3.9l-3.9 -0.8zM162.5 465.2l3.9 -3.9l-3.9 -0.8zM27.7 464.6l3.9 -3.9l-3.9 -0.8zM18.6 464.6l3.9 -3.9l-3.9 -0.8zM343.3 467.4l3.9 -3.9l-3.9 -0.8zM329.9 468.1l3.9 -3.9l-3.9 -0.8zM130.0 467.2l3.9 -3.9l-3.9 -0.8zM146.7 467.9l3.9 -3.9l-3.9 -0.8zM12.2 467.1l3.9 -3.9l-3.9 -0.8zM337.3 470.3l3.9 -3.9l-3.9 -0.8zM137.4 469.0l3.9 -3.9l-3.9 -0.8zM143.0 469.6l3.9 -3.9l-3.9 -0.8zM152.7 469.7l3.9 -3.9l-3.9 -0.8zM319.6 471.7l3.9 -3.9l-3.9 -0.8zM19.3 469.7l3.9 -3.9l-3.9 -0.8zM129.0 471.3l3.9 -3.9l-3.9 -0.8zM123.9 471.9l3.9 -3.9l-3.9 -0.8zM13.1 471.0l3.9 -3.9l-3.9 -0.8zM163.5 472.4l3.9 -3.9l-3.9 -0.8zM158.1 472.6l3.9 -3.9l-3.9 -0.8zM23.2 471.7l3.9 -3.9l-3.9 -0.8zM310.9 474.5l3.9 -3.9l-3.9 -0.8zM294.9 474.5l3.9 -3.9l-3.9 -0.8zM341.8 475.0l3.9 -3.9l-3.9 -0.8zM330.2 474.9l3.9 -3.9l-3.9 -0.8zM180.1 475.2l3.9 -3.9l-3.9 -0.8zM127.4 475.1l3.9 -3.9l-3.9 -0.8zM346.9 477.5l3.9 -3.9l-3.9 -0.8zM149.0 476.4l3.9 -3.9l-3.9 -0.8zM144.9 476.4l3.9 -3.9l-3.9 -0.8zM136.3 477.1l3.9 -3.9l-3.9 -0.8zM155.2 477.3l3.9 -3.9l-3.9 -0.8zM18.0 476.3l3.9 -3.9l-3.9 -0.8zM313.3 479.6l3.9 -3.9l-3.9 -0.8zM300.1 479.7l3.9 -3.9l-3.9 -0.8zM340.1 480.1l3.9 -3.9l-3.9 -0.8zM331.8 480.3l3.9 -3.9l-3.9 -0.8zM326.4 480.3l3.9 -3.9l-3.9 -0.8zM349.9 480.7l3.9 -3.9l-3.9 -0.8zM321.4 480.5l3.9 -3.9l-3.9 -0.8zM281.2 481.7l3.9 -3.9l-3.9 -0.8zM273.3 481.8l3.9 -3.9l-3.9 -0.8zM264.7 482.1l3.9 -3.9l-3.9 -0.8zM302.9 482.7l3.9 -3.9l-3.9 -0.8zM116.1 481.5l3.9 -3.9l-3.9 -0.8zM307.4 483.4l3.9 -3.9l-3.9 -0.8zM151.6 482.2l3.9 -3.9l-3.9 -0.8zM126.4 482.0l3.9 -3.9l-3.9 -0.8zM134.1 482.1l3.9 -3.9l-3.9 -0.8zM164.6 482.7l3.9 -3.9l-3.9 -0.8zM331.3 484.2l3.9 -3.9l-3.9 -0.8zM170.2 483.1l3.9 -3.9l-3.9 -0.8zM284.6 484.1l3.9 -3.9l-3.9 -0.8zM20.0 482.9l3.9 -3.9l-3.9 -0.8zM112.8 483.8l3.9 -3.9l-3.9 -0.8zM139.7 484.6l3.9 -3.9l-3.9 -0.8zM161.4 484.9l3.9 -3.9l-3.9 -0.8zM294.6 486.0l3.9 -3.9l-3.9 -0.8zM269.0 485.9l3.9 -3.9l-3.9 -0.8zM156.7 485.1l3.9 -3.9l-3.9 -0.8zM144.6 485.3l3.9 -3.9l-3.9 -0.8zM289.1 487.0l3.9 -3.9l-3.9 -0.8zM148.9 485.9l3.9 -3.9l-3.9 -0.8zM191.5 486.4l3.9 -3.9l-3.9 -0.8zM347.0 488.6l3.9 -3.9l-3.9 -0.8zM32.1 486.8l3.9 -3.9l-3.9 -0.8zM339.3 489.3l3.9 -3.9l-3.9 -0.8zM175.1 488.0l3.9 -3.9l-3.9 -0.8zM168.5 488.0l3.9 -3.9l-3.9 -0.8zM283.2 489.2l3.9 -3.9l-3.9 -0.8zM11.7 487.2l3.9 -3.9l-3.9 -0.8zM261.8 489.3l3.9 -3.9l-3.9 -0.8zM152.4 488.4l3.9 -3.9l-3.9 -0.8zM119.2 488.4l3.9 -3.9l-3.9 -0.8zM300.3 490.4l3.9 -3.9l-3.9 -0.8zM110.6 489.2l3.9 -3.9l-3.9 -0.8zM279.4 490.9l3.9 -3.9l-3.9 -0.8zM317.2 492.5l3.9 -3.9l-3.9 -0.8zM334.5 493.1l3.9 -3.9l-3.9 -0.8zM326.0 493.1l3.9 -3.9l-3.9 -0.8zM140.0 491.8l3.9 -3.9l-3.9 -0.8zM178.2 492.3l3.9 -3.9l-3.9 -0.8zM157.7 492.4l3.9 -3.9l-3.9 -0.8zM188.0 492.9l3.9 -3.9l-3.9 -0.8zM294.2 494.0l3.9 -3.9l-3.9 -0.8zM289.2 494.1l3.9 -3.9l-3.9 -0.8zM117.0 493.2l3.9 -3.9l-3.9 -0.8zM106.3 493.4l3.9 -3.9l-3.9 -0.8zM207.2 494.4l3.9 -3.9l-3.9 -0.8zM191.9 494.4l3.9 -3.9l-3.9 -0.8zM343.2 495.8l3.9 -3.9l-3.9 -0.8zM263.4 495.3l3.9 -3.9l-3.9 -0.8zM132.1 494.4l3.9 -3.9l-3.9 -0.8zM146.0 494.6l3.9 -3.9l-3.9 -0.8zM183.3 495.0l3.9 -3.9l-3.9 -0.8zM251.6 495.6l3.9 -3.9l-3.9 -0.8zM196.6 495.2l3.9 -3.9l-3.9 -0.8zM137.3 494.7l3.9 -3.9l-3.9 -0.8zM307.1 496.1l3.9 -3.9l-3.9 -0.8zM271.7 496.0l3.9 -3.9l-3.9 -0.8zM172.5 495.5l3.9 -3.9l-3.9 -0.8zM19.9 494.6l3.9 -3.9l-3.9 -0.8zM141.4 496.0l3.9 -3.9l-3.9 -0.8zM326.9 497.7l3.9 -3.9l-3.9 -0.8zM122.3 496.3l3.9 -3.9l-3.9 -0.8zM160.8 497.0l3.9 -3.9l-3.9 -0.8zM267.5 498.0l3.9 -3.9l-3.9 -0.8zM300.5 498.3l3.9 -3.9l-3.9 -0.8zM179.0 498.2l3.9 -3.9l-3.9 -0.8zM25.8 497.0l3.9 -3.9l-3.9 -0.8zM285.2 499.1l3.9 -3.9l-3.9 -0.8zM11.2 497.2l3.9 -3.9l-3.9 -0.8zM169.9 498.8l3.9 -3.9l-3.9 -0.8zM186.8 499.1l3.9 -3.9l-3.9 -0.8zM106.3 499.1l3.9 -3.9l-3.9 -0.8zM235.5 500.2l3.9 -3.9l-3.9 -0.8zM317.2 500.9l3.9 -3.9l-3.9 -0.8zM191.4 500.0l3.9 -3.9l-3.9 -0.8zM164.4 500.2l3.9 -3.9l-3.9 -0.8zM274.8 501.1l3.9 -3.9l-3.9 -0.8zM137.1 500.0l3.9 -3.9l-3.9 -0.8zM204.5 500.7l3.9 -3.9l-3.9 -0.8zM312.5 501.5l3.9 -3.9l-3.9 -0.8zM342.8 502.1l3.9 -3.9l-3.9 -0.8zM124.9 500.6l3.9 -3.9l-3.9 -0.8zM298.9 502.7l3.9 -3.9l-3.9 -0.8zM294.7 502.7l3.9 -3.9l-3.9 -0.8zM149.0 501.8l3.9 -3.9l-3.9 -0.8zM280.7 503.3l3.9 -3.9l-3.9 -0.8zM159.8 502.5l3.9 -3.9l-3.9 -0.8zM178.2 502.9l3.9 -3.9l-3.9 -0.8zM239.9 503.4l3.9 -3.9l-3.9 -0.8zM96.5 502.3l3.9 -3.9l-3.9 -0.8zM321.7 504.4l3.9 -3.9l-3.9 -0.8zM263.2 504.3l3.9 -3.9l-3.9 -0.8zM271.4 504.4l3.9 -3.9l-3.9 -0.8zM188.3 503.9l3.9 -3.9l-3.9 -0.8zM103.4 503.2l3.9 -3.9l-3.9 -0.8zM143.5 503.7l3.9 -3.9l-3.9 -0.8zM12.9 502.7l3.9 -3.9l-3.9 -0.8zM250.0 504.7l3.9 -3.9l-3.9 -0.8zM198.4 504.5l3.9 -3.9l-3.9 -0.8zM91.9 503.9l3.9 -3.9l-3.9 -0.8zM128.2 504.3l3.9 -3.9l-3.9 -0.8zM108.0 504.4l3.9 -3.9l-3.9 -0.8zM337.5 506.4l3.9 -3.9l-3.9 -0.8zM120.4 505.4l3.9 -3.9l-3.9 -0.8zM254.6 506.7l3.9 -3.9l-3.9 -0.8zM134.1 506.1l3.9 -3.9l-3.9 -0.8zM276.8 507.3l3.9 -3.9l-3.9 -0.8zM155.1 506.5l3.9 -3.9l-3.9 -0.8zM163.2 506.7l3.9 -3.9l-3.9 -0.8zM209.8 507.1l3.9 -3.9l-3.9 -0.8zM148.8 506.7l3.9 -3.9l-3.9 -0.8zM318.1 508.1l3.9 -3.9l-3.9 -0.8zM307.5 508.1l3.9 -3.9l-3.9 -0.8zM27.2 505.8l3.9 -3.9l-3.9 -0.8zM190.8 507.2l3.9 -3.9l-3.9 -0.8zM282.5 508.6l3.9 -3.9l-3.9 -0.8zM240.9 508.4l3.9 -3.9l-3.9 -0.8zM266.6 509.4l3.9 -3.9l-3.9 -0.8zM172.8 508.9l3.9 -3.9l-3.9 -0.8zM328.9 510.2l3.9 -3.9l-3.9 -0.8zM118.0 508.6l3.9 -3.9l-3.9 -0.8zM339.7 510.4l3.9 -3.9l-3.9 -0.8zM300.9 510.4l3.9 -3.9l-3.9 -0.8zM14.6 508.3l3.9 -3.9l-3.9 -0.8zM129.6 509.3l3.9 -3.9l-3.9 -0.8zM194.1 510.3l3.9 -3.9l-3.9 -0.8zM260.0 510.9l3.9 -3.9l-3.9 -0.8zM166.5 510.4l3.9 -3.9l-3.9 -0.8zM200.8 511.0l3.9 -3.9l-3.9 -0.8zM401.4 513.0l3.9 -3.9l-3.9 -0.8zM23.9 510.2l3.9 -3.9l-3.9 -0.8zM181.5 511.5l3.9 -3.9l-3.9 -0.8zM156.9 511.4l3.9 -3.9l-3.9 -0.8zM18.7 510.6l3.9 -3.9l-3.9 -0.8zM285.1 512.9l3.9 -3.9l-3.9 -0.8zM95.9 511.6l3.9 -3.9l-3.9 -0.8zM322.6 513.8l3.9 -3.9l-3.9 -0.8zM293.5 513.5l3.9 -3.9l-3.9 -0.8zM135.4 512.4l3.9 -3.9l-3.9 -0.8zM268.7 513.5l3.9 -3.9l-3.9 -0.8z" fill="#b9bcc1" opacity="0.8"/><g transform="translate(207.7 313.7)">
<path d="M-19 0H-5M5 0H19M0 -19V-5M0 5V19" stroke="#1a1a1a" stroke-width="1.2"/>
<circle r="10" fill="none" stroke="#ffffff" stroke-width="1.5"/>
<circle r="10" fill="none" stroke="#e0202a" stroke-width="1.5" stroke-dasharray="3.927 3.927"/>
<circle r="2.2" fill="#f09a2a" stroke="#7a3a00" stroke-width=".5"/></g></svg>
<div style="left:0;top:0;width:418px;height:25px;background:rgba(48,48,48,.78)"></div>
<div class="t " style="top:6.0px;left:16.0px;">View</div>
<div class="t " style="top:6.0px;left:57.0px;">Select</div>
<div class="t " style="top:6.0px;left:104.0px;">Add</div>
<div class="t " style="top:6.0px;left:141.0px;">Object</div>
<div class="btn" style="left:199px;top:3.1000000000000014px;width:77px;height:19px"></div>
<svg style="left:203px;top:5px" width="18" height="16" viewBox="0 0 18 16"><g fill="none" stroke="#e6e6e6" stroke-width="1.1" stroke-linecap="round" stroke-linejoin="round">
<path d="M3.5 12.5V1.5M1.5 3.5L3.5 1.5L5.5 3.5M3.5 12.5H14.5M12.5 10.5L14.5 12.5L12.5 14.5M4.5 11.5L10.5 5.5M7.8 5.5H10.5V8.2"/><circle cx="3.5" cy="12.5" r="1.5" fill="#282828"/></g></svg>
<div class="t " style="top:6.0px;left:225.5px;">Global</div>
<svg style="left:265.5px;top:10.8px" width="9" height="5.5" viewBox="-1 -1 9 5.5"><path d="M0 0 L3.5 3.5 L7 0" fill="none" stroke="#e6e6e6" stroke-width="1.2" stroke-linecap="round" stroke-linejoin="round"/></svg>
<div class="btn" style="left:282.5px;top:3.1000000000000014px;width:31px;height:19px"></div>
<svg style="left:285.5px;top:5px" width="16" height="16" viewBox="0 0 16 16"><g fill="none" stroke="#e6e6e6" stroke-width="1.3">
<circle cx="9.6" cy="5.6" r="3.6"/><circle cx="5.6" cy="10.2" r="3.6"/></g><circle cx="7.6" cy="7.9" r="1.3" fill="#e6e6e6"/></svg>
<svg style="left:303.0px;top:10.8px" width="9" height="5.5" viewBox="-1 -1 9 5.5"><path d="M0 0 L3.5 3.5 L7 0" fill="none" stroke="#e6e6e6" stroke-width="1.2" stroke-linecap="round" stroke-linejoin="round"/></svg>
<div style="left:319.5px;top:3.1000000000000014px;width:19.5px;height:19px;background:#545454;border-radius:4px 0 0 4px"></div>
<div style="left:339px;top:3.1000000000000014px;width:31px;height:19px;background:#282828;border:1px solid #3d3d3d;border-left:none;border-radius:0 4px 4px 0"></div>
<svg style="left:321px;top:5px" width="16" height="16" viewBox="0 0 16 16"><path d="M2.5 6.5L5 3.8A4.6 4.6 0 0 1 12.6 9.2L9.4 13.5M5.6 8.6L7.4 6.6A1.7 1.7 0 0 1 10 8.6L7.6 11.6" fill="none" stroke="#9a9a9a" stroke-width="1.3" stroke-linecap="round"/></svg>
<svg style="left:341px;top:5px" width="16" height="16" viewBox="0 0 16 16"><path d="M1.5 7.5V13.5M5.5 8.5V12.5M9.5 8.5V12.5M13.5 7.5V13.5M1.5 10.5H13.5" fill="none" stroke="#e6e6e6" stroke-width="1.1"/><rect x="11" y="1.2" width="3.6" height="3.6" fill="#e6e6e6"/></svg>
<svg style="left:359.5px;top:10.8px" width="9" height="5.5" viewBox="-1 -1 9 5.5"><path d="M0 0 L3.5 3.5 L7 0" fill="none" stroke="#e6e6e6" stroke-width="1.2" stroke-linecap="round" stroke-linejoin="round"/></svg>
<div style="left:376.5px;top:3.1000000000000014px;width:19px;height:19px;background:#545454;border-radius:4px 0 0 4px"></div>
<div style="left:395.5px;top:3.1000000000000014px;width:30px;height:19px;background:#333333;border-top:1px solid #3d3d3d;border-bottom:1px solid #3d3d3d"></div>
<svg style="left:378px;top:5px" width="16" height="16" viewBox="0 0 16 16"><circle cx="8" cy="8" r="6" fill="none" stroke="#9a9a9a" stroke-width="1.1"/><circle cx="8" cy="8" r="2" fill="#e6e6e6"/></svg>
<svg style="left:398px;top:5px" width="20" height="16" viewBox="0 0 20 16"><path d="M0.5 13.5C5.5 13.5 5.5 2.5 9 2.5S12.5 13.5 17.5 13.5" fill="none" stroke="#7c7c7c" stroke-width="1.1"/></svg>
<div class="t ov" style="top:35.2px;left:9.4px;color:#fff;letter-spacing:-0.05px;">User Perspective</div>
<div class="t ov" style="top:53.0px;left:9.4px;color:#fff;letter-spacing:0.21px;">(1) Collection | Cube</div>
<div style="left:-4px;top:35px;width:11px;height:22px;background:rgba(40,40,40,.6);border-radius:5px"></div>
<svg style="left:-0.5px;top:42.0px" width="5.5" height="8" viewBox="-1 -1 5.5 8"><path d="M0 0 L3.5 3.0 L0 6" fill="none" stroke="#b0b0b0" stroke-width="1.2" stroke-linecap="round" stroke-linejoin="round"/></svg>
<div style="left:410px;top:35px;width:14px;height:22px;background:rgba(40,40,40,.6);border-radius:5px"></div>
<svg style="left:411.5px;top:42px" width="6" height="8"><path d="M4.5 0.8L1 4L4.5 7.2" fill="none" stroke="#b0b0b0" stroke-width="1.1"/></svg>
<div style="left:0;top:0;width:418px;height:504px;border:1px solid #4a4a4a;border-radius:5px;opacity:.6"></div>
</div>
<div class="area" style="left:1px;top:533px;width:418px;height:451px;background:#303030">
<div style="left:0.0px;top:26.5px;width:157.6px;height:400.3px;background:#282828"></div>
<div style="left:0.0px;top:26.5px;width:152.0px;height:30.0px;background:#303030"></div>
<div style="left:0.0px;top:89.2px;width:152.0px;height:23.7px;background:#303030"></div>
<div style="left:152.0px;top:29.0px;width:3.0px;height:378.5px;background:#424242;border-radius:2px"></div>
<div style="left:7.6px;top:3.6px;width:31.0px;height:19.3px;background:#282828;border:1px solid #3d3d3d;border-radius:4px"></div>
<svg style="left:10.3px;top:5.3px" width="16.5" height="16" viewBox="0 0 16.5 16"><path d="M1 1H15.5V15H1Z" fill="none" stroke="#e6e6e6" stroke-width="1" stroke-dasharray="3 1.5"/><path d="M5.5 0.5V15.5M0.5 10H16" stroke="#e6e6e6" stroke-width="3" fill="none"/></svg>
<svg style="left:28.9px;top:11.3px" width="7.5" height="5" viewBox="-1 -1 7.5 5"><path d="M0 0 L2.75 3 L5.5 0" fill="none" stroke="#e6e6e6" stroke-width="1.2" stroke-linecap="round" stroke-linejoin="round"/></svg>
<div style="left:44.2px;top:3.6px;width:101.4px;height:19.3px;background:#282828;border:1px solid #3d3d3d;border-radius:4px"></div>
<div class="t " style="top:6.2px;left:52.4px;">Evaluated</div>
<svg style="left:135.0px;top:11.2px" width="8" height="5.2" viewBox="-1 -1 8 5.2"><path d="M0 0 L3.0 3.2 L6 0" fill="none" stroke="#e6e6e6" stroke-width="1.2" stroke-linecap="round" stroke-linejoin="round"/></svg>
<svg style="left:153.8px;top:6.0px" width="14" height="14" viewBox="0 0 14 14"><path d="M1 4.5V1H4.5M9.5 1H13V4.5M13 9.5V13H9.5M4.5 13H1V9.5" fill="none" stroke="#e6e6e6" stroke-width="1.1"/><rect x="3.6" y="3.6" width="6.8" height="6.8" fill="#e6e6e6"/></svg>
<div class="t " style="top:6.2px;left:177.0px;">Cube</div>
<svg style="left:221.5px;top:5.0px" width="16" height="16" viewBox="0 0 16 16"><g fill="none" stroke="#b4b4b4" stroke-width="1.1" stroke-linejoin="round" stroke-linecap="round"><path d="M9.6 1.6L14.2 6.2L12.6 6.9L10.4 9.1L10 12L4 6L6.9 5.6L9.1 3.4Z"/><path d="M7 9L1.6 14.4"/></g></svg>
<div style="left:371.8px;top:4.2px;width:19.0px;height:17.8px;background:#454545;border-radius:4px 0 0 4px"></div>
<svg style="left:375.0px;top:6.5px" width="14" height="14" viewBox="0 0 14 14"><path d="M2 1.5L12 6.5L7.4 7.6L6 12.5Z" fill="#777"/></svg>
<div style="left:390.8px;top:4.2px;width:19.2px;height:17.8px;background:#4772b3;border-radius:0 4px 4px 0"></div>
<svg style="left:392.8px;top:5.6px" width="15" height="15" viewBox="0 0 15 15"><path d="M1.5 1.5H13.5L9 7.5V13.5L6 11.5V7.5Z" fill="none" stroke="#fff" stroke-width="1.2" stroke-linejoin="round"/></svg>
<svg style="left:12.4px;top:39.6px" width="10" height="6.2" viewBox="-1 -1 10 6.2"><path d="M0 0 L4.0 4.2 L8 0" fill="none" stroke="#c8c8c8" stroke-width="1.2" stroke-linecap="round" stroke-linejoin="round"/></svg>
<div class="t " style="top:36.0px;left:28.3px;">Geometry</div>
<div style="left:8.0px;top:63.9px;width:141.0px;height:17.1px;background:#4772b3;border-radius:3px"></div>
<svg style="left:28.5px;top:65.2px" width="15" height="15" viewBox="0 0 15 15"><circle cx="5" cy="5.2" r="4" fill="#a9c0e3"/><circle cx="7.5" cy="10" r="3.6" fill="#93b0dc"/><path d="M10 1.5L14.2 9.5H5.8Z" fill="#e8eef8"/></svg>
<div class="t " style="top:65.7px;left:52.8px;">(Geometry)</div>
<svg style="left:12.4px;top:95.6px" width="10" height="6.2" viewBox="-1 -1 10 6.2"><path d="M0 0 L4.0 4.2 L8 0" fill="none" stroke="#c8c8c8" stroke-width="1.2" stroke-linecap="round" stroke-linejoin="round"/></svg>
<div class="t " style="top:92.0px;left:28.3px;">Domain</div>
<div style="left:20.0px;top:140.0px;width:1.0px;height:88.0px;background:#4a4a4a"></div>
<div style="left:20.0px;top:250.0px;width:1.0px;height:44.0px;background:#4a4a4a"></div>
<div style="left:20.0px;top:316.0px;width:1.0px;height:22.0px;background:#4a4a4a"></div>
<div style="left:20.0px;top:360.0px;width:1.0px;height:22.0px;background:#4a4a4a"></div>
<svg style="left:14.6px;top:126.3px" width="9.5" height="6" viewBox="-1 -1 9.5 6"><path d="M0 0 L3.75 4 L7.5 0" fill="none" stroke="#c8c8c8" stroke-width="1.2" stroke-linecap="round" stroke-linejoin="round"/></svg>
<svg style="left:29.0px;top:121.8px" width="14" height="14" viewBox="0 0 14 14"><g fill="none" stroke="#e6e6e6" stroke-width="1.1"><path d="M3 3H11L7 12Z"/><rect x="1.2" y="1.2" width="3" height="3" fill="#282828"/><rect x="9.8" y="1.2" width="3" height="3" fill="#282828"/><rect x="5.5" y="10.3" width="3" height="3" fill="#282828"/></g></svg>
<div class="t " style="top:121.8px;left:52.2px;letter-spacing:-0.19px;">Mesh</div>
<div style="left:8.0px;top:142.3px;width:141.0px;height:17.0px;background:#4772b3;border-radius:3px"></div>
<svg style="left:43.0px;top:143.8px" width="14" height="14" viewBox="0 0 14 14"><path d="M3.5 3.5V2.5A1 1 0 0 1 4.5 1.5H12.5V9.5L9.5 12.5H4.5A1 1 0 0 1 3.5 11.5V9.8" fill="none" stroke="#e6e6e6" stroke-width="1.1"/><rect x="0.8" y="4.6" width="4" height="4" fill="#e6e6e6"/></svg>
<div class="t " style="top:143.8px;right:273.3px;color:#e6e6e6;">10.0K</div>
<div class="t " style="top:143.8px;left:66.1px;letter-spacing:0.07px;">Vertex</div>
<svg style="left:43.0px;top:165.8px" width="14" height="14" viewBox="0 0 14 14"><path d="M3.5 12.5V3.5A2 2 0 0 1 5.5 1.5H12.5V9.5L9.5 12.5Z" fill="none" stroke="#e6e6e6" stroke-width="1.1"/><rect x="5.2" y="3.4" width="3" height="9.2" fill="#e6e6e6"/></svg>
<div class="t " style="top:165.8px;right:273.3px;color:#989898;">19.8K</div>
<div class="t " style="top:165.8px;left:66.1px;letter-spacing:-0.07px;">Edge</div>
<svg style="left:43.0px;top:187.8px" width="14" height="14" viewBox="0 0 14 14"><path d="M4.5 3.5V2.5A1 1 0 0 1 5.5 1.5H12.5V8.5L10.5 10.5" fill="none" stroke="#e6e6e6" stroke-width="1.1"/><rect x="1.2" y="4.2" width="8.6" height="8.6" fill="#e6e6e6"/></svg>
<div class="t " style="top:187.8px;right:273.3px;color:#989898;">9.8K</div>
<div class="t " style="top:187.8px;left:66.1px;letter-spacing:-0.25px;">Face</div>
<svg style="left:43.0px;top:209.8px" width="14" height="14" viewBox="0 0 14 14"><path d="M3.5 6.5V3.5A2 2 0 0 1 5.5 1.5H12.5V9.5L9.5 12.5H7.5" fill="none" stroke="#e6e6e6" stroke-width="1.1"/><path d="M1 8H5.5V12.8H1Z" fill="#e6e6e6"/></svg>
<div class="t " style="top:209.8px;right:273.3px;color:#989898;">39.2K</div>
<div class="t " style="top:209.8px;left:66.1px;letter-spacing:-0.13px;">Face Corner</div>
<svg style="left:14.6px;top:236.3px" width="9.5" height="6" viewBox="-1 -1 9.5 6"><path d="M0 0 L3.75 4 L7.5 0" fill="none" stroke="#c8c8c8" stroke-width="1.2" stroke-linecap="round" stroke-linejoin="round"/></svg>
<svg style="left:29.0px;top:231.8px" width="14" height="14" viewBox="0 0 14 14"><g fill="none" stroke="#e6e6e6" stroke-width="1.1"><path d="M3.5 2.5H8.5A3.8 3.8 0 0 1 8.5 10.5H5"/><circle cx="2.8" cy="2.6" r="1.5"/><circle cx="3.4" cy="11" r="1.5"/></g></svg>
<div class="t " style="top:231.8px;left:52.2px;letter-spacing:-0.09px;">Curve</div>
<svg style="left:43.0px;top:253.8px" width="14" height="14" viewBox="0 0 14 14"><g fill="none" stroke="#e6e6e6" stroke-width="1.1"><circle cx="7" cy="8.5" r="4"/><path d="M3 2.5H11"/><circle cx="2.2" cy="2.5" r="1.2" fill="#282828"/><circle cx="11.8" cy="2.5" r="1.2" fill="#282828"/></g></svg>
<div class="t " style="top:253.8px;right:273.3px;color:#989898;">0</div>
<div class="t " style="top:253.8px;left:66.1px;letter-spacing:0.21px;">Control Point</div>
<svg style="left:43.0px;top:275.8px" width="14" height="14" viewBox="0 0 14 14"><g fill="none" stroke="#e6e6e6" stroke-width="1.1"><path d="M1.5 12.5L12 2M8.5 2H12V5.5M1.5 8.5Q5 8.5 5.5 12.5"/></g></svg>
<div class="t " style="top:275.8px;right:273.3px;color:#989898;">0</div>
<div class="t " style="top:275.8px;left:66.1px;letter-spacing:0.09px;">Spline</div>
<svg style="left:14.6px;top:302.3px" width="9.5" height="6" viewBox="-1 -1 9.5 6"><path d="M0 0 L3.75 4 L7.5 0" fill="none" stroke="#c8c8c8" stroke-width="1.2" stroke-linecap="round" stroke-linejoin="round"/></svg>
<svg style="left:29.0px;top:297.8px" width="14" height="14" viewBox="0 0 14 14"><g fill="none" stroke="#e6e6e6" stroke-width="1.1"><path d="M2.8 10C3 5.5 6 3.4 10 2.8"/><ellipse cx="8.2" cy="8.8" rx="4" ry="2.9" transform="rotate(-18 8.2 8.8)"/><rect x="1" y="10" width="3.2" height="3.2" fill="#282828"/><rect x="10" y="0.8" width="3.2" height="3.2" fill="#282828"/></g></svg>
<div class="t " style="top:297.8px;left:52.2px;letter-spacing:-0.17px;">Grease Pencil</div>
<svg style="left:43.0px;top:319.8px" width="14" height="14" viewBox="0 0 14 14"><path d="M1.5 2.5H9.5L12.5 5.5V12.5H1.5Z" fill="none" stroke="#e6e6e6" stroke-width="1.1"/><path d="M3.5 10.5H10.5" stroke="#e6e6e6" stroke-width="1" stroke-dasharray="1.6 1"/></svg>
<div class="t " style="top:319.8px;right:273.3px;color:#989898;">0</div>
<div class="t " style="top:319.8px;left:66.1px;letter-spacing:-0.28px;">Layer</div>
<svg style="left:14.6px;top:346.3px" width="9.5" height="6" viewBox="-1 -1 9.5 6"><path d="M0 0 L3.75 4 L7.5 0" fill="none" stroke="#c8c8c8" stroke-width="1.2" stroke-linecap="round" stroke-linejoin="round"/></svg>
<svg style="left:29.0px;top:341.8px" width="14" height="14" viewBox="0 0 14 14"><g fill="none" stroke="#e6e6e6" stroke-width="1.1"><circle cx="3.4" cy="3" r="2"/><circle cx="3.4" cy="10.6" r="2"/><circle cx="10.4" cy="7.2" r="2"/></g></svg>
<div class="t " style="top:341.8px;left:52.2px;letter-spacing:0.18px;">Point Cloud</div>
<svg style="left:43.0px;top:363.8px" width="14" height="14" viewBox="0 0 14 14"><circle cx="3.6" cy="3.6" r="2.6" fill="#e6e6e6"/><g fill="none" stroke="#9a9a9a" stroke-width="1"><circle cx="4" cy="10.8" r="2"/><circle cx="10.2" cy="7.8" r="2"/></g></svg>
<div class="t " style="top:363.8px;right:273.3px;color:#989898;">1.5K</div>
<div class="t " style="top:363.8px;left:66.1px;letter-spacing:0.17px;">Point</div>
<svg style="left:29.0px;top:385.8px" width="14" height="14" viewBox="0 0 14 14"><path d="M4 12.5A2.6 2.6 0 0 1 2.6 7.8A3 3 0 0 1 5.6 3.6A3.2 3.2 0 0 1 11 4.8A2.8 2.8 0 0 1 12.4 9.6A2.4 2.4 0 0 1 9 12.2Q7 12.9 6.5 12A2.6 2.6 0 0 1 4 12.5ZM5.6 3.6Q6 6.2 8.6 6.4" fill="none" stroke="#e6e6e6" stroke-width="1.1"/></svg>
<div class="t " style="top:385.8px;left:52.2px;letter-spacing:0.12px;">Volume Grids</div>
<div class="t " style="top:385.8px;right:273.3px;color:#989898;">0</div>
<svg style="left:29.0px;top:407.8px" width="14" height="14" viewBox="0 0 14 14"><path d="M6.5 0.5V14M0.5 7.5H13.5M2.5 11.5L9.5 4.5" fill="none" stroke="#e6e6e6" stroke-width="1"/></svg>
<div class="t " style="top:407.8px;left:52.2px;letter-spacing:0.25px;">Instances</div>
<div class="t " style="top:407.8px;right:273.3px;color:#989898;">0</div>
<div style="left:157.6px;top:26.5px;width:260.4px;height:20.0px;background:#2d2d2d"></div>
<div style="left:157.6px;top:46.8px;width:44.0px;height:20.0px;background:#2c2c2c"></div>
<div style="left:201.6px;top:46.8px;width:179.8px;height:20.0px;background:#232323"></div>
<div style="left:381.4px;top:46.8px;width:36.6px;height:20.0px;background:#2f2f2f"></div>
<div style="left:157.6px;top:66.8px;width:44.0px;height:20.0px;background:#303030"></div>
<div style="left:201.6px;top:66.8px;width:179.8px;height:20.0px;background:#282828"></div>
<div style="left:381.4px;top:66.8px;width:36.6px;height:20.0px;background:#2f2f2f"></div>
<div style="left:157.6px;top:86.8px;width:44.0px;height:20.0px;background:#2c2c2c"></div>
<div style="left:201.6px;top:86.8px;width:179.8px;height:20.0px;background:#232323"></div>
<div style="left:381.4px;top:86.8px;width:36.6px;height:20.0px;background:#2f2f2f"></div>
<div style="left:157.6px;top:106.8px;width:44.0px;height:20.0px;background:#303030"></div>
<div style="left:201.6px;top:106.8px;width:179.8px;height:20.0px;background:#282828"></div>
<div style="left:381.4px;top:106.8px;width:36.6px;height:20.0px;background:#2f2f2f"></div>
<div style="left:157.6px;top:126.8px;width:44.0px;height:20.0px;background:#2c2c2c"></div>
<div style="left:201.6px;top:126.8px;width:179.8px;height:20.0px;background:#232323"></div>
<div style="left:381.4px;top:126.8px;width:36.6px;height:20.0px;background:#2f2f2f"></div>
<div style="left:157.6px;top:146.8px;width:44.0px;height:20.0px;background:#303030"></div>
<div style="left:201.6px;top:146.8px;width:179.8px;height:20.0px;background:#282828"></div>
<div style="left:381.4px;top:146.8px;width:36.6px;height:20.0px;background:#2f2f2f"></div>
<div style="left:157.6px;top:166.8px;width:44.0px;height:20.0px;background:#2c2c2c"></div>
<div style="left:201.6px;top:166.8px;width:179.8px;height:20.0px;background:#232323"></div>
<div style="left:381.4px;top:166.8px;width:36.6px;height:20.0px;background:#2f2f2f"></div>
<div style="left:157.6px;top:186.8px;width:44.0px;height:20.0px;background:#303030"></div>
<div style="left:201.6px;top:186.8px;width:179.8px;height:20.0px;background:#282828"></div>
<div style="left:381.4px;top:186.8px;width:36.6px;height:20.0px;background:#2f2f2f"></div>
<div style="left:157.6px;top:206.8px;width:44.0px;height:20.0px;background:#2c2c2c"></div>
<div style="left:201.6px;top:206.8px;width:179.8px;height:20.0px;background:#232323"></div>
<div style="left:381.4px;top:206.8px;width:36.6px;height:20.0px;background:#2f2f2f"></div>
<div style="left:157.6px;top:226.8px;width:44.0px;height:20.0px;background:#303030"></div>
<div style="left:201.6px;top:226.8px;width:179.8px;height:20.0px;background:#282828"></div>
<div style="left:381.4px;top:226.8px;width:36.6px;height:20.0px;background:#2f2f2f"></div>
<div style="left:157.6px;top:246.8px;width:44.0px;height:20.0px;background:#2c2c2c"></div>
<div style="left:201.6px;top:246.8px;width:179.8px;height:20.0px;background:#232323"></div>
<div style="left:381.4px;top:246.8px;width:36.6px;height:20.0px;background:#2f2f2f"></div>
<div style="left:157.6px;top:266.8px;width:44.0px;height:20.0px;background:#303030"></div>
<div style="left:201.6px;top:266.8px;width:179.8px;height:20.0px;background:#282828"></div>
<div style="left:381.4px;top:266.8px;width:36.6px;height:20.0px;background:#2f2f2f"></div>
<div style="left:157.6px;top:286.8px;width:44.0px;height:20.0px;background:#2c2c2c"></div>
<div style="left:201.6px;top:286.8px;width:179.8px;height:20.0px;background:#232323"></div>
<div style="left:381.4px;top:286.8px;width:36.6px;height:20.0px;background:#2f2f2f"></div>
<div style="left:157.6px;top:306.8px;width:44.0px;height:20.0px;background:#303030"></div>
<div style="left:201.6px;top:306.8px;width:179.8px;height:20.0px;background:#282828"></div>
<div style="left:381.4px;top:306.8px;width:36.6px;height:20.0px;background:#2f2f2f"></div>
<div style="left:157.6px;top:326.8px;width:44.0px;height:20.0px;background:#2c2c2c"></div>
<div style="left:201.6px;top:326.8px;width:179.8px;height:20.0px;background:#232323"></div>
<div style="left:381.4px;top:326.8px;width:36.6px;height:20.0px;background:#2f2f2f"></div>
<div style="left:157.6px;top:346.8px;width:44.0px;height:20.0px;background:#303030"></div>
<div style="left:201.6px;top:346.8px;width:179.8px;height:20.0px;background:#282828"></div>
<div style="left:381.4px;top:346.8px;width:36.6px;height:20.0px;background:#2f2f2f"></div>
<div style="left:157.6px;top:366.8px;width:44.0px;height:20.0px;background:#2c2c2c"></div>
<div style="left:201.6px;top:366.8px;width:179.8px;height:20.0px;background:#232323"></div>
<div style="left:381.4px;top:366.8px;width:36.6px;height:20.0px;background:#2f2f2f"></div>
<div style="left:157.6px;top:386.8px;width:44.0px;height:20.0px;background:#303030"></div>
<div style="left:201.6px;top:386.8px;width:179.8px;height:20.0px;background:#282828"></div>
<div style="left:381.4px;top:386.8px;width:36.6px;height:20.0px;background:#2f2f2f"></div>
<div style="left:157.6px;top:406.8px;width:44.0px;height:20.2px;background:#2c2c2c"></div>
<div style="left:201.6px;top:406.8px;width:179.8px;height:20.2px;background:#232323"></div>
<div style="left:381.4px;top:406.8px;width:36.6px;height:20.2px;background:#2f2f2f"></div>
<div style="left:157.6px;top:46.3px;width:223.8px;height:1.0px;background:#1a1a1a"></div>
<div style="left:201.1px;top:26.5px;width:1.0px;height:400.3px;background:#1f1f1f"></div>
<div style="left:380.9px;top:26.5px;width:1.0px;height:400.3px;background:#262626"></div>
<div class="t " style="top:29.3px;left:189.9px;width:200px;text-align:center;color:#c4c4c4;">position</div>
<div class="t " style="top:50.3px;right:220.2px;color:#d2d2d2;">0</div>
<div class="t " style="top:50.3px;right:159.2px;color:#d2d2d2;letter-spacing:0.60px;margin-right:-0.60px;">-2.500</div>
<div class="t " style="top:50.3px;right:100.4px;color:#d2d2d2;letter-spacing:0.60px;margin-right:-0.60px;">-2.500</div>
<div class="t " style="top:50.3px;right:41.1px;color:#d2d2d2;letter-spacing:0.29px;margin-right:-0.29px;">0.000</div>
<div class="t " style="top:70.3px;right:220.2px;color:#d2d2d2;">1</div>
<div class="t " style="top:70.3px;right:159.2px;color:#d2d2d2;letter-spacing:0.60px;margin-right:-0.60px;">-2.500</div>
<div class="t " style="top:70.3px;right:100.4px;color:#d2d2d2;letter-spacing:0.60px;margin-right:-0.60px;">-2.449</div>
<div class="t " style="top:70.3px;right:41.1px;color:#d2d2d2;letter-spacing:0.29px;margin-right:-0.29px;">0.000</div>
<div class="t " style="top:90.3px;right:220.2px;color:#d2d2d2;">2</div>
<div class="t " style="top:90.3px;right:159.2px;color:#d2d2d2;letter-spacing:0.60px;margin-right:-0.60px;">-2.500</div>
<div class="t " style="top:90.3px;right:100.4px;color:#d2d2d2;letter-spacing:0.60px;margin-right:-0.60px;">-2.399</div>
<div class="t " style="top:90.3px;right:41.1px;color:#d2d2d2;letter-spacing:0.29px;margin-right:-0.29px;">0.000</div>
<div class="t " style="top:110.3px;right:220.2px;color:#d2d2d2;">3</div>
<div class="t " style="top:110.3px;right:159.2px;color:#d2d2d2;letter-spacing:0.60px;margin-right:-0.60px;">-2.500</div>
<div class="t " style="top:110.3px;right:100.4px;color:#d2d2d2;letter-spacing:0.60px;margin-right:-0.60px;">-2.348</div>
<div class="t " style="top:110.3px;right:41.1px;color:#d2d2d2;letter-spacing:0.29px;margin-right:-0.29px;">0.000</div>
<div class="t " style="top:130.3px;right:220.2px;color:#d2d2d2;">4</div>
<div class="t " style="top:130.3px;right:159.2px;color:#d2d2d2;letter-spacing:0.60px;margin-right:-0.60px;">-2.500</div>
<div class="t " style="top:130.3px;right:100.4px;color:#d2d2d2;letter-spacing:0.60px;margin-right:-0.60px;">-2.298</div>
<div class="t " style="top:130.3px;right:41.1px;color:#d2d2d2;letter-spacing:0.29px;margin-right:-0.29px;">0.000</div>
<div class="t " style="top:150.3px;right:220.2px;color:#d2d2d2;">5</div>
<div class="t " style="top:150.3px;right:159.2px;color:#d2d2d2;letter-spacing:0.60px;margin-right:-0.60px;">-2.500</div>
<div class="t " style="top:150.3px;right:100.4px;color:#d2d2d2;letter-spacing:0.60px;margin-right:-0.60px;">-2.247</div>
<div class="t " style="top:150.3px;right:41.1px;color:#d2d2d2;letter-spacing:0.29px;margin-right:-0.29px;">0.000</div>
<div class="t " style="top:170.3px;right:220.2px;color:#d2d2d2;">6</div>
<div class="t " style="top:170.3px;right:159.2px;color:#d2d2d2;letter-spacing:0.60px;margin-right:-0.60px;">-2.500</div>
<div class="t " style="top:170.3px;right:100.4px;color:#d2d2d2;letter-spacing:0.60px;margin-right:-0.60px;">-2.197</div>
<div class="t " style="top:170.3px;right:41.1px;color:#d2d2d2;letter-spacing:0.29px;margin-right:-0.29px;">0.000</div>
<div class="t " style="top:190.3px;right:220.2px;color:#d2d2d2;">7</div>
<div class="t " style="top:190.3px;right:159.2px;color:#d2d2d2;letter-spacing:0.60px;margin-right:-0.60px;">-2.500</div>
<div class="t " style="top:190.3px;right:100.4px;color:#d2d2d2;letter-spacing:0.60px;margin-right:-0.60px;">-2.146</div>
<div class="t " style="top:190.3px;right:41.1px;color:#d2d2d2;letter-spacing:0.29px;margin-right:-0.29px;">0.000</div>
<div class="t " style="top:210.3px;right:220.2px;color:#d2d2d2;">8</div>
<div class="t " style="top:210.3px;right:159.2px;color:#d2d2d2;letter-spacing:0.60px;margin-right:-0.60px;">-2.500</div>
<div class="t " style="top:210.3px;right:100.4px;color:#d2d2d2;letter-spacing:0.60px;margin-right:-0.60px;">-2.096</div>
<div class="t " style="top:210.3px;right:41.1px;color:#d2d2d2;letter-spacing:0.29px;margin-right:-0.29px;">0.000</div>
<div class="t " style="top:230.3px;right:220.2px;color:#d2d2d2;">9</div>
<div class="t " style="top:230.3px;right:159.2px;color:#d2d2d2;letter-spacing:0.60px;margin-right:-0.60px;">-2.500</div>
<div class="t " style="top:230.3px;right:100.4px;color:#d2d2d2;letter-spacing:0.60px;margin-right:-0.60px;">-2.045</div>
<div class="t " style="top:230.3px;right:41.1px;color:#d2d2d2;letter-spacing:0.29px;margin-right:-0.29px;">0.000</div>
<div class="t " style="top:250.3px;right:220.2px;color:#d2d2d2;">10</div>
<div class="t " style="top:250.3px;right:159.2px;color:#d2d2d2;letter-spacing:0.60px;margin-right:-0.60px;">-2.500</div>
<div class="t " style="top:250.3px;right:100.4px;color:#d2d2d2;letter-spacing:0.60px;margin-right:-0.60px;">-1.995</div>
<div class="t " style="top:250.3px;right:41.1px;color:#d2d2d2;letter-spacing:0.29px;margin-right:-0.29px;">0.000</div>
<div class="t " style="top:270.3px;right:220.2px;color:#d2d2d2;">11</div>
<div class="t " style="top:270.3px;right:159.2px;color:#d2d2d2;letter-spacing:0.60px;margin-right:-0.60px;">-2.500</div>
<div class="t " style="top:270.3px;right:100.4px;color:#d2d2d2;letter-spacing:0.60px;margin-right:-0.60px;">-1.944</div>
<div class="t " style="top:270.3px;right:41.1px;color:#d2d2d2;letter-spacing:0.29px;margin-right:-0.29px;">0.000</div>
<div class="t " style="top:290.3px;right:220.2px;color:#d2d2d2;">12</div>
<div class="t " style="top:290.3px;right:159.2px;color:#d2d2d2;letter-spacing:0.60px;margin-right:-0.60px;">-2.500</div>
<div class="t " style="top:290.3px;right:100.4px;color:#d2d2d2;letter-spacing:0.60px;margin-right:-0.60px;">-1.894</div>
<div class="t " style="top:290.3px;right:41.1px;color:#d2d2d2;letter-spacing:0.29px;margin-right:-0.29px;">0.000</div>
<div class="t " style="top:310.3px;right:220.2px;color:#d2d2d2;">13</div>
<div class="t " style="top:310.3px;right:159.2px;color:#d2d2d2;letter-spacing:0.60px;margin-right:-0.60px;">-2.500</div>
<div class="t " style="top:310.3px;right:100.4px;color:#d2d2d2;letter-spacing:0.60px;margin-right:-0.60px;">-1.843</div>
<div class="t " style="top:310.3px;right:41.1px;color:#d2d2d2;letter-spacing:0.29px;margin-right:-0.29px;">0.000</div>
<div class="t " style="top:330.3px;right:220.2px;color:#d2d2d2;">14</div>
<div class="t " style="top:330.3px;right:159.2px;color:#d2d2d2;letter-spacing:0.60px;margin-right:-0.60px;">-2.500</div>
<div class="t " style="top:330.3px;right:100.4px;color:#d2d2d2;letter-spacing:0.60px;margin-right:-0.60px;">-1.793</div>
<div class="t " style="top:330.3px;right:41.1px;color:#d2d2d2;letter-spacing:0.29px;margin-right:-0.29px;">0.000</div>
<div class="t " style="top:350.3px;right:220.2px;color:#d2d2d2;">15</div>
<div class="t " style="top:350.3px;right:159.2px;color:#d2d2d2;letter-spacing:0.60px;margin-right:-0.60px;">-2.500</div>
<div class="t " style="top:350.3px;right:100.4px;color:#d2d2d2;letter-spacing:0.60px;margin-right:-0.60px;">-1.742</div>
<div class="t " style="top:350.3px;right:41.1px;color:#d2d2d2;letter-spacing:0.29px;margin-right:-0.29px;">0.000</div>
<div class="t " style="top:370.3px;right:220.2px;color:#d2d2d2;">16</div>
<div class="t " style="top:370.3px;right:159.2px;color:#d2d2d2;letter-spacing:0.60px;margin-right:-0.60px;">-2.500</div>
<div class="t " style="top:370.3px;right:100.4px;color:#d2d2d2;letter-spacing:0.60px;margin-right:-0.60px;">-1.692</div>
<div class="t " style="top:370.3px;right:41.1px;color:#d2d2d2;letter-spacing:0.29px;margin-right:-0.29px;">0.000</div>
<div class="t " style="top:390.3px;right:220.2px;color:#d2d2d2;">17</div>
<div class="t " style="top:390.3px;right:159.2px;color:#d2d2d2;letter-spacing:0.60px;margin-right:-0.60px;">-2.500</div>
<div class="t " style="top:390.3px;right:100.4px;color:#d2d2d2;letter-spacing:0.60px;margin-right:-0.60px;">-1.641</div>
<div class="t " style="top:390.3px;right:41.1px;color:#d2d2d2;letter-spacing:0.29px;margin-right:-0.29px;">0.000</div>
<div class="t " style="top:410.3px;right:220.2px;color:#d2d2d2;">18</div>
<div class="t " style="top:410.3px;right:159.2px;color:#d2d2d2;letter-spacing:0.60px;margin-right:-0.60px;">-2.500</div>
<div class="t " style="top:410.3px;right:100.4px;color:#d2d2d2;letter-spacing:0.60px;margin-right:-0.60px;">-1.591</div>
<div class="t " style="top:410.3px;right:41.1px;color:#d2d2d2;letter-spacing:0.29px;margin-right:-0.29px;">0.000</div>
<div style="left:414.6px;top:57.0px;width:2.6px;height:30.0px;background:#4a4a4a;border-radius:2px"></div>
<div style="left:410.0px;top:38.0px;width:12.0px;height:18.0px;background:rgba(40,40,40,.8);border-radius:5px"></div>
<svg style="left:411.5px;top:42.60000000000002px" width="6" height="8"><path d="M4.5 0.8L1 4L4.5 7.2" fill="none" stroke="#b0b0b0" stroke-width="1.1"/></svg>
<div style="left:0.0px;top:426.8px;width:418.0px;height:25.0px;background:#303030"></div>
<div class="t " style="top:433.0px;left:255.5px;letter-spacing:0.09px;">Rows: 10,000</div>
<div style="left:338.3px;top:433.0px;width:1.0px;height:14.0px;background:#c8c8c8"></div>
<div class="t " style="top:433.0px;left:350.1px;letter-spacing:0.13px;">Columns: 1</div>
</div>
<div class="area" id="ne" style="left:422px;top:26px;width:1166px;height:958.5px;background:#1d1d1d;border-radius:5px;background-image:radial-gradient(circle,#292929 1px,transparent 1.5px),radial-gradient(circle,#242424 0.6px,transparent 1px);background-size:89.25px 89.25px,17.85px 17.85px;background-position:-13.4px 1.3px,4.4px 1.5px">
<svg style="left:0;top:0" width="1162" height="960" viewBox="422 26 1162 960"><defs><linearGradient id="lg1" gradientUnits="userSpaceOnUse" x1="0" y1="532" x2="0" y2="354"><stop offset="0" stop-color="#c7c729"/><stop offset="1" stop-color="#a1a1a1"/></linearGradient></defs><rect x="1051.5" y="632.2" width="170.3" height="142.3" rx="16" fill="none" stroke="#1a9fe6" stroke-width="3"/><path d="M558.6 317.8C617.8 317.8 1000.3 275.5 1059.5 275.5" fill="none" stroke="#101010" stroke-width="3.2" opacity=".55"/><path d="M558.6 317.8C617.8 317.8 1000.3 275.5 1059.5 275.5" fill="none" stroke="#00d6a3" stroke-width="1.6" opacity="1"/><path d="M558.6 317.8C773.2 317.8 880.4 500.9 1095.0 500.9" fill="none" stroke="#101010" stroke-width="3.2" opacity=".55"/><path d="M558.6 317.8C773.2 317.8 880.4 500.9 1095.0 500.9" fill="none" stroke="#00d6a3" stroke-width="1.6" opacity="1"/><path d="M558.6 317.8C765.8 317.8 869.3 714.8 1076.5 714.8" fill="none" stroke="#101010" stroke-width="3.2" opacity=".55"/><path d="M558.6 317.8C765.8 317.8 869.3 714.8 1076.5 714.8" fill="none" stroke="#a4ecd9" stroke-width="1.6" opacity="1"/><path d="M558.6 337.6C565.8 337.6 569.5 569.0 576.7 569.0" fill="none" stroke="#4f4fb0" stroke-width="1" opacity="0.8" stroke-dasharray="6 1.5"/><path d="M701.7 460.6C730.3 460.6 744.5 671.8 773.1 671.8" fill="none" stroke="#8f8f8f" stroke-width="1" opacity="1"/><path d="M987.6 532.1C1016.4 532.1 1030.7 354.1 1059.5 354.1" fill="none" stroke="url(#lg1)" stroke-width="1" opacity="1"/><path d="M987.6 532.1C1023.2 532.1 1040.9 734.3 1076.5 734.3" fill="none" stroke="#c9c98a" stroke-width="1" opacity="1"/><path d="M1211.0 192.6C1236.1 192.6 1248.6 394.0 1273.7 394.0" fill="none" stroke="#101010" stroke-width="3.2" opacity=".55"/><path d="M1211.0 192.6C1236.1 192.6 1248.6 394.0 1273.7 394.0" fill="none" stroke="#00d6a3" stroke-width="1.6" opacity="1"/><path d="M1220.0 478.5C1241.5 478.5 1252.2 394.0 1273.7 394.0" fill="none" stroke="#101010" stroke-width="3.2" opacity=".55"/><path d="M1220.0 478.5C1241.5 478.5 1252.2 394.0 1273.7 394.0" fill="none" stroke="#00d6a3" stroke-width="1.6" opacity="1"/><path d="M1399.0 371.5C1420.4 371.5 1431.2 442.9 1452.6 442.9" fill="none" stroke="#101010" stroke-width="3.2" opacity=".55"/><path d="M1399.0 371.5C1420.4 371.5 1431.2 442.9 1452.6 442.9" fill="none" stroke="#00d6a3" stroke-width="1.6" opacity="1"/></svg>
<div class="node" style="left:11.9px;top:260.8px;width:125.0px;height:145.0px;">
<div class="nh" style="height:18px;background:#1d725e"></div>
<svg style="left:9.0px;top:5.6px" width="9.4" height="5.7" viewBox="-1 -1 9.4 5.7"><path d="M0 0 L3.7 3.7 L7.4 0" fill="none" stroke="#e6e6e6" stroke-width="1.2" stroke-linecap="round" stroke-linejoin="round"/></svg>
<div class="t n sh" style="top:0.8px;left:23.2px;color:#e6e6e6;">Grid</div>
<div class="t n sh" style="top:23.5px;right:10.1px;">Mesh</div>
<div class="t n sh" style="top:43.3px;right:10.1px;">UV Map</div>
<div class="fld" style="left:9.0px;top:65.1px;width:106.3px;height:16.5px"></div>
<div class="t n sh" style="top:65.4px;left:23.0px;">Size X</div>
<div class="t n sh" style="top:65.5px;right:21.7px;">5 m</div>
<div class="fld" style="left:9.0px;top:84.7px;width:106.3px;height:16.5px"></div>
<div class="t n sh" style="top:85.0px;left:23.0px;">Size Y</div>
<div class="t n sh" style="top:85.1px;right:21.7px;">5 m</div>
<div class="fld" style="left:9.0px;top:104.3px;width:106.3px;height:16.5px"></div>
<div class="t n sh" style="top:104.6px;left:23.0px;">Vertices X</div>
<div class="t n sh" style="top:104.7px;right:21.7px;">100</div>
<div class="fld" style="left:9.0px;top:123.9px;width:106.3px;height:16.5px"></div>
<div class="t n sh" style="top:124.2px;left:23.0px;">Vertices Y</div>
<div class="t n sh" style="top:124.3px;right:21.7px;">100</div></div>
<div class="node" style="left:154.9px;top:403.7px;width:125.0px;height:251.1px;">
<div class="nh" style="height:18px;background:#79461d"></div>
<svg style="left:9.0px;top:5.6px" width="9.4" height="5.7" viewBox="-1 -1 9.4 5.7"><path d="M0 0 L3.7 3.7 L7.4 0" fill="none" stroke="#e6e6e6" stroke-width="1.2" stroke-linecap="round" stroke-linejoin="round"/></svg>
<div class="t n sh" style="top:0.8px;left:23.2px;color:#e6e6e6;">Noise Texture</div>
<div class="t n sh" style="top:23.4px;right:10.1px;">Fac</div>
<div class="t n sh" style="top:43.4px;right:10.1px;">Color</div>
<div class="dd" style="left:8.4px;top:66.6px;width:107.1px;height:17px"></div>
<div class="t n sh" style="top:67.3px;left:15.4px;">3D</div>
<svg style="left:103.7px;top:73.4px" width="7.6" height="5" viewBox="-1 -1 7.6 5"><path d="M0 0 L2.8 3 L5.6 0" fill="none" stroke="#e6e6e6" stroke-width="1.05" stroke-linecap="round" stroke-linejoin="round"/></svg>
<div class="dd" style="left:8.4px;top:88.8px;width:107.1px;height:17px"></div>
<div class="t n sh" style="top:89.5px;left:15.4px;">fBM</div>
<svg style="left:103.7px;top:95.6px" width="7.6" height="5" viewBox="-1 -1 7.6 5"><path d="M0 0 L2.8 3 L5.6 0" fill="none" stroke="#e6e6e6" stroke-width="1.05" stroke-linecap="round" stroke-linejoin="round"/></svg>
<div style="left:9.2px;top:113.3px;width:12px;height:12px;background:#4772b3;border-radius:2.5px"></div>
<svg style="left:9.2px;top:113.3px" width="12" height="12"><path d="M2.6 6.2L5 8.8L9.6 3.4" fill="none" stroke="#fff" stroke-width="1.5" stroke-linecap="round" stroke-linejoin="round"/></svg>
<div class="t n sh" style="top:111.8px;left:24.6px;">Normalize</div>
<div class="t n sh" style="top:131.8px;left:10.1px;">Vector</div>
<div class="fld" style="left:8.6px;top:151.2px;width:107.0px;height:16.3px"></div>
<div class="t n sh" style="top:151.4px;left:22.6px;">Scale</div>
<div class="t n sh" style="top:151.5px;right:21.4px;">4.800</div>
<div class="fld" style="left:8.6px;top:170.8px;width:107.0px;height:16.3px"></div>
<div class="t n sh" style="top:171.0px;left:22.6px;">Detail</div>
<div class="t n sh" style="top:171.1px;right:21.4px;">0.300</div>
<div class="fld" style="left:8.6px;top:190.4px;width:107.0px;height:16.3px"></div>
<div class="t n sh" style="top:190.7px;left:22.6px;">Roughn...</div>
<div class="t n sh" style="top:190.8px;right:21.4px;">0.000</div>
<div class="fld" style="left:8.6px;top:210.0px;width:107.0px;height:16.3px"></div>
<div class="t n sh" style="top:210.2px;left:22.6px;">Lacuna...</div>
<div class="t n sh" style="top:210.3px;right:21.4px;">2.000</div>
<div class="fld" style="left:8.6px;top:229.6px;width:107.0px;height:16.3px"></div>
<div class="t n sh" style="top:229.8px;left:22.6px;">Distortion</div>
<div class="t n sh" style="top:229.9px;right:21.4px;">0.000</div></div>
<div class="node" style="left:351.1px;top:475.1px;width:214.9px;height:183.5px;">
<div class="nh" style="height:18px;background:#246283"></div>
<svg style="left:9.0px;top:5.6px" width="9.4" height="5.7" viewBox="-1 -1 9.4 5.7"><path d="M0 0 L3.7 3.7 L7.4 0" fill="none" stroke="#e6e6e6" stroke-width="1.2" stroke-linecap="round" stroke-linejoin="round"/></svg>
<div class="t n sh" style="top:0.8px;left:23.2px;color:#e6e6e6;">Color Ramp</div>
<div class="t n sh" style="top:23.5px;right:10.1px;">Color</div>
<div class="t n sh" style="top:43.6px;right:10.1px;">Alpha</div>
<svg style="left:11.9px;top:73.9px" width="62" height="12"><path d="M1.5 6H8.5M5 2.5V9.5M23.5 6H30.5M51.5 4.2L55 7.8L58.5 4.2" fill="none" stroke="#d0d0d0" stroke-width="1.1"/></svg>
<div class="dd" style="left:91.3px;top:71.4px;width:57.3px;height:17px;border-radius:3px 0 0 3px"></div>
<div class="dd" style="left:148.1px;top:71.4px;width:57.3px;height:17px;border-radius:0 3px 3px 0"></div>
<div class="t n sh" style="top:72.2px;left:97.9px;">RGB</div>
<div class="t n sh" style="top:72.2px;left:154.9px;">Linear</div>
<svg style="left:138.1px;top:77.9px" width="7.6" height="5" viewBox="-1 -1 7.6 5"><path d="M0 0 L2.8 3 L5.6 0" fill="none" stroke="#e6e6e6" stroke-width="1.05" stroke-linecap="round" stroke-linejoin="round"/></svg>
<svg style="left:195.6px;top:77.9px" width="7.6" height="5" viewBox="-1 -1 7.6 5"><path d="M0 0 L2.8 3 L5.6 0" fill="none" stroke="#e6e6e6" stroke-width="1.05" stroke-linecap="round" stroke-linejoin="round"/></svg>
<div style="left:12.2px;top:93.7px;width:190px;height:16.4px;background:linear-gradient(90deg,#000 0,#000 83.7px,#fff 110.1px,#fff 100%)"></div>
<svg style="left:86.9px;top:92.9px" width="46" height="22" viewBox="860 594 46 22"><path d="M869 595V603" stroke="#000" stroke-width="1" stroke-dasharray="1.5 1.5"/><path d="M869 595V603" stroke="#aaa" stroke-width="1" stroke-dasharray="1.5 1.5" stroke-dashoffset="1.5"/><path d="M895.4 595V603" stroke="#222" stroke-width="1" stroke-dasharray="1.5 1.5"/><path d="M895.4 595V603" stroke="#fff" stroke-width="1" stroke-dasharray="1.5 1.5" stroke-dashoffset="1.5"/><path d="M869 602.3L874.3 608.6H863.7Z" fill="#555" stroke="#1a1a1a" stroke-width=".8"/><rect x="863.7" y="608.8" width="10.6" height="5.6" fill="#000" stroke="#1a1a1a" stroke-width=".8"/><path d="M895.4 602.3L900.7 608.6H890.1Z" fill="#9a9a9a" stroke="#e0e0e0" stroke-width=".8"/><rect x="890.1" y="608.8" width="10.6" height="5.6" fill="#fff" stroke="#e0e0e0" stroke-width=".8"/></svg>
<div class="fld" style="left:9.7px;top:120.6px;width:54.6px;height:16.6px"></div>
<div class="t n sh" style="top:121.1px;left:-63.0px;width:200px;text-align:center;">1</div>
<div class="fld" style="left:73.4px;top:120.6px;width:132.0px;height:16.6px"></div>
<div class="t n sh" style="top:121.1px;right:21.5px;">0.577</div>
<div class="t n sh" style="top:121.4px;left:86.4px;">Pos</div>
<div style="left:9.7px;top:142.9px;width:195.7px;height:15.8px;background:#fff;border-radius:3px"></div>
<div class="t n sh" style="top:163.2px;left:10.1px;">Fac</div></div>
<div class="node" style="left:637.5px;top:135.4px;width:151.6px;height:225.7px;">
<div class="nh" style="height:18px;background:#1d725e"></div>
<svg style="left:9.0px;top:5.6px" width="9.4" height="5.7" viewBox="-1 -1 9.4 5.7"><path d="M0 0 L3.7 3.7 L7.4 0" fill="none" stroke="#e6e6e6" stroke-width="1.2" stroke-linecap="round" stroke-linejoin="round"/></svg>
<div class="t n sh" style="top:0.8px;left:23.2px;color:#e6e6e6;">Distribute Points on Faces</div>
<div class="t n sh" style="top:23.7px;right:10.1px;">Points</div>
<div class="t n sh" style="top:43.2px;right:10.1px;">Normal</div>
<div class="t n sh" style="top:63.0px;right:10.1px;">Rotation</div>
<div class="dd" style="left:8.8px;top:86.2px;width:133.1px;height:16.5px"></div>
<div class="t n sh" style="top:86.6px;left:15.8px;">Poisson Disk</div>
<svg style="left:130.1px;top:92.7px" width="7.6" height="5" viewBox="-1 -1 7.6 5"><path d="M0 0 L2.8 3 L5.6 0" fill="none" stroke="#e6e6e6" stroke-width="1.05" stroke-linecap="round" stroke-linejoin="round"/></svg>
<div class="t n sh" style="top:106.6px;left:10.1px;">Mesh</div>
<div class="t n sh" style="top:126.4px;left:10.1px;">Selection</div>
<div class="fld" style="left:8.8px;top:145.8px;width:133.1px;height:16.5px"></div>
<div class="t n sh" style="top:146.1px;left:22.8px;">Distance Min</div>
<div class="t n sh" style="top:146.2px;right:21.7px;">0.05 m</div>
<div class="fld" style="left:8.8px;top:166.1px;width:133.1px;height:16.5px"></div>
<div class="t n sh" style="top:166.4px;left:22.8px;">Density Max</div>
<div class="t n sh" style="top:166.5px;right:21.7px;">250.000</div>
<div class="t n sh" style="top:185.2px;left:10.1px;">Density Factor</div>
<div class="fld" style="left:8.8px;top:204.6px;width:133.1px;height:16.5px"></div>
<div class="t n sh" style="top:204.9px;left:22.8px;">Seed</div>
<div class="t n sh" style="top:205.0px;right:21.7px;">64</div></div>
<div class="node" style="left:851.9px;top:313.8px;width:125.2px;height:66.9px;">
<div class="nh" style="height:18px;background:#1d725e"></div>
<svg style="left:9.0px;top:5.6px" width="9.4" height="5.7" viewBox="-1 -1 9.4 5.7"><path d="M0 0 L3.7 3.7 L7.4 0" fill="none" stroke="#e6e6e6" stroke-width="1.2" stroke-linecap="round" stroke-linejoin="round"/></svg>
<div class="t n sh" style="top:0.8px;left:23.2px;color:#e6e6e6;">Join Geometry</div>
<div class="t n sh" style="top:24.2px;right:10.1px;">Geometry</div>
<div class="t n sh" style="top:46.3px;left:10.1px;">Geometry</div></div>
<div class="node" style="left:673.2px;top:421.5px;width:124.9px;height:106.1px;">
<div class="nh" style="height:18px;background:#1d725e"></div>
<svg style="left:9.0px;top:5.6px" width="9.4" height="5.7" viewBox="-1 -1 9.4 5.7"><path d="M0 0 L3.7 3.7 L7.4 0" fill="none" stroke="#e6e6e6" stroke-width="1.2" stroke-linecap="round" stroke-linejoin="round"/></svg>
<div class="t n sh" style="top:0.8px;left:23.2px;color:#e6e6e6;">Set Material</div>
<div class="t n sh" style="top:23.5px;right:10.1px;">Geometry</div>
<div class="t n sh" style="top:45.9px;left:10.1px;">Geometry</div>
<div class="t n sh" style="top:65.7px;left:10.1px;">Selection</div>
<div class="dd" style="left:9.8px;top:85.3px;width:105.1px;height:15.6px;background:#1f1f1f"></div>
<svg style="left:12.6px;top:86.1px" width="14" height="14" viewBox="0 0 14 14"><circle cx="7" cy="7" r="6" fill="#e6e6e6"/><path d="M7 7V1A6 6 0 0 0 1 7ZM7 7V13A6 6 0 0 0 13 7Z" fill="#2a2a2a"/><circle cx="7" cy="7" r="6" fill="none" stroke="#e6e6e6" stroke-width="1.1"/></svg>
<div class="t n sh" style="top:85.6px;left:32.0px;">Dark Gray</div>
<svg style="left:101.3px;top:89.3px" width="8" height="8"><path d="M1 1L7 7M7 1L1 7" stroke="#d0d0d0" stroke-width="1.1"/></svg></div>
<div class="node" style="left:1030.9px;top:385.4px;width:125.1px;height:64.4px;">
<div class="nh" style="height:19px;background:#1d1d1d"></div>
<svg style="left:9.0px;top:6.1px" width="9.4" height="5.7" viewBox="-1 -1 9.4 5.7"><path d="M0 0 L3.7 3.7 L7.4 0" fill="none" stroke="#e6e6e6" stroke-width="1.2" stroke-linecap="round" stroke-linejoin="round"/></svg>
<div class="t n sh" style="top:1.3px;left:23.2px;color:#e6e6e6;">Group Output</div>
<div class="t n sh" style="top:24.0px;left:10.1px;">Geometry</div></div>
<div class="node" style="left:654.7px;top:635.5px;width:126.0px;height:87.2px;outline:1px solid #f0f0f0;">
<div class="nh" style="height:19px;background:#2b2b2b"></div>
<svg style="left:9.0px;top:6.1px" width="9.4" height="5.7" viewBox="-1 -1 9.4 5.7"><path d="M0 0 L3.7 3.7 L7.4 0" fill="none" stroke="#e6e6e6" stroke-width="1.2" stroke-linecap="round" stroke-linejoin="round"/></svg>
<div class="t n sh" style="top:1.3px;left:23.2px;color:#e6e6e6;">Viewer</div>
<div style="left:0;top:18.5px;right:0;height:1px;background:#202020"></div>
<svg style="left:104.8px;top:7.5px" width="14" height="7"><path d="M1 1.5Q7 8.5 13 1.5" fill="none" stroke="#c8c8c8" stroke-width="1.1"/></svg>
<div class="dd" style="left:9.9px;top:24.9px;width:106.0px;height:17.2px"></div>
<div class="t n sh" style="top:25.7px;left:16.9px;">Auto</div>
<svg style="left:104.1px;top:31.8px" width="7.6" height="5" viewBox="-1 -1 7.6 5"><path d="M0 0 L2.8 3 L5.6 0" fill="none" stroke="#e6e6e6" stroke-width="1.05" stroke-linecap="round" stroke-linejoin="round"/></svg>
<div class="t n sh" style="top:45.8px;left:10.1px;">Geometry</div>
<div class="t n sh" style="top:65.3px;left:10.1px;">Value</div></div>
<svg style="left:0;top:0" width="1162" height="960" viewBox="422 26 1162 960"><circle cx="558.6" cy="317.8" r="3.6" fill="#00d6a3" stroke="#1a1a1a" stroke-width=".7"/><path d="M554.3000000000001 337.6L558.6 333.3L562.9 337.6L558.6 341.90000000000003Z" fill="#6363c7" stroke="#1a1a1a" stroke-width=".7"/><circle cx="433.6" cy="359.9" r="3.6" fill="#a1a1a1" stroke="#1a1a1a" stroke-width=".7"/><circle cx="433.6" cy="379.5" r="3.6" fill="#a1a1a1" stroke="#1a1a1a" stroke-width=".7"/><circle cx="433.6" cy="399.1" r="3.6" fill="#598c5c" stroke="#1a1a1a" stroke-width=".7"/><circle cx="433.6" cy="418.7" r="3.6" fill="#598c5c" stroke="#1a1a1a" stroke-width=".7"/><path d="M697.4000000000001 460.6L701.7 456.3L706.0 460.6L701.7 464.90000000000003Z" fill="#a1a1a1" stroke="#1a1a1a" stroke-width=".7"/><path d="M697.4000000000001 480.6L701.7 476.3L706.0 480.6L701.7 484.90000000000003Z" fill="#c7c729" stroke="#1a1a1a" stroke-width=".7"/><path d="M572.4000000000001 569L576.7 564.7L581.0 569L576.7 573.3Z" fill="#6363c7" stroke="#1a1a1a" stroke-width=".7"/><path d="M572.4000000000001 588.8L576.7 584.5L581.0 588.8L576.7 593.0999999999999Z" fill="#a1a1a1" stroke="#1a1a1a" stroke-width=".7"/><circle cx="576.7" cy="588.8" r="1.3" fill="#1d1d1d"/><path d="M572.4000000000001 608.4L576.7 604.1L581.0 608.4L576.7 612.6999999999999Z" fill="#a1a1a1" stroke="#1a1a1a" stroke-width=".7"/><circle cx="576.7" cy="608.4" r="1.3" fill="#1d1d1d"/><path d="M572.4000000000001 628.0L576.7 623.7L581.0 628.0L576.7 632.3Z" fill="#a1a1a1" stroke="#1a1a1a" stroke-width=".7"/><circle cx="576.7" cy="628.0" r="1.3" fill="#1d1d1d"/><path d="M572.4000000000001 647.5999999999999L576.7 643.3L581.0 647.5999999999999L576.7 651.8999999999999Z" fill="#a1a1a1" stroke="#1a1a1a" stroke-width=".7"/><circle cx="576.7" cy="647.5999999999999" r="1.3" fill="#1d1d1d"/><path d="M572.4000000000001 667.1999999999999L576.7 662.9L581.0 667.1999999999999L576.7 671.4999999999999Z" fill="#a1a1a1" stroke="#1a1a1a" stroke-width=".7"/><circle cx="576.7" cy="667.1999999999999" r="1.3" fill="#1d1d1d"/><path d="M983.3000000000001 532.1L987.6 527.8000000000001L991.9 532.1L987.6 536.4Z" fill="#c7c729" stroke="#1a1a1a" stroke-width=".7"/><path d="M983.3000000000001 552.2L987.6 547.9000000000001L991.9 552.2L987.6 556.5Z" fill="#a1a1a1" stroke="#1a1a1a" stroke-width=".7"/><path d="M768.8000000000001 671.8L773.1 667.5L777.4 671.8L773.1 676.0999999999999Z" fill="#a1a1a1" stroke="#1a1a1a" stroke-width=".7"/><circle cx="1211" cy="192.6" r="3.6" fill="#00d6a3" stroke="#1a1a1a" stroke-width=".7"/><path d="M1206.7 212.1L1211 207.79999999999998L1215.3 212.1L1211 216.4Z" fill="#6363c7" stroke="#1a1a1a" stroke-width=".7"/><path d="M1206.7 231.9L1211 227.6L1215.3 231.9L1211 236.20000000000002Z" fill="#a663c7" stroke="#1a1a1a" stroke-width=".7"/><circle cx="1059.5" cy="275.5" r="3.6" fill="#00d6a3" stroke="#1a1a1a" stroke-width=".7"/><path d="M1055.2 295.3L1059.5 291.0L1063.8 295.3L1059.5 299.6Z" fill="#cca6d6" stroke="#1a1a1a" stroke-width=".7"/><circle cx="1059.5" cy="295.3" r="1.3" fill="#1d1d1d"/><circle cx="1059.5" cy="315.2" r="3.6" fill="#a1a1a1" stroke="#1a1a1a" stroke-width=".7"/><circle cx="1059.5" cy="334.8" r="3.6" fill="#a1a1a1" stroke="#1a1a1a" stroke-width=".7"/><path d="M1055.2 354.1L1059.5 349.8L1063.8 354.1L1059.5 358.40000000000003Z" fill="#a1a1a1" stroke="#1a1a1a" stroke-width=".7"/><circle cx="1059.5" cy="373.9" r="3.6" fill="#598c5c" stroke="#1a1a1a" stroke-width=".7"/><circle cx="1399" cy="371.5" r="3.6" fill="#00d6a3" stroke="#1a1a1a" stroke-width=".7"/><rect x="1270.0" y="386.1" width="7.4" height="16" rx="3.7" fill="#00d6a3" stroke="#1a1a1a" stroke-width=".7"/><circle cx="1220" cy="478.5" r="3.6" fill="#00d6a3" stroke="#1a1a1a" stroke-width=".7"/><circle cx="1095" cy="500.9" r="3.6" fill="#00d6a3" stroke="#1a1a1a" stroke-width=".7"/><path d="M1090.7 520.7L1095 516.4000000000001L1099.3 520.7L1095 525.0Z" fill="#cca6d6" stroke="#1a1a1a" stroke-width=".7"/><circle cx="1095" cy="520.7" r="1.3" fill="#1d1d1d"/><circle cx="1095" cy="540.4" r="3.6" fill="#eb7582" stroke="#1a1a1a" stroke-width=".7"/><circle cx="1452.6" cy="442.9" r="3.6" fill="#00d6a3" stroke="#1a1a1a" stroke-width=".7"/><circle cx="1452.6" cy="462.5" r="3.6" fill="#222" stroke="#8a8a8a" stroke-width=".9"/><circle cx="1076.5" cy="714.8" r="3.6" fill="#00d6a3" stroke="#1a1a1a" stroke-width=".7"/><path d="M1072.2 734.3L1076.5 730.0L1080.8 734.3L1076.5 738.5999999999999Z" fill="#c7c729" stroke="#1a1a1a" stroke-width=".7"/></svg>
</div>
<div style="left:422px;top:26px;width:1166px;height:958.5px;border:1px solid #363636;border-radius:5px;pointer-events:none"></div>
<svg style="left:1238.8px;top:624px" width="319.2" height="325" viewBox="1238.8 624 319.2 325"><rect x="1238.8" y="624" width="319.2" height="325" fill="#3f3f3f"/><defs><clipPath id="pc"><polygon points="1248.4,632.4 1550.2,633.9 1550.3,938.1 1244.2,935.8"/></clipPath><filter id="pb" x="-5%" y="-5%" width="110%" height="110%" color-interpolation-filters="sRGB"><feGaussianBlur in="SourceGraphic" stdDeviation="3.0" result="a"/><feComponentTransfer in="a" result="a1"><feFuncR type="linear" slope="1.466" intercept="-0.233"/><feFuncG type="linear" slope="1.466" intercept="-0.233"/><feFuncB type="linear" slope="1.466" intercept="-0.233"/></feComponentTransfer><feComponentTransfer in="a1" result="a2"><feFuncR type="gamma" exponent="0.4545"/><feFuncG type="gamma" exponent="0.4545"/><feFuncB type="gamma" exponent="0.4545"/></feComponentTransfer><feGaussianBlur in="SourceGraphic" stdDeviation="11.0" result="b"/><feBlend in="a2" in2="b" mode="multiply"/></filter></defs><line x1="1219.2" y1="572.6" x2="1212.7" y2="997.3" stroke="#4d4d4d" stroke-width="1" opacity="1"/><line x1="1188.7" y1="602.2" x2="1610.6" y2="604.2" stroke="#4d4d4d" stroke-width="1" opacity="1"/><line x1="1279.3" y1="572.9" x2="1274.0" y2="997.8" stroke="#4d4d4d" stroke-width="1" opacity="1"/><line x1="1187.7" y1="662.0" x2="1610.8" y2="664.3" stroke="#4d4d4d" stroke-width="1" opacity="1"/><line x1="1339.4" y1="573.1" x2="1335.3" y2="998.3" stroke="#4d4d4d" stroke-width="1" opacity="1"/><line x1="1186.7" y1="722.2" x2="1611.0" y2="724.6" stroke="#4d4d4d" stroke-width="1" opacity="1"/><line x1="1459.7" y1="573.7" x2="1458.1" y2="999.2" stroke="#4d4d4d" stroke-width="1" opacity="1"/><line x1="1184.7" y1="843.5" x2="1611.4" y2="846.3" stroke="#4d4d4d" stroke-width="1" opacity="1"/><line x1="1520.0" y1="574.0" x2="1519.6" y2="999.7" stroke="#4d4d4d" stroke-width="1" opacity="1"/><line x1="1183.7" y1="904.6" x2="1611.6" y2="907.7" stroke="#4d4d4d" stroke-width="1" opacity="1"/><line x1="1580.4" y1="574.2" x2="1581.1" y2="1000.2" stroke="#4d4d4d" stroke-width="1" opacity="1"/><line x1="1182.7" y1="966.1" x2="1611.8" y2="969.5" stroke="#4d4d4d" stroke-width="1" opacity="1"/><line x1="1399.5" y1="573.4" x2="1396.6" y2="998.8" stroke="#9c3a48" stroke-width="1.2" opacity="1"/><line x1="1185.7" y1="782.6" x2="1611.2" y2="785.3" stroke="#5f8a1e" stroke-width="1.2" opacity="1"/><g clip-path="url(#pc)"><g filter="url(#pb)"><rect x="1178.8" y="564" width="439.2" height="445" fill="#fff"/><polygon points="1207.5,593.5 1276.8,593.5 1276.8,632.5 1276.5,656.0 1274.1,662.5 1262.7,680.4 1248.4,698.2 1207.5,718.8" fill="#000"/><polygon points="1326.3,669.3 1325.8,673.1 1324.4,676.5 1322.1,679.5 1319.1,681.8 1315.6,683.2 1311.9,683.7 1308.2,683.2 1304.7,681.8 1301.7,679.5 1299.4,676.5 1298.0,673.1 1297.5,669.3 1298.0,665.6 1299.4,662.1 1301.7,659.1 1304.7,656.9 1308.2,655.4 1311.9,654.9 1315.6,655.4 1319.1,656.9 1322.1,659.1 1324.4,662.1 1325.8,665.6" fill="#000"/><polygon points="1400.0,644.7 1384.4,655.2 1372.3,666.6 1367.1,679.5 1369.0,692.5 1377.1,703.9 1388.5,710.7 1400.0,710.1 1409.7,697.4 1416.2,687.7 1418.7,674.7 1424.3,661.7 1437.3,656.0 1450.3,660.9 1457.6,673.1 1462.5,687.7 1466.5,695.0 1471.4,697.4 1476.3,695.0 1479.5,687.7 1481.1,674.7 1487.6,661.7 1500.6,653.6 1507.1,648.7 1505.5,640.6 1500.6,633.3 1499.8,593.5 1411.4,593.5 1411.4,633.3" fill="#000"/><polygon points="1517.6,652.8 1550.1,643.0 1586.6,639.8 1586.6,674.7 1550.1,677.1 1542.8,682.5 1534.7,684.7 1526.6,680.4 1520.1,669.8" fill="#000"/><polygon points="1277.6,786.0 1278.9,772.0 1283.0,763.1 1293.5,750.9 1308.2,739.6 1317.9,735.5 1327.6,736.0 1335.7,741.2 1343.9,748.5 1353.6,751.8 1400.0,752.6 1416.2,754.2 1432.5,751.8 1448.7,742.0 1460.0,737.2 1469.8,739.6 1481.1,750.9 1488.4,760.7 1486.0,768.8 1477.9,771.2 1456.8,770.4 1440.6,766.4 1424.3,764.7 1413.0,770.4 1406.5,778.5 1405.7,786.0 1406.5,794.1 1412.2,802.2 1422.7,815.2 1425.2,824.9 1420.3,833.1 1409.7,835.5 1400.0,833.1 1389.3,820.1 1377.9,807.1 1369.8,801.4 1353.6,801.4 1343.9,805.5 1334.1,812.8 1324.4,817.6 1313.0,816.0 1301.7,807.1 1288.7,795.7 1277.6,786.0" fill="#000"/><polygon points="1207.5,817.6 1245.4,817.6 1252.2,827.4 1255.7,842.8 1255.7,867.1 1252.7,881.7 1245.4,887.4 1207.5,887.4" fill="#000"/><polygon points="1309.8,863.9 1317.9,876.9 1326.0,889.9 1328.4,899.6 1324.4,906.9 1314.6,914.2 1301.7,923.9 1288.7,932.9 1282.2,935.6 1280.6,972.6 1271.6,972.6 1272.5,935.6 1266.0,923.9 1262.7,910.9 1266.0,902.0 1277.3,898.0 1288.7,894.7 1298.4,888.2 1304.9,876.9 1307.3,867.1" fill="#000"/><polygon points="1374.7,868.3 1365.3,873.6 1357.5,885.0 1358.5,894.4 1369.0,899.9 1382.8,902.2 1385.6,900.8 1393.8,906.9 1399.8,917.0 1404.9,927.2 1404.9,975.0 1411.0,975.0 1412.0,927.2 1419.1,917.0 1431.3,910.9 1446.5,906.9 1460.0,902.5 1469.8,896.3 1476.3,886.6 1480.3,873.6 1481.1,860.6 1486.0,852.5 1497.4,847.7 1510.3,844.4 1520.1,834.7 1526.6,818.5 1534.7,807.1 1544.4,803.0 1550.1,802.2 1586.6,801.4 1586.6,785.0 1550.1,764.7 1542.8,751.8 1535.5,738.8 1523.3,755.8 1513.6,772.0 1509.5,786.0 1507.1,786.0 1503.9,795.7 1497.4,807.1 1487.6,818.5 1476.3,829.8 1464.9,837.9 1453.5,842.8 1445.4,846.0 1440.6,854.2 1434.1,867.1 1424.3,880.1 1414.6,889.9 1404.9,893.1 1400.0,890.7 1395.8,885.0 1386.0,875.2" fill="#000"/><polygon points="1520.1,885.0 1527.4,874.4 1534.7,871.2 1542.8,874.9 1550.1,883.4 1586.6,896.3 1586.6,972.6 1507.9,972.6 1509.0,937.7 1512.8,931.2 1517.2,923.1 1519.3,914.2" fill="#000"/><polygon points="1550.1,913.4 1544.9,924.7 1541.5,937.7 1541.5,972.6 1586.6,972.6 1586.6,913.4" fill="#fff"/></g><line x1="1278.5" y1="632.5" x2="1274.7" y2="936.0" stroke="#808080" stroke-width="1" opacity="0.45"/><line x1="1248.0" y1="662.4" x2="1550.2" y2="663.9" stroke="#808080" stroke-width="1" opacity="0.45"/><line x1="1338.8" y1="632.8" x2="1335.9" y2="936.5" stroke="#808080" stroke-width="1" opacity="0.45"/><line x1="1247.2" y1="722.5" x2="1550.2" y2="724.3" stroke="#808080" stroke-width="1" opacity="0.45"/><line x1="1399.1" y1="633.1" x2="1397.1" y2="936.9" stroke="#b04a60" stroke-width="1.2" opacity="0.95"/><line x1="1246.3" y1="783.0" x2="1550.2" y2="784.9" stroke="#6e8f35" stroke-width="1.3" opacity="0.95"/><line x1="1459.5" y1="633.4" x2="1458.3" y2="937.4" stroke="#808080" stroke-width="1" opacity="0.45"/><line x1="1245.5" y1="843.9" x2="1550.3" y2="845.9" stroke="#808080" stroke-width="1" opacity="0.45"/><line x1="1520.0" y1="633.7" x2="1519.6" y2="937.9" stroke="#808080" stroke-width="1" opacity="0.45"/><line x1="1244.6" y1="905.1" x2="1550.3" y2="907.3" stroke="#808080" stroke-width="1" opacity="0.45"/></g><g transform="translate(1398.1 784.0)"><path d="M-14 0H-9M9 0H14M0 -14V-9M0 9V14" stroke="#1a1a1a" stroke-width="1" opacity=".6"/>
<circle r="7.6" fill="none" stroke="#ffffff" stroke-width="1.2"/><circle r="7.6" fill="none" stroke="#d0202a" stroke-width="1.2" stroke-dasharray="2.985 2.985"/></g></svg>
<div style="left:423.0px;top:27.0px;width:1161.0px;height:25.0px;background:#1d1d1d;border-radius:4px 0 0 0"></div>
<div style="left:429.4px;top:29.5px;width:31.3px;height:19.0px;background:#282828;border:1px solid #3d3d3d;border-radius:4px"></div>
<svg style="left:432.5px;top:31.5px" width="15" height="15" viewBox="0 0 15 15"><circle cx="3" cy="2.6" r="1.5" fill="#9a9a9a"/><circle cx="7" cy="3.4" r="1.7" fill="#9a9a9a"/><circle cx="4.6" cy="7.2" r="2.2" fill="#b4b4b4"/><circle cx="10.4" cy="10.6" r="3.4" fill="#e6e6e6"/></svg>
<svg style="left:450.2px;top:37.1px" width="7.6" height="5" viewBox="-1 -1 7.6 5"><path d="M0 0 L2.8 3 L5.6 0" fill="none" stroke="#e6e6e6" stroke-width="1.2" stroke-linecap="round" stroke-linejoin="round"/></svg>
<div style="left:466.4px;top:29.5px;width:78.3px;height:19.0px;background:#282828;border:1px solid #3d3d3d;border-radius:4px"></div>
<div class="t " style="top:32.0px;left:474.2px;letter-spacing:0.29px;">Modifier</div>
<svg style="left:533.5px;top:37.0px" width="8" height="5.2" viewBox="-1 -1 8 5.2"><path d="M0 0 L3.0 3.2 L6 0" fill="none" stroke="#e6e6e6" stroke-width="1.2" stroke-linecap="round" stroke-linejoin="round"/></svg>
<div class="t " style="top:32.0px;left:557.0px;">View</div>
<div class="t " style="top:32.0px;left:598.0px;">Select</div>
<div class="t " style="top:32.0px;left:645.0px;">Add</div>
<div class="t " style="top:32.0px;left:682.0px;">Node</div>
<div style="left:418.0px;top:62.0px;width:9.5px;height:22.0px;background:rgba(40,40,40,.7);border-radius:5px"></div>
<svg style="left:421.6px;top:69.0px" width="5.2" height="8" viewBox="-1 -1 5.2 8"><path d="M0 0 L3.2 3.0 L0 6" fill="none" stroke="#b0b0b0" stroke-width="1.2" stroke-linecap="round" stroke-linejoin="round"/></svg>
<svg style="left:440.0px;top:66.0px" width="14" height="14" viewBox="0 0 14 14"><path d="M1 4.5V1H4.5M9.5 1H13V4.5M13 9.5V13H9.5M4.5 13H1V9.5" fill="none" stroke="#e6e6e6" stroke-width="1.1"/><rect x="3.6" y="3.6" width="6.8" height="6.8" fill="#e6e6e6"/></svg>
<div class="t " style="top:65.6px;left:463.0px;">Cube</div>
<svg style="left:506.9px;top:67.8px" width="6.2" height="10" viewBox="-1 -1 6.2 10"><path d="M0 0 L4.2 4.0 L0 8" fill="none" stroke="#c0c0c0" stroke-width="1.2" stroke-linecap="round" stroke-linejoin="round"/></svg>
<svg style="left:523.0px;top:65.5px" width="15" height="15" viewBox="0 0 15 15"><circle cx="3" cy="2.6" r="1.5" fill="#9a9a9a"/><circle cx="7" cy="3.4" r="1.7" fill="#9a9a9a"/><circle cx="4.6" cy="7.2" r="2.2" fill="#b4b4b4"/><circle cx="10.4" cy="10.6" r="3.4" fill="#e6e6e6"/></svg>
<div class="t " style="top:65.6px;left:546.0px;letter-spacing:0.25px;">Smooth by Angle.001</div>
<svg style="left:678.4px;top:67.8px" width="6.2" height="10" viewBox="-1 -1 6.2 10"><path d="M0 0 L4.2 4.0 L0 8" fill="none" stroke="#c0c0c0" stroke-width="1.2" stroke-linecap="round" stroke-linejoin="round"/></svg>
<svg style="left:694.0px;top:65.0px" width="17" height="15" viewBox="0 0 17 15"><rect x="1" y="1" width="8.2" height="5" rx="1.4" fill="#e6e6e6"/><rect x="1" y="9" width="8.2" height="5" rx="1.4" fill="#e6e6e6"/><path d="M10.2 3.5H12.2Q13.4 3.5 13.4 5V10Q13.4 11.5 12.2 11.5H10.8M12 10L10.4 11.5L12 13" fill="none" stroke="#e6e6e6" stroke-width="1.1"/></svg>
<div class="t " style="top:70.0px;left:707.5px;color:#d0d0d0;font-size:7.5px;">3</div>
<div class="t " style="top:65.6px;left:717.3px;">Geometry Nodes</div>
<div style="left:870.6px;top:29.5px;width:31.4px;height:19.2px;background:#282828;border:1px solid #3d3d3d;border-radius:4px 0 0 4px"></div>
<svg style="left:875.0px;top:31.5px" width="17" height="15" viewBox="0 0 17 15"><rect x="1" y="1" width="8.2" height="5" rx="1.4" fill="#e6e6e6"/><rect x="1" y="9" width="8.2" height="5" rx="1.4" fill="#e6e6e6"/><path d="M10.2 3.5H12.2Q13.4 3.5 13.4 5V10Q13.4 11.5 12.2 11.5H10.8M12 10L10.4 11.5L12 13" fill="none" stroke="#e6e6e6" stroke-width="1.1"/></svg>
<svg style="left:891.5px;top:37.3px" width="7.6" height="5" viewBox="-1 -1 7.6 5"><path d="M0 0 L2.8 3 L5.6 0" fill="none" stroke="#e6e6e6" stroke-width="1.2" stroke-linecap="round" stroke-linejoin="round"/></svg>
<div style="left:901.7px;top:29.5px;width:103.0px;height:19.2px;background:#1c1c1c;border:1px solid #3d3d3d;border-left:none"></div>
<div class="t " style="top:32.0px;left:909.4px;">Geometry Nodes</div>
<div style="left:1004.5px;top:29.5px;width:23.7px;height:19.2px;background:#545454"></div>
<div class="t " style="top:32.0px;left:916.4px;width:200px;text-align:center;">3</div>
<div style="left:1028.9px;top:29.5px;width:19.2px;height:19.2px;background:#545454"></div>
<svg style="left:1031.3px;top:31.6px" width="15" height="15" viewBox="0 0 15 15"><path d="M7.5 1.2Q10 3 13.2 3V7.5Q13.2 12 7.5 14.2Q1.8 12 1.8 7.5V3Q5 3 7.5 1.2Z" fill="none" stroke="#bdbdbd" stroke-width="1.1" stroke-linejoin="round"/></svg>
<div style="left:1048.8px;top:29.5px;width:19.2px;height:19.2px;background:#545454"></div>
<svg style="left:1051.0px;top:31.6px" width="15" height="15" viewBox="0 0 15 15"><path d="M5 4.5V1.5H10.5L13.5 4.5V11.5H10.5M10.5 1.5V4.5H13.5" fill="none" stroke="#e6e6e6" stroke-width="1.1" stroke-linejoin="round"/><path d="M1.5 4.5H10.5V13.5H1.5Z" fill="none" stroke="#e6e6e6" stroke-width="1.1"/></svg>
<div style="left:1068.7px;top:29.5px;width:19.7px;height:19.2px;background:#545454;border-radius:0 4px 4px 0"></div>
<svg style="left:1073.0px;top:34.0px" width="11" height="11" viewBox="0 0 11 11"><path d="M1.5 1.5L9.5 9.5M9.5 1.5L1.5 9.5" stroke="#e6e6e6" stroke-width="1.2" fill="none"/></svg>
<svg style="left:1095.5px;top:31.0px" width="16" height="16" viewBox="0 0 16 16"><g fill="none" stroke="#b4b4b4" stroke-width="1.1" stroke-linejoin="round" stroke-linecap="round"><path d="M9.6 1.6L14.2 6.2L12.6 6.9L10.4 9.1L10 12L4 6L6.9 5.6L9.1 3.4Z"/><path d="M7 9L1.6 14.4"/></g></svg>
<div style="left:1514.0px;top:29.9px;width:18.2px;height:18.2px;background:#4772b3;border-radius:4px"></div>
<svg style="left:1514px;top:29.9px" width="18.2" height="18.2" viewBox="1514 29.9 18.2 18.2"><g transform="translate(1523.9 38.7) rotate(45)" stroke="#fff" fill="none" stroke-width="2.9"><path d="M-3.6 1.6V0A3.6 3.6 0 0 1 3.6 0V1.6"/><path d="M-3.6 3.1V4.9M3.6 3.1V4.9"/></g><path d="M1516.2 45.8V43.9H1519.4V41.9" fill="none" stroke="#dfe8f5" stroke-width="1"/></svg>
<div style="left:1538.9px;top:29.9px;width:18.4px;height:18.2px;background:#4772b3;border-radius:4px 0 0 4px"></div>
<svg style="left:1540.6px;top:31.3px" width="15" height="15" viewBox="0 0 15 15"><circle cx="9.3" cy="5.8" r="4.3" fill="#fff"/><path d="M5.6 5.2A4.6 4.6 0 1 0 10.6 11.4" fill="none" stroke="#fff" stroke-width="1.2"/><circle cx="8.6" cy="6.4" r="1.2" fill="#4772b3"/></svg>
<div style="left:1557.2px;top:29.9px;width:20.5px;height:18.2px;background:#282828;border:1px solid #3d3d3d;border-left:none;border-radius:0 4px 4px 0"></div>
<svg style="left:1562.9px;top:37.1px" width="8.2" height="5.4" viewBox="-1 -1 8.2 5.4"><path d="M0 0 L3.1 3.4 L6.2 0" fill="none" stroke="#e6e6e6" stroke-width="1.2" stroke-linecap="round" stroke-linejoin="round"/></svg>
<div style="left:1580.2px;top:53.0px;width:3.0px;height:244.6px;background:#353535;border-radius:2px"></div>
<div style="left:1577.5px;top:62.0px;width:10.0px;height:22.0px;background:rgba(40,40,40,.8);border-radius:5px"></div>
<svg style="left:1578.5px;top:68px" width="6" height="9"><path d="M5 0.8L1 4.5L5 8.2" fill="none" stroke="#b0b0b0" stroke-width="1.1"/></svg>
<div style="left:964.0px;top:980.2px;width:612.0px;height:2.8px;background:#353535;border-radius:2px"></div>
<svg style="left:959px;top:562px" width="14" height="21" viewBox="0 0 14 21"><path d="M1 1V16.2L4.6 12.8L7.2 19L9.6 18L7 12H12Z" fill="#fff" stroke="#000" stroke-width="1" stroke-linejoin="round"/></svg>
</body></html>
